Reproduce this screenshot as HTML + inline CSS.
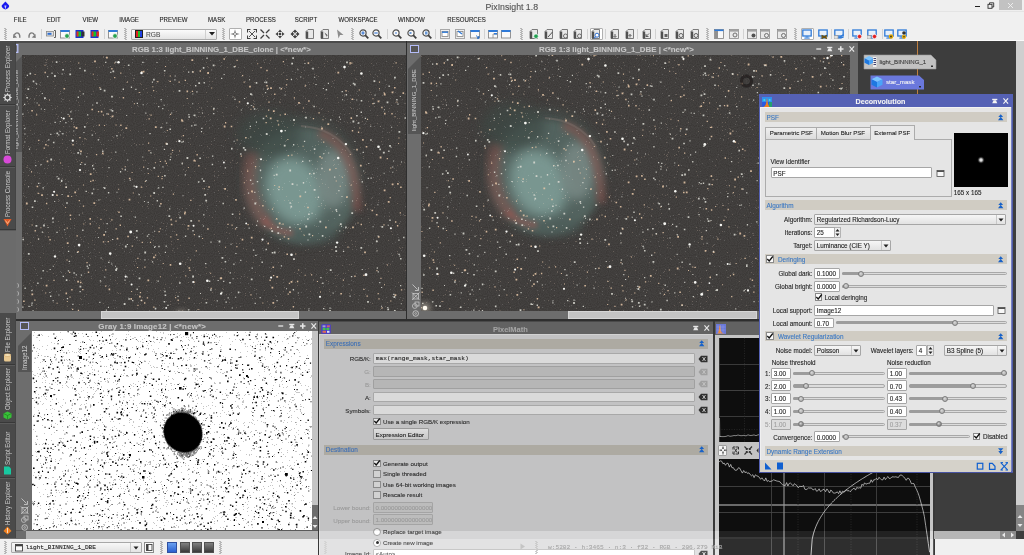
<!DOCTYPE html><html><head><meta charset="utf-8"><style>
*{margin:0;padding:0;box-sizing:border-box}
html,body{width:1024px;height:555px;overflow:hidden}
body{position:relative;background:#3d3d3d;font-family:"Liberation Sans",sans-serif}
.a{position:absolute}
.t{position:absolute;white-space:nowrap;line-height:1;-webkit-text-stroke:0.1px currentColor}
.m{font-family:"Liberation Mono",monospace}
.vt{position:absolute;writing-mode:vertical-rl;transform:rotate(180deg);white-space:nowrap;line-height:1;text-align:left}
svg{position:absolute;display:block;overflow:hidden}
.pl1{background:rgba(255,255,255,0.09)}
.pl2{background:rgba(255,255,255,0.14)}
@supports (mix-blend-mode:plus-lighter){.pl1{background:rgb(20,20,20);mix-blend-mode:plus-lighter}.pl2{background:rgb(32,32,32);mix-blend-mode:plus-lighter}}
</style></head><body><div class="a" style="left:0px;top:0px;width:1024px;height:11px;background:#efefef;"></div><div class="a" style="left:0px;top:11px;width:1024px;height:1px;background:#e4e4e4;"></div><div class="a" style="left:0px;top:12px;width:1024px;height:28px;background:#f0f0f0;"></div><div class="a" style="left:0px;top:40px;width:1024px;height:1px;background:#fcfcfc;"></div><svg style="left:1px;top:1px;" width="10" height="10" viewBox="0 0 10 10"><path d="M4.4 0.6L7.9 4.2C8.6 5.2 7.8 7.2 4.4 8.6C1 7.2 0.2 5.2 0.9 4.2Z" fill="#1a1af0"/><path d="M3.3 4.6H5.5L4.4 8.4Z" fill="#c8ccf8"/></svg><div class="t" style="left:485.5px;top:2.80px;font-size:8.75px;color:#505050;">PixInsight 1.8</div><div class="a" style="left:974.5px;top:5.5px;width:5px;height:1px;background:#202020;"></div><svg style="left:987px;top:2px;" width="8" height="7" viewBox="0 0 8 7"><rect x="1" y="2.3" width="4" height="4" fill="none" stroke="#303030" stroke-width="0.9"/><path d="M2.5 2.3V0.8H6.7V5H5" fill="none" stroke="#303030" stroke-width="0.9"/></svg><div class="a" style="left:999px;top:0px;width:23px;height:10px;background:#c2c2c2;"></div><svg style="left:1007px;top:2px;" width="7" height="7" viewBox="0 0 7 7"><path d="M1 1L6 6M6 1L1 6" stroke="#f0f0f0" stroke-width="0.9"/></svg><div class="t" style="left:13.8px;top:16.70px;font-size:6.1px;color:#262626;transform:scaleY(1.15);transform-origin:0 75%">FILE</div><div class="t" style="left:46.8px;top:16.70px;font-size:6.1px;color:#262626;transform:scaleY(1.15);transform-origin:0 75%">EDIT</div><div class="t" style="left:82.5px;top:16.70px;font-size:6.1px;color:#262626;transform:scaleY(1.15);transform-origin:0 75%">VIEW</div><div class="t" style="left:119.3px;top:16.70px;font-size:6.1px;color:#262626;transform:scaleY(1.15);transform-origin:0 75%">IMAGE</div><div class="t" style="left:159.5px;top:16.70px;font-size:6.1px;color:#262626;transform:scaleY(1.15);transform-origin:0 75%">PREVIEW</div><div class="t" style="left:208px;top:16.70px;font-size:6.1px;color:#262626;transform:scaleY(1.15);transform-origin:0 75%">MASK</div><div class="t" style="left:246px;top:16.70px;font-size:6.1px;color:#262626;transform:scaleY(1.15);transform-origin:0 75%">PROCESS</div><div class="t" style="left:294.8px;top:16.70px;font-size:6.1px;color:#262626;transform:scaleY(1.15);transform-origin:0 75%">SCRIPT</div><div class="t" style="left:338.5px;top:16.70px;font-size:6.1px;color:#262626;transform:scaleY(1.15);transform-origin:0 75%">WORKSPACE</div><div class="t" style="left:398px;top:16.70px;font-size:6.1px;color:#262626;transform:scaleY(1.15);transform-origin:0 75%">WINDOW</div><div class="t" style="left:447.3px;top:16.70px;font-size:6.1px;color:#262626;transform:scaleY(1.15);transform-origin:0 75%">RESOURCES</div><svg style="left:3.5px;top:28px;" width="3" height="12" viewBox="0 0 3 12"><rect x="0" y="0" width="2" height="1" fill="#b8b8b8"/><rect x="1" y="1" width="2" height="1" fill="#b8b8b8"/><rect x="0" y="2" width="2" height="1" fill="#b8b8b8"/><rect x="1" y="3" width="2" height="1" fill="#b8b8b8"/><rect x="0" y="4" width="2" height="1" fill="#b8b8b8"/><rect x="1" y="5" width="2" height="1" fill="#b8b8b8"/><rect x="0" y="6" width="2" height="1" fill="#b8b8b8"/><rect x="1" y="7" width="2" height="1" fill="#b8b8b8"/><rect x="0" y="8" width="2" height="1" fill="#b8b8b8"/><rect x="1" y="9" width="2" height="1" fill="#b8b8b8"/><rect x="0" y="10" width="2" height="1" fill="#b8b8b8"/><rect x="1" y="11" width="2" height="1" fill="#b8b8b8"/></svg><svg style="left:124.0px;top:28px;" width="3" height="12" viewBox="0 0 3 12"><rect x="0" y="0" width="2" height="1" fill="#b8b8b8"/><rect x="1" y="1" width="2" height="1" fill="#b8b8b8"/><rect x="0" y="2" width="2" height="1" fill="#b8b8b8"/><rect x="1" y="3" width="2" height="1" fill="#b8b8b8"/><rect x="0" y="4" width="2" height="1" fill="#b8b8b8"/><rect x="1" y="5" width="2" height="1" fill="#b8b8b8"/><rect x="0" y="6" width="2" height="1" fill="#b8b8b8"/><rect x="1" y="7" width="2" height="1" fill="#b8b8b8"/><rect x="0" y="8" width="2" height="1" fill="#b8b8b8"/><rect x="1" y="9" width="2" height="1" fill="#b8b8b8"/><rect x="0" y="10" width="2" height="1" fill="#b8b8b8"/><rect x="1" y="11" width="2" height="1" fill="#b8b8b8"/></svg><svg style="left:221.5px;top:28px;" width="3" height="12" viewBox="0 0 3 12"><rect x="0" y="0" width="2" height="1" fill="#b8b8b8"/><rect x="1" y="1" width="2" height="1" fill="#b8b8b8"/><rect x="0" y="2" width="2" height="1" fill="#b8b8b8"/><rect x="1" y="3" width="2" height="1" fill="#b8b8b8"/><rect x="0" y="4" width="2" height="1" fill="#b8b8b8"/><rect x="1" y="5" width="2" height="1" fill="#b8b8b8"/><rect x="0" y="6" width="2" height="1" fill="#b8b8b8"/><rect x="1" y="7" width="2" height="1" fill="#b8b8b8"/><rect x="0" y="8" width="2" height="1" fill="#b8b8b8"/><rect x="1" y="9" width="2" height="1" fill="#b8b8b8"/><rect x="0" y="10" width="2" height="1" fill="#b8b8b8"/><rect x="1" y="11" width="2" height="1" fill="#b8b8b8"/></svg><svg style="left:350.5px;top:28px;" width="3" height="12" viewBox="0 0 3 12"><rect x="0" y="0" width="2" height="1" fill="#b8b8b8"/><rect x="1" y="1" width="2" height="1" fill="#b8b8b8"/><rect x="0" y="2" width="2" height="1" fill="#b8b8b8"/><rect x="1" y="3" width="2" height="1" fill="#b8b8b8"/><rect x="0" y="4" width="2" height="1" fill="#b8b8b8"/><rect x="1" y="5" width="2" height="1" fill="#b8b8b8"/><rect x="0" y="6" width="2" height="1" fill="#b8b8b8"/><rect x="1" y="7" width="2" height="1" fill="#b8b8b8"/><rect x="0" y="8" width="2" height="1" fill="#b8b8b8"/><rect x="1" y="9" width="2" height="1" fill="#b8b8b8"/><rect x="0" y="10" width="2" height="1" fill="#b8b8b8"/><rect x="1" y="11" width="2" height="1" fill="#b8b8b8"/></svg><svg style="left:519.5px;top:28px;" width="3" height="12" viewBox="0 0 3 12"><rect x="0" y="0" width="2" height="1" fill="#b8b8b8"/><rect x="1" y="1" width="2" height="1" fill="#b8b8b8"/><rect x="0" y="2" width="2" height="1" fill="#b8b8b8"/><rect x="1" y="3" width="2" height="1" fill="#b8b8b8"/><rect x="0" y="4" width="2" height="1" fill="#b8b8b8"/><rect x="1" y="5" width="2" height="1" fill="#b8b8b8"/><rect x="0" y="6" width="2" height="1" fill="#b8b8b8"/><rect x="1" y="7" width="2" height="1" fill="#b8b8b8"/><rect x="0" y="8" width="2" height="1" fill="#b8b8b8"/><rect x="1" y="9" width="2" height="1" fill="#b8b8b8"/><rect x="0" y="10" width="2" height="1" fill="#b8b8b8"/><rect x="1" y="11" width="2" height="1" fill="#b8b8b8"/></svg><svg style="left:705.5px;top:28px;" width="3" height="12" viewBox="0 0 3 12"><rect x="0" y="0" width="2" height="1" fill="#b8b8b8"/><rect x="1" y="1" width="2" height="1" fill="#b8b8b8"/><rect x="0" y="2" width="2" height="1" fill="#b8b8b8"/><rect x="1" y="3" width="2" height="1" fill="#b8b8b8"/><rect x="0" y="4" width="2" height="1" fill="#b8b8b8"/><rect x="1" y="5" width="2" height="1" fill="#b8b8b8"/><rect x="0" y="6" width="2" height="1" fill="#b8b8b8"/><rect x="1" y="7" width="2" height="1" fill="#b8b8b8"/><rect x="0" y="8" width="2" height="1" fill="#b8b8b8"/><rect x="1" y="9" width="2" height="1" fill="#b8b8b8"/><rect x="0" y="10" width="2" height="1" fill="#b8b8b8"/><rect x="1" y="11" width="2" height="1" fill="#b8b8b8"/></svg><svg style="left:793.5px;top:28px;" width="3" height="12" viewBox="0 0 3 12"><rect x="0" y="0" width="2" height="1" fill="#b8b8b8"/><rect x="1" y="1" width="2" height="1" fill="#b8b8b8"/><rect x="0" y="2" width="2" height="1" fill="#b8b8b8"/><rect x="1" y="3" width="2" height="1" fill="#b8b8b8"/><rect x="0" y="4" width="2" height="1" fill="#b8b8b8"/><rect x="1" y="5" width="2" height="1" fill="#b8b8b8"/><rect x="0" y="6" width="2" height="1" fill="#b8b8b8"/><rect x="1" y="7" width="2" height="1" fill="#b8b8b8"/><rect x="0" y="8" width="2" height="1" fill="#b8b8b8"/><rect x="1" y="9" width="2" height="1" fill="#b8b8b8"/><rect x="0" y="10" width="2" height="1" fill="#b8b8b8"/><rect x="1" y="11" width="2" height="1" fill="#b8b8b8"/></svg><div class="a" style="left:40.5px;top:29px;width:1px;height:10px;background:#d2d2d2;"></div><div class="a" style="left:104px;top:29px;width:1px;height:10px;background:#d2d2d2;"></div><div class="a" style="left:387px;top:29px;width:1px;height:10px;background:#d2d2d2;"></div><div class="a" style="left:435px;top:29px;width:1px;height:10px;background:#d2d2d2;"></div><div class="a" style="left:484px;top:29px;width:1px;height:10px;background:#d2d2d2;"></div><div class="a" style="left:587px;top:29px;width:1px;height:10px;background:#d2d2d2;"></div><div class="a" style="left:605px;top:29px;width:1px;height:10px;background:#d2d2d2;"></div><div class="a" style="left:637px;top:29px;width:1px;height:10px;background:#d2d2d2;"></div><div class="a" style="left:655px;top:29px;width:1px;height:10px;background:#d2d2d2;"></div><div class="a" style="left:743px;top:29px;width:1px;height:10px;background:#d2d2d2;"></div><div class="a" style="left:831px;top:29px;width:1px;height:10px;background:#d2d2d2;"></div><div class="a" style="left:848px;top:29px;width:1px;height:10px;background:#d2d2d2;"></div><div class="a" style="left:882px;top:29px;width:1px;height:10px;background:#d2d2d2;"></div><svg style="left:12px;top:29px;" width="10" height="10" viewBox="0 0 10 10"><g transform="translate(0.5 1.2) scale(0.88)"><path d="M8.3 8.6C8.6 4.5 6.8 3 5 3C3.5 3 2.6 4 2.2 5.5" fill="none" stroke="#7a7a7a" stroke-width="1.6"/><path d="M0.6 8.8L0.9 4.3L5.2 8.2Z" fill="#7a7a7a"/></g></svg><svg style="left:27px;top:29px;" width="10" height="10" viewBox="0 0 10 10"><g transform="translate(0.5 1.2) scale(0.88)"><path d="M1.7 8.6C1.4 4.5 3.2 3 5 3C6.5 3 7.4 4 7.8 5.5" fill="none" stroke="#7a7a7a" stroke-width="1.6"/><path d="M9.4 8.8L9.1 4.3L4.8 8.2Z" fill="#7a7a7a"/></g></svg><svg style="left:46px;top:29px;" width="10" height="10" viewBox="0 0 10 10"><rect x="0.5" y="2.5" width="7" height="4.5" fill="#e0e0e0" stroke="#8a8a8a" stroke-width="0.8"/><rect x="1.5" y="3.8" width="4" height="2" fill="#2f6fd0"/><path d="M8 1.5H9.5V8.5H8" fill="none" stroke="#606060"/></svg><svg style="left:60px;top:29px;" width="10" height="10" viewBox="0 0 10 10"><rect x="0.5" y="1.5" width="9" height="7.5" fill="#fafafa" stroke="#8a8a8a" stroke-width="0.9"/><rect x="0.5" y="1" width="9" height="2" fill="#2f7ad8"/><circle cx="7" cy="7" r="2.4" fill="#2aa050" stroke="#fff" stroke-width="0.8"/></svg><svg style="left:75px;top:29px;" width="10" height="10" viewBox="0 0 10 10"><rect x="0.5" y="1" width="8" height="8" fill="#1a30d0"/><rect x="2" y="2.5" width="4" height="5" fill="#10c030"/><rect x="1.5" y="2.5" width="2" height="5" fill="#e03020"/><rect x="6.5" y="2.5" width="3" height="5" fill="#303030"/></svg><svg style="left:90px;top:29px;" width="10" height="10" viewBox="0 0 10 10"><rect x="0.5" y="1" width="8" height="8" fill="#1a30d0"/><rect x="2" y="2.5" width="4" height="5" fill="#10c030"/><rect x="1.5" y="2.5" width="2" height="5" fill="#e03020"/><rect x="6.5" y="2.5" width="2.5" height="5" fill="#e03020"/></svg><svg style="left:108px;top:29px;" width="10" height="10" viewBox="0 0 10 10"><rect x="0.5" y="1.5" width="9" height="7.5" fill="#fafafa" stroke="#8a8a8a" stroke-width="0.9"/><rect x="0.5" y="1" width="9" height="2" fill="#2f7ad8"/><circle cx="7" cy="7" r="2.4" fill="#2aa050" stroke="#fff" stroke-width="0.8"/></svg><div class="a" style="left:228.5px;top:28px;width:13px;height:12px;background:#ffffff;border:1px solid #b0b0b0;border-radius:1px"></div><svg style="left:230px;top:29px;" width="10" height="10" viewBox="0 0 10 10"><path d="M5 0.3L5.7 4.3L9.7 5L5.7 5.7L5 9.7L4.3 5.7L0.3 5L4.3 4.3Z" fill="#383838"/><circle cx="5" cy="5" r="1" fill="#fff"/></svg><svg style="left:247px;top:29px;" width="10" height="10" viewBox="0 0 10 10"><path d="M0.5 3.5V0.5H3.5M6.5 0.5H9.5V3.5M9.5 6.5V9.5H6.5M3.5 9.5H0.5V6.5" fill="none" stroke="#404040" stroke-width="1.1"/><path d="M2 2L8 8M8 2L2 8" stroke="#404040" stroke-width="0.9"/></svg><svg style="left:260px;top:29px;" width="10" height="10" viewBox="0 0 10 10"><path d="M0.5 0.5L4 4M9.5 0.5L6 4M0.5 9.5L4 6M9.5 9.5L6 6" stroke="#404040" stroke-width="1.3"/></svg><svg style="left:275px;top:29px;" width="10" height="10" viewBox="0 0 10 10"><path d="M5 0.5L7 3H3ZM5 9.5L7 7H3ZM0.5 5L3 3V7ZM9.5 5L7 3V7Z" fill="#404040"/><rect x="3.8" y="3.8" width="2.4" height="2.4" fill="#404040"/></svg><svg style="left:290px;top:29px;" width="10" height="10" viewBox="0 0 10 10"><path d="M5 0.5L7.5 3H2.5ZM5 9.5L7.5 7H2.5ZM0.5 5L3 2.5V7.5ZM9.5 5L7 2.5V7.5Z" fill="#404040"/><circle cx="5" cy="5" r="1.5" fill="#fff" stroke="#404040" stroke-width="0.8"/></svg><svg style="left:305px;top:29px;" width="10" height="10" viewBox="0 0 10 10"><path d="M1 2.5L3 0.5H8.5V9.5H1Z" fill="#e8e8e8" stroke="#6e6e6e" stroke-width="0.9"/><rect x="1" y="2.5" width="2.2" height="7" fill="#505050"/></svg><svg style="left:320px;top:29px;" width="10" height="10" viewBox="0 0 10 10"><path d="M1 2.5L3 0.5H8.5V9.5H1Z" fill="#e8e8e8" stroke="#6e6e6e" stroke-width="0.9"/><rect x="1" y="2.5" width="2.2" height="7" fill="#505050"/><path d="M4.5 3.5L8 6.5H6.5L7 8.5" fill="#505050"/></svg><svg style="left:335px;top:29px;" width="10" height="10" viewBox="0 0 10 10"><path d="M2 0.5L8.5 6H5L3.5 9.5Z" fill="#8c8c8c"/></svg><svg style="left:359px;top:29px;" width="10" height="10" viewBox="0 0 10 10"><circle cx="4" cy="4" r="3.1" fill="#fafafa" stroke="#505050" stroke-width="1.2"/><path d="M6.2 6.2L9.3 9.3" stroke="#404040" stroke-width="1.8"/><path d="M2.3 4H5.7M4 2.3V5.7" stroke="#2f6fd0" stroke-width="1.1"/></svg><svg style="left:372px;top:29px;" width="10" height="10" viewBox="0 0 10 10"><circle cx="4" cy="4" r="3.1" fill="#fafafa" stroke="#505050" stroke-width="1.2"/><path d="M6.2 6.2L9.3 9.3" stroke="#404040" stroke-width="1.8"/><path d="M2.3 4H5.7" stroke="#2f6fd0" stroke-width="1.1"/></svg><svg style="left:392px;top:29px;" width="10" height="10" viewBox="0 0 10 10"><circle cx="4" cy="4" r="3.1" fill="#fafafa" stroke="#505050" stroke-width="1.2"/><path d="M6.2 6.2L9.3 9.3" stroke="#404040" stroke-width="1.8"/><circle cx="4" cy="4" r="0.8" fill="#2f6fd0"/></svg><svg style="left:407px;top:29px;" width="10" height="10" viewBox="0 0 10 10"><circle cx="4" cy="4" r="3.1" fill="#fafafa" stroke="#505050" stroke-width="1.2"/><path d="M6.2 6.2L9.3 9.3" stroke="#404040" stroke-width="1.8"/><rect x="2.5" y="3" width="2" height="2" fill="#6a9ad8"/></svg><svg style="left:422px;top:29px;" width="10" height="10" viewBox="0 0 10 10"><circle cx="4" cy="4" r="3.1" fill="#fafafa" stroke="#505050" stroke-width="1.2"/><path d="M6.2 6.2L9.3 9.3" stroke="#404040" stroke-width="1.8"/><rect x="3" y="2.5" width="2.5" height="3" fill="#6a9ad8"/></svg><svg style="left:440px;top:29px;" width="10" height="10" viewBox="0 0 10 10"><rect x="0.5" y="0.5" width="9" height="9" fill="none" stroke="#606060" stroke-dasharray="1 1"/><rect x="2" y="2.5" width="6" height="5" fill="#fff" stroke="#808080" stroke-width="0.8"/><rect x="2" y="2.5" width="6" height="1.4" fill="#2f7ad8"/></svg><svg style="left:455px;top:29px;" width="10" height="10" viewBox="0 0 10 10"><rect x="0.5" y="0.5" width="9" height="9" fill="none" stroke="#606060" stroke-dasharray="1 1"/><rect x="2" y="2.5" width="6" height="5" fill="#fff" stroke="#808080" stroke-width="0.8"/><path d="M3 2L7 5" stroke="#2f7ad8" stroke-width="1.3"/></svg><svg style="left:470px;top:29px;" width="10" height="10" viewBox="0 0 10 10"><rect x="0.5" y="1.5" width="9" height="7.5" fill="#fafafa" stroke="#8a8a8a" stroke-width="0.9"/><rect x="0.5" y="1" width="9" height="2" fill="#2f7ad8"/><path d="M6 6.5L9 9.2M9 7V9.2H7" stroke="#2f7ad8" stroke-width="1"/></svg><svg style="left:488px;top:29px;" width="10" height="10" viewBox="0 0 10 10"><rect x="0.5" y="1.5" width="9" height="7.5" fill="#fafafa" stroke="#8a8a8a" stroke-width="0.9"/><rect x="0.5" y="1" width="9" height="2" fill="#2f7ad8"/><path d="M5 5V9M5 5H9.5" stroke="#8a8a8a" stroke-width="0.8"/><rect x="6" y="4" width="3" height="1.5" fill="#2f7ad8"/></svg><svg style="left:501px;top:29px;" width="10" height="10" viewBox="0 0 10 10"><rect x="0.5" y="1.5" width="9" height="7.5" fill="#fafafa" stroke="#8a8a8a" stroke-width="0.9"/><rect x="0.5" y="1" width="9" height="2" fill="#2f7ad8"/></svg><svg style="left:529px;top:29px;" width="10" height="10" viewBox="0 0 10 10"><path d="M1 2.5L3 0.5H8.5V9.5H1Z" fill="#e8e8e8" stroke="#6e6e6e" stroke-width="0.9"/><rect x="1" y="2.5" width="2.2" height="7" fill="#505050"/><circle cx="7" cy="7.2" r="2.3" fill="#20a050" stroke="#fff" stroke-width="0.7"/></svg><svg style="left:544px;top:29px;" width="10" height="10" viewBox="0 0 10 10"><path d="M1 2.5L3 0.5H8.5V9.5H1Z" fill="#e8e8e8" stroke="#6e6e6e" stroke-width="0.9"/><rect x="1" y="2.5" width="2.2" height="7" fill="#505050"/><path d="M4 8L8.5 3" stroke="#505050" stroke-width="1"/></svg><svg style="left:559px;top:29px;" width="10" height="10" viewBox="0 0 10 10"><path d="M1 2.5L3 0.5H8.5V9.5H1Z" fill="#e8e8e8" stroke="#6e6e6e" stroke-width="0.9"/><rect x="1" y="2.5" width="2.2" height="7" fill="#505050"/><circle cx="6.5" cy="7" r="2" fill="#e8e8e8" stroke="#606060" stroke-width="0.9"/></svg><svg style="left:573px;top:29px;" width="10" height="10" viewBox="0 0 10 10"><path d="M1 2.5L3 0.5H8.5V9.5H1Z" fill="#e8e8e8" stroke="#6e6e6e" stroke-width="0.9"/><rect x="1" y="2.5" width="2.2" height="7" fill="#505050"/><circle cx="6.5" cy="7" r="2" fill="#e8e8e8" stroke="#606060" stroke-width="0.9"/></svg><svg style="left:610px;top:29px;" width="10" height="10" viewBox="0 0 10 10"><path d="M1 2.5L3 0.5H8.5V9.5H1Z" fill="#e8e8e8" stroke="#6e6e6e" stroke-width="0.9"/><rect x="1" y="2.5" width="2.2" height="7" fill="#505050"/><path d="M5 5V8M3.5 7L5 8.5L6.5 7" stroke="#505050" stroke-width="0.9" fill="none"/></svg><svg style="left:625px;top:29px;" width="10" height="10" viewBox="0 0 10 10"><path d="M1 2.5L3 0.5H8.5V9.5H1Z" fill="#e8e8e8" stroke="#6e6e6e" stroke-width="0.9"/><rect x="1" y="2.5" width="2.2" height="7" fill="#505050"/><path d="M5 8.5V5.5M3.5 7L5 5.5L6.5 7" stroke="#505050" stroke-width="0.9" fill="none"/></svg><svg style="left:642px;top:29px;" width="10" height="10" viewBox="0 0 10 10"><path d="M1 2.5L3 0.5H8.5V9.5H1Z" fill="#e8e8e8" stroke="#6e6e6e" stroke-width="0.9"/><rect x="1" y="2.5" width="2.2" height="7" fill="#505050"/><path d="M4 7.5L7 4.5M4 5V7.5H6.5" stroke="#505050" stroke-width="0.9" fill="none"/></svg><svg style="left:660px;top:29px;" width="10" height="10" viewBox="0 0 10 10"><path d="M1 2.5L3 0.5H8.5V9.5H1Z" fill="#e8e8e8" stroke="#6e6e6e" stroke-width="0.9"/><rect x="1" y="2.5" width="2.2" height="7" fill="#505050"/><rect x="4.5" y="5" width="3" height="3" fill="#606060"/></svg><svg style="left:675px;top:29px;" width="10" height="10" viewBox="0 0 10 10"><path d="M1 2.5L3 0.5H8.5V9.5H1Z" fill="#e8e8e8" stroke="#6e6e6e" stroke-width="0.9"/><rect x="1" y="2.5" width="2.2" height="7" fill="#505050"/><circle cx="6" cy="6.5" r="2" fill="none" stroke="#606060" stroke-width="1"/></svg><svg style="left:690px;top:29px;" width="10" height="10" viewBox="0 0 10 10"><path d="M1 2.5L3 0.5H8.5V9.5H1Z" fill="#e8e8e8" stroke="#6e6e6e" stroke-width="0.9"/><rect x="1" y="2.5" width="2.2" height="7" fill="#505050"/><circle cx="6" cy="6.5" r="2" fill="none" stroke="#606060" stroke-width="1"/></svg><svg style="left:714px;top:29px;" width="10" height="10" viewBox="0 0 10 10"><rect x="0.5" y="0.5" width="9" height="9" fill="#f8f8f8" stroke="#808080" stroke-width="0.8"/><rect x="0.5" y="0.5" width="9" height="1.6" fill="#2f7ad8"/><rect x="1" y="2" width="3" height="7.5" fill="#909090"/></svg><svg style="left:729px;top:29px;" width="10" height="10" viewBox="0 0 10 10"><rect x="0.5" y="0.5" width="9" height="9" fill="#e8e8e8" stroke="#8a8a8a" stroke-width="0.8"/><rect x="1" y="1" width="8" height="1.6" fill="#a0a0a0"/><circle cx="6" cy="6" r="2" fill="none" stroke="#707070"/></svg><svg style="left:747px;top:29px;" width="10" height="10" viewBox="0 0 10 10"><rect x="0.5" y="0.5" width="9" height="9" fill="#e8e8e8" stroke="#8a8a8a" stroke-width="0.8"/><rect x="1" y="1" width="8" height="1.6" fill="#a0a0a0"/><circle cx="6.5" cy="6.5" r="2" fill="#505050"/></svg><svg style="left:760px;top:29px;" width="10" height="10" viewBox="0 0 10 10"><rect x="0.5" y="0.5" width="9" height="9" fill="#e8e8e8" stroke="#8a8a8a" stroke-width="0.8"/><rect x="1" y="1" width="8" height="1.6" fill="#a0a0a0"/><circle cx="6.5" cy="6.5" r="2" fill="none" stroke="#707070"/></svg><svg style="left:777px;top:29px;" width="10" height="10" viewBox="0 0 10 10"><rect x="0.5" y="0.5" width="9" height="9" fill="#e8e8e8" stroke="#8a8a8a" stroke-width="0.8"/><rect x="1" y="1" width="8" height="1.6" fill="#a0a0a0"/><circle cx="6.5" cy="6.5" r="2" fill="none" stroke="#707070"/></svg><div class="a" style="left:800.5px;top:28px;width:13px;height:12px;background:#ffffff;border:1px solid #b0b0b0;border-radius:1px"></div><svg style="left:802px;top:29px;" width="10" height="10" viewBox="0 0 10 10"><rect x="0.8" y="1" width="8.4" height="6" fill="#e8f0fa" stroke="#2f7ad8" stroke-width="1.3"/><rect x="3.5" y="7.5" width="3" height="1" fill="#2f7ad8"/><rect x="2.3" y="8.6" width="5.4" height="1" fill="#2f7ad8"/></svg><svg style="left:818px;top:29px;" width="10" height="10" viewBox="0 0 10 10"><rect x="0.8" y="1" width="8.4" height="6" fill="#e8f0fa" stroke="#2f7ad8" stroke-width="1.3"/><rect x="3.5" y="7.5" width="3" height="1" fill="#2f7ad8"/><rect x="2.3" y="8.6" width="5.4" height="1" fill="#2f7ad8"/><path d="M3.5 6.5L9 9.5M9 6.5L3.5 9.5" stroke="#6a5010" stroke-width="1.5"/></svg><svg style="left:834px;top:29px;" width="10" height="10" viewBox="0 0 10 10"><rect x="0.8" y="1" width="8.4" height="6" fill="#e8f0fa" stroke="#2f7ad8" stroke-width="1.3"/><rect x="3.5" y="7.5" width="3" height="1" fill="#2f7ad8"/><rect x="2.3" y="8.6" width="5.4" height="1" fill="#2f7ad8"/><rect x="0" y="6.5" width="4" height="3.5" fill="#e0e0e0" stroke="#909090" stroke-width="0.6"/><path d="M9.5 5.5L5.5 8.5H9.5" fill="none" stroke="#2f7ad8" stroke-width="1.1"/></svg><svg style="left:852px;top:29px;" width="10" height="10" viewBox="0 0 10 10"><rect x="0.8" y="1" width="8.4" height="6" fill="#e8f0fa" stroke="#2f7ad8" stroke-width="1.3"/><rect x="3.5" y="7.5" width="3" height="1" fill="#2f7ad8"/><rect x="2.3" y="8.6" width="5.4" height="1" fill="#2f7ad8"/><circle cx="7.5" cy="7.5" r="2.2" fill="#e02020" stroke="#fff" stroke-width="0.8"/></svg><svg style="left:867px;top:29px;" width="10" height="10" viewBox="0 0 10 10"><rect x="0.8" y="1" width="8.4" height="6" fill="#e8f0fa" stroke="#2f7ad8" stroke-width="1.3"/><rect x="3.5" y="7.5" width="3" height="1" fill="#2f7ad8"/><rect x="2.3" y="8.6" width="5.4" height="1" fill="#2f7ad8"/><rect x="0" y="6.5" width="4" height="3.5" fill="#e0e0e0" stroke="#909090" stroke-width="0.6"/><circle cx="7.5" cy="7.5" r="2.2" fill="#e02020" stroke="#fff" stroke-width="0.8"/></svg><svg style="left:884px;top:29px;" width="10" height="10" viewBox="0 0 10 10"><rect x="0.8" y="1" width="8.4" height="6" fill="#e8f0fa" stroke="#2f7ad8" stroke-width="1.3"/><rect x="3.5" y="7.5" width="3" height="1" fill="#2f7ad8"/><rect x="2.3" y="8.6" width="5.4" height="1" fill="#2f7ad8"/><circle cx="7" cy="7.5" r="2.3" fill="#f0b000"/><circle cx="7" cy="7.5" r="0.9" fill="#303030"/></svg><svg style="left:897px;top:29px;" width="10" height="10" viewBox="0 0 10 10"><rect x="0.8" y="1" width="8.4" height="6" fill="#e8f0fa" stroke="#2f7ad8" stroke-width="1.3"/><rect x="3.5" y="7.5" width="3" height="1" fill="#2f7ad8"/><rect x="2.3" y="8.6" width="5.4" height="1" fill="#2f7ad8"/><circle cx="7" cy="4" r="1.8" fill="#303030"/><circle cx="7" cy="7.8" r="2.1" fill="#f0b000"/><circle cx="7" cy="7.8" r="0.8" fill="#303030"/></svg><div class="a" style="left:589.5px;top:28px;width:13px;height:12px;background:#ffffff;border:1px solid #b0b0b0;border-radius:1px"></div><svg style="left:591px;top:29px;" width="10" height="10" viewBox="0 0 10 10"><path d="M1 2.5L3 0.5H8.5V9.5H1Z" fill="#e8e8e8" stroke="#6e6e6e" stroke-width="0.9"/><rect x="1" y="2.5" width="2.2" height="7" fill="#505050"/><circle cx="6" cy="6.2" r="2" fill="#fff" stroke="#2f6fd0" stroke-width="1"/><path d="M4.5 7.8L3 9.3" stroke="#2f6fd0" stroke-width="1.1"/></svg><div class="a" style="left:131px;top:28.5px;width:86px;height:11px;background:linear-gradient(#fbfbfb,#e4e4e4);border:1px solid #acacac;border-radius:1px"></div><div class="a" style="left:205px;top:29.5px;width:1px;height:9px;background:#d0d0d0;"></div><svg style="left:209px;top:32px;" width="6" height="4" viewBox="0 0 6 4"><path d="M0 0H6L3 3.5Z" fill="#202020"/></svg><svg style="left:135px;top:30px;" width="8" height="8" viewBox="0 0 8 8"><rect x="0" y="0" width="8" height="8" fill="#202020"/><rect x="1" y="1" width="2" height="6" fill="#e02020"/><rect x="3" y="1" width="2" height="6" fill="#20c020"/><rect x="5" y="1" width="2" height="6" fill="#2040e0"/></svg><div class="t" style="left:146px;top:31.60px;font-size:6.6px;color:#505050;">RGB</div><div class="a" style="left:16px;top:531px;width:1000px;height:8px;background:#b4b4b4;"></div><div class="a" style="left:0px;top:539px;width:1024px;height:16px;background:#f0f0f0;"></div><div class="a" style="left:1016px;top:41px;width:8px;height:464px;background:#cfcfcf;"></div><div class="a" style="left:1016px;top:505px;width:8px;height:26px;background:#858585;"></div><div class="a" style="left:1000px;top:531px;width:16px;height:8px;background:#8a8a8a;"></div><div class="a" style="left:0px;top:41px;width:16px;height:498px;background:#6b6b6b;"></div><div class="a" style="left:0px;top:41px;width:16px;height:188px;background:#4a4a4a;"></div><div class="a" style="left:0px;top:313px;width:16px;height:225px;background:#4a4a4a;"></div><div class="a" style="left:0px;top:104px;width:16px;height:1px;background:#383838;"></div><div class="a" style="left:0px;top:105px;width:16px;height:1px;background:#5a5a5a;"></div><div class="a" style="left:0px;top:166px;width:16px;height:1px;background:#383838;"></div><div class="a" style="left:0px;top:167px;width:16px;height:1px;background:#5a5a5a;"></div><div class="a" style="left:0px;top:229px;width:16px;height:1px;background:#383838;"></div><div class="a" style="left:0px;top:230px;width:16px;height:1px;background:#5a5a5a;"></div><div class="a" style="left:0px;top:364px;width:16px;height:1px;background:#383838;"></div><div class="a" style="left:0px;top:365px;width:16px;height:1px;background:#5a5a5a;"></div><div class="a" style="left:0px;top:422px;width:16px;height:1px;background:#383838;"></div><div class="a" style="left:0px;top:423px;width:16px;height:1px;background:#5a5a5a;"></div><div class="a" style="left:0px;top:477px;width:16px;height:1px;background:#383838;"></div><div class="a" style="left:0px;top:478px;width:16px;height:1px;background:#5a5a5a;"></div><div class="a" style="left:15px;top:41px;width:1px;height:188px;background:#444444;"></div><div class="a" style="left:15px;top:313px;width:1px;height:225px;background:#444444;"></div><div class="vt" style="left:5.0px;top:-108.5px;height:200px;font-size:6.1px;color:#cacaca;transform:rotate(180deg) scaleX(1.15)">Process Explorer</div><svg style="left:3px;top:92.5px;" width="9" height="9" viewBox="0 0 9 9"><circle cx="4.5" cy="4.5" r="2.6" fill="none" stroke="#e0e0e0" stroke-width="1.3"/><path d="M4.5 0.3V2M4.5 7V8.7M0.3 4.5H2M7 4.5H8.7M1.5 1.5L2.7 2.7M6.3 6.3L7.5 7.5M7.5 1.5L6.3 2.7M1.5 7.5L2.7 6.3" stroke="#e0e0e0" stroke-width="1.1"/></svg><div class="vt" style="left:5.0px;top:-46.5px;height:200px;font-size:6.1px;color:#cacaca;transform:rotate(180deg) scaleX(1.15)">Format Explorer</div><svg style="left:3px;top:154.5px;" width="9" height="9" viewBox="0 0 9 9"><circle cx="4.5" cy="4.5" r="4" fill="#d84ad8"/></svg><div class="vt" style="left:5.0px;top:16.5px;height:200px;font-size:6.1px;color:#cacaca;transform:rotate(180deg) scaleX(1.15)">Process Console</div><svg style="left:3px;top:217.5px;" width="9" height="9" viewBox="0 0 9 9"><path d="M0.5 1H8.5L4.5 8.5Z" fill="#e05a28"/><path d="M2.5 2.5L4.5 5.5L6.5 2.5" fill="none" stroke="#ffd0a0" stroke-width="0.8"/></svg><div class="vt" style="left:5.0px;top:151.5px;height:200px;font-size:6.1px;color:#cacaca;transform:rotate(180deg) scaleX(1.15)">File Explorer</div><svg style="left:3px;top:352.5px;" width="9" height="9" viewBox="0 0 9 9"><rect x="1" y="1.5" width="7" height="7" rx="1.5" fill="#e8c890"/><ellipse cx="4.5" cy="2" rx="3.5" ry="1.3" fill="#f8e8c0" stroke="#c09050" stroke-width="0.5"/></svg><div class="vt" style="left:5.0px;top:209.5px;height:200px;font-size:6.1px;color:#cacaca;transform:rotate(180deg) scaleX(1.15)">Object Explorer</div><svg style="left:3px;top:410.5px;" width="9" height="9" viewBox="0 0 9 9"><path d="M4.5 0.5L8.5 2.5V6.5L4.5 8.5L0.5 6.5V2.5Z" fill="#38c038"/><path d="M0.5 2.5L4.5 4.5L8.5 2.5M4.5 4.5V8.5" fill="none" stroke="#208020" stroke-width="0.7"/></svg><div class="vt" style="left:5.0px;top:264.5px;height:200px;font-size:6.1px;color:#cacaca;transform:rotate(180deg) scaleX(1.15)">Script Editor</div><svg style="left:3px;top:465.5px;" width="9" height="9" viewBox="0 0 9 9"><path d="M1 0.5H6L8 2.5V8.5H1Z" fill="#18c8a0"/></svg><div class="vt" style="left:5.0px;top:324.5px;height:200px;font-size:6.1px;color:#cacaca;transform:rotate(180deg) scaleX(1.15)">History Explorer</div><svg style="left:3px;top:525.5px;" width="9" height="9" viewBox="0 0 9 9"><path d="M4.5 0.5L8.5 5L4.5 8.5L0.5 5Z" fill="#f08020"/><path d="M4.5 2V7" stroke="#fff" stroke-width="0.7"/></svg><svg width="0" height="0" style="position:absolute"><defs>
<filter id="bl6" x="-50%" y="-50%" width="200%" height="200%"><feGaussianBlur stdDeviation="6"/></filter>
<filter id="bl4" x="-50%" y="-50%" width="200%" height="200%"><feGaussianBlur stdDeviation="4"/></filter>
<filter id="bl5" x="-50%" y="-50%" width="200%" height="200%"><feGaussianBlur stdDeviation="5"/></filter>
<filter id="bl25" x="-50%" y="-50%" width="200%" height="200%"><feGaussianBlur stdDeviation="2.5"/></filter>
<filter id="bl2" x="-50%" y="-50%" width="200%" height="200%"><feGaussianBlur stdDeviation="2"/></filter>
<filter id="bl3" x="-50%" y="-50%" width="200%" height="200%"><feGaussianBlur stdDeviation="3"/></filter>
<filter id="bl10" x="-50%" y="-50%" width="200%" height="200%"><feGaussianBlur stdDeviation="10"/></filter>
<filter id="bl05" x="-50%" y="-50%" width="200%" height="200%"><feGaussianBlur stdDeviation="0.5"/></filter>
<filter id="bl1" x="-50%" y="-50%" width="200%" height="200%"><feGaussianBlur stdDeviation="0.6"/></filter>
<filter id="noise" x="0" y="0" width="100%" height="100%"><feTurbulence type="fractalNoise" baseFrequency="0.9" numOctaves="1" seed="3"/><feColorMatrix type="matrix" values="0 0 0 0 0.2  0 0 0 0 0.2  0 0 0 0 0.2  0 0 0 0.35 0"/></filter>
</defs><g id="sky"><rect x="0" y="0" width="700" height="400" fill="#34312f"/><rect x="0" y="0" width="700" height="400" filter="url(#noise)"/><g id="neb" transform="translate(1 -3)">
<ellipse cx="301" cy="184" rx="60" ry="64" fill="#46524f" opacity="0.6" filter="url(#bl4)"/>
<ellipse cx="302" cy="188" rx="55" ry="57" fill="#53645f" filter="url(#bl3)"/>
<ellipse cx="268" cy="138" rx="32" ry="24" fill="#3e4845" opacity="0.7" filter="url(#bl6)"/>
<ellipse cx="294" cy="194" rx="28" ry="35" fill="#7e9c96" opacity="0.9" filter="url(#bl6)" transform="rotate(-25 294 194)"/>
<ellipse cx="332" cy="182" rx="17" ry="29" fill="#7c8c88" opacity="0.8" filter="url(#bl5)"/>
<ellipse cx="314" cy="238" rx="24" ry="9" fill="#4a5855" opacity="0.5" filter="url(#bl4)"/>
<path d="M252 156 Q240 200 268 228" fill="none" stroke="#8e524e" stroke-width="12" opacity="0.55" filter="url(#bl4)"/>
<path d="M262 222 Q275 236 292 236" fill="none" stroke="#9c5852" stroke-width="6" opacity="0.6" filter="url(#bl25)"/>
<path d="M318 136 Q356 148 356 214" fill="none" stroke="#8e524e" stroke-width="9" opacity="0.55" filter="url(#bl3)"/>
<path d="M300 129 Q334 131 351 158" fill="none" stroke="#8a7a74" stroke-width="1.8" opacity="0.35" filter="url(#bl1)"/>
</g><g id="stars">
<g filter="url(#bl05)">
<path d="M265 59h1v1h-1zM504 135h1v1h-1zM237 107h1v1h-1zM353 99h1v1h-1zM95 170h1v1h-1zM350 102h1v1h-1zM345 150h1v1h-1zM582 80h1v1h-1zM594 165h1v1h-1zM316 95h1v1h-1zM442 106h1v1h-1zM221 62h1v1h-1zM220 311h1v1h-1zM594 253h1v1h-1zM24 304h1v1h-1zM531 260h1v1h-1zM126 82h1v1h-1zM264 290h1v1h-1zM360 250h1v1h-1zM158 194h1v1h-1zM436 274h1v1h-1zM493 117h1v1h-1zM532 113h1v1h-1zM490 203h1v1h-1zM131 211h1v1h-1zM325 309h1v1h-1zM46 99h1v1h-1zM596 276h1v1h-1zM110 116h1v1h-1zM337 97h1v1h-1zM211 69h1v1h-1zM438 77h1v1h-1zM603 299h1v1h-1zM483 260h1v1h-1zM237 235h1v1h-1zM467 183h1v1h-1zM58 221h1v1h-1zM212 217h1v1h-1zM268 307h1v1h-1zM140 259h1v1h-1zM430 203h1v1h-1zM69 100h1v1h-1zM587 117h1v1h-1zM118 132h1v1h-1zM336 193h1v1h-1zM24 57h1v1h-1zM312 105h1v1h-1zM377 267h1v1h-1zM78 189h1v1h-1zM259 265h1v1h-1zM580 166h1v1h-1zM164 288h1v1h-1zM38 143h1v1h-1zM253 103h1v1h-1zM419 193h1v1h-1zM167 165h1v1h-1zM426 142h1v1h-1zM62 178h1v1h-1zM136 220h1v1h-1zM140 92h1v1h-1zM544 143h1v1h-1zM193 198h1v1h-1zM427 233h1v1h-1zM488 125h1v1h-1zM271 152h1v1h-1zM324 208h1v1h-1zM390 74h1v1h-1zM239 243h1v1h-1zM43 253h1v1h-1zM423 162h1v1h-1zM284 126h1v1h-1zM453 183h1v1h-1zM177 64h1v1h-1zM224 299h1v1h-1zM417 221h1v1h-1zM567 64h1v1h-1zM374 106h1v1h-1zM254 104h1v1h-1zM226 294h1v1h-1zM446 279h1v1h-1zM66 135h1v1h-1zM480 67h1v1h-1zM133 78h1v1h-1zM499 117h1v1h-1zM270 60h1v1h-1zM88 192h1v1h-1zM484 146h1v1h-1zM208 67h1v1h-1zM80 95h1v1h-1zM142 206h1v1h-1zM232 314h1v1h-1zM188 282h1v1h-1zM76 195h1v1h-1zM343 230h1v1h-1zM262 194h1v1h-1zM476 96h1v1h-1zM332 211h1v1h-1zM479 99h1v1h-1zM264 62h1v1h-1zM409 285h1v1h-1zM228 271h1v1h-1zM406 60h1v1h-1zM297 68h1v1h-1zM205 267h1v1h-1zM95 205h1v1h-1zM55 85h1v1h-1zM578 81h1v1h-1zM124 304h1v1h-1zM202 113h1v1h-1zM78 188h1v1h-1zM56 114h1v1h-1zM152 253h1v1h-1zM117 211h1v1h-1zM163 318h1v1h-1zM601 300h1v1h-1zM548 202h1v1h-1zM566 225h1v1h-1zM115 249h1v1h-1zM518 60h1v1h-1zM136 263h1v1h-1zM471 204h1v1h-1zM93 126h1v1h-1zM160 315h1v1h-1zM154 154h1v1h-1zM424 231h1v1h-1zM350 228h1v1h-1zM527 297h1v1h-1zM85 64h1v1h-1zM556 296h1v1h-1zM237 162h1v1h-1zM422 167h1v1h-1zM87 122h1v1h-1zM199 205h1v1h-1zM122 248h1v1h-1zM588 158h1v1h-1zM355 224h1v1h-1zM488 222h1v1h-1zM324 246h1v1h-1zM36 304h1v1h-1zM547 239h1v1h-1zM140 221h1v1h-1zM38 161h1v1h-1zM148 204h1v1h-1zM168 80h1v1h-1zM486 122h1v1h-1zM349 60h1v1h-1zM351 264h1v1h-1zM480 143h1v1h-1zM97 217h1v1h-1zM201 131h1v1h-1zM145 160h1v1h-1zM420 162h1v1h-1zM400 248h1v1h-1zM495 207h1v1h-1zM600 189h1v1h-1zM336 230h1v1h-1zM589 241h1v1h-1zM557 98h1v1h-1zM268 242h1v1h-1zM450 275h1v1h-1zM178 139h1v1h-1zM263 160h1v1h-1zM76 159h1v1h-1zM397 251h1v1h-1zM156 220h1v1h-1zM461 97h1v1h-1zM30 98h1v1h-1zM418 297h1v1h-1zM248 138h1v1h-1zM388 139h1v1h-1zM45 121h1v1h-1zM373 177h1v1h-1zM225 160h1v1h-1zM102 259h1v1h-1zM240 238h1v1h-1zM354 294h1v1h-1zM487 91h1v1h-1zM286 59h1v1h-1zM463 117h1v1h-1zM592 116h1v1h-1zM319 186h1v1h-1zM505 213h1v1h-1zM537 140h1v1h-1zM79 105h1v1h-1zM49 243h1v1h-1zM423 255h1v1h-1zM478 89h1v1h-1zM59 230h1v1h-1zM23 145h1v1h-1zM365 228h1v1h-1zM382 307h1v1h-1zM591 138h1v1h-1zM206 62h1v1h-1zM93 172h1v1h-1zM397 118h1v1h-1zM80 237h1v1h-1zM415 188h1v1h-1zM104 108h1v1h-1zM179 281h1v1h-1zM563 68h1v1h-1zM569 297h1v1h-1zM485 118h1v1h-1zM587 269h1v1h-1zM103 65h1v1h-1zM243 209h1v1h-1zM36 308h1v1h-1zM415 192h1v1h-1zM309 84h1v1h-1zM459 252h1v1h-1zM35 269h1v1h-1zM229 302h1v1h-1zM222 112h1v1h-1zM136 144h1v1h-1zM63 99h1v1h-1zM298 202h1v1h-1zM348 91h1v1h-1zM36 95h1v1h-1zM547 92h1v1h-1zM421 203h1v1h-1zM372 303h1v1h-1zM171 241h1v1h-1zM324 153h1v1h-1zM256 109h1v1h-1zM81 299h1v1h-1zM396 101h1v1h-1zM491 105h1v1h-1zM409 211h1v1h-1zM487 165h1v1h-1zM580 246h1v1h-1zM284 88h1v1h-1zM173 91h1v1h-1zM326 269h1v1h-1zM455 224h1v1h-1zM271 130h1v1h-1zM491 233h1v1h-1zM410 203h1v1h-1zM484 211h1v1h-1zM176 155h1v1h-1zM203 133h1v1h-1zM547 244h1v1h-1zM380 175h1v1h-1zM305 84h1v1h-1zM299 211h1v1h-1zM227 190h1v1h-1zM606 297h1v1h-1zM67 306h1v1h-1zM486 270h1v1h-1zM492 111h1v1h-1zM99 225h1v1h-1zM505 83h1v1h-1zM30 306h1v1h-1zM553 125h1v1h-1zM506 135h1v1h-1zM513 59h1v1h-1zM377 115h1v1h-1zM393 63h1v1h-1zM400 82h1v1h-1zM281 74h1v1h-1zM246 97h1v1h-1zM214 180h1v1h-1zM407 223h1v1h-1zM328 281h1v1h-1zM262 94h1v1h-1zM422 150h1v1h-1zM568 159h1v1h-1zM30 147h1v1h-1zM582 182h1v1h-1zM503 153h1v1h-1zM377 76h1v1h-1zM140 83h1v1h-1zM257 141h1v1h-1zM348 227h1v1h-1zM162 127h1v1h-1zM36 88h1v1h-1zM245 293h1v1h-1zM132 164h1v1h-1zM29 211h1v1h-1zM268 143h1v1h-1zM250 128h1v1h-1zM260 105h1v1h-1zM438 302h1v1h-1zM552 153h1v1h-1zM29 259h1v1h-1zM292 200h1v1h-1zM405 270h1v1h-1zM324 171h1v1h-1zM99 67h1v1h-1zM119 97h1v1h-1zM571 206h1v1h-1zM38 140h1v1h-1zM263 276h1v1h-1zM263 200h1v1h-1zM176 141h1v1h-1zM69 263h1v1h-1zM308 249h1v1h-1zM356 79h1v1h-1zM179 141h1v1h-1zM479 147h1v1h-1zM586 266h1v1h-1zM425 196h1v1h-1zM426 145h1v1h-1zM82 283h1v1h-1zM290 309h1v1h-1zM449 208h1v1h-1zM271 237h1v1h-1zM164 149h1v1h-1zM209 272h1v1h-1zM577 82h1v1h-1zM36 149h1v1h-1zM421 172h1v1h-1zM466 312h1v1h-1zM411 232h1v1h-1zM106 210h1v1h-1zM389 108h1v1h-1zM37 235h1v1h-1zM602 227h1v1h-1zM139 286h1v1h-1zM207 146h1v1h-1zM497 266h1v1h-1zM566 290h1v1h-1zM23 116h1v1h-1zM362 117h1v1h-1zM519 250h1v1h-1zM464 305h1v1h-1zM435 310h1v1h-1zM294 92h1v1h-1zM324 306h1v1h-1zM381 141h1v1h-1zM80 91h1v1h-1zM94 244h1v1h-1zM214 171h1v1h-1zM592 144h1v1h-1zM404 148h1v1h-1zM247 169h1v1h-1zM282 87h1v1h-1zM397 203h1v1h-1zM87 313h1v1h-1zM598 129h1v1h-1zM221 262h1v1h-1zM318 206h1v1h-1zM468 254h1v1h-1zM177 185h1v1h-1zM495 289h1v1h-1zM528 267h1v1h-1zM406 63h1v1h-1zM236 243h1v1h-1zM164 73h1v1h-1zM369 259h1v1h-1zM604 248h1v1h-1zM284 64h1v1h-1zM419 292h1v1h-1zM325 205h1v1h-1zM76 141h1v1h-1zM368 268h1v1h-1zM212 276h1v1h-1zM366 203h1v1h-1zM139 240h1v1h-1zM102 167h1v1h-1zM540 285h1v1h-1zM574 107h1v1h-1zM550 180h1v1h-1zM118 293h1v1h-1zM577 313h1v1h-1zM231 115h1v1h-1zM562 244h1v1h-1zM562 249h1v1h-1zM597 249h1v1h-1zM501 300h1v1h-1zM273 299h1v1h-1zM264 310h1v1h-1zM339 225h1v1h-1zM28 146h1v1h-1zM183 59h1v1h-1zM205 124h1v1h-1zM86 123h1v1h-1zM524 113h1v1h-1zM431 318h1v1h-1zM27 244h1v1h-1zM100 105h1v1h-1zM202 298h1v1h-1zM534 80h1v1h-1zM483 78h1v1h-1zM231 320h1v1h-1zM536 85h1v1h-1zM353 167h1v1h-1zM416 283h1v1h-1zM348 302h1v1h-1zM545 99h1v1h-1zM55 108h1v1h-1zM319 239h1v1h-1zM521 249h1v1h-1zM404 215h1v1h-1zM404 162h1v1h-1zM409 277h1v1h-1zM522 246h1v1h-1zM417 75h1v1h-1zM214 176h1v1h-1zM201 108h1v1h-1zM241 276h1v1h-1zM178 303h1v1h-1zM26 167h1v1h-1zM443 255h1v1h-1zM29 86h1v1h-1zM63 205h1v1h-1zM77 161h1v1h-1zM187 83h1v1h-1zM241 171h1v1h-1zM360 147h1v1h-1zM62 143h1v1h-1zM427 57h1v1h-1zM327 61h1v1h-1zM527 108h1v1h-1zM334 80h1v1h-1zM342 265h1v1h-1zM556 264h1v1h-1zM544 58h1v1h-1zM493 69h1v1h-1zM530 319h1v1h-1zM441 216h1v1h-1zM450 79h1v1h-1zM526 79h1v1h-1zM161 127h1v1h-1zM424 160h1v1h-1zM247 189h1v1h-1zM462 278h1v1h-1zM516 131h1v1h-1zM53 81h1v1h-1zM89 253h1v1h-1zM71 256h1v1h-1zM23 237h1v1h-1zM166 226h1v1h-1zM466 229h1v1h-1zM65 61h1v1h-1zM245 295h1v1h-1zM293 125h1v1h-1zM297 273h1v1h-1zM143 89h1v1h-1zM558 168h1v1h-1zM281 138h1v1h-1zM165 284h1v1h-1zM491 123h1v1h-1zM445 299h1v1h-1zM266 315h1v1h-1zM75 277h1v1h-1zM519 123h1v1h-1zM184 128h1v1h-1zM102 270h1v1h-1zM430 264h1v1h-1zM397 125h1v1h-1zM73 124h1v1h-1zM482 61h1v1h-1zM334 141h1v1h-1zM190 144h1v1h-1zM368 101h1v1h-1zM115 280h1v1h-1zM463 151h1v1h-1zM167 210h1v1h-1zM567 264h1v1h-1zM281 224h1v1h-1zM232 243h1v1h-1zM324 63h1v1h-1zM416 286h1v1h-1zM305 98h1v1h-1zM199 107h1v1h-1zM513 250h1v1h-1zM196 136h1v1h-1zM96 172h1v1h-1zM592 256h1v1h-1zM568 76h1v1h-1zM563 297h1v1h-1zM496 90h1v1h-1zM529 314h1v1h-1zM454 192h1v1h-1zM222 288h1v1h-1zM372 141h1v1h-1zM70 61h1v1h-1zM432 134h1v1h-1zM99 137h1v1h-1zM292 280h1v1h-1zM299 90h1v1h-1zM506 234h1v1h-1zM341 293h1v1h-1zM259 158h1v1h-1zM54 240h1v1h-1zM385 306h1v1h-1zM27 165h1v1h-1zM277 166h1v1h-1zM47 271h1v1h-1zM47 225h1v1h-1zM205 168h1v1h-1zM511 110h1v1h-1zM321 126h1v1h-1zM378 200h1v1h-1zM412 81h1v1h-1zM391 231h1v1h-1zM62 312h1v1h-1zM519 265h1v1h-1zM481 188h1v1h-1zM557 97h1v1h-1zM456 314h1v1h-1zM59 227h1v1h-1zM590 93h1v1h-1zM349 293h1v1h-1zM176 111h1v1h-1zM441 266h1v1h-1zM572 228h1v1h-1zM53 273h1v1h-1zM189 205h1v1h-1zM443 314h1v1h-1zM344 94h1v1h-1zM321 203h1v1h-1zM461 106h1v1h-1zM344 69h1v1h-1zM597 62h1v1h-1zM338 102h1v1h-1zM182 162h1v1h-1zM170 125h1v1h-1zM202 188h1v1h-1zM581 111h1v1h-1zM123 67h1v1h-1zM557 263h1v1h-1zM507 95h1v1h-1zM280 233h1v1h-1zM332 249h1v1h-1zM135 294h1v1h-1zM368 218h1v1h-1zM364 173h1v1h-1zM29 99h1v1h-1zM303 78h1v1h-1zM369 106h1v1h-1zM422 163h1v1h-1zM406 125h1v1h-1zM95 231h1v1h-1zM504 112h1v1h-1zM43 285h1v1h-1zM462 258h1v1h-1zM484 166h1v1h-1zM577 269h1v1h-1zM463 304h1v1h-1zM552 205h1v1h-1zM55 212h1v1h-1zM311 60h1v1h-1zM206 273h1v1h-1zM387 302h1v1h-1zM463 105h1v1h-1zM439 68h1v1h-1zM530 134h1v1h-1zM589 69h1v1h-1zM456 83h1v1h-1zM526 272h1v1h-1zM321 205h1v1h-1zM150 152h1v1h-1zM109 160h1v1h-1zM103 223h1v1h-1zM310 150h1v1h-1zM224 307h1v1h-1zM576 315h1v1h-1zM234 78h1v1h-1zM117 283h1v1h-1zM227 95h1v1h-1zM580 115h1v1h-1zM349 165h1v1h-1zM103 154h1v1h-1zM482 199h1v1h-1zM523 60h1v1h-1zM85 170h1v1h-1zM397 165h1v1h-1zM183 271h1v1h-1zM520 227h1v1h-1zM99 252h1v1h-1zM377 250h1v1h-1zM452 205h1v1h-1zM247 277h1v1h-1zM562 307h1v1h-1zM199 112h1v1h-1zM134 236h1v1h-1zM585 119h1v1h-1zM284 200h1v1h-1zM265 201h1v1h-1zM239 211h1v1h-1zM593 258h1v1h-1zM584 167h1v1h-1zM109 109h1v1h-1zM157 259h1v1h-1zM152 204h1v1h-1zM564 167h1v1h-1zM160 290h1v1h-1zM594 74h1v1h-1zM502 313h1v1h-1zM195 151h1v1h-1zM134 113h1v1h-1zM471 173h1v1h-1zM203 152h1v1h-1zM552 319h1v1h-1zM209 127h1v1h-1zM179 263h1v1h-1zM553 107h1v1h-1zM83 144h1v1h-1zM507 280h1v1h-1zM577 167h1v1h-1zM47 68h1v1h-1zM493 155h1v1h-1zM121 130h1v1h-1zM80 298h1v1h-1zM273 189h1v1h-1zM139 194h1v1h-1zM170 304h1v1h-1zM527 246h1v1h-1zM352 249h1v1h-1zM71 152h1v1h-1zM537 265h1v1h-1zM206 157h1v1h-1zM103 56h1v1h-1zM577 105h1v1h-1zM490 103h1v1h-1zM288 200h1v1h-1zM130 130h1v1h-1zM103 57h1v1h-1zM237 278h1v1h-1zM151 170h1v1h-1zM252 192h1v1h-1zM147 69h1v1h-1zM215 315h1v1h-1zM361 175h1v1h-1zM194 245h1v1h-1zM109 218h1v1h-1zM314 74h1v1h-1zM315 145h1v1h-1zM28 175h1v1h-1zM141 84h1v1h-1zM423 202h1v1h-1zM250 242h1v1h-1zM534 153h1v1h-1zM329 291h1v1h-1zM178 175h1v1h-1zM306 151h1v1h-1zM349 264h1v1h-1zM531 165h1v1h-1zM187 259h1v1h-1zM433 128h1v1h-1zM281 121h1v1h-1zM328 111h1v1h-1zM63 126h1v1h-1zM73 135h1v1h-1zM214 138h1v1h-1zM565 258h1v1h-1zM175 295h1v1h-1zM304 60h1v1h-1zM296 78h1v1h-1zM182 310h1v1h-1zM332 316h1v1h-1zM280 144h1v1h-1zM156 121h1v1h-1zM473 212h1v1h-1zM525 183h1v1h-1zM530 294h1v1h-1zM65 232h1v1h-1zM66 149h1v1h-1zM96 223h1v1h-1zM94 79h1v1h-1zM452 235h1v1h-1zM516 296h1v1h-1zM438 275h1v1h-1zM190 177h1v1h-1zM340 161h1v1h-1zM292 183h1v1h-1zM324 66h1v1h-1zM109 260h1v1h-1zM527 111h1v1h-1zM88 118h1v1h-1zM535 173h1v1h-1zM594 187h1v1h-1zM90 258h1v1h-1zM92 240h1v1h-1zM604 253h1v1h-1zM497 168h1v1h-1zM58 116h1v1h-1zM524 264h1v1h-1zM357 109h1v1h-1zM301 272h1v1h-1zM86 294h1v1h-1zM68 246h1v1h-1zM33 282h1v1h-1zM206 202h1v1h-1zM48 232h1v1h-1zM604 136h1v1h-1zM511 96h1v1h-1zM43 232h1v1h-1zM180 245h1v1h-1zM60 91h1v1h-1zM207 193h1v1h-1zM162 89h1v1h-1zM87 153h1v1h-1zM58 199h1v1h-1zM39 193h1v1h-1zM207 66h1v1h-1zM35 210h1v1h-1zM438 104h1v1h-1zM355 78h1v1h-1zM294 272h1v1h-1zM132 179h1v1h-1zM549 127h1v1h-1zM479 77h1v1h-1zM182 261h1v1h-1zM529 133h1v1h-1zM262 144h1v1h-1zM134 143h1v1h-1zM512 208h1v1h-1zM515 207h1v1h-1zM418 202h1v1h-1zM146 186h1v1h-1zM223 116h1v1h-1zM207 299h1v1h-1zM584 312h1v1h-1zM340 129h1v1h-1zM235 134h1v1h-1zM584 284h1v1h-1zM482 193h1v1h-1zM305 250h1v1h-1zM542 245h1v1h-1zM575 215h1v1h-1zM512 216h1v1h-1zM343 273h1v1h-1zM283 279h1v1h-1zM172 313h1v1h-1zM449 108h1v1h-1zM422 132h1v1h-1zM79 91h1v1h-1zM275 306h1v1h-1zM161 199h1v1h-1zM279 101h1v1h-1zM428 136h1v1h-1zM48 280h1v1h-1zM467 68h1v1h-1zM286 140h1v1h-1zM405 139h1v1h-1zM430 68h1v1h-1zM552 227h1v1h-1zM255 272h1v1h-1zM454 139h1v1h-1zM74 225h1v1h-1zM270 285h1v1h-1zM110 275h1v1h-1zM515 110h1v1h-1zM171 218h1v1h-1zM188 184h1v1h-1zM333 160h1v1h-1zM94 131h1v1h-1zM496 267h1v1h-1zM81 239h1v1h-1zM536 217h1v1h-1zM583 212h1v1h-1zM296 162h1v1h-1zM363 231h1v1h-1zM602 95h1v1h-1zM212 292h1v1h-1zM423 137h1v1h-1zM351 73h1v1h-1zM110 66h1v1h-1zM516 92h1v1h-1zM240 143h1v1h-1zM429 75h1v1h-1zM27 101h1v1h-1zM354 149h1v1h-1zM66 132h1v1h-1zM177 248h1v1h-1zM439 61h1v1h-1zM510 84h1v1h-1zM255 168h1v1h-1zM39 84h1v1h-1zM455 238h1v1h-1zM483 312h1v1h-1zM541 135h1v1h-1zM406 230h1v1h-1zM155 257h1v1h-1zM553 212h1v1h-1zM478 130h1v1h-1zM515 143h1v1h-1zM200 205h1v1h-1zM379 179h1v1h-1zM508 255h1v1h-1zM329 289h1v1h-1zM256 159h1v1h-1zM595 139h1v1h-1zM100 282h1v1h-1zM425 141h1v1h-1zM493 235h1v1h-1zM286 196h1v1h-1zM577 199h1v1h-1zM83 172h1v1h-1zM199 309h1v1h-1zM277 162h1v1h-1zM469 258h1v1h-1zM69 236h1v1h-1zM567 209h1v1h-1zM184 302h1v1h-1zM60 185h1v1h-1zM138 202h1v1h-1zM256 289h1v1h-1zM65 179h1v1h-1zM190 85h1v1h-1zM515 227h1v1h-1zM227 196h1v1h-1zM283 72h1v1h-1zM215 65h1v1h-1zM80 280h1v1h-1zM478 134h1v1h-1zM32 289h1v1h-1zM62 120h1v1h-1zM518 208h1v1h-1zM278 262h1v1h-1zM558 208h1v1h-1zM560 74h1v1h-1zM325 237h1v1h-1zM516 182h1v1h-1zM389 132h1v1h-1zM448 209h1v1h-1zM600 195h1v1h-1zM134 265h1v1h-1zM285 91h1v1h-1zM584 187h1v1h-1zM120 109h1v1h-1zM170 301h1v1h-1zM497 65h1v1h-1zM431 143h1v1h-1zM278 252h1v1h-1zM193 133h1v1h-1zM566 264h1v1h-1zM507 252h1v1h-1zM582 255h1v1h-1zM458 133h1v1h-1zM434 303h1v1h-1zM355 246h1v1h-1zM124 179h1v1h-1zM331 249h1v1h-1zM325 118h1v1h-1zM598 184h1v1h-1zM91 278h1v1h-1zM236 307h1v1h-1zM40 257h1v1h-1zM419 245h1v1h-1zM43 189h1v1h-1zM317 135h1v1h-1zM74 218h1v1h-1zM236 316h1v1h-1zM159 159h1v1h-1zM407 91h1v1h-1zM110 79h1v1h-1zM517 263h1v1h-1zM91 130h1v1h-1zM409 71h1v1h-1zM57 106h1v1h-1zM476 122h1v1h-1zM458 99h1v1h-1zM392 234h1v1h-1zM395 102h1v1h-1zM294 123h1v1h-1zM211 144h1v1h-1zM553 105h1v1h-1zM253 262h1v1h-1zM68 261h1v1h-1zM550 220h1v1h-1zM562 176h1v1h-1zM477 319h1v1h-1zM311 176h1v1h-1zM578 240h1v1h-1zM317 161h1v1h-1zM441 313h1v1h-1zM316 178h1v1h-1zM318 67h1v1h-1zM503 247h1v1h-1zM388 240h1v1h-1zM494 170h1v1h-1zM356 120h1v1h-1zM347 228h1v1h-1zM351 108h1v1h-1zM184 66h1v1h-1zM268 209h1v1h-1zM229 233h1v1h-1zM246 180h1v1h-1zM140 197h1v1h-1zM149 114h1v1h-1zM272 224h1v1h-1zM323 116h1v1h-1zM355 241h1v1h-1zM146 88h1v1h-1zM529 146h1v1h-1zM350 185h1v1h-1zM321 139h1v1h-1zM110 240h1v1h-1zM419 303h1v1h-1zM313 280h1v1h-1zM316 317h1v1h-1zM120 135h1v1h-1zM472 167h1v1h-1zM351 290h1v1h-1zM147 73h1v1h-1zM32 219h1v1h-1zM574 119h1v1h-1zM317 169h1v1h-1zM310 273h1v1h-1zM539 210h1v1h-1zM298 295h1v1h-1zM281 136h1v1h-1zM301 231h1v1h-1zM159 253h1v1h-1zM240 72h1v1h-1zM430 290h1v1h-1zM553 315h1v1h-1zM50 313h1v1h-1zM548 291h1v1h-1zM27 233h1v1h-1zM137 294h1v1h-1zM183 71h1v1h-1zM365 239h1v1h-1zM333 165h1v1h-1zM62 247h1v1h-1zM27 209h1v1h-1zM79 176h1v1h-1zM362 121h1v1h-1zM463 124h1v1h-1zM528 160h1v1h-1zM423 175h1v1h-1zM209 81h1v1h-1zM379 70h1v1h-1zM296 163h1v1h-1zM193 122h1v1h-1zM306 289h1v1h-1zM486 137h1v1h-1zM369 222h1v1h-1zM444 221h1v1h-1zM59 94h1v1h-1zM483 125h1v1h-1zM354 70h1v1h-1zM361 132h1v1h-1zM46 60h1v1h-1zM161 192h1v1h-1zM461 64h1v1h-1zM318 144h1v1h-1zM377 241h1v1h-1zM71 121h1v1h-1zM529 231h1v1h-1zM119 198h1v1h-1zM234 97h1v1h-1zM259 196h1v1h-1zM406 289h1v1h-1zM182 317h1v1h-1zM237 227h1v1h-1zM253 175h1v1h-1zM423 252h1v1h-1zM62 62h1v1h-1zM225 140h1v1h-1zM282 305h1v1h-1zM198 116h1v1h-1zM274 144h1v1h-1zM262 195h1v1h-1zM88 256h1v1h-1zM392 255h1v1h-1zM279 102h1v1h-1zM456 286h1v1h-1zM543 247h1v1h-1zM95 133h1v1h-1zM425 67h1v1h-1zM187 158h1v1h-1zM487 63h1v1h-1zM182 224h1v1h-1zM25 138h1v1h-1zM452 179h1v1h-1zM456 121h1v1h-1zM439 97h1v1h-1zM390 264h1v1h-1zM59 130h1v1h-1zM215 289h1v1h-1zM62 165h1v1h-1zM603 80h1v1h-1zM580 75h1v1h-1zM339 175h1v1h-1zM421 131h1v1h-1zM297 285h1v1h-1zM117 292h1v1h-1zM78 102h1v1h-1zM153 198h1v1h-1zM203 180h1v1h-1zM57 136h1v1h-1zM25 88h1v1h-1zM406 203h1v1h-1zM292 63h1v1h-1zM465 82h1v1h-1zM430 163h1v1h-1zM531 82h1v1h-1zM227 67h1v1h-1zM569 218h1v1h-1zM220 99h1v1h-1zM542 150h1v1h-1zM95 180h1v1h-1zM234 272h1v1h-1zM57 258h1v1h-1zM541 72h1v1h-1zM419 248h1v1h-1zM465 285h1v1h-1zM295 227h1v1h-1zM365 172h1v1h-1zM100 199h1v1h-1zM330 147h1v1h-1zM448 290h1v1h-1zM319 156h1v1h-1zM319 251h1v1h-1zM198 274h1v1h-1zM408 242h1v1h-1zM370 74h1v1h-1zM400 285h1v1h-1zM412 278h1v1h-1zM107 176h1v1h-1zM441 306h1v1h-1zM71 110h1v1h-1zM162 123h1v1h-1zM400 164h1v1h-1zM561 234h1v1h-1zM428 295h1v1h-1zM525 63h1v1h-1zM269 228h1v1h-1zM445 295h1v1h-1zM142 187h1v1h-1zM547 105h1v1h-1zM47 168h1v1h-1zM124 65h1v1h-1zM252 224h1v1h-1zM398 282h1v1h-1zM186 129h1v1h-1zM550 71h1v1h-1zM370 92h1v1h-1zM465 87h1v1h-1zM510 133h1v1h-1zM566 223h1v1h-1zM472 110h1v1h-1zM414 229h1v1h-1zM256 202h1v1h-1zM335 278h1v1h-1zM605 272h1v1h-1zM313 83h1v1h-1zM391 313h1v1h-1zM147 92h1v1h-1zM133 80h1v1h-1zM321 109h1v1h-1zM539 291h1v1h-1zM531 197h1v1h-1zM284 232h1v1h-1zM259 205h1v1h-1zM58 201h1v1h-1zM349 113h1v1h-1zM127 171h1v1h-1zM548 318h1v1h-1zM436 143h1v1h-1zM214 300h1v1h-1zM178 214h1v1h-1zM444 130h1v1h-1zM563 122h1v1h-1zM601 242h1v1h-1zM330 208h1v1h-1zM543 282h1v1h-1zM47 140h1v1h-1zM27 167h1v1h-1zM434 159h1v1h-1zM351 99h1v1h-1zM142 144h1v1h-1zM171 244h1v1h-1zM478 138h1v1h-1zM511 149h1v1h-1zM508 241h1v1h-1zM314 259h1v1h-1zM483 114h1v1h-1zM547 146h1v1h-1zM58 318h1v1h-1zM601 231h1v1h-1zM47 59h1v1h-1zM478 239h1v1h-1zM514 309h1v1h-1zM388 271h1v1h-1zM236 163h1v1h-1zM382 137h1v1h-1zM404 289h1v1h-1zM283 291h1v1h-1zM468 125h1v1h-1zM62 139h1v1h-1zM370 209h1v1h-1zM117 237h1v1h-1zM208 157h1v1h-1zM88 243h1v1h-1zM168 110h1v1h-1zM545 144h1v1h-1zM494 71h1v1h-1zM316 226h1v1h-1zM433 179h1v1h-1zM123 200h1v1h-1zM538 134h1v1h-1zM259 231h1v1h-1zM227 227h1v1h-1zM266 99h1v1h-1zM301 72h1v1h-1zM69 170h1v1h-1zM221 268h1v1h-1zM53 147h1v1h-1zM374 207h1v1h-1zM384 208h1v1h-1zM585 115h1v1h-1zM318 76h1v1h-1zM468 201h1v1h-1zM586 86h1v1h-1zM336 127h1v1h-1zM267 301h1v1h-1zM156 91h1v1h-1zM258 128h1v1h-1zM472 244h1v1h-1zM176 277h1v1h-1zM159 73h1v1h-1zM122 208h1v1h-1zM473 245h1v1h-1zM116 160h1v1h-1zM500 223h1v1h-1zM470 96h1v1h-1zM490 101h1v1h-1zM40 183h1v1h-1zM399 223h1v1h-1zM306 104h1v1h-1zM353 181h1v1h-1zM23 125h1v1h-1zM246 249h1v1h-1zM590 314h1v1h-1zM354 149h1v1h-1zM523 267h1v1h-1zM583 123h1v1h-1zM605 212h1v1h-1zM399 118h1v1h-1zM561 94h1v1h-1zM425 301h1v1h-1zM491 112h1v1h-1zM594 278h1v1h-1zM603 267h1v1h-1zM576 114h1v1h-1zM146 119h1v1h-1zM300 103h1v1h-1zM550 276h1v1h-1zM222 124h1v1h-1zM101 111h1v1h-1zM181 139h1v1h-1zM433 72h1v1h-1zM348 270h1v1h-1zM163 223h1v1h-1zM176 292h1v1h-1zM314 153h1v1h-1zM561 192h1v1h-1zM246 105h1v1h-1zM86 139h1v1h-1zM36 285h1v1h-1zM546 278h1v1h-1zM304 149h1v1h-1zM190 92h1v1h-1zM190 138h1v1h-1zM316 106h1v1h-1zM328 187h1v1h-1zM104 209h1v1h-1zM551 255h1v1h-1zM338 121h1v1h-1zM440 119h1v1h-1zM517 129h1v1h-1zM135 261h1v1h-1zM145 130h1v1h-1zM429 157h1v1h-1zM252 298h1v1h-1zM529 318h1v1h-1zM348 156h1v1h-1zM366 164h1v1h-1zM586 126h1v1h-1zM505 264h1v1h-1zM185 262h1v1h-1zM426 266h1v1h-1zM324 94h1v1h-1zM304 308h1v1h-1zM552 140h1v1h-1zM401 64h1v1h-1zM443 210h1v1h-1zM249 128h1v1h-1zM71 119h1v1h-1zM272 168h1v1h-1zM112 239h1v1h-1zM28 103h1v1h-1zM188 103h1v1h-1zM497 307h1v1h-1zM297 144h1v1h-1zM514 256h1v1h-1zM402 300h1v1h-1zM65 212h1v1h-1zM178 311h1v1h-1zM60 290h1v1h-1zM557 71h1v1h-1zM539 190h1v1h-1zM547 180h1v1h-1zM594 139h1v1h-1zM135 223h1v1h-1zM592 123h1v1h-1zM423 126h1v1h-1zM239 218h1v1h-1zM472 187h1v1h-1zM565 229h1v1h-1zM43 218h1v1h-1zM42 120h1v1h-1zM334 164h1v1h-1zM423 164h1v1h-1zM495 202h1v1h-1zM368 218h1v1h-1zM315 197h1v1h-1zM26 95h1v1h-1zM204 116h1v1h-1zM134 239h1v1h-1zM280 99h1v1h-1zM405 103h1v1h-1zM197 109h1v1h-1zM418 189h1v1h-1zM30 242h1v1h-1zM127 125h1v1h-1zM82 213h1v1h-1zM347 122h1v1h-1zM603 161h1v1h-1zM100 267h1v1h-1zM321 179h1v1h-1zM376 181h1v1h-1zM275 68h1v1h-1zM488 201h1v1h-1zM439 72h1v1h-1zM298 146h1v1h-1zM329 239h1v1h-1zM172 250h1v1h-1zM428 75h1v1h-1zM523 221h1v1h-1zM179 292h1v1h-1zM48 208h1v1h-1zM520 247h1v1h-1zM555 184h1v1h-1zM556 68h1v1h-1zM504 107h1v1h-1zM400 318h1v1h-1zM313 279h1v1h-1zM420 279h1v1h-1zM24 184h1v1h-1zM402 247h1v1h-1zM570 104h1v1h-1zM328 220h1v1h-1zM255 298h1v1h-1zM316 75h1v1h-1zM397 253h1v1h-1zM430 185h1v1h-1zM295 282h1v1h-1zM432 242h1v1h-1zM500 83h1v1h-1zM431 282h1v1h-1zM450 305h1v1h-1zM253 256h1v1h-1zM469 253h1v1h-1zM322 183h1v1h-1zM560 114h1v1h-1zM207 101h1v1h-1zM515 277h1v1h-1zM230 162h1v1h-1zM482 225h1v1h-1zM274 307h1v1h-1zM332 81h1v1h-1zM237 149h1v1h-1zM110 221h1v1h-1zM345 242h1v1h-1zM552 112h1v1h-1zM184 224h1v1h-1zM453 238h1v1h-1zM54 264h1v1h-1zM164 75h1v1h-1zM587 86h1v1h-1zM575 112h1v1h-1zM142 297h1v1h-1zM448 309h1v1h-1zM45 236h1v1h-1zM276 129h1v1h-1zM271 268h1v1h-1zM294 302h1v1h-1zM569 216h1v1h-1zM93 91h1v1h-1zM337 275h1v1h-1zM606 245h1v1h-1zM23 295h1v1h-1zM368 90h1v1h-1zM431 304h1v1h-1zM182 208h1v1h-1zM389 216h1v1h-1zM219 201h1v1h-1zM560 202h1v1h-1zM120 207h1v1h-1zM457 76h1v1h-1zM526 182h1v1h-1zM147 115h1v1h-1zM69 280h1v1h-1zM500 165h1v1h-1zM598 115h1v1h-1zM24 275h1v1h-1zM466 104h1v1h-1zM209 77h1v1h-1zM347 196h1v1h-1zM391 278h1v1h-1zM517 147h1v1h-1zM267 96h1v1h-1zM363 158h1v1h-1zM428 136h1v1h-1zM232 228h1v1h-1zM110 118h1v1h-1zM348 232h1v1h-1zM93 164h1v1h-1zM287 163h1v1h-1zM62 237h1v1h-1zM430 121h1v1h-1zM335 275h1v1h-1zM455 59h1v1h-1zM208 114h1v1h-1zM529 241h1v1h-1zM460 60h1v1h-1zM457 93h1v1h-1zM130 179h1v1h-1zM377 123h1v1h-1zM525 249h1v1h-1zM586 94h1v1h-1zM297 153h1v1h-1zM254 82h1v1h-1zM550 89h1v1h-1zM52 61h1v1h-1zM484 285h1v1h-1zM211 106h1v1h-1zM186 170h1v1h-1zM380 126h1v1h-1zM454 250h1v1h-1zM565 304h1v1h-1zM457 305h1v1h-1zM477 158h1v1h-1zM36 113h1v1h-1zM574 231h1v1h-1zM500 71h1v1h-1zM481 130h1v1h-1zM194 171h1v1h-1zM509 243h1v1h-1zM599 58h1v1h-1zM277 219h1v1h-1zM284 159h1v1h-1zM546 190h1v1h-1zM111 158h1v1h-1zM254 131h1v1h-1zM80 277h1v1h-1zM430 313h1v1h-1zM425 188h1v1h-1zM560 218h1v1h-1zM539 291h1v1h-1zM305 112h1v1h-1zM223 289h1v1h-1zM266 160h1v1h-1zM151 260h1v1h-1zM23 285h1v1h-1zM116 112h1v1h-1zM183 169h1v1h-1zM362 254h1v1h-1zM303 234h1v1h-1zM45 219h1v1h-1zM363 76h1v1h-1zM588 214h1v1h-1zM302 111h1v1h-1zM326 280h1v1h-1zM429 79h1v1h-1zM205 299h1v1h-1zM85 222h1v1h-1zM529 236h1v1h-1zM392 66h1v1h-1zM188 119h1v1h-1zM174 231h1v1h-1zM210 60h1v1h-1zM53 165h1v1h-1zM274 203h1v1h-1zM206 267h1v1h-1zM565 293h1v1h-1zM572 156h1v1h-1zM284 287h1v1h-1zM120 293h1v1h-1zM499 137h1v1h-1zM24 196h1v1h-1zM137 105h1v1h-1zM246 163h1v1h-1zM457 240h1v1h-1zM492 261h1v1h-1zM256 148h1v1h-1zM244 194h1v1h-1zM304 206h1v1h-1zM557 150h1v1h-1zM350 107h1v1h-1zM355 210h1v1h-1zM417 175h1v1h-1zM102 149h1v1h-1zM183 105h1v1h-1zM563 241h1v1h-1zM572 305h1v1h-1zM181 136h1v1h-1zM312 164h1v1h-1zM267 78h1v1h-1zM561 283h1v1h-1zM363 156h1v1h-1zM371 198h1v1h-1zM243 248h1v1h-1zM172 152h1v1h-1zM506 245h1v1h-1zM139 144h1v1h-1zM325 98h1v1h-1zM454 220h1v1h-1zM235 143h1v1h-1zM131 107h1v1h-1zM356 200h1v1h-1zM513 267h1v1h-1zM448 209h1v1h-1zM160 172h1v1h-1zM545 263h1v1h-1zM457 290h1v1h-1zM511 123h1v1h-1zM552 313h1v1h-1zM367 209h1v1h-1zM508 269h1v1h-1zM547 180h1v1h-1zM530 172h1v1h-1zM282 187h1v1h-1zM371 63h1v1h-1zM156 280h1v1h-1zM42 290h1v1h-1zM563 179h1v1h-1zM540 295h1v1h-1zM246 261h1v1h-1zM143 160h1v1h-1zM123 137h1v1h-1zM592 224h1v1h-1zM212 81h1v1h-1zM521 302h1v1h-1zM599 69h1v1h-1zM485 136h1v1h-1zM136 186h1v1h-1zM201 302h1v1h-1zM111 152h1v1h-1zM119 245h1v1h-1zM310 185h1v1h-1zM547 212h1v1h-1zM321 283h1v1h-1zM365 294h1v1h-1zM399 247h1v1h-1zM331 86h1v1h-1zM363 288h1v1h-1zM462 309h1v1h-1zM171 283h1v1h-1zM119 59h1v1h-1zM44 111h1v1h-1zM153 263h1v1h-1zM319 287h1v1h-1zM233 96h1v1h-1zM190 107h1v1h-1zM471 304h1v1h-1zM341 202h1v1h-1zM351 240h1v1h-1zM508 274h1v1h-1zM282 189h1v1h-1zM294 99h1v1h-1zM65 273h1v1h-1zM280 102h1v1h-1zM46 62h1v1h-1zM273 207h1v1h-1zM558 256h1v1h-1zM258 211h1v1h-1zM34 99h1v1h-1zM278 212h1v1h-1zM418 299h1v1h-1zM232 160h1v1h-1zM104 130h1v1h-1zM133 274h1v1h-1zM386 264h1v1h-1zM60 182h1v1h-1zM404 114h1v1h-1zM334 67h1v1h-1zM400 215h1v1h-1zM398 67h1v1h-1zM341 152h1v1h-1zM157 317h1v1h-1zM328 243h1v1h-1zM310 291h1v1h-1zM118 184h1v1h-1zM432 102h1v1h-1zM106 185h1v1h-1zM336 286h1v1h-1zM397 118h1v1h-1zM214 276h1v1h-1zM117 138h1v1h-1zM209 215h1v1h-1zM440 97h1v1h-1zM276 283h1v1h-1zM406 283h1v1h-1zM520 195h1v1h-1zM183 140h1v1h-1zM330 295h1v1h-1zM185 264h1v1h-1zM173 119h1v1h-1zM54 160h1v1h-1zM494 166h1v1h-1zM385 79h1v1h-1zM205 194h1v1h-1zM30 130h1v1h-1zM498 83h1v1h-1zM481 224h1v1h-1zM156 103h1v1h-1zM413 206h1v1h-1zM223 269h1v1h-1zM340 301h1v1h-1zM223 173h1v1h-1zM508 137h1v1h-1zM468 262h1v1h-1zM405 215h1v1h-1zM530 102h1v1h-1zM582 285h1v1h-1zM225 57h1v1h-1zM606 292h1v1h-1zM396 313h1v1h-1zM113 137h1v1h-1zM253 100h1v1h-1zM125 283h1v1h-1zM321 164h1v1h-1zM261 241h1v1h-1zM432 162h1v1h-1zM82 141h1v1h-1zM198 103h1v1h-1zM364 308h1v1h-1zM360 70h1v1h-1zM103 303h1v1h-1zM593 156h1v1h-1zM287 127h1v1h-1zM419 296h1v1h-1zM364 243h1v1h-1zM29 283h1v1h-1zM344 67h1v1h-1zM218 251h1v1h-1zM142 268h1v1h-1zM380 226h1v1h-1zM543 296h1v1h-1zM206 92h1v1h-1zM428 253h1v1h-1zM182 164h1v1h-1zM519 100h1v1h-1zM79 304h1v1h-1zM28 112h1v1h-1zM34 175h1v1h-1zM428 114h1v1h-1zM97 189h1v1h-1zM147 206h1v1h-1zM272 126h1v1h-1zM499 126h1v1h-1zM348 66h1v1h-1zM531 105h1v1h-1zM408 318h1v1h-1zM151 239h1v1h-1zM63 299h1v1h-1zM408 243h1v1h-1zM46 157h1v1h-1zM370 124h1v1h-1zM463 206h1v1h-1zM146 285h1v1h-1zM399 122h1v1h-1zM226 232h1v1h-1zM396 170h1v1h-1zM411 72h1v1h-1zM156 81h1v1h-1zM423 246h1v1h-1zM434 222h1v1h-1zM218 190h1v1h-1zM271 94h1v1h-1zM496 91h1v1h-1zM186 252h1v1h-1zM526 82h1v1h-1zM470 120h1v1h-1zM556 82h1v1h-1zM601 130h1v1h-1zM171 275h1v1h-1zM218 99h1v1h-1zM199 303h1v1h-1zM345 185h1v1h-1zM350 85h1v1h-1zM352 244h1v1h-1zM23 105h1v1h-1zM564 186h1v1h-1zM176 217h1v1h-1zM252 70h1v1h-1zM579 147h1v1h-1zM294 151h1v1h-1zM494 151h1v1h-1zM218 175h1v1h-1zM591 294h1v1h-1zM53 302h1v1h-1zM371 94h1v1h-1zM214 234h1v1h-1z" fill="#ffe0c8" opacity="0.2"/>
<path d="M568 262h1v1h-1zM222 184h1v1h-1zM472 212h1v1h-1zM335 72h1v1h-1zM121 91h1v1h-1zM153 240h1v1h-1zM342 182h1v1h-1zM347 99h1v1h-1zM120 219h1v1h-1zM590 106h1v1h-1zM333 110h1v1h-1zM57 315h1v1h-1zM477 269h1v1h-1zM404 74h1v1h-1zM230 316h1v1h-1zM301 244h1v1h-1zM582 244h1v1h-1zM128 297h1v1h-1zM454 119h1v1h-1zM46 141h1v1h-1zM271 122h1v1h-1zM244 177h1v1h-1zM147 291h1v1h-1zM397 308h1v1h-1zM384 106h1v1h-1zM61 133h1v1h-1zM343 285h1v1h-1zM499 299h1v1h-1zM467 192h1v1h-1zM232 96h1v1h-1zM27 262h1v1h-1zM380 126h1v1h-1zM92 62h1v1h-1zM290 120h1v1h-1zM522 74h1v1h-1zM307 178h1v1h-1zM411 109h1v1h-1zM366 121h1v1h-1zM255 115h1v1h-1zM503 192h1v1h-1zM31 183h1v1h-1zM518 84h1v1h-1zM514 233h1v1h-1zM459 251h1v1h-1zM40 165h1v1h-1zM509 241h1v1h-1zM464 219h1v1h-1zM244 276h1v1h-1zM101 281h1v1h-1zM507 184h1v1h-1zM368 245h1v1h-1zM34 98h1v1h-1zM491 132h1v1h-1zM260 259h1v1h-1zM422 71h1v1h-1zM254 116h1v1h-1zM283 159h1v1h-1zM235 262h1v1h-1zM300 223h1v1h-1zM143 137h1v1h-1zM295 215h1v1h-1zM271 262h1v1h-1zM235 119h1v1h-1zM199 181h1v1h-1zM518 252h1v1h-1zM149 310h1v1h-1zM541 225h1v1h-1zM323 286h1v1h-1zM416 217h1v1h-1zM47 194h1v1h-1zM515 167h1v1h-1zM572 155h1v1h-1zM269 267h1v1h-1zM276 108h1v1h-1zM385 80h1v1h-1zM84 220h1v1h-1zM334 87h1v1h-1zM263 60h1v1h-1zM521 280h1v1h-1zM70 150h1v1h-1zM166 228h1v1h-1zM321 203h1v1h-1zM525 207h1v1h-1zM356 249h1v1h-1zM158 252h1v1h-1zM564 218h1v1h-1zM555 140h1v1h-1zM207 206h1v1h-1zM56 194h1v1h-1zM82 212h1v1h-1zM575 61h1v1h-1zM219 60h1v1h-1zM223 146h1v1h-1zM25 94h1v1h-1zM385 184h1v1h-1zM423 150h1v1h-1zM438 225h1v1h-1zM473 135h1v1h-1zM308 75h1v1h-1zM208 189h1v1h-1zM505 301h1v1h-1zM453 130h1v1h-1zM257 254h1v1h-1zM544 303h1v1h-1zM239 144h1v1h-1zM457 188h1v1h-1zM512 171h1v1h-1zM110 159h1v1h-1zM342 245h1v1h-1zM242 312h1v1h-1zM107 160h1v1h-1zM140 99h1v1h-1zM524 297h1v1h-1zM579 203h1v1h-1zM47 66h1v1h-1zM162 308h1v1h-1zM216 306h1v1h-1zM244 67h1v1h-1zM480 248h1v1h-1zM362 201h1v1h-1zM431 102h1v1h-1zM222 160h1v1h-1zM94 221h1v1h-1zM344 96h1v1h-1zM528 78h1v1h-1zM242 108h1v1h-1zM468 105h1v1h-1zM61 272h1v1h-1zM236 253h1v1h-1zM439 286h1v1h-1zM225 268h1v1h-1zM326 273h1v1h-1zM184 85h1v1h-1zM395 298h1v1h-1zM202 203h1v1h-1zM360 78h1v1h-1zM383 263h1v1h-1zM202 59h1v1h-1zM220 166h1v1h-1zM374 103h1v1h-1zM51 291h1v1h-1zM345 169h1v1h-1zM478 79h1v1h-1zM421 277h1v1h-1zM253 162h1v1h-1zM561 97h1v1h-1zM394 187h1v1h-1zM314 225h1v1h-1zM360 233h1v1h-1zM168 256h1v1h-1zM282 123h1v1h-1zM116 255h1v1h-1zM560 287h1v1h-1zM483 310h1v1h-1zM590 198h1v1h-1zM447 77h1v1h-1zM40 85h1v1h-1zM387 307h1v1h-1zM299 298h1v1h-1zM137 240h1v1h-1zM395 92h1v1h-1zM203 245h1v1h-1zM331 242h1v1h-1zM316 274h1v1h-1zM367 208h1v1h-1zM509 282h1v1h-1zM400 318h1v1h-1zM395 286h1v1h-1zM332 272h1v1h-1zM231 167h1v1h-1zM420 297h1v1h-1zM519 288h1v1h-1zM400 297h1v1h-1zM602 97h1v1h-1zM188 142h1v1h-1zM299 275h1v1h-1zM539 223h1v1h-1zM59 159h1v1h-1zM425 285h1v1h-1zM106 285h1v1h-1zM491 266h1v1h-1zM401 319h1v1h-1zM452 172h1v1h-1zM596 193h1v1h-1zM590 206h1v1h-1zM475 241h1v1h-1zM36 88h1v1h-1zM540 70h1v1h-1zM277 200h1v1h-1zM524 114h1v1h-1zM217 280h1v1h-1zM274 252h1v1h-1zM105 244h1v1h-1zM308 309h1v1h-1zM270 157h1v1h-1zM202 110h1v1h-1zM390 98h1v1h-1zM207 189h1v1h-1zM521 113h1v1h-1zM113 300h1v1h-1zM439 156h1v1h-1zM69 140h1v1h-1zM132 75h1v1h-1zM213 158h1v1h-1zM448 312h1v1h-1zM176 118h1v1h-1zM147 103h1v1h-1zM442 205h1v1h-1zM121 168h1v1h-1zM251 184h1v1h-1zM462 278h1v1h-1zM500 188h1v1h-1zM459 316h1v1h-1zM575 193h1v1h-1zM517 95h1v1h-1zM309 182h1v1h-1zM290 208h1v1h-1zM568 145h1v1h-1zM259 275h1v1h-1zM323 200h1v1h-1zM550 56h1v1h-1zM280 268h1v1h-1zM326 146h1v1h-1zM84 236h1v1h-1zM379 90h1v1h-1zM23 195h1v1h-1zM346 259h1v1h-1zM373 65h1v1h-1zM432 142h1v1h-1zM435 231h1v1h-1zM492 129h1v1h-1zM277 167h1v1h-1zM292 146h1v1h-1zM61 112h1v1h-1zM267 117h1v1h-1zM353 149h1v1h-1zM397 111h1v1h-1zM359 209h1v1h-1zM571 256h1v1h-1zM535 196h1v1h-1zM344 65h1v1h-1zM311 174h1v1h-1zM62 168h1v1h-1zM306 181h1v1h-1zM605 77h1v1h-1zM332 138h1v1h-1zM218 171h1v1h-1zM547 286h1v1h-1zM120 134h1v1h-1zM373 239h1v1h-1zM374 126h1v1h-1zM418 183h1v1h-1zM293 298h1v1h-1zM180 282h1v1h-1zM424 237h1v1h-1zM228 138h1v1h-1zM426 205h1v1h-1zM63 92h1v1h-1zM429 62h1v1h-1zM306 85h1v1h-1zM423 135h1v1h-1zM384 152h1v1h-1zM503 66h1v1h-1zM591 242h1v1h-1zM25 77h1v1h-1zM301 292h1v1h-1zM226 56h1v1h-1zM490 99h1v1h-1zM160 260h1v1h-1zM365 288h1v1h-1zM499 62h1v1h-1zM388 263h1v1h-1zM354 262h1v1h-1zM430 195h1v1h-1zM528 238h1v1h-1zM170 206h1v1h-1zM542 227h1v1h-1zM537 81h1v1h-1zM156 149h1v1h-1zM370 110h1v1h-1zM74 246h1v1h-1zM295 105h1v1h-1zM589 61h1v1h-1zM423 294h1v1h-1zM456 179h1v1h-1zM162 229h1v1h-1zM116 307h1v1h-1zM334 159h1v1h-1zM289 311h1v1h-1zM88 247h1v1h-1zM106 124h1v1h-1zM166 234h1v1h-1zM391 130h1v1h-1zM327 272h1v1h-1zM53 168h1v1h-1zM229 258h1v1h-1zM522 272h1v1h-1zM249 292h1v1h-1zM464 198h1v1h-1zM553 75h1v1h-1zM219 253h1v1h-1zM408 309h1v1h-1zM532 227h1v1h-1zM272 168h1v1h-1zM573 125h1v1h-1zM168 60h1v1h-1zM73 277h1v1h-1zM203 155h1v1h-1zM576 120h1v1h-1zM535 148h1v1h-1zM517 306h1v1h-1zM333 293h1v1h-1zM209 128h1v1h-1zM470 252h1v1h-1zM568 179h1v1h-1zM558 69h1v1h-1zM581 112h1v1h-1zM421 300h1v1h-1zM530 208h1v1h-1zM468 169h1v1h-1zM404 103h1v1h-1zM105 266h1v1h-1zM338 274h1v1h-1zM61 101h1v1h-1zM448 193h1v1h-1zM105 241h1v1h-1zM340 122h1v1h-1zM167 223h1v1h-1zM600 149h1v1h-1zM152 226h1v1h-1zM424 233h1v1h-1zM270 271h1v1h-1zM188 277h1v1h-1zM560 311h1v1h-1zM332 115h1v1h-1zM415 64h1v1h-1zM458 133h1v1h-1zM533 67h1v1h-1zM568 170h1v1h-1zM206 210h1v1h-1zM602 284h1v1h-1zM277 188h1v1h-1zM92 211h1v1h-1zM134 78h1v1h-1zM295 72h1v1h-1zM233 198h1v1h-1zM502 139h1v1h-1zM417 136h1v1h-1zM214 140h1v1h-1zM273 76h1v1h-1zM335 291h1v1h-1zM265 216h1v1h-1zM344 201h1v1h-1zM52 62h1v1h-1zM192 287h1v1h-1zM41 209h1v1h-1zM105 57h1v1h-1zM108 236h1v1h-1zM39 178h1v1h-1zM456 228h1v1h-1zM256 294h1v1h-1zM344 114h1v1h-1zM136 276h1v1h-1zM153 147h1v1h-1zM458 207h1v1h-1zM248 107h1v1h-1zM44 168h1v1h-1zM392 261h1v1h-1zM79 160h1v1h-1zM109 285h1v1h-1zM258 191h1v1h-1zM459 217h1v1h-1zM25 260h1v1h-1zM52 210h1v1h-1zM333 283h1v1h-1zM521 228h1v1h-1zM286 87h1v1h-1zM192 277h1v1h-1zM239 262h1v1h-1zM257 108h1v1h-1zM307 297h1v1h-1zM543 209h1v1h-1zM139 319h1v1h-1zM252 147h1v1h-1zM183 121h1v1h-1zM43 159h1v1h-1zM254 290h1v1h-1zM439 198h1v1h-1zM581 111h1v1h-1zM327 313h1v1h-1zM34 102h1v1h-1zM109 101h1v1h-1zM307 219h1v1h-1zM597 153h1v1h-1zM576 108h1v1h-1zM74 228h1v1h-1zM509 221h1v1h-1zM214 192h1v1h-1zM553 141h1v1h-1zM557 219h1v1h-1zM161 101h1v1h-1zM374 224h1v1h-1zM357 123h1v1h-1zM266 241h1v1h-1zM286 75h1v1h-1zM408 107h1v1h-1zM546 151h1v1h-1zM331 256h1v1h-1zM356 93h1v1h-1zM325 314h1v1h-1zM297 79h1v1h-1zM543 225h1v1h-1zM211 304h1v1h-1zM147 242h1v1h-1zM198 112h1v1h-1zM148 208h1v1h-1zM461 144h1v1h-1zM561 201h1v1h-1zM301 220h1v1h-1zM340 256h1v1h-1zM558 283h1v1h-1zM42 265h1v1h-1zM130 249h1v1h-1zM51 105h1v1h-1zM236 106h1v1h-1zM403 214h1v1h-1zM382 307h1v1h-1zM59 200h1v1h-1zM95 133h1v1h-1zM260 257h1v1h-1zM448 194h1v1h-1zM474 162h1v1h-1zM214 175h1v1h-1zM539 255h1v1h-1zM303 157h1v1h-1zM269 135h1v1h-1zM325 59h1v1h-1zM570 115h1v1h-1zM169 287h1v1h-1zM71 185h1v1h-1zM154 103h1v1h-1zM138 106h1v1h-1zM248 283h1v1h-1zM571 230h1v1h-1zM199 145h1v1h-1zM170 148h1v1h-1zM495 144h1v1h-1zM473 187h1v1h-1zM29 170h1v1h-1zM282 238h1v1h-1zM166 136h1v1h-1zM133 261h1v1h-1zM46 271h1v1h-1zM343 233h1v1h-1zM252 243h1v1h-1zM417 232h1v1h-1zM486 313h1v1h-1zM331 60h1v1h-1zM154 97h1v1h-1zM319 108h1v1h-1zM400 264h1v1h-1zM427 121h1v1h-1zM331 308h1v1h-1zM407 165h1v1h-1zM37 275h1v1h-1zM399 182h1v1h-1zM497 303h1v1h-1zM125 168h1v1h-1zM386 61h1v1h-1zM304 283h1v1h-1zM180 211h1v1h-1zM421 266h1v1h-1zM507 231h1v1h-1zM459 80h1v1h-1zM163 290h1v1h-1zM365 123h1v1h-1zM242 173h1v1h-1zM241 76h1v1h-1zM322 157h1v1h-1zM56 275h1v1h-1zM125 76h1v1h-1zM594 275h1v1h-1zM155 288h1v1h-1zM527 108h1v1h-1zM472 81h1v1h-1zM496 154h1v1h-1zM166 301h1v1h-1zM263 219h1v1h-1zM250 286h1v1h-1zM506 295h1v1h-1zM352 276h1v1h-1zM291 320h1v1h-1zM369 94h1v1h-1zM339 247h1v1h-1zM175 261h1v1h-1zM426 250h1v1h-1zM362 181h1v1h-1zM361 179h1v1h-1zM344 175h1v1h-1zM162 146h1v1h-1zM340 113h1v1h-1zM356 67h1v1h-1zM143 124h1v1h-1zM46 64h1v1h-1zM304 216h1v1h-1zM399 299h1v1h-1zM253 212h1v1h-1zM96 125h1v1h-1zM56 291h1v1h-1zM466 243h1v1h-1zM553 253h1v1h-1zM581 268h1v1h-1zM108 156h1v1h-1zM252 199h1v1h-1zM472 231h1v1h-1zM271 237h1v1h-1zM574 76h1v1h-1zM99 139h1v1h-1zM124 269h1v1h-1zM508 109h1v1h-1zM59 174h1v1h-1zM133 216h1v1h-1zM576 179h1v1h-1zM355 223h1v1h-1zM87 314h1v1h-1zM100 142h1v1h-1zM367 189h1v1h-1zM32 134h1v1h-1zM412 144h1v1h-1zM53 250h1v1h-1zM75 110h1v1h-1zM123 319h1v1h-1zM359 179h1v1h-1zM448 213h1v1h-1zM561 111h1v1h-1zM188 192h1v1h-1zM172 231h1v1h-1zM238 67h1v1h-1zM309 88h1v1h-1zM456 246h1v1h-1zM447 107h1v1h-1zM297 104h1v1h-1zM434 56h1v1h-1zM494 314h1v1h-1zM501 240h1v1h-1zM377 176h1v1h-1zM352 190h1v1h-1zM235 199h1v1h-1zM97 75h1v1h-1zM196 310h1v1h-1zM382 299h1v1h-1zM441 259h1v1h-1zM316 218h1v1h-1zM40 82h1v1h-1zM31 171h1v1h-1zM44 99h1v1h-1zM82 304h1v1h-1zM196 117h1v1h-1zM496 216h1v1h-1zM212 125h1v1h-1zM545 101h1v1h-1zM48 165h1v1h-1zM429 238h1v1h-1zM76 171h1v1h-1zM349 247h1v1h-1zM430 173h1v1h-1zM462 187h1v1h-1zM91 94h1v1h-1zM95 237h1v1h-1zM31 115h1v1h-1zM600 279h1v1h-1zM316 79h1v1h-1zM241 112h1v1h-1zM171 190h1v1h-1zM536 89h1v1h-1zM393 91h1v1h-1zM108 192h1v1h-1zM492 129h1v1h-1zM386 297h1v1h-1zM360 153h1v1h-1zM199 254h1v1h-1zM415 230h1v1h-1zM407 224h1v1h-1zM310 312h1v1h-1zM84 70h1v1h-1zM310 298h1v1h-1zM276 296h1v1h-1zM270 194h1v1h-1zM453 302h1v1h-1zM315 168h1v1h-1zM575 163h1v1h-1zM383 203h1v1h-1zM369 71h1v1h-1zM400 221h1v1h-1zM545 284h1v1h-1zM405 206h1v1h-1zM457 111h1v1h-1zM33 237h1v1h-1zM251 163h1v1h-1zM112 108h1v1h-1zM349 164h1v1h-1zM579 203h1v1h-1zM201 145h1v1h-1zM34 267h1v1h-1zM23 253h1v1h-1zM60 93h1v1h-1zM170 132h1v1h-1zM95 163h1v1h-1zM58 73h1v1h-1zM75 134h1v1h-1zM64 224h1v1h-1zM340 278h1v1h-1zM44 223h1v1h-1zM101 314h1v1h-1zM117 119h1v1h-1zM573 289h1v1h-1zM506 59h1v1h-1zM45 62h1v1h-1zM327 303h1v1h-1zM108 140h1v1h-1zM306 203h1v1h-1zM570 131h1v1h-1zM227 238h1v1h-1zM241 140h1v1h-1zM343 109h1v1h-1zM224 315h1v1h-1zM78 110h1v1h-1zM387 132h1v1h-1zM317 239h1v1h-1zM112 101h1v1h-1zM153 245h1v1h-1zM379 318h1v1h-1zM223 188h1v1h-1zM128 311h1v1h-1zM430 227h1v1h-1zM132 270h1v1h-1zM511 91h1v1h-1zM100 285h1v1h-1zM336 256h1v1h-1zM569 261h1v1h-1zM115 102h1v1h-1zM435 222h1v1h-1zM530 248h1v1h-1zM204 217h1v1h-1zM380 309h1v1h-1zM594 192h1v1h-1zM286 230h1v1h-1zM320 174h1v1h-1zM132 101h1v1h-1zM338 164h1v1h-1zM323 250h1v1h-1zM119 126h1v1h-1zM481 137h1v1h-1zM229 294h1v1h-1zM31 153h1v1h-1zM124 315h1v1h-1zM568 295h1v1h-1zM319 206h1v1h-1zM376 248h1v1h-1zM483 285h1v1h-1zM375 74h1v1h-1zM439 166h1v1h-1zM322 255h1v1h-1zM557 233h1v1h-1zM386 319h1v1h-1zM32 245h1v1h-1zM80 203h1v1h-1zM172 152h1v1h-1zM509 142h1v1h-1zM549 222h1v1h-1zM549 223h1v1h-1zM378 202h1v1h-1zM557 59h1v1h-1zM87 114h1v1h-1zM543 310h1v1h-1zM123 132h1v1h-1zM296 116h1v1h-1zM146 104h1v1h-1zM493 93h1v1h-1zM372 282h1v1h-1zM150 169h1v1h-1zM32 87h1v1h-1zM275 219h1v1h-1zM141 299h1v1h-1zM357 320h1v1h-1zM309 211h1v1h-1zM416 225h1v1h-1zM361 218h1v1h-1zM173 248h1v1h-1zM459 216h1v1h-1zM225 151h1v1h-1zM183 67h1v1h-1zM342 286h1v1h-1zM341 315h1v1h-1zM360 65h1v1h-1zM376 63h1v1h-1zM227 318h1v1h-1zM523 159h1v1h-1zM134 75h1v1h-1zM103 115h1v1h-1zM518 147h1v1h-1zM529 302h1v1h-1zM601 140h1v1h-1zM468 235h1v1h-1zM111 262h1v1h-1zM386 84h1v1h-1zM267 134h1v1h-1zM304 117h1v1h-1zM132 59h1v1h-1zM405 134h1v1h-1zM202 224h1v1h-1zM444 165h1v1h-1zM589 96h1v1h-1zM158 264h1v1h-1zM263 96h1v1h-1zM483 77h1v1h-1zM532 142h1v1h-1zM465 158h1v1h-1zM337 133h1v1h-1zM515 152h1v1h-1zM88 303h1v1h-1zM483 140h1v1h-1zM274 165h1v1h-1zM126 265h1v1h-1zM463 266h1v1h-1zM126 153h1v1h-1zM418 82h1v1h-1zM465 146h1v1h-1zM23 147h1v1h-1zM555 152h1v1h-1zM208 86h1v1h-1zM245 81h1v1h-1zM29 226h1v1h-1zM487 161h1v1h-1zM571 188h1v1h-1zM303 183h1v1h-1zM541 191h1v1h-1zM260 134h1v1h-1zM315 214h1v1h-1zM280 294h1v1h-1zM39 173h1v1h-1zM74 153h1v1h-1zM518 313h1v1h-1zM218 222h1v1h-1zM155 68h1v1h-1zM37 216h1v1h-1zM356 273h1v1h-1zM460 108h1v1h-1zM63 253h1v1h-1zM162 268h1v1h-1zM345 273h1v1h-1zM124 150h1v1h-1zM542 86h1v1h-1zM317 168h1v1h-1zM569 106h1v1h-1zM402 99h1v1h-1zM286 150h1v1h-1zM129 252h1v1h-1zM278 248h1v1h-1zM534 87h1v1h-1zM564 310h1v1h-1zM287 65h1v1h-1zM173 84h1v1h-1zM122 129h1v1h-1zM347 81h1v1h-1zM572 179h1v1h-1zM170 62h1v1h-1zM365 269h1v1h-1zM522 220h1v1h-1zM340 61h1v1h-1zM252 317h1v1h-1zM125 274h1v1h-1zM397 234h1v1h-1zM301 162h1v1h-1zM476 247h1v1h-1zM324 56h1v1h-1zM278 123h1v1h-1zM69 192h1v1h-1zM250 318h1v1h-1zM194 284h1v1h-1zM110 200h1v1h-1zM230 64h1v1h-1zM79 206h1v1h-1zM529 64h1v1h-1zM135 271h1v1h-1zM398 237h1v1h-1zM336 120h1v1h-1zM311 68h1v1h-1zM522 58h1v1h-1zM46 198h1v1h-1zM71 143h1v1h-1zM465 167h1v1h-1zM417 124h1v1h-1zM582 76h1v1h-1zM383 111h1v1h-1zM261 135h1v1h-1zM24 312h1v1h-1zM427 267h1v1h-1zM22 237h1v1h-1zM407 106h1v1h-1zM66 238h1v1h-1zM263 150h1v1h-1zM559 283h1v1h-1zM139 254h1v1h-1zM34 133h1v1h-1zM25 233h1v1h-1zM134 188h1v1h-1zM200 116h1v1h-1zM462 119h1v1h-1zM389 212h1v1h-1zM556 105h1v1h-1zM90 252h1v1h-1zM233 264h1v1h-1zM196 80h1v1h-1zM555 256h1v1h-1zM594 318h1v1h-1zM130 73h1v1h-1zM161 126h1v1h-1zM480 239h1v1h-1zM153 236h1v1h-1zM240 306h1v1h-1zM515 86h1v1h-1zM344 100h1v1h-1zM530 311h1v1h-1zM451 258h1v1h-1zM126 153h1v1h-1zM603 152h1v1h-1zM496 184h1v1h-1zM525 308h1v1h-1zM516 298h1v1h-1zM234 91h1v1h-1zM468 287h1v1h-1zM268 155h1v1h-1zM401 309h1v1h-1zM95 270h1v1h-1zM486 241h1v1h-1zM488 209h1v1h-1zM505 211h1v1h-1zM532 305h1v1h-1zM52 219h1v1h-1zM593 153h1v1h-1zM35 160h1v1h-1zM364 124h1v1h-1zM550 58h1v1h-1zM195 270h1v1h-1zM167 104h1v1h-1zM201 107h1v1h-1zM451 284h1v1h-1zM156 282h1v1h-1zM521 162h1v1h-1zM254 288h1v1h-1zM183 237h1v1h-1zM576 206h1v1h-1zM168 200h1v1h-1zM356 183h1v1h-1zM144 62h1v1h-1zM510 57h1v1h-1zM422 132h1v1h-1zM201 69h1v1h-1zM353 108h1v1h-1zM106 197h1v1h-1zM244 141h1v1h-1zM168 170h1v1h-1zM456 311h1v1h-1zM321 142h1v1h-1zM131 251h1v1h-1zM138 99h1v1h-1zM366 186h1v1h-1zM55 56h1v1h-1zM25 127h1v1h-1zM507 270h1v1h-1zM194 303h1v1h-1zM273 211h1v1h-1zM459 86h1v1h-1zM129 281h1v1h-1zM174 252h1v1h-1zM285 141h1v1h-1zM575 226h1v1h-1zM69 131h1v1h-1zM159 305h1v1h-1zM395 113h1v1h-1zM263 89h1v1h-1zM26 197h1v1h-1zM259 148h1v1h-1zM509 261h1v1h-1zM521 234h1v1h-1zM563 278h1v1h-1zM262 248h1v1h-1zM142 76h1v1h-1zM23 172h1v1h-1zM178 154h1v1h-1zM432 65h1v1h-1zM421 158h1v1h-1zM44 186h1v1h-1zM460 98h1v1h-1zM437 294h1v1h-1zM152 299h1v1h-1zM168 155h1v1h-1zM418 101h1v1h-1zM270 229h1v1h-1zM203 78h1v1h-1zM469 245h1v1h-1zM150 150h1v1h-1zM145 196h1v1h-1zM522 232h1v1h-1zM474 225h1v1h-1zM255 125h1v1h-1zM76 239h1v1h-1zM221 65h1v1h-1zM231 292h1v1h-1zM394 168h1v1h-1zM55 254h1v1h-1zM350 98h1v1h-1zM405 264h1v1h-1zM140 304h1v1h-1zM351 319h1v1h-1zM167 223h1v1h-1zM327 98h1v1h-1zM97 79h1v1h-1zM541 310h1v1h-1zM45 173h1v1h-1zM371 204h1v1h-1zM367 232h1v1h-1zM146 59h1v1h-1zM437 318h1v1h-1zM548 311h1v1h-1zM188 257h1v1h-1zM412 69h1v1h-1zM287 114h1v1h-1zM448 124h1v1h-1zM345 205h1v1h-1zM359 295h1v1h-1zM83 241h1v1h-1zM304 86h1v1h-1zM567 148h1v1h-1zM383 128h1v1h-1zM91 276h1v1h-1zM79 246h1v1h-1zM590 117h1v1h-1zM59 147h1v1h-1zM83 319h1v1h-1zM84 101h1v1h-1zM45 320h1v1h-1zM373 77h1v1h-1zM29 168h1v1h-1zM180 277h1v1h-1zM483 121h1v1h-1zM24 125h1v1h-1zM111 117h1v1h-1zM152 232h1v1h-1zM275 295h1v1h-1zM498 182h1v1h-1zM299 190h1v1h-1zM590 167h1v1h-1zM274 98h1v1h-1zM547 265h1v1h-1zM416 262h1v1h-1zM244 274h1v1h-1zM142 56h1v1h-1zM415 254h1v1h-1zM357 198h1v1h-1zM341 66h1v1h-1zM349 284h1v1h-1zM34 124h1v1h-1zM325 161h1v1h-1zM422 97h1v1h-1zM379 188h1v1h-1zM480 224h1v1h-1zM422 132h1v1h-1zM556 151h1v1h-1zM382 144h1v1h-1zM519 249h1v1h-1zM358 302h1v1h-1zM555 153h1v1h-1zM176 141h1v1h-1zM165 132h1v1h-1zM84 258h1v1h-1zM240 282h1v1h-1zM27 136h1v1h-1zM583 286h1v1h-1zM603 312h1v1h-1zM541 226h1v1h-1zM586 94h1v1h-1zM290 207h1v1h-1zM478 211h1v1h-1zM138 286h1v1h-1zM318 226h1v1h-1zM28 316h1v1h-1zM38 316h1v1h-1zM387 180h1v1h-1zM398 181h1v1h-1zM569 271h1v1h-1zM30 169h1v1h-1zM210 262h1v1h-1zM209 148h1v1h-1zM574 204h1v1h-1zM217 119h1v1h-1zM27 110h1v1h-1zM139 253h1v1h-1zM582 158h1v1h-1zM59 61h1v1h-1zM597 289h1v1h-1zM534 245h1v1h-1zM318 141h1v1h-1zM227 185h1v1h-1zM139 168h1v1h-1zM574 193h1v1h-1zM325 184h1v1h-1zM317 292h1v1h-1zM401 250h1v1h-1zM563 256h1v1h-1zM435 277h1v1h-1zM264 218h1v1h-1zM176 286h1v1h-1zM500 181h1v1h-1zM400 309h1v1h-1zM207 208h1v1h-1zM533 192h1v1h-1zM69 108h1v1h-1zM73 153h1v1h-1zM59 251h1v1h-1zM122 59h1v1h-1zM51 66h1v1h-1zM504 66h1v1h-1zM240 278h1v1h-1zM506 129h1v1h-1zM30 280h1v1h-1zM403 298h1v1h-1zM426 256h1v1h-1zM383 235h1v1h-1zM385 87h1v1h-1zM167 247h1v1h-1zM568 98h1v1h-1zM132 139h1v1h-1zM351 289h1v1h-1zM114 308h1v1h-1zM304 70h1v1h-1zM325 150h1v1h-1zM256 293h1v1h-1zM40 134h1v1h-1zM342 149h1v1h-1zM310 237h1v1h-1zM291 80h1v1h-1zM345 71h1v1h-1zM225 255h1v1h-1zM169 117h1v1h-1zM132 62h1v1h-1zM359 104h1v1h-1zM449 74h1v1h-1zM92 221h1v1h-1zM382 131h1v1h-1zM110 279h1v1h-1zM383 181h1v1h-1zM101 144h1v1h-1zM382 95h1v1h-1zM348 284h1v1h-1zM259 198h1v1h-1zM263 88h1v1h-1zM341 78h1v1h-1zM544 301h1v1h-1zM559 286h1v1h-1zM166 215h1v1h-1zM458 171h1v1h-1zM429 223h1v1h-1zM63 69h1v1h-1zM549 294h1v1h-1zM442 195h1v1h-1zM487 297h1v1h-1zM462 235h1v1h-1zM50 123h1v1h-1zM217 177h1v1h-1zM193 267h1v1h-1zM602 160h1v1h-1zM492 139h1v1h-1zM479 125h1v1h-1zM226 107h1v1h-1zM333 138h1v1h-1zM541 91h1v1h-1zM546 114h1v1h-1zM149 238h1v1h-1zM420 94h1v1h-1zM372 153h1v1h-1zM377 168h1v1h-1zM308 82h1v1h-1zM74 280h1v1h-1zM105 277h1v1h-1zM201 236h1v1h-1zM263 185h1v1h-1zM170 132h1v1h-1zM112 265h1v1h-1zM31 286h1v1h-1zM481 122h1v1h-1zM139 273h1v1h-1zM274 113h1v1h-1zM338 301h1v1h-1zM529 199h1v1h-1zM343 249h1v1h-1zM220 66h1v1h-1zM324 85h1v1h-1zM188 138h1v1h-1zM335 68h1v1h-1zM159 59h1v1h-1zM521 316h1v1h-1zM436 61h1v1h-1zM95 256h1v1h-1zM300 243h1v1h-1zM229 299h1v1h-1zM198 212h1v1h-1zM354 127h1v1h-1zM189 309h1v1h-1zM562 281h1v1h-1zM446 206h1v1h-1zM209 84h1v1h-1zM568 261h1v1h-1zM173 289h1v1h-1zM362 80h1v1h-1zM210 119h1v1h-1zM470 274h1v1h-1zM389 171h1v1h-1zM521 163h1v1h-1zM107 228h1v1h-1zM551 291h1v1h-1zM504 171h1v1h-1zM304 224h1v1h-1zM334 299h1v1h-1zM419 280h1v1h-1zM380 73h1v1h-1zM68 121h1v1h-1zM368 290h1v1h-1zM544 213h1v1h-1zM178 212h1v1h-1zM164 193h1v1h-1zM310 303h1v1h-1zM550 69h1v1h-1zM500 215h1v1h-1zM372 174h1v1h-1zM542 261h1v1h-1zM106 148h1v1h-1zM169 115h1v1h-1zM142 233h1v1h-1zM237 122h1v1h-1zM213 279h1v1h-1zM108 286h1v1h-1zM373 182h1v1h-1zM118 319h1v1h-1zM506 220h1v1h-1zM334 218h1v1h-1zM251 63h1v1h-1zM131 145h1v1h-1zM82 256h1v1h-1zM344 278h1v1h-1zM539 210h1v1h-1zM408 114h1v1h-1zM83 250h1v1h-1zM533 113h1v1h-1zM517 167h1v1h-1zM363 289h1v1h-1zM549 271h1v1h-1zM505 240h1v1h-1zM508 271h1v1h-1zM177 208h1v1h-1zM52 109h1v1h-1zM570 103h1v1h-1zM258 110h1v1h-1zM159 165h1v1h-1zM77 252h1v1h-1zM151 95h1v1h-1zM289 181h1v1h-1zM258 312h1v1h-1zM574 281h1v1h-1zM357 91h1v1h-1zM423 120h1v1h-1zM344 95h1v1h-1zM420 113h1v1h-1zM571 259h1v1h-1zM350 85h1v1h-1zM144 173h1v1h-1zM438 180h1v1h-1zM543 203h1v1h-1zM173 110h1v1h-1zM60 271h1v1h-1zM540 277h1v1h-1zM543 277h1v1h-1zM311 160h1v1h-1zM370 302h1v1h-1zM137 308h1v1h-1zM440 92h1v1h-1zM39 95h1v1h-1zM538 135h1v1h-1zM492 242h1v1h-1zM136 145h1v1h-1zM165 86h1v1h-1zM217 240h1v1h-1zM317 199h1v1h-1zM294 224h1v1h-1zM350 95h1v1h-1zM80 144h1v1h-1zM434 267h1v1h-1zM328 283h1v1h-1zM409 271h1v1h-1zM390 289h1v1h-1zM206 121h1v1h-1zM392 225h1v1h-1zM344 121h1v1h-1zM460 229h1v1h-1zM291 203h1v1h-1zM194 159h1v1h-1zM586 93h1v1h-1zM309 217h1v1h-1zM314 177h1v1h-1zM80 267h1v1h-1zM59 152h1v1h-1zM254 101h1v1h-1zM542 274h1v1h-1zM35 66h1v1h-1zM57 118h1v1h-1zM124 181h1v1h-1zM96 67h1v1h-1zM606 290h1v1h-1zM67 147h1v1h-1zM140 94h1v1h-1zM347 171h1v1h-1zM206 186h1v1h-1zM303 67h1v1h-1zM68 166h1v1h-1zM435 270h1v1h-1zM256 60h1v1h-1zM527 64h1v1h-1zM179 212h1v1h-1zM305 126h1v1h-1zM379 100h1v1h-1zM466 65h1v1h-1zM42 141h1v1h-1zM488 281h1v1h-1zM558 164h1v1h-1zM557 157h1v1h-1zM322 108h1v1h-1zM390 125h1v1h-1zM535 141h1v1h-1zM556 202h1v1h-1zM244 228h1v1h-1zM158 185h1v1h-1zM283 121h1v1h-1zM40 91h1v1h-1zM490 61h1v1h-1zM217 111h1v1h-1zM76 190h1v1h-1zM536 171h1v1h-1zM577 125h1v1h-1zM492 61h1v1h-1zM124 251h1v1h-1zM47 183h1v1h-1zM305 268h1v1h-1zM391 253h1v1h-1zM62 99h1v1h-1zM360 192h1v1h-1zM556 305h1v1h-1zM502 263h1v1h-1zM179 209h1v1h-1zM318 233h1v1h-1zM185 171h1v1h-1zM160 255h1v1h-1zM36 273h1v1h-1zM510 84h1v1h-1zM513 103h1v1h-1zM405 72h1v1h-1zM186 208h1v1h-1zM578 223h1v1h-1zM129 69h1v1h-1zM494 125h1v1h-1zM288 243h1v1h-1zM427 107h1v1h-1zM320 313h1v1h-1zM215 211h1v1h-1zM269 63h1v1h-1zM569 152h1v1h-1zM598 183h1v1h-1zM336 134h1v1h-1zM56 261h1v1h-1zM174 273h1v1h-1zM392 296h1v1h-1zM221 145h1v1h-1zM413 192h1v1h-1zM570 164h1v1h-1zM495 123h1v1h-1zM191 211h1v1h-1zM350 122h1v1h-1zM57 72h1v1h-1zM231 149h1v1h-1zM274 178h1v1h-1zM217 108h1v1h-1zM157 188h1v1h-1zM576 306h1v1h-1zM554 134h1v1h-1zM209 120h1v1h-1zM526 246h1v1h-1zM574 93h1v1h-1zM35 162h1v1h-1zM68 181h1v1h-1zM370 318h1v1h-1zM284 252h1v1h-1zM458 235h1v1h-1zM343 227h1v1h-1zM516 111h1v1h-1zM42 246h1v1h-1zM110 255h1v1h-1zM269 304h1v1h-1zM406 141h1v1h-1zM108 67h1v1h-1zM70 172h1v1h-1zM441 318h1v1h-1zM453 196h1v1h-1zM361 210h1v1h-1zM56 211h1v1h-1zM61 98h1v1h-1zM541 136h1v1h-1zM411 141h1v1h-1zM141 170h1v1h-1zM358 299h1v1h-1zM358 95h1v1h-1zM23 193h1v1h-1zM76 143h1v1h-1zM70 70h1v1h-1zM476 200h1v1h-1zM263 225h1v1h-1zM518 61h1v1h-1zM562 252h1v1h-1zM384 216h1v1h-1zM511 215h1v1h-1zM519 148h1v1h-1zM129 219h1v1h-1zM452 309h1v1h-1zM520 216h1v1h-1zM500 246h1v1h-1zM372 243h1v1h-1zM103 144h1v1h-1zM361 115h1v1h-1zM186 69h1v1h-1zM25 317h1v1h-1zM54 88h1v1h-1zM409 204h1v1h-1zM96 200h1v1h-1zM394 79h1v1h-1zM464 105h1v1h-1zM84 273h1v1h-1zM280 89h1v1h-1zM422 112h1v1h-1zM333 83h1v1h-1zM426 224h1v1h-1zM215 78h1v1h-1zM415 135h1v1h-1zM524 306h1v1h-1zM64 73h1v1h-1zM45 59h1v1h-1zM29 312h1v1h-1zM194 255h1v1h-1zM392 243h1v1h-1zM211 141h1v1h-1zM141 64h1v1h-1zM342 95h1v1h-1zM388 111h1v1h-1zM138 131h1v1h-1zM85 172h1v1h-1zM495 80h1v1h-1zM413 66h1v1h-1zM164 131h1v1h-1zM228 260h1v1h-1zM37 172h1v1h-1zM246 129h1v1h-1zM113 115h1v1h-1zM353 281h1v1h-1zM551 155h1v1h-1zM54 133h1v1h-1zM440 151h1v1h-1zM262 109h1v1h-1zM528 229h1v1h-1zM284 183h1v1h-1zM56 177h1v1h-1zM537 214h1v1h-1zM416 146h1v1h-1zM285 234h1v1h-1zM305 127h1v1h-1zM111 140h1v1h-1zM239 217h1v1h-1zM117 277h1v1h-1zM146 217h1v1h-1zM406 249h1v1h-1zM493 239h1v1h-1zM101 154h1v1h-1zM71 308h1v1h-1zM198 209h1v1h-1zM527 228h1v1h-1zM564 178h1v1h-1zM514 215h1v1h-1zM218 161h1v1h-1zM432 86h1v1h-1zM404 192h1v1h-1zM265 80h1v1h-1zM401 68h1v1h-1zM123 317h1v1h-1zM48 301h1v1h-1zM312 146h1v1h-1zM109 293h1v1h-1zM133 233h1v1h-1zM303 96h1v1h-1zM102 104h1v1h-1zM60 317h1v1h-1zM163 307h1v1h-1zM174 192h1v1h-1zM124 226h1v1h-1zM194 63h1v1h-1zM107 171h1v1h-1zM65 80h1v1h-1zM235 217h1v1h-1zM161 222h1v1h-1zM414 249h1v1h-1zM598 310h1v1h-1zM216 201h1v1h-1zM567 267h1v1h-1zM466 286h1v1h-1zM314 152h1v1h-1zM279 251h1v1h-1zM273 81h1v1h-1zM532 90h1v1h-1zM572 266h1v1h-1zM298 315h1v1h-1zM112 136h1v1h-1zM76 100h1v1h-1zM276 74h1v1h-1zM437 173h1v1h-1zM259 166h1v1h-1zM200 275h1v1h-1zM122 244h1v1h-1zM94 249h1v1h-1zM232 97h1v1h-1zM482 77h1v1h-1zM479 148h1v1h-1zM143 76h1v1h-1zM534 74h1v1h-1zM516 116h1v1h-1zM372 197h1v1h-1zM415 162h1v1h-1zM287 162h1v1h-1zM376 240h1v1h-1zM208 287h1v1h-1zM594 206h1v1h-1zM411 281h1v1h-1zM452 264h1v1h-1zM39 185h1v1h-1zM543 219h1v1h-1zM450 87h1v1h-1zM79 90h1v1h-1zM165 230h1v1h-1zM431 90h1v1h-1zM564 254h1v1h-1zM541 200h1v1h-1zM354 99h1v1h-1zM253 230h1v1h-1zM594 254h1v1h-1zM129 270h1v1h-1zM559 103h1v1h-1zM565 291h1v1h-1zM476 61h1v1h-1zM530 296h1v1h-1zM84 296h1v1h-1zM505 107h1v1h-1zM148 163h1v1h-1zM395 242h1v1h-1zM312 170h1v1h-1zM199 77h1v1h-1zM273 99h1v1h-1zM91 147h1v1h-1zM320 311h1v1h-1zM320 251h1v1h-1zM65 234h1v1h-1zM276 120h1v1h-1zM476 146h1v1h-1zM135 259h1v1h-1zM552 76h1v1h-1zM455 204h1v1h-1zM509 126h1v1h-1zM451 297h1v1h-1zM148 259h1v1h-1zM249 270h1v1h-1zM187 266h1v1h-1zM147 223h1v1h-1zM359 108h1v1h-1zM25 180h1v1h-1zM561 229h1v1h-1zM558 249h1v1h-1zM240 292h1v1h-1zM415 189h1v1h-1zM391 105h1v1h-1zM341 176h1v1h-1zM550 140h1v1h-1zM249 122h1v1h-1zM548 166h1v1h-1zM566 72h1v1h-1zM513 231h1v1h-1zM595 141h1v1h-1zM216 205h1v1h-1zM192 225h1v1h-1zM493 212h1v1h-1zM120 243h1v1h-1zM551 275h1v1h-1zM420 173h1v1h-1zM70 228h1v1h-1zM211 70h1v1h-1zM58 178h1v1h-1zM98 189h1v1h-1zM300 308h1v1h-1zM142 247h1v1h-1zM292 71h1v1h-1zM59 123h1v1h-1zM97 233h1v1h-1zM245 218h1v1h-1zM92 119h1v1h-1zM394 61h1v1h-1zM246 137h1v1h-1zM541 143h1v1h-1zM543 318h1v1h-1zM167 96h1v1h-1zM138 193h1v1h-1zM100 100h1v1h-1zM249 76h1v1h-1zM90 73h1v1h-1zM260 218h1v1h-1zM229 205h1v1h-1zM329 253h1v1h-1zM73 122h1v1h-1zM459 100h1v1h-1zM482 278h1v1h-1zM432 182h1v1h-1zM329 170h1v1h-1zM88 170h1v1h-1zM179 215h1v1h-1zM250 105h1v1h-1zM47 198h1v1h-1zM166 57h1v1h-1zM352 301h1v1h-1zM412 68h1v1h-1zM501 77h1v1h-1zM245 288h1v1h-1zM169 182h1v1h-1zM329 236h1v1h-1zM283 282h1v1h-1zM25 223h1v1h-1zM264 234h1v1h-1zM116 244h1v1h-1zM445 87h1v1h-1zM475 274h1v1h-1zM457 75h1v1h-1zM163 132h1v1h-1zM489 280h1v1h-1zM37 201h1v1h-1zM595 164h1v1h-1zM468 294h1v1h-1zM450 249h1v1h-1zM23 157h1v1h-1zM134 56h1v1h-1zM445 210h1v1h-1zM495 109h1v1h-1zM201 234h1v1h-1zM351 280h1v1h-1zM263 250h1v1h-1zM49 154h1v1h-1zM310 117h1v1h-1zM566 242h1v1h-1zM603 295h1v1h-1zM151 282h1v1h-1zM443 78h1v1h-1zM80 81h1v1h-1zM415 89h1v1h-1zM207 106h1v1h-1zM69 126h1v1h-1zM115 300h1v1h-1zM569 90h1v1h-1zM138 302h1v1h-1zM218 128h1v1h-1zM498 162h1v1h-1zM480 272h1v1h-1zM62 204h1v1h-1zM219 245h1v1h-1zM316 172h1v1h-1zM519 283h1v1h-1zM505 294h1v1h-1zM143 144h1v1h-1zM555 200h1v1h-1zM56 313h1v1h-1zM260 171h1v1h-1zM424 318h1v1h-1zM349 183h1v1h-1zM156 83h1v1h-1zM70 68h1v1h-1zM61 174h1v1h-1zM379 193h1v1h-1zM383 92h1v1h-1zM555 279h1v1h-1zM538 215h1v1h-1zM270 237h1v1h-1z" fill="#ffffff" opacity="0.15"/>
<path d="M519.7 72.2h1v1h-1zM483.5 216.8h1.4v1.4h-1.4zM363.1 311.9h1.1v1.1h-1.1zM381.2 106.8h1.4v1.4h-1.4zM187.6 225.0h1.8v1.8h-1.8zM270.7 227.7h1.3v1.3h-1.3zM251.1 237.1h1.4v1.4h-1.4zM251.1 190.5h1.8v1.8h-1.8zM455.6 114.2h1.1v1.1h-1.1zM419.8 301.8h1.3v1.3h-1.3zM179.1 150.5h1v1h-1zM528.4 64.5h1.3v1.3h-1.3zM524.3 152.2h1.4v1.4h-1.4zM497.9 156.5h1.6v1.6h-1.6zM380.4 277.8h1.1v1.1h-1.1zM65.4 186.5h1.6v1.6h-1.6zM603.3 256.3h1.6v1.6h-1.6zM104.1 125.0h1v1h-1zM384.0 284.2h1v1h-1zM100.4 218.8h1.1v1.1h-1.1zM114.1 62.4h1v1h-1zM458.9 109.9h1.4v1.4h-1.4zM53.4 279.8h1.2v1.2h-1.2zM111.6 115.4h1.8v1.8h-1.8zM144.3 266.6h1.2v1.2h-1.2zM137.4 304.8h1.1v1.1h-1.1zM72.3 144.0h1.4v1.4h-1.4zM366.5 295.4h1.4v1.4h-1.4zM293.8 97.3h1.2v1.2h-1.2zM462.6 128.7h1.3v1.3h-1.3zM144.0 302.3h1.4v1.4h-1.4zM191.8 90.8h1.3v1.3h-1.3zM560.1 313.3h1.6v1.6h-1.6zM279.4 317.2h1.1v1.1h-1.1zM175.1 297.1h1.1v1.1h-1.1zM41.1 194.2h1.8v1.8h-1.8zM158.5 231.0h1.3v1.3h-1.3zM533.1 279.4h1.8v1.8h-1.8zM170.8 223.7h1.6v1.6h-1.6zM488.2 81.7h1.2v1.2h-1.2zM196.5 154.1h1.3v1.3h-1.3zM387.8 200.9h1.8v1.8h-1.8zM45.7 284.8h1.8v1.8h-1.8zM193.8 234.0h1.2v1.2h-1.2zM278.5 186.3h1.4v1.4h-1.4zM208.3 186.2h1.6v1.6h-1.6zM302.6 145.8h1v1h-1zM293.7 314.4h1.8v1.8h-1.8zM391.6 91.5h1.8v1.8h-1.8zM37.6 192.8h1.3v1.3h-1.3zM339.7 185.7h1.1v1.1h-1.1zM79.9 281.7h1.6v1.6h-1.6zM262.4 302.4h1v1h-1zM603.4 282.8h1v1h-1zM383.7 189.4h1.8v1.8h-1.8zM124.7 166.2h1.1v1.1h-1.1zM120.2 124.6h1.4v1.4h-1.4zM488.9 281.8h1.4v1.4h-1.4zM220.3 277.3h1.8v1.8h-1.8zM78.7 200.0h1.2v1.2h-1.2zM357.9 131.6h1.3v1.3h-1.3zM410.5 133.8h1v1h-1zM604.2 225.8h1.8v1.8h-1.8zM137.3 257.7h1.2v1.2h-1.2zM34.6 74.1h1v1h-1zM391.3 113.0h1.4v1.4h-1.4zM319.5 156.1h1.3v1.3h-1.3zM224.2 188.0h1.8v1.8h-1.8zM468.8 259.3h1.8v1.8h-1.8zM286.5 79.0h1.1v1.1h-1.1zM394.5 294.2h1.8v1.8h-1.8zM249.1 85.8h1.8v1.8h-1.8zM37.8 238.5h1v1h-1zM137.0 266.9h1.1v1.1h-1.1zM345.4 90.1h1.3v1.3h-1.3zM236.6 139.4h1.1v1.1h-1.1zM439.6 189.6h1.8v1.8h-1.8zM150.1 195.4h1.2v1.2h-1.2zM276.3 275.9h1.8v1.8h-1.8zM257.2 63.2h1v1h-1zM198.2 165.1h1.3v1.3h-1.3zM585.2 263.0h1v1h-1zM546.4 214.0h1.3v1.3h-1.3zM378.4 298.2h1.2v1.2h-1.2zM210.6 287.7h1.2v1.2h-1.2zM520.9 72.3h1.8v1.8h-1.8zM544.2 130.1h1.2v1.2h-1.2zM239.2 213.6h1.1v1.1h-1.1zM535.3 245.4h1.6v1.6h-1.6zM596.4 310.1h1.6v1.6h-1.6zM105.1 285.6h1.2v1.2h-1.2zM579.3 315.0h1.2v1.2h-1.2zM360.6 223.8h1.4v1.4h-1.4zM69.6 214.4h1.6v1.6h-1.6zM289.2 291.3h1.6v1.6h-1.6zM284.4 113.4h1.6v1.6h-1.6zM278.8 222.4h1.8v1.8h-1.8zM468.5 84.6h1.3v1.3h-1.3zM144.8 181.0h1.1v1.1h-1.1zM523.4 276.2h1.8v1.8h-1.8zM539.3 83.0h1v1h-1zM302.9 107.5h1.1v1.1h-1.1zM516.6 129.3h1.8v1.8h-1.8zM466.9 217.3h1.4v1.4h-1.4zM478.1 292.2h1v1h-1zM31.3 110.0h1.6v1.6h-1.6zM116.7 237.9h1.6v1.6h-1.6zM485.9 283.2h1.1v1.1h-1.1zM598.9 72.1h1.4v1.4h-1.4zM127.3 235.7h1.6v1.6h-1.6zM160.1 203.0h1.6v1.6h-1.6zM107.6 240.9h1.3v1.3h-1.3zM335.7 180.5h1.1v1.1h-1.1zM424.6 69.5h1v1h-1zM579.4 65.7h1.4v1.4h-1.4zM431.7 204.6h1.2v1.2h-1.2zM213.1 109.2h1v1h-1zM397.1 183.1h1.6v1.6h-1.6zM549.8 270.5h1v1h-1zM495.3 240.6h1.8v1.8h-1.8zM236.3 246.1h1.2v1.2h-1.2zM181.0 119.2h1.6v1.6h-1.6zM139.0 295.7h1.8v1.8h-1.8zM165.8 162.8h1.2v1.2h-1.2zM202.1 238.0h1v1h-1zM591.0 265.4h1.3v1.3h-1.3zM191.4 59.3h1.8v1.8h-1.8zM337.4 71.7h1.8v1.8h-1.8zM235.2 199.1h1.6v1.6h-1.6zM299.4 195.4h1.8v1.8h-1.8zM219.8 277.5h1.8v1.8h-1.8zM493.2 82.2h1v1h-1zM92.4 179.8h1.4v1.4h-1.4zM128.9 177.7h1.6v1.6h-1.6zM188.5 267.2h1.6v1.6h-1.6zM457.4 244.1h1.3v1.3h-1.3zM377.6 293.0h1.2v1.2h-1.2zM383.4 224.3h1.2v1.2h-1.2zM335.4 168.0h1.1v1.1h-1.1zM384.0 112.8h1.6v1.6h-1.6zM86.4 261.9h1.3v1.3h-1.3zM231.5 224.6h1.2v1.2h-1.2zM545.2 265.0h1v1h-1zM329.0 168.7h1.8v1.8h-1.8zM272.5 266.4h1.6v1.6h-1.6zM423.4 297.9h1.3v1.3h-1.3zM479.9 113.0h1.3v1.3h-1.3zM71.2 289.0h1.4v1.4h-1.4zM474.6 75.3h1.4v1.4h-1.4zM190.2 199.8h1.3v1.3h-1.3zM539.6 148.3h1.4v1.4h-1.4zM138.7 91.9h1.2v1.2h-1.2zM389.6 197.1h1.2v1.2h-1.2zM269.8 117.4h1.8v1.8h-1.8zM351.8 130.0h1.4v1.4h-1.4zM566.4 119.3h1.1v1.1h-1.1zM210.1 272.7h1.1v1.1h-1.1zM270.1 87.2h1.8v1.8h-1.8zM584.4 296.3h1.8v1.8h-1.8zM304.8 85.2h1.2v1.2h-1.2zM312.8 118.0h1.3v1.3h-1.3zM365.7 145.9h1.6v1.6h-1.6zM142.9 70.8h1.6v1.6h-1.6zM497.4 90.7h1.8v1.8h-1.8zM189.9 259.4h1v1h-1zM165.5 142.8h1.8v1.8h-1.8zM416.2 214.4h1.1v1.1h-1.1zM75.6 127.1h1.8v1.8h-1.8zM207.2 72.1h1.8v1.8h-1.8zM103.2 233.9h1.8v1.8h-1.8zM586.2 186.5h1.1v1.1h-1.1zM579.2 291.6h1.6v1.6h-1.6zM479.3 227.8h1.3v1.3h-1.3zM519.4 258.2h1.3v1.3h-1.3zM583.8 57.6h1.4v1.4h-1.4zM131.7 245.5h1.2v1.2h-1.2zM507.7 287.6h1.4v1.4h-1.4zM154.9 254.4h1.3v1.3h-1.3zM433.9 128.2h1.1v1.1h-1.1zM36.6 185.7h1.6v1.6h-1.6zM605.7 305.1h1.6v1.6h-1.6zM322.5 119.2h1v1h-1zM133.9 103.2h1.1v1.1h-1.1zM23.1 300.5h1.6v1.6h-1.6zM177.4 238.9h1.1v1.1h-1.1zM274.1 93.6h1.4v1.4h-1.4zM551.4 256.5h1.3v1.3h-1.3zM377.6 100.5h1.8v1.8h-1.8zM172.8 193.6h1.2v1.2h-1.2zM44.5 71.8h1.4v1.4h-1.4zM465.6 284.6h1.4v1.4h-1.4zM153.2 306.4h1.3v1.3h-1.3zM194.9 160.4h1.1v1.1h-1.1zM466.7 134.4h1.6v1.6h-1.6zM250.4 294.2h1.2v1.2h-1.2zM370.4 313.8h1.1v1.1h-1.1zM473.8 83.3h1.1v1.1h-1.1zM469.0 81.0h1v1h-1zM188.4 297.5h1.4v1.4h-1.4zM171.9 149.7h1.4v1.4h-1.4zM250.4 108.7h1v1h-1zM82.9 205.4h1.3v1.3h-1.3zM465.9 134.9h1.1v1.1h-1.1zM536.1 188.5h1.2v1.2h-1.2zM131.1 291.0h1v1h-1zM245.1 137.0h1.4v1.4h-1.4zM411.0 136.4h1v1h-1zM441.0 141.7h1.4v1.4h-1.4zM184.3 211.4h1.6v1.6h-1.6zM399.7 212.3h1.2v1.2h-1.2zM66.8 242.2h1.8v1.8h-1.8zM165.0 65.9h1.1v1.1h-1.1zM364.1 251.4h1.8v1.8h-1.8zM34.6 230.1h1.3v1.3h-1.3zM63.5 87.9h1.6v1.6h-1.6zM327.4 123.2h1.8v1.8h-1.8zM252.8 106.2h1.4v1.4h-1.4zM99.3 87.1h1.1v1.1h-1.1zM236.5 59.7h1.2v1.2h-1.2zM590.9 308.5h1v1h-1zM346.1 196.3h1.6v1.6h-1.6zM542.2 253.5h1.2v1.2h-1.2zM181.4 119.9h1.8v1.8h-1.8zM271.9 208.5h1.2v1.2h-1.2zM512.6 95.1h1v1h-1zM77.2 280.7h1.8v1.8h-1.8zM223.7 125.6h1.8v1.8h-1.8zM505.7 286.5h1v1h-1zM549.7 135.8h1.2v1.2h-1.2zM83.1 313.0h1v1h-1zM40.4 227.2h1v1h-1zM175.4 220.5h1.2v1.2h-1.2zM434.3 72.1h1.3v1.3h-1.3zM280.7 88.0h1.4v1.4h-1.4zM487.1 304.0h1.3v1.3h-1.3zM25.9 202.6h1.8v1.8h-1.8zM38.4 104.5h1.3v1.3h-1.3zM100.8 110.8h1.6v1.6h-1.6zM211.2 87.4h1v1h-1zM178.5 81.4h1.3v1.3h-1.3zM551.3 76.1h1.3v1.3h-1.3zM89.8 173.2h1.8v1.8h-1.8zM372.3 103.0h1.3v1.3h-1.3zM556.9 87.5h1.2v1.2h-1.2zM594.9 95.9h1.2v1.2h-1.2zM584.5 181.8h1.3v1.3h-1.3zM350.6 117.2h1.1v1.1h-1.1zM89.4 218.1h1.6v1.6h-1.6zM318.4 112.2h1.4v1.4h-1.4zM274.2 185.1h1v1h-1zM227.4 223.8h1.2v1.2h-1.2zM514.9 213.7h1.6v1.6h-1.6zM455.6 58.6h1.6v1.6h-1.6zM435.3 299.4h1.6v1.6h-1.6zM587.8 129.2h1.6v1.6h-1.6zM153.0 256.5h1.8v1.8h-1.8zM161.7 175.9h1.1v1.1h-1.1zM45.2 292.6h1v1h-1zM45.9 202.8h1.4v1.4h-1.4zM254.9 166.0h1.3v1.3h-1.3zM195.7 250.3h1.2v1.2h-1.2zM277.9 124.2h1.3v1.3h-1.3zM38.2 139.7h1.2v1.2h-1.2zM601.8 296.8h1.2v1.2h-1.2zM159.9 276.2h1v1h-1zM538.5 306.5h1.6v1.6h-1.6zM267.4 242.7h1.6v1.6h-1.6zM518.7 210.5h1.3v1.3h-1.3zM436.1 136.1h1.4v1.4h-1.4zM146.8 297.3h1.3v1.3h-1.3zM164.7 160.6h1.2v1.2h-1.2zM94.1 60.5h1.8v1.8h-1.8zM440.0 160.4h1.3v1.3h-1.3zM159.8 160.9h1.1v1.1h-1.1zM255.3 318.8h1.4v1.4h-1.4zM342.8 279.6h1.2v1.2h-1.2zM439.3 102.6h1.4v1.4h-1.4zM277.2 120.3h1.2v1.2h-1.2zM521.0 258.0h1.6v1.6h-1.6zM409.0 63.2h1v1h-1zM148.4 150.1h1.1v1.1h-1.1zM49.4 239.0h1.4v1.4h-1.4zM468.5 187.2h1v1h-1zM225.0 122.1h1.3v1.3h-1.3zM536.8 164.6h1.8v1.8h-1.8zM102.0 152.6h1.6v1.6h-1.6zM169.9 113.8h1.3v1.3h-1.3zM153.1 90.1h1.1v1.1h-1.1zM304.6 274.7h1.1v1.1h-1.1zM383.8 93.6h1.8v1.8h-1.8zM287.6 293.6h1.2v1.2h-1.2zM68.8 115.4h1.3v1.3h-1.3zM364.8 204.5h1.2v1.2h-1.2zM307.2 206.7h1.6v1.6h-1.6zM82.1 288.9h1.4v1.4h-1.4zM205.3 316.2h1v1h-1zM108.6 288.6h1.6v1.6h-1.6zM398.1 143.1h1v1h-1zM484.9 193.3h1v1h-1zM177.5 299.6h1.3v1.3h-1.3zM463.8 82.7h1v1h-1zM398.4 137.4h1.1v1.1h-1.1zM535.4 209.2h1.8v1.8h-1.8zM362.1 139.1h1.6v1.6h-1.6zM260.4 66.9h1.3v1.3h-1.3zM31.4 293.5h1.8v1.8h-1.8zM325.0 226.5h1.8v1.8h-1.8zM98.7 124.4h1.3v1.3h-1.3zM296.9 280.8h1.4v1.4h-1.4zM154.9 126.2h1.8v1.8h-1.8zM410.3 260.2h1v1h-1zM391.7 183.5h1.8v1.8h-1.8zM95.9 153.9h1.3v1.3h-1.3zM412.0 241.5h1.1v1.1h-1.1zM120.2 72.6h1.2v1.2h-1.2zM98.4 227.2h1.4v1.4h-1.4zM299.2 227.9h1.6v1.6h-1.6zM169.7 264.1h1.6v1.6h-1.6zM283.7 236.2h1.4v1.4h-1.4zM223.4 58.2h1.6v1.6h-1.6zM80.1 150.4h1.8v1.8h-1.8zM279.7 114.5h1.1v1.1h-1.1zM558.7 218.4h1.6v1.6h-1.6zM570.5 305.1h1.3v1.3h-1.3zM426.6 107.9h1.4v1.4h-1.4zM359.3 127.5h1v1h-1zM185.2 275.3h1.1v1.1h-1.1zM418.5 239.9h1.3v1.3h-1.3zM323.1 141.6h1.2v1.2h-1.2zM72.0 308.7h1.3v1.3h-1.3zM128.6 198.8h1.8v1.8h-1.8zM65.1 207.0h1v1h-1zM265.7 115.4h1.4v1.4h-1.4zM102.8 241.2h1.4v1.4h-1.4zM434.0 172.7h1.2v1.2h-1.2zM115.5 124.4h1.1v1.1h-1.1zM287.3 139.0h1.1v1.1h-1.1zM269.4 279.5h1.4v1.4h-1.4zM589.1 250.8h1.8v1.8h-1.8zM541.3 236.1h1.1v1.1h-1.1zM159.8 228.2h1.1v1.1h-1.1zM390.2 167.4h1.2v1.2h-1.2zM89.6 223.2h1.4v1.4h-1.4zM147.4 279.5h1.8v1.8h-1.8zM166.8 130.1h1v1h-1zM400.9 289.3h1.3v1.3h-1.3zM291.3 154.5h1.2v1.2h-1.2zM69.5 296.6h1.1v1.1h-1.1zM432.3 60.5h1.2v1.2h-1.2zM111.2 68.0h1.4v1.4h-1.4zM587.8 227.3h1v1h-1zM288.8 282.7h1.3v1.3h-1.3zM359.9 164.7h1.8v1.8h-1.8zM122.1 168.4h1v1h-1zM320.0 291.5h1v1h-1zM130.4 298.1h1.6v1.6h-1.6zM471.2 214.1h1v1h-1zM78.1 62.4h1.2v1.2h-1.2zM536.1 259.2h1.3v1.3h-1.3zM235.0 65.7h1v1h-1zM46.7 160.6h1.6v1.6h-1.6zM490.5 149.3h1.6v1.6h-1.6zM582.1 216.8h1.3v1.3h-1.3zM76.5 235.2h1.4v1.4h-1.4zM295.2 253.4h1.1v1.1h-1.1zM83.1 184.6h1v1h-1zM43.6 147.5h1.3v1.3h-1.3zM176.7 315.1h1.1v1.1h-1.1zM193.4 159.8h1.8v1.8h-1.8zM192.4 71.3h1.4v1.4h-1.4zM566.1 136.8h1.1v1.1h-1.1zM551.5 191.8h1.2v1.2h-1.2zM516.2 211.8h1.1v1.1h-1.1zM243.8 182.2h1.1v1.1h-1.1zM83.3 223.6h1v1h-1zM597.5 90.9h1.1v1.1h-1.1zM522.8 306.2h1.1v1.1h-1.1zM349.4 63.2h1.4v1.4h-1.4zM578.0 238.9h1.2v1.2h-1.2zM560.3 184.6h1.8v1.8h-1.8zM575.9 68.5h1v1h-1zM466.7 143.7h1.6v1.6h-1.6zM586.2 153.3h1.6v1.6h-1.6zM282.4 223.4h1.3v1.3h-1.3zM386.7 158.0h1.2v1.2h-1.2zM266.3 85.0h1.4v1.4h-1.4zM465.0 110.4h1.1v1.1h-1.1zM488.3 138.6h1.1v1.1h-1.1zM74.3 191.5h1.8v1.8h-1.8zM272.4 302.0h1.8v1.8h-1.8zM595.4 236.6h1.6v1.6h-1.6zM203.8 188.2h1.1v1.1h-1.1zM484.4 234.3h1.1v1.1h-1.1zM309.3 173.0h1.1v1.1h-1.1zM390.2 300.4h1.2v1.2h-1.2zM49.0 99.5h1v1h-1zM463.2 196.0h1.2v1.2h-1.2zM444.0 278.1h1v1h-1zM351.7 98.5h1.4v1.4h-1.4zM92.8 73.7h1v1h-1zM175.9 234.2h1.4v1.4h-1.4zM591.5 217.2h1.1v1.1h-1.1zM67.3 195.3h1.8v1.8h-1.8zM193.8 281.5h1.3v1.3h-1.3zM48.2 236.5h1v1h-1zM234.9 228.2h1.3v1.3h-1.3zM541.5 86.9h1.3v1.3h-1.3zM521.4 201.7h1.8v1.8h-1.8zM169.7 75.4h1.2v1.2h-1.2zM312.0 235.0h1.2v1.2h-1.2zM437.6 94.3h1.1v1.1h-1.1zM405.9 283.0h1.8v1.8h-1.8zM132.8 192.4h1v1h-1zM265.5 121.9h1.3v1.3h-1.3zM350.8 184.5h1.1v1.1h-1.1zM271.5 286.7h1.8v1.8h-1.8zM148.5 118.3h1.3v1.3h-1.3zM207.1 228.2h1.6v1.6h-1.6zM437.3 312.3h1.6v1.6h-1.6zM87.8 271.5h1.4v1.4h-1.4zM414.1 290.7h1.2v1.2h-1.2zM491.6 270.9h1.1v1.1h-1.1zM298.1 269.5h1.1v1.1h-1.1zM365.2 317.8h1.2v1.2h-1.2zM396.6 101.8h1v1h-1zM118.2 188.8h1v1h-1zM599.4 165.3h1v1h-1zM557.8 291.4h1v1h-1zM71.2 195.9h1v1h-1zM372.5 98.2h1v1h-1zM376.4 270.1h1.1v1.1h-1.1zM500.4 265.7h1.4v1.4h-1.4zM499.5 242.9h1.8v1.8h-1.8zM597.9 172.8h1.4v1.4h-1.4zM418.1 193.6h1.8v1.8h-1.8zM60.0 162.4h1.1v1.1h-1.1zM97.9 111.0h1.3v1.3h-1.3zM96.5 313.3h1v1h-1zM431.3 81.0h1v1h-1zM536.4 63.9h1.8v1.8h-1.8zM402.5 92.3h1.6v1.6h-1.6zM356.2 148.8h1.6v1.6h-1.6zM287.7 154.9h1.4v1.4h-1.4zM114.1 77.1h1.2v1.2h-1.2zM140.8 299.7h1.6v1.6h-1.6zM363.4 288.9h1.2v1.2h-1.2zM394.5 116.2h1v1h-1zM285.9 84.3h1.3v1.3h-1.3zM591.5 279.5h1v1h-1zM379.0 88.2h1v1h-1zM241.7 238.8h1.6v1.6h-1.6zM225.0 246.7h1v1h-1zM247.0 170.4h1.3v1.3h-1.3zM576.6 113.1h1.6v1.6h-1.6zM569.1 112.2h1.1v1.1h-1.1zM182.7 135.0h1.3v1.3h-1.3zM376.7 311.8h1.8v1.8h-1.8zM276.0 218.1h1.3v1.3h-1.3zM56.2 194.5h1.6v1.6h-1.6zM582.5 265.2h1v1h-1zM189.3 269.8h1.2v1.2h-1.2zM357.5 222.4h1v1h-1zM267.3 87.7h1.6v1.6h-1.6zM544.6 319.0h1.8v1.8h-1.8zM352.1 226.4h1.8v1.8h-1.8zM503.7 71.6h1.8v1.8h-1.8zM198.4 220.3h1.2v1.2h-1.2zM551.5 188.1h1.4v1.4h-1.4zM170.3 236.3h1.1v1.1h-1.1zM461.5 216.0h1.6v1.6h-1.6zM247.5 224.0h1.2v1.2h-1.2zM545.2 95.3h1.6v1.6h-1.6zM435.9 104.0h1.6v1.6h-1.6zM349.5 62.1h1.3v1.3h-1.3zM371.5 209.7h1.6v1.6h-1.6zM93.4 202.3h1.8v1.8h-1.8zM358.7 89.4h1.2v1.2h-1.2zM311.0 274.2h1.2v1.2h-1.2zM125.4 127.3h1.8v1.8h-1.8zM473.3 246.5h1.2v1.2h-1.2zM473.9 93.3h1v1h-1zM511.3 265.7h1.2v1.2h-1.2zM47.6 145.3h1v1h-1zM292.7 306.0h1.4v1.4h-1.4zM457.4 246.6h1.1v1.1h-1.1zM424.8 277.4h1.1v1.1h-1.1zM460.7 258.1h1.6v1.6h-1.6zM77.8 309.8h1.3v1.3h-1.3zM525.6 270.7h1.2v1.2h-1.2zM575.8 93.7h1.8v1.8h-1.8zM542.8 299.8h1.2v1.2h-1.2zM456.1 58.2h1.1v1.1h-1.1zM354.3 275.6h1.3v1.3h-1.3zM566.6 155.1h1.1v1.1h-1.1zM383.7 92.4h1.3v1.3h-1.3zM321.1 127.6h1.8v1.8h-1.8zM187.9 166.9h1v1h-1zM600.4 104.9h1.6v1.6h-1.6zM107.8 113.4h1.3v1.3h-1.3zM307.6 62.3h1.6v1.6h-1.6zM66.4 259.4h1.2v1.2h-1.2zM567.7 84.0h1.8v1.8h-1.8zM287.7 238.0h1.6v1.6h-1.6zM143.1 166.6h1.2v1.2h-1.2zM395.0 221.3h1.4v1.4h-1.4zM583.4 128.5h1.3v1.3h-1.3zM490.2 186.6h1.8v1.8h-1.8zM585.6 64.3h1.2v1.2h-1.2zM91.4 108.7h1.6v1.6h-1.6zM482.7 112.8h1.6v1.6h-1.6zM102.8 114.4h1.2v1.2h-1.2zM490.4 194.3h1.1v1.1h-1.1zM36.1 114.3h1.1v1.1h-1.1zM497.3 196.3h1.4v1.4h-1.4zM347.4 246.6h1.2v1.2h-1.2zM73.6 126.2h1.3v1.3h-1.3zM77.3 251.0h1.6v1.6h-1.6zM350.5 117.3h1.6v1.6h-1.6zM394.0 86.9h1.6v1.6h-1.6zM542.5 150.9h1.2v1.2h-1.2zM537.5 265.0h1.6v1.6h-1.6zM111.2 219.2h1.3v1.3h-1.3zM31.0 171.3h1.1v1.1h-1.1zM152.3 86.3h1v1h-1zM118.3 211.6h1.4v1.4h-1.4zM105.1 269.2h1.3v1.3h-1.3zM240.7 155.6h1.2v1.2h-1.2zM466.6 183.3h1.6v1.6h-1.6zM250.8 236.8h1.8v1.8h-1.8zM172.3 319.5h1v1h-1zM480.6 165.3h1.4v1.4h-1.4zM31.6 224.5h1.1v1.1h-1.1zM187.4 228.4h1.2v1.2h-1.2zM564.6 243.0h1.1v1.1h-1.1zM448.2 274.5h1.1v1.1h-1.1zM367.0 118.8h1.1v1.1h-1.1zM66.8 301.0h1v1h-1zM56.6 302.7h1v1h-1zM268.0 109.4h1.3v1.3h-1.3zM537.7 195.7h1.8v1.8h-1.8zM521.0 244.3h1.1v1.1h-1.1zM581.8 93.5h1.1v1.1h-1.1zM34.2 299.5h1.3v1.3h-1.3zM149.9 241.8h1.2v1.2h-1.2zM478.5 212.9h1v1h-1zM432.8 275.6h1.8v1.8h-1.8zM65.5 292.6h1.6v1.6h-1.6zM66.7 227.6h1.1v1.1h-1.1zM597.0 62.9h1.3v1.3h-1.3zM81.2 161.9h1.1v1.1h-1.1zM139.8 291.9h1.3v1.3h-1.3zM444.8 89.0h1v1h-1zM341.9 176.8h1v1h-1zM453.4 293.4h1.1v1.1h-1.1zM506.1 178.3h1.8v1.8h-1.8zM166.7 315.5h1v1h-1zM524.3 311.9h1.3v1.3h-1.3zM584.3 70.4h1.3v1.3h-1.3zM375.9 214.0h1.6v1.6h-1.6zM170.5 153.5h1v1h-1zM286.4 253.5h1.6v1.6h-1.6zM379.7 156.6h1.8v1.8h-1.8zM517.4 83.2h1.3v1.3h-1.3zM127.0 81.5h1v1h-1zM272.9 110.2h1.8v1.8h-1.8zM387.0 264.6h1v1h-1zM407.6 216.8h1v1h-1zM396.9 225.1h1.4v1.4h-1.4zM351.2 62.5h1.2v1.2h-1.2zM340.3 292.9h1.6v1.6h-1.6zM162.7 262.9h1.1v1.1h-1.1zM473.3 116.3h1.1v1.1h-1.1zM242.0 75.0h1.2v1.2h-1.2zM555.9 296.5h1.4v1.4h-1.4zM527.9 166.1h1.8v1.8h-1.8zM298.1 101.9h1.8v1.8h-1.8zM349.8 154.0h1v1h-1zM266.3 69.8h1.4v1.4h-1.4zM262.2 205.0h1.4v1.4h-1.4zM122.7 97.1h1.4v1.4h-1.4zM303.7 234.7h1.1v1.1h-1.1zM45.1 143.9h1.6v1.6h-1.6zM308.1 100.2h1.6v1.6h-1.6zM150.5 114.5h1.2v1.2h-1.2zM90.1 180.7h1.3v1.3h-1.3zM140.7 186.4h1.4v1.4h-1.4zM425.2 78.7h1v1h-1zM197.6 309.1h1v1h-1zM131.6 172.0h1v1h-1zM316.9 281.0h1.1v1.1h-1.1zM170.4 219.0h1.4v1.4h-1.4zM119.6 224.6h1.4v1.4h-1.4zM467.6 192.0h1.3v1.3h-1.3zM186.7 97.9h1.1v1.1h-1.1zM243.6 81.6h1.1v1.1h-1.1zM433.2 244.0h1.8v1.8h-1.8zM426.4 126.7h1v1h-1zM569.8 185.7h1.3v1.3h-1.3zM540.1 305.0h1.1v1.1h-1.1zM121.6 314.1h1.8v1.8h-1.8zM483.8 98.1h1.6v1.6h-1.6zM115.5 228.3h1.3v1.3h-1.3zM378.9 81.6h1.2v1.2h-1.2zM485.5 140.6h1.8v1.8h-1.8zM184.7 79.8h1.3v1.3h-1.3zM400.1 186.4h1.6v1.6h-1.6zM282.8 61.0h1.2v1.2h-1.2zM106.0 56.8h1.8v1.8h-1.8zM321.3 157.6h1.2v1.2h-1.2zM199.6 70.3h1.4v1.4h-1.4zM69.0 271.7h1.3v1.3h-1.3zM363.2 274.7h1.4v1.4h-1.4zM567.5 205.8h1.8v1.8h-1.8zM169.5 80.7h1.4v1.4h-1.4zM575.5 216.3h1.2v1.2h-1.2zM161.4 178.0h1.2v1.2h-1.2zM154.9 162.3h1v1h-1zM290.6 280.9h1.8v1.8h-1.8zM381.3 307.5h1.2v1.2h-1.2zM157.6 313.0h1.3v1.3h-1.3zM184.0 213.0h1.6v1.6h-1.6zM434.4 154.8h1.6v1.6h-1.6zM456.5 113.3h1.6v1.6h-1.6zM186.5 90.6h1.6v1.6h-1.6zM44.5 64.8h1v1h-1zM476.4 70.0h1.1v1.1h-1.1zM141.7 241.8h1.2v1.2h-1.2zM509.2 299.4h1.3v1.3h-1.3zM157.7 175.8h1.2v1.2h-1.2zM587.3 177.5h1.2v1.2h-1.2zM520.2 294.5h1.8v1.8h-1.8zM141.2 71.1h1.4v1.4h-1.4zM268.3 101.4h1.4v1.4h-1.4zM69.9 218.6h1.2v1.2h-1.2zM147.8 173.1h1v1h-1zM395.5 62.3h1.2v1.2h-1.2zM148.0 142.5h1.2v1.2h-1.2zM463.3 297.9h1.2v1.2h-1.2zM441.8 199.4h1.8v1.8h-1.8zM84.5 138.2h1v1h-1zM493.5 184.4h1.4v1.4h-1.4zM272.9 274.9h1.4v1.4h-1.4zM443.6 63.3h1.3v1.3h-1.3zM488.8 200.1h1.1v1.1h-1.1zM230.7 125.7h1.6v1.6h-1.6zM439.0 199.7h1.6v1.6h-1.6zM79.2 136.9h1.4v1.4h-1.4zM373.0 319.2h1.2v1.2h-1.2zM238.8 101.2h1.4v1.4h-1.4zM450.5 274.7h1.4v1.4h-1.4zM500.5 158.2h1.1v1.1h-1.1zM377.9 236.1h1.6v1.6h-1.6zM497.0 104.2h1.2v1.2h-1.2zM557.5 255.8h1.2v1.2h-1.2zM565.5 108.7h1.6v1.6h-1.6zM157.2 81.1h1.2v1.2h-1.2zM511.6 78.3h1.4v1.4h-1.4zM596.5 101.9h1.4v1.4h-1.4zM586.6 239.0h1v1h-1z" fill="#e8c8a8" opacity="0.85"/>
<path d="M398.5 130.9h1.8v1.8h-1.8zM28.1 186.2h1v1h-1zM151.9 81.5h1.2v1.2h-1.2zM458.7 82.2h1.2v1.2h-1.2zM112.1 238.9h1.2v1.2h-1.2zM40.8 108.4h1v1h-1zM275.6 317.3h1.8v1.8h-1.8zM454.7 190.1h1.2v1.2h-1.2zM470.2 92.5h1.6v1.6h-1.6zM448.7 304.0h1.3v1.3h-1.3zM602.9 162.1h1.3v1.3h-1.3zM480.1 73.0h1.3v1.3h-1.3zM52.0 217.4h1.8v1.8h-1.8zM116.5 191.7h1v1h-1zM191.1 125.2h1.3v1.3h-1.3zM499.5 297.9h1.4v1.4h-1.4zM377.4 204.3h1v1h-1zM42.5 187.2h1.4v1.4h-1.4zM213.1 107.8h1.6v1.6h-1.6zM97.7 139.2h1.3v1.3h-1.3zM195.5 124.4h1.1v1.1h-1.1zM492.1 113.9h1.3v1.3h-1.3zM437.5 312.7h1.1v1.1h-1.1zM135.9 229.9h1.8v1.8h-1.8zM391.1 126.7h1.1v1.1h-1.1zM440.1 181.6h1.8v1.8h-1.8zM67.9 250.8h1.3v1.3h-1.3zM541.3 145.7h1.3v1.3h-1.3zM364.8 117.8h1.2v1.2h-1.2zM163.8 148.8h1.3v1.3h-1.3zM455.5 214.9h1.1v1.1h-1.1zM598.2 161.6h1.6v1.6h-1.6zM392.1 166.4h1.2v1.2h-1.2zM205.6 301.9h1.6v1.6h-1.6zM198.3 82.2h1.8v1.8h-1.8zM443.6 224.2h1.8v1.8h-1.8zM520.9 107.4h1v1h-1zM231.8 213.4h1.6v1.6h-1.6zM103.7 89.7h1.8v1.8h-1.8zM387.3 306.9h1.1v1.1h-1.1zM51.4 72.4h1.3v1.3h-1.3zM292.6 312.5h1.4v1.4h-1.4zM188.4 116.2h1.6v1.6h-1.6zM552.2 189.7h1.1v1.1h-1.1zM553.4 88.8h1.2v1.2h-1.2zM498.5 196.5h1.2v1.2h-1.2zM489.7 241.8h1.8v1.8h-1.8zM561.1 150.0h1.6v1.6h-1.6zM532.1 180.6h1.4v1.4h-1.4zM457.8 300.4h1.4v1.4h-1.4zM132.1 299.9h1.3v1.3h-1.3zM416.2 89.4h1.3v1.3h-1.3zM314.1 76.7h1.1v1.1h-1.1zM450.5 60.8h1.4v1.4h-1.4zM420.5 292.5h1.4v1.4h-1.4zM58.2 134.2h1.2v1.2h-1.2zM467.0 57.5h1.6v1.6h-1.6zM576.0 82.4h1.2v1.2h-1.2zM249.0 79.2h1.1v1.1h-1.1zM261.5 261.6h1.4v1.4h-1.4zM108.4 167.0h1.2v1.2h-1.2zM108.1 261.7h1.4v1.4h-1.4zM79.4 67.7h1.2v1.2h-1.2zM50.2 133.7h1.2v1.2h-1.2zM259.6 297.0h1.2v1.2h-1.2zM389.3 219.5h1.4v1.4h-1.4zM289.5 202.3h1.4v1.4h-1.4zM398.4 253.7h1.4v1.4h-1.4zM279.6 238.8h1.2v1.2h-1.2zM49.4 292.0h1v1h-1zM69.3 73.5h1.8v1.8h-1.8zM151.9 261.3h1.3v1.3h-1.3zM264.1 225.7h1.2v1.2h-1.2zM408.5 268.9h1.8v1.8h-1.8zM52.6 300.1h1.1v1.1h-1.1zM393.5 296.1h1.8v1.8h-1.8zM453.9 205.8h1.8v1.8h-1.8zM56.4 231.8h1.3v1.3h-1.3zM509.5 309.1h1.1v1.1h-1.1zM79.9 163.7h1.3v1.3h-1.3zM313.7 189.0h1.8v1.8h-1.8zM407.2 93.5h1.4v1.4h-1.4zM335.5 209.1h1.6v1.6h-1.6zM41.8 231.5h1.2v1.2h-1.2zM256.8 180.9h1.4v1.4h-1.4zM77.3 152.0h1.8v1.8h-1.8zM603.8 136.0h1v1h-1zM265.5 81.4h1.8v1.8h-1.8zM146.8 235.4h1.4v1.4h-1.4zM66.8 297.9h1.3v1.3h-1.3zM522.7 152.9h1.3v1.3h-1.3zM233.6 65.9h1.6v1.6h-1.6zM307.4 239.4h1.2v1.2h-1.2zM56.4 132.4h1.8v1.8h-1.8zM540.1 160.2h1.1v1.1h-1.1zM115.1 61.4h1.4v1.4h-1.4zM592.9 301.6h1.1v1.1h-1.1zM120.3 215.4h1.6v1.6h-1.6zM249.9 179.6h1.4v1.4h-1.4zM373.5 80.3h1.8v1.8h-1.8zM414.3 60.6h1.2v1.2h-1.2zM165.5 245.4h1.4v1.4h-1.4zM80.1 153.2h1.2v1.2h-1.2zM309.0 173.3h1.3v1.3h-1.3zM502.2 272.2h1.4v1.4h-1.4zM166.1 143.1h1.8v1.8h-1.8zM284.6 129.9h1.3v1.3h-1.3zM574.1 155.2h1.3v1.3h-1.3zM57.7 177.8h1.8v1.8h-1.8zM465.5 66.8h1.8v1.8h-1.8zM119.9 171.1h1.3v1.3h-1.3zM335.0 246.1h1.8v1.8h-1.8zM448.3 282.0h1.1v1.1h-1.1zM494.4 157.8h1.6v1.6h-1.6zM568.3 242.4h1.3v1.3h-1.3zM31.7 206.4h1.6v1.6h-1.6zM368.3 163.0h1v1h-1zM559.2 80.1h1.1v1.1h-1.1zM244.0 97.9h1.1v1.1h-1.1zM91.6 134.4h1.3v1.3h-1.3zM111.2 263.4h1.2v1.2h-1.2zM567.9 198.6h1.6v1.6h-1.6zM24.5 287.6h1.3v1.3h-1.3zM271.3 230.3h1.8v1.8h-1.8zM79.5 291.0h1.3v1.3h-1.3zM107.9 192.1h1.4v1.4h-1.4zM250.8 278.4h1.8v1.8h-1.8zM379.2 282.1h1.2v1.2h-1.2zM580.9 126.1h1.1v1.1h-1.1zM570.9 318.5h1.4v1.4h-1.4zM400.8 303.2h1v1h-1zM530.0 313.5h1.2v1.2h-1.2zM220.8 291.8h1.8v1.8h-1.8zM565.0 300.7h1.4v1.4h-1.4zM456.4 190.9h1.4v1.4h-1.4zM142.6 319.4h1.8v1.8h-1.8zM370.5 177.4h1.3v1.3h-1.3zM210.4 241.5h1.2v1.2h-1.2zM174.3 79.3h1.2v1.2h-1.2zM535.7 133.1h1.1v1.1h-1.1zM257.0 220.6h1.1v1.1h-1.1zM31.3 289.9h1.3v1.3h-1.3zM188.3 114.0h1.2v1.2h-1.2zM77.6 96.6h1.4v1.4h-1.4zM509.6 293.5h1v1h-1zM134.7 216.5h1.3v1.3h-1.3zM386.6 101.5h1.8v1.8h-1.8zM38.1 182.8h1.3v1.3h-1.3zM529.7 252.5h1.8v1.8h-1.8zM35.2 165.1h1.2v1.2h-1.2zM535.6 242.8h1v1h-1zM244.4 148.9h1.8v1.8h-1.8zM22.2 113.4h1.3v1.3h-1.3zM163.9 70.1h1.4v1.4h-1.4zM539.4 247.9h1.3v1.3h-1.3zM149.4 132.9h1.3v1.3h-1.3zM328.2 152.5h1v1h-1zM388.5 85.6h1.3v1.3h-1.3zM420.3 70.3h1.8v1.8h-1.8zM356.1 114.9h1.6v1.6h-1.6zM425.7 141.5h1.2v1.2h-1.2zM361.6 181.2h1.4v1.4h-1.4zM100.6 257.4h1.1v1.1h-1.1zM350.9 276.0h1.2v1.2h-1.2zM472.2 297.1h1.8v1.8h-1.8zM75.8 274.3h1.1v1.1h-1.1zM75.9 317.7h1v1h-1zM514.3 165.5h1.1v1.1h-1.1zM242.9 146.9h1.8v1.8h-1.8zM105.1 61.7h1.3v1.3h-1.3zM602.2 308.8h1.6v1.6h-1.6zM289.3 169.6h1.8v1.8h-1.8zM565.2 110.4h1.6v1.6h-1.6zM60.9 117.1h1.1v1.1h-1.1zM111.7 110.1h1.6v1.6h-1.6zM144.3 251.6h1.8v1.8h-1.8zM222.5 202.8h1.4v1.4h-1.4zM581.6 143.9h1.1v1.1h-1.1zM416.4 173.7h1.2v1.2h-1.2zM128.3 298.2h1.6v1.6h-1.6zM162.3 186.8h1.3v1.3h-1.3zM50.3 158.6h1.8v1.8h-1.8zM297.8 292.6h1v1h-1zM404.5 117.2h1.6v1.6h-1.6zM427.6 145.8h1.8v1.8h-1.8zM271.7 252.0h1.6v1.6h-1.6zM352.0 200.4h1.1v1.1h-1.1zM408.1 235.9h1.6v1.6h-1.6zM281.2 228.0h1v1h-1zM37.2 282.6h1.4v1.4h-1.4zM102.1 150.5h1.4v1.4h-1.4zM32.2 310.4h1.8v1.8h-1.8zM341.0 225.7h1.1v1.1h-1.1zM417.1 170.7h1.4v1.4h-1.4zM255.7 82.1h1.6v1.6h-1.6zM367.7 177.8h1.2v1.2h-1.2zM293.0 144.1h1.3v1.3h-1.3zM186.5 157.1h1.8v1.8h-1.8zM105.0 231.2h1.3v1.3h-1.3zM435.8 138.4h1.1v1.1h-1.1zM398.3 239.5h1.3v1.3h-1.3zM462.9 226.3h1.3v1.3h-1.3zM126.8 243.9h1.2v1.2h-1.2zM148.3 234.0h1.1v1.1h-1.1zM198.5 235.7h1.6v1.6h-1.6zM217.7 279.9h1.1v1.1h-1.1zM548.7 155.4h1.4v1.4h-1.4zM547.0 147.4h1.3v1.3h-1.3zM83.4 131.9h1.1v1.1h-1.1zM387.7 224.7h1.1v1.1h-1.1zM34.0 200.2h1.8v1.8h-1.8zM383.9 109.2h1v1h-1zM182.8 141.1h1.1v1.1h-1.1zM367.1 301.0h1.8v1.8h-1.8zM339.8 118.7h1.1v1.1h-1.1zM70.7 118.0h1.6v1.6h-1.6zM97.9 237.0h1v1h-1zM67.6 113.9h1v1h-1zM107.9 306.8h1.1v1.1h-1.1zM138.5 194.1h1.2v1.2h-1.2zM548.5 127.1h1.3v1.3h-1.3zM321.8 235.1h1.6v1.6h-1.6zM237.8 291.6h1.6v1.6h-1.6zM227.6 297.2h1.2v1.2h-1.2zM563.3 316.9h1.3v1.3h-1.3zM560.6 304.1h1.8v1.8h-1.8zM581.3 288.0h1.6v1.6h-1.6zM339.9 223.3h1.8v1.8h-1.8zM445.3 271.6h1.3v1.3h-1.3zM313.4 105.8h1.4v1.4h-1.4zM468.8 258.9h1.2v1.2h-1.2zM563.7 270.5h1.6v1.6h-1.6zM123.7 303.1h1.8v1.8h-1.8zM403.1 236.8h1.4v1.4h-1.4zM203.0 180.3h1.8v1.8h-1.8zM194.1 124.6h1.2v1.2h-1.2zM203.6 82.1h1.3v1.3h-1.3zM338.3 190.1h1.2v1.2h-1.2zM153.5 167.1h1.6v1.6h-1.6zM305.1 116.8h1.8v1.8h-1.8zM192.4 230.1h1.3v1.3h-1.3zM187.9 309.2h1.4v1.4h-1.4zM376.4 250.6h1v1h-1zM163.6 301.0h1.6v1.6h-1.6zM341.5 195.9h1v1h-1zM411.5 241.1h1.4v1.4h-1.4zM73.4 272.3h1.4v1.4h-1.4zM136.5 288.5h1.4v1.4h-1.4zM396.2 99.1h1.4v1.4h-1.4zM437.5 269.6h1.3v1.3h-1.3zM193.9 114.6h1.6v1.6h-1.6zM460.7 209.1h1.6v1.6h-1.6zM47.6 227.0h1v1h-1zM111.1 95.8h1.8v1.8h-1.8zM220.9 318.8h1.6v1.6h-1.6zM193.5 114.8h1.3v1.3h-1.3zM65.4 183.4h1v1h-1zM284.5 94.4h1.1v1.1h-1.1zM47.1 76.1h1.2v1.2h-1.2zM387.3 308.5h1.8v1.8h-1.8zM255.2 254.7h1.4v1.4h-1.4zM548.0 197.1h1.1v1.1h-1.1zM127.9 64.5h1.6v1.6h-1.6zM460.1 206.6h1.2v1.2h-1.2zM31.2 304.6h1.2v1.2h-1.2zM521.4 104.0h1.4v1.4h-1.4zM580.5 124.7h1.8v1.8h-1.8zM273.6 174.8h1.1v1.1h-1.1zM539.7 68.1h1.6v1.6h-1.6zM353.9 83.6h1.8v1.8h-1.8zM362.3 319.4h1.6v1.6h-1.6zM232.6 278.3h1v1h-1zM304.4 63.0h1.1v1.1h-1.1zM362.6 151.7h1.3v1.3h-1.3zM93.2 188.6h1.1v1.1h-1.1zM265.5 248.8h1.4v1.4h-1.4zM150.3 152.3h1.3v1.3h-1.3zM87.5 267.4h1.4v1.4h-1.4zM399.8 95.9h1v1h-1zM28.4 305.8h1.3v1.3h-1.3zM156.5 62.0h1v1h-1zM461.7 238.0h1.3v1.3h-1.3zM585.5 290.1h1.3v1.3h-1.3zM115.0 265.7h1v1h-1zM82.7 93.3h1.2v1.2h-1.2zM145.3 112.6h1.1v1.1h-1.1zM445.4 148.3h1.2v1.2h-1.2zM164.3 70.0h1.2v1.2h-1.2zM483.0 204.0h1.3v1.3h-1.3zM381.0 305.7h1.1v1.1h-1.1zM334.0 176.4h1.3v1.3h-1.3zM487.7 80.9h1.8v1.8h-1.8zM604.4 164.8h1.1v1.1h-1.1zM321.3 167.8h1.4v1.4h-1.4zM424.5 103.2h1.1v1.1h-1.1zM586.4 180.2h1.6v1.6h-1.6zM297.4 69.3h1v1h-1zM178.6 89.9h1.8v1.8h-1.8zM523.2 317.5h1v1h-1zM597.9 95.4h1v1h-1zM598.7 316.3h1v1h-1zM601.8 283.1h1.2v1.2h-1.2zM440.4 117.2h1.4v1.4h-1.4zM66.2 202.2h1.6v1.6h-1.6zM98.3 199.4h1.2v1.2h-1.2zM290.8 78.8h1.3v1.3h-1.3zM502.0 273.3h1.6v1.6h-1.6zM70.2 111.2h1.3v1.3h-1.3zM500.7 296.9h1v1h-1zM560.8 179.9h1.2v1.2h-1.2zM413.7 210.4h1.1v1.1h-1.1zM261.1 177.2h1v1h-1zM177.4 295.7h1.3v1.3h-1.3zM243.5 207.4h1.4v1.4h-1.4zM428.0 231.8h1.2v1.2h-1.2zM548.0 132.1h1v1h-1zM135.3 88.7h1.2v1.2h-1.2zM164.1 174.9h1.6v1.6h-1.6zM408.5 141.1h1.3v1.3h-1.3zM231.0 147.8h1.6v1.6h-1.6zM463.7 228.3h1.8v1.8h-1.8zM99.8 280.3h1.3v1.3h-1.3zM26.8 74.8h1.2v1.2h-1.2zM388.2 150.6h1.3v1.3h-1.3zM162.4 166.3h1.1v1.1h-1.1zM423.9 211.5h1.3v1.3h-1.3zM67.8 270.3h1.3v1.3h-1.3zM550.4 208.4h1.2v1.2h-1.2zM394.0 76.8h1.8v1.8h-1.8zM65.6 186.6h1.4v1.4h-1.4zM529.7 206.8h1.1v1.1h-1.1zM581.3 253.2h1.8v1.8h-1.8zM84.4 163.7h1.4v1.4h-1.4zM573.5 99.7h1.6v1.6h-1.6zM288.2 311.9h1v1h-1zM24.0 103.8h1.3v1.3h-1.3zM61.6 73.4h1.1v1.1h-1.1zM27.9 253.0h1.8v1.8h-1.8zM520.1 72.7h1.6v1.6h-1.6zM88.9 264.5h1.3v1.3h-1.3zM250.3 136.5h1v1h-1zM196.3 91.2h1.2v1.2h-1.2zM471.4 297.7h1.2v1.2h-1.2zM41.8 93.0h1v1h-1zM76.8 252.0h1.1v1.1h-1.1zM534.4 164.2h1v1h-1zM586.8 313.1h1.4v1.4h-1.4zM399.8 311.7h1.8v1.8h-1.8zM302.0 160.7h1.4v1.4h-1.4zM170.2 156.4h1.2v1.2h-1.2zM574.8 243.7h1.6v1.6h-1.6zM251.6 267.6h1.2v1.2h-1.2zM449.5 96.9h1v1h-1zM319.4 220.7h1.8v1.8h-1.8zM597.7 176.7h1v1h-1zM229.2 281.9h1.6v1.6h-1.6zM346.1 61.4h1.8v1.8h-1.8zM307.2 218.3h1.4v1.4h-1.4zM223.1 280.7h1.2v1.2h-1.2zM317.8 196.6h1.3v1.3h-1.3zM265.1 92.1h1.1v1.1h-1.1zM55.8 61.3h1.6v1.6h-1.6zM415.7 300.7h1v1h-1zM393.9 309.9h1.8v1.8h-1.8zM248.6 227.6h1.1v1.1h-1.1zM370.1 139.2h1.6v1.6h-1.6zM313.1 172.7h1.6v1.6h-1.6zM278.2 188.9h1.3v1.3h-1.3zM52.9 141.7h1.6v1.6h-1.6zM594.2 61.2h1v1h-1zM124.9 245.6h1.8v1.8h-1.8zM525.8 82.1h1.6v1.6h-1.6zM169.1 208.2h1.2v1.2h-1.2zM277.1 226.5h1.6v1.6h-1.6zM235.1 296.7h1.1v1.1h-1.1zM61.6 193.9h1v1h-1zM72.3 303.8h1.2v1.2h-1.2zM133.6 186.0h1.1v1.1h-1.1zM224.7 167.2h1.2v1.2h-1.2zM311.5 212.7h1.1v1.1h-1.1zM425.4 245.5h1.1v1.1h-1.1zM169.4 128.5h1.6v1.6h-1.6zM250.0 93.2h1.8v1.8h-1.8zM31.4 302.4h1.4v1.4h-1.4zM203.1 214.2h1.4v1.4h-1.4zM531.8 249.6h1.3v1.3h-1.3zM27.4 88.3h1.8v1.8h-1.8zM52.4 221.4h1.3v1.3h-1.3zM335.3 250.2h1.8v1.8h-1.8zM142.2 61.7h1.4v1.4h-1.4zM171.2 112.6h1v1h-1zM448.1 169.1h1.3v1.3h-1.3zM293.1 119.1h1.8v1.8h-1.8zM546.0 119.0h1.6v1.6h-1.6zM61.0 180.9h1.2v1.2h-1.2zM549.9 289.1h1.2v1.2h-1.2zM594.9 183.5h1.2v1.2h-1.2zM192.3 93.4h1v1h-1zM255.9 121.6h1.1v1.1h-1.1zM448.2 61.9h1.8v1.8h-1.8zM303.9 140.7h1.3v1.3h-1.3zM528.2 123.2h1.8v1.8h-1.8zM382.9 151.8h1.8v1.8h-1.8zM164.3 290.8h1.4v1.4h-1.4zM124.6 169.1h1.3v1.3h-1.3zM154.0 246.9h1v1h-1zM545.5 132.5h1.3v1.3h-1.3zM407.3 309.4h1.2v1.2h-1.2zM409.3 154.1h1.3v1.3h-1.3zM201.9 112.4h1v1h-1zM168.4 215.2h1.8v1.8h-1.8zM602.4 158.4h1.6v1.6h-1.6zM461.3 82.7h1.2v1.2h-1.2zM312.2 67.8h1.6v1.6h-1.6zM286.4 311.3h1.8v1.8h-1.8zM338.9 214.4h1.4v1.4h-1.4zM512.6 188.1h1.1v1.1h-1.1zM42.5 270.0h1.4v1.4h-1.4zM466.4 227.9h1.2v1.2h-1.2zM424.5 216.1h1.6v1.6h-1.6zM471.9 281.9h1.6v1.6h-1.6zM153.1 78.8h1.6v1.6h-1.6zM208.7 280.4h1.6v1.6h-1.6zM514.2 91.2h1.3v1.3h-1.3zM422.0 177.4h1v1h-1zM164.6 294.5h1.6v1.6h-1.6zM530.7 203.3h1.3v1.3h-1.3zM85.5 190.7h1.4v1.4h-1.4zM519.0 292.1h1.3v1.3h-1.3zM199.3 157.5h1.6v1.6h-1.6zM200.0 293.1h1v1h-1zM229.2 317.4h1.3v1.3h-1.3zM153.3 192.1h1.8v1.8h-1.8zM160.5 99.0h1.3v1.3h-1.3zM233.6 140.7h1.1v1.1h-1.1zM142.3 156.5h1v1h-1zM483.4 201.0h1.1v1.1h-1.1zM405.8 93.2h1.3v1.3h-1.3zM143.9 201.1h1v1h-1zM142.6 104.2h1.1v1.1h-1.1zM201.2 127.7h1.3v1.3h-1.3zM513.5 170.5h1.3v1.3h-1.3zM401.0 161.6h1v1h-1zM439.2 150.7h1.6v1.6h-1.6zM529.9 150.9h1.8v1.8h-1.8zM184.7 174.3h1.3v1.3h-1.3zM589.4 280.1h1.2v1.2h-1.2zM195.0 85.0h1.4v1.4h-1.4zM297.4 223.9h1.1v1.1h-1.1zM99.8 88.4h1.6v1.6h-1.6zM112.4 70.5h1.8v1.8h-1.8zM315.4 83.9h1.2v1.2h-1.2zM234.6 318.2h1.1v1.1h-1.1zM421.9 193.5h1v1h-1zM486.3 178.9h1v1h-1zM538.3 144.4h1.3v1.3h-1.3zM54.5 121.7h1.3v1.3h-1.3zM329.8 269.3h1.8v1.8h-1.8zM104.2 276.4h1v1h-1zM182.5 195.3h1v1h-1zM115.2 269.1h1.8v1.8h-1.8zM82.2 229.6h1.3v1.3h-1.3zM204.3 193.9h1.8v1.8h-1.8zM191.9 71.3h1.2v1.2h-1.2zM582.7 196.2h1v1h-1zM62.3 69.0h1.6v1.6h-1.6zM375.9 240.5h1.8v1.8h-1.8zM313.8 148.3h1.6v1.6h-1.6zM416.7 130.5h1.2v1.2h-1.2zM158.3 245.8h1.4v1.4h-1.4zM38.1 238.6h1.1v1.1h-1.1zM167.3 304.8h1.3v1.3h-1.3zM446.7 120.4h1.1v1.1h-1.1zM289.7 230.1h1.2v1.2h-1.2zM93.1 168.1h1.3v1.3h-1.3zM354.4 140.9h1v1h-1zM251.2 105.0h1v1h-1zM154.4 245.9h1.4v1.4h-1.4zM590.9 201.3h1.4v1.4h-1.4zM160.4 126.9h1.4v1.4h-1.4zM416.7 213.7h1.3v1.3h-1.3zM520.1 219.6h1.3v1.3h-1.3zM361.7 268.9h1.1v1.1h-1.1zM389.1 144.9h1.8v1.8h-1.8zM522.2 233.0h1.3v1.3h-1.3zM259.8 169.6h1.4v1.4h-1.4zM195.2 313.3h1.6v1.6h-1.6zM126.9 276.5h1v1h-1zM456.5 102.5h1.8v1.8h-1.8zM394.9 313.6h1.4v1.4h-1.4zM415.9 316.7h1.8v1.8h-1.8zM273.8 251.6h1.8v1.8h-1.8zM360.6 111.6h1.4v1.4h-1.4zM486.9 168.9h1.4v1.4h-1.4zM400.1 285.1h1.2v1.2h-1.2zM159.1 205.4h1.4v1.4h-1.4zM577.4 205.4h1.6v1.6h-1.6zM352.7 82.7h1.6v1.6h-1.6zM523.5 175.8h1.3v1.3h-1.3zM574.6 105.6h1.4v1.4h-1.4zM459.1 205.5h1.2v1.2h-1.2zM414.0 170.0h1.2v1.2h-1.2zM205.3 199.8h1.8v1.8h-1.8zM157.9 187.2h1.4v1.4h-1.4zM267.9 189.2h1v1h-1zM336.1 210.9h1.2v1.2h-1.2zM323.1 153.2h1.1v1.1h-1.1zM597.0 115.6h1v1h-1zM402.7 315.6h1v1h-1zM377.5 235.4h1.2v1.2h-1.2zM133.6 185.2h1.1v1.1h-1.1zM342.9 250.7h1.3v1.3h-1.3zM179.0 282.2h1.6v1.6h-1.6zM561.3 304.6h1.3v1.3h-1.3zM156.6 200.1h1.4v1.4h-1.4zM68.9 260.7h1.2v1.2h-1.2zM484.8 120.2h1.6v1.6h-1.6zM92.2 104.6h1v1h-1zM573.8 251.7h1.2v1.2h-1.2zM440.2 289.8h1.1v1.1h-1.1zM445.0 254.2h1.2v1.2h-1.2zM291.2 62.7h1.8v1.8h-1.8zM559.1 180.4h1.4v1.4h-1.4zM596.2 95.7h1.8v1.8h-1.8zM349.5 295.6h1.2v1.2h-1.2zM400.0 258.0h1.6v1.6h-1.6zM24.3 133.4h1.2v1.2h-1.2zM201.6 178.2h1.3v1.3h-1.3zM379.3 148.6h1.6v1.6h-1.6zM492.2 95.1h1v1h-1zM583.8 175.2h1.3v1.3h-1.3zM145.5 179.9h1.3v1.3h-1.3zM399.2 255.4h1.1v1.1h-1.1zM444.0 177.2h1.6v1.6h-1.6zM157.5 280.4h1.3v1.3h-1.3zM329.4 307.5h1.3v1.3h-1.3zM587.7 182.0h1.1v1.1h-1.1zM43.1 224.6h1.8v1.8h-1.8zM292.7 289.0h1.4v1.4h-1.4zM453.1 318.8h1.1v1.1h-1.1zM225.5 301.4h1.4v1.4h-1.4zM497.0 212.5h1.1v1.1h-1.1zM454.4 221.9h1.3v1.3h-1.3zM512.2 229.2h1.3v1.3h-1.3zM357.8 122.2h1.6v1.6h-1.6zM449.6 120.7h1.2v1.2h-1.2zM575.8 179.8h1.1v1.1h-1.1zM32.7 80.6h1.6v1.6h-1.6zM129.7 180.0h1v1h-1zM22.4 238.7h1.6v1.6h-1.6zM283.8 144.7h1.8v1.8h-1.8zM164.8 251.7h1.2v1.2h-1.2zM560.7 227.1h1v1h-1zM588.2 87.4h1.4v1.4h-1.4zM373.5 102.8h1.1v1.1h-1.1zM44.2 109.0h1v1h-1zM140.7 299.9h1.1v1.1h-1.1zM345.2 227.5h1v1h-1zM569.5 65.2h1.2v1.2h-1.2zM465.0 270.6h1.8v1.8h-1.8zM327.8 82.8h1.2v1.2h-1.2zM507.8 84.1h1.6v1.6h-1.6zM555.7 249.8h1.8v1.8h-1.8zM341.6 91.0h1.3v1.3h-1.3zM451.0 159.5h1.2v1.2h-1.2zM521.0 129.9h1.2v1.2h-1.2zM293.1 258.3h1.8v1.8h-1.8zM254.6 302.7h1.2v1.2h-1.2zM154.7 307.8h1.6v1.6h-1.6zM526.2 256.6h1.3v1.3h-1.3zM202.8 67.1h1.6v1.6h-1.6zM225.1 167.2h1v1h-1zM446.0 162.2h1.2v1.2h-1.2zM431.7 233.7h1.6v1.6h-1.6zM535.2 144.4h1v1h-1zM597.0 70.1h1v1h-1zM416.4 176.6h1.1v1.1h-1.1zM22.2 306.5h1.3v1.3h-1.3zM252.9 249.4h1.4v1.4h-1.4zM302.8 182.0h1.4v1.4h-1.4zM509.1 78.0h1.8v1.8h-1.8zM92.0 165.1h1.3v1.3h-1.3zM35.5 224.9h1.8v1.8h-1.8zM163.7 104.7h1v1h-1zM322.2 282.6h1.3v1.3h-1.3zM517.1 256.5h1.6v1.6h-1.6zM534.2 188.1h1v1h-1zM280.8 265.3h1.3v1.3h-1.3zM115.9 267.8h1.6v1.6h-1.6zM86.2 156.2h1v1h-1zM169.6 158.9h1.4v1.4h-1.4zM392.3 171.8h1v1h-1zM50.0 295.5h1.4v1.4h-1.4zM329.1 310.1h1.8v1.8h-1.8zM441.8 136.4h1.8v1.8h-1.8zM588.7 204.4h1.3v1.3h-1.3zM252.3 183.2h1.1v1.1h-1.1zM286.0 288.3h1v1h-1zM414.5 211.0h1.6v1.6h-1.6zM409.2 106.8h1.6v1.6h-1.6zM126.2 114.9h1v1h-1zM550.2 196.9h1.2v1.2h-1.2zM410.5 186.9h1.3v1.3h-1.3zM509.1 107.6h1.1v1.1h-1.1zM558.5 240.2h1.8v1.8h-1.8zM330.0 119.2h1.4v1.4h-1.4zM289.2 226.5h1.4v1.4h-1.4zM462.6 250.8h1v1h-1zM206.4 57.6h1.3v1.3h-1.3zM105.8 309.6h1.2v1.2h-1.2zM115.2 151.5h1.2v1.2h-1.2zM578.7 69.2h1.4v1.4h-1.4zM345.1 226.5h1.6v1.6h-1.6zM86.6 265.6h1.3v1.3h-1.3zM73.3 130.6h1v1h-1zM523.7 292.3h1.6v1.6h-1.6zM460.1 73.3h1.8v1.8h-1.8zM236.1 227.0h1v1h-1zM40.5 164.1h1.1v1.1h-1.1zM536.7 167.6h1.4v1.4h-1.4zM512.8 100.1h1.2v1.2h-1.2zM465.3 146.5h1.3v1.3h-1.3zM597.2 215.7h1.8v1.8h-1.8zM202.9 225.4h1.2v1.2h-1.2zM539.4 95.3h1.8v1.8h-1.8zM192.2 275.6h1.8v1.8h-1.8zM496.8 181.2h1.8v1.8h-1.8zM498.2 184.3h1v1h-1zM60.9 179.8h1.6v1.6h-1.6zM430.2 170.5h1.1v1.1h-1.1zM163.7 311.7h1.3v1.3h-1.3zM300.2 76.5h1.1v1.1h-1.1zM560.6 273.3h1.2v1.2h-1.2zM480.9 104.1h1.2v1.2h-1.2zM475.2 112.9h1.6v1.6h-1.6zM136.7 102.7h1.3v1.3h-1.3zM99.3 301.8h1.1v1.1h-1.1zM502.1 200.3h1.3v1.3h-1.3zM459.2 153.6h1.4v1.4h-1.4zM559.1 114.2h1.2v1.2h-1.2zM65.3 122.0h1.2v1.2h-1.2zM54.2 201.0h1v1h-1zM256.1 224.8h1.1v1.1h-1.1zM116.3 135.1h1.3v1.3h-1.3zM430.2 300.2h1.2v1.2h-1.2zM253.8 108.2h1.6v1.6h-1.6zM267.3 188.9h1.2v1.2h-1.2zM158.1 106.1h1.2v1.2h-1.2zM40.7 277.7h1v1h-1zM216.0 314.4h1.6v1.6h-1.6zM233.3 263.4h1.3v1.3h-1.3zM381.4 226.0h1.8v1.8h-1.8zM178.1 310.7h1.4v1.4h-1.4zM604.1 60.4h1.6v1.6h-1.6zM190.3 220.0h1.8v1.8h-1.8zM24.3 141.6h1v1h-1zM291.6 183.3h1.8v1.8h-1.8zM537.4 211.9h1v1h-1zM250.9 313.6h1.6v1.6h-1.6zM110.2 71.7h1.2v1.2h-1.2zM279.2 87.3h1.2v1.2h-1.2zM437.6 64.3h1.8v1.8h-1.8zM65.8 279.3h1.6v1.6h-1.6zM437.3 182.3h1.8v1.8h-1.8zM351.3 212.2h1.8v1.8h-1.8zM28.9 148.5h1.2v1.2h-1.2zM577.9 303.5h1.2v1.2h-1.2zM579.6 223.4h1.8v1.8h-1.8zM308.3 310.3h1.2v1.2h-1.2zM240.2 259.8h1.2v1.2h-1.2zM254.3 191.8h1.1v1.1h-1.1zM332.5 292.5h1.1v1.1h-1.1zM422.4 307.8h1.4v1.4h-1.4zM296.5 184.4h1.1v1.1h-1.1zM191.4 313.0h1.6v1.6h-1.6zM432.8 242.2h1.3v1.3h-1.3zM411.6 179.6h1.2v1.2h-1.2zM184.9 235.6h1.4v1.4h-1.4zM234.4 98.8h1.2v1.2h-1.2zM535.5 297.6h1.3v1.3h-1.3zM534.3 262.0h1.2v1.2h-1.2zM59.6 131.1h1v1h-1zM320.3 276.9h1.3v1.3h-1.3zM420.0 76.0h1v1h-1zM216.7 300.3h1.1v1.1h-1.1zM540.6 286.9h1.1v1.1h-1.1zM432.6 261.8h1.1v1.1h-1.1zM304.8 191.5h1.3v1.3h-1.3zM251.3 94.2h1.2v1.2h-1.2zM308.5 233.5h1.8v1.8h-1.8zM491.2 316.3h1.1v1.1h-1.1zM407.0 262.6h1.4v1.4h-1.4zM390.6 146.8h1v1h-1zM166.2 122.4h1.1v1.1h-1.1zM515.1 213.6h1.2v1.2h-1.2zM551.1 236.2h1.4v1.4h-1.4zM79.1 149.6h1v1h-1zM266.9 89.0h1v1h-1zM540.8 313.4h1v1h-1zM210.1 289.2h1.6v1.6h-1.6zM59.8 121.1h1v1h-1zM211.9 155.4h1.4v1.4h-1.4zM438.4 119.7h1.3v1.3h-1.3zM549.6 155.3h1.8v1.8h-1.8zM552.5 224.0h1.6v1.6h-1.6zM372.6 226.3h1v1h-1zM54.0 75.1h1.8v1.8h-1.8zM84.0 126.1h1.6v1.6h-1.6zM576.9 227.3h1.2v1.2h-1.2zM363.2 170.4h1v1h-1zM383.6 172.8h1v1h-1zM136.1 236.8h1.4v1.4h-1.4zM580.0 75.2h1.8v1.8h-1.8zM409.1 185.6h1.4v1.4h-1.4zM122.6 88.6h1.4v1.4h-1.4zM192.2 103.2h1v1h-1zM240.1 153.3h1.4v1.4h-1.4zM221.0 77.8h1.3v1.3h-1.3zM338.7 313.8h1.3v1.3h-1.3zM275.8 173.7h1.8v1.8h-1.8zM596.9 188.4h1.2v1.2h-1.2zM212.7 64.4h1.8v1.8h-1.8zM381.0 286.9h1.2v1.2h-1.2zM230.5 243.7h1.1v1.1h-1.1zM36.6 102.4h1v1h-1zM29.5 72.8h1.6v1.6h-1.6zM64.1 229.2h1.1v1.1h-1.1zM181.3 141.5h1.3v1.3h-1.3zM494.5 319.6h1.6v1.6h-1.6zM387.9 314.2h1.3v1.3h-1.3zM96.2 102.2h1.6v1.6h-1.6zM221.5 256.9h1.8v1.8h-1.8zM87.1 114.2h1.2v1.2h-1.2zM525.6 120.0h1.1v1.1h-1.1zM24.1 128.1h1.2v1.2h-1.2zM162.2 108.0h1.2v1.2h-1.2zM56.6 175.9h1v1h-1zM147.2 168.0h1.3v1.3h-1.3zM48.2 139.2h1.2v1.2h-1.2zM58.4 294.4h1v1h-1zM154.1 230.7h1.1v1.1h-1.1zM130.8 86.6h1.3v1.3h-1.3zM127.1 159.4h1.2v1.2h-1.2zM174.7 75.4h1.1v1.1h-1.1zM292.3 57.3h1.6v1.6h-1.6zM106.5 223.0h1.3v1.3h-1.3zM265.8 133.1h1.8v1.8h-1.8zM501.5 130.7h1v1h-1zM197.9 181.3h1.4v1.4h-1.4zM580.8 182.8h1.2v1.2h-1.2zM79.5 285.7h1.8v1.8h-1.8zM377.7 271.2h1.2v1.2h-1.2zM467.3 84.4h1.2v1.2h-1.2zM308.9 160.2h1.4v1.4h-1.4zM576.9 242.1h1v1h-1zM80.8 274.5h1.3v1.3h-1.3zM458.8 190.6h1.4v1.4h-1.4zM49.6 268.9h1.2v1.2h-1.2zM247.9 192.5h1.3v1.3h-1.3zM393.1 160.6h1v1h-1zM530.3 242.4h1.1v1.1h-1.1zM62.2 133.1h1.3v1.3h-1.3zM339.1 230.4h1.2v1.2h-1.2zM322.8 88.0h1.1v1.1h-1.1zM147.6 201.7h1.2v1.2h-1.2zM231.7 307.4h1.2v1.2h-1.2zM211.7 163.8h1.4v1.4h-1.4zM218.6 240.6h1.8v1.8h-1.8zM599.6 112.6h1.1v1.1h-1.1zM103.3 186.9h1v1h-1zM323.0 307.9h1.4v1.4h-1.4zM240.8 109.5h1v1h-1zM495.3 212.8h1.2v1.2h-1.2zM570.1 65.8h1.4v1.4h-1.4zM599.3 84.0h1.4v1.4h-1.4zM84.1 69.8h1.6v1.6h-1.6zM235.3 252.9h1.1v1.1h-1.1zM356.3 99.5h1v1h-1zM277.4 232.3h1.8v1.8h-1.8zM262.7 117.7h1.6v1.6h-1.6zM305.3 225.6h1.8v1.8h-1.8zM459.6 101.3h1.8v1.8h-1.8zM110.5 109.2h1.2v1.2h-1.2zM557.9 157.1h1.4v1.4h-1.4zM485.2 271.5h1.4v1.4h-1.4zM574.9 315.9h1.4v1.4h-1.4zM376.7 267.6h1.2v1.2h-1.2zM308.5 308.2h1v1h-1zM345.7 94.0h1.4v1.4h-1.4zM144.4 259.3h1.1v1.1h-1.1zM106.3 113.2h1.3v1.3h-1.3zM569.3 222.1h1.8v1.8h-1.8zM342.1 99.2h1v1h-1zM374.5 94.6h1.1v1.1h-1.1zM181.5 162.8h1.4v1.4h-1.4zM393.2 293.7h1.3v1.3h-1.3zM103.9 187.3h1.6v1.6h-1.6zM360.4 246.9h1.8v1.8h-1.8zM508.2 92.5h1.6v1.6h-1.6zM522.0 194.3h1.3v1.3h-1.3zM360.7 99.9h1.6v1.6h-1.6zM237.8 318.1h1.3v1.3h-1.3zM179.3 216.8h1.8v1.8h-1.8zM36.1 83.6h1.1v1.1h-1.1zM188.0 71.5h1.3v1.3h-1.3zM26.3 96.9h1.6v1.6h-1.6zM224.6 261.0h1.6v1.6h-1.6zM276.5 300.0h1.2v1.2h-1.2zM502.8 232.1h1.3v1.3h-1.3zM597.4 239.3h1.2v1.2h-1.2zM458.6 122.5h1.8v1.8h-1.8zM585.2 81.7h1.2v1.2h-1.2zM439.8 236.7h1.6v1.6h-1.6zM52.8 265.8h1v1h-1zM577.1 249.2h1v1h-1zM460.3 80.4h1.8v1.8h-1.8zM249.8 125.7h1.2v1.2h-1.2zM138.6 277.5h1.8v1.8h-1.8zM290.5 205.8h1.6v1.6h-1.6zM561.2 262.0h1v1h-1zM78.8 214.4h1.1v1.1h-1.1zM409.1 127.2h1.6v1.6h-1.6zM200.9 131.0h1.2v1.2h-1.2zM464.5 191.5h1.8v1.8h-1.8zM124.4 279.5h1.2v1.2h-1.2zM35.5 82.7h1v1h-1zM91.5 192.6h1.6v1.6h-1.6zM205.0 262.9h1.4v1.4h-1.4zM338.9 116.6h1.1v1.1h-1.1zM397.4 103.5h1.2v1.2h-1.2zM370.2 125.7h1v1h-1zM254.4 202.6h1.8v1.8h-1.8zM223.6 74.0h1.1v1.1h-1.1zM229.7 272.2h1.2v1.2h-1.2zM44.0 97.3h1.8v1.8h-1.8zM325.7 89.1h1.4v1.4h-1.4zM308.1 213.4h1.6v1.6h-1.6zM213.1 112.9h1.3v1.3h-1.3zM264.1 81.7h1v1h-1zM62.6 275.7h1.4v1.4h-1.4zM352.5 120.6h1.8v1.8h-1.8z" fill="#dcdcd4" opacity="0.85"/>
<circle cx="207.3" cy="280.7" r="1.27" fill="#f8f8f4"/><circle cx="366.0" cy="274.7" r="1.38" fill="#f8f8f4"/><circle cx="281.4" cy="131.1" r="1.38" fill="#f8f8f4"/><circle cx="72.8" cy="140.7" r="1.13" fill="#f8f8f4"/><circle cx="361.4" cy="73.5" r="1.27" fill="#f8f8f4"/><circle cx="337.1" cy="242.6" r="1.20" fill="#f8f8f4"/><circle cx="63.7" cy="118.5" r="1.11" fill="#f8f8f4"/><circle cx="467.9" cy="58.1" r="1.03" fill="#f8f8f4"/><circle cx="476.9" cy="233.1" r="1.27" fill="#f8f8f4"/><circle cx="345.9" cy="144.1" r="1.22" fill="#f8f8f4"/><circle cx="247.8" cy="103.3" r="1.09" fill="#f8f8f4"/><circle cx="522.9" cy="199.8" r="1.08" fill="#f8f8f4"/><circle cx="378.5" cy="146.8" r="1.32" fill="#f8f8f4"/><circle cx="223.9" cy="162.5" r="0.92" fill="#f8f8f4"/><circle cx="54.1" cy="191.8" r="1.07" fill="#f8f8f4"/><circle cx="291.5" cy="254.8" r="1.30" fill="#f8f8f4"/><circle cx="246.2" cy="223.4" r="0.93" fill="#f8f8f4"/><circle cx="80.0" cy="170.1" r="1.10" fill="#f8f8f4"/><circle cx="338.2" cy="157.9" r="1.27" fill="#f8f8f4"/><circle cx="193.2" cy="281.9" r="0.99" fill="#f8f8f4"/><circle cx="439.5" cy="66.9" r="1.04" fill="#f8f8f4"/><circle cx="451.2" cy="290.4" r="1.28" fill="#f8f8f4"/><circle cx="390.9" cy="228.3" r="1.05" fill="#f8f8f4"/><circle cx="166.2" cy="307.9" r="0.91" fill="#f8f8f4"/><circle cx="465.4" cy="291.1" r="0.90" fill="#f8f8f4"/><circle cx="457.7" cy="302.4" r="1.43" fill="#f8f8f4"/><circle cx="584.6" cy="141.2" r="1.02" fill="#f8f8f4"/><circle cx="344.5" cy="67.1" r="1.32" fill="#f8f8f4"/><circle cx="262.5" cy="239.6" r="1.13" fill="#f8f8f4"/><circle cx="320.0" cy="296.8" r="1.08" fill="#f8f8f4"/><circle cx="445.6" cy="252.4" r="1.19" fill="#f8f8f4"/><circle cx="136.5" cy="186.8" r="1.16" fill="#f8f8f4"/><circle cx="520.1" cy="57.4" r="1.40" fill="#f8f8f4"/><circle cx="460.8" cy="152.5" r="1.39" fill="#f8f8f4"/><circle cx="431.3" cy="199.2" r="1.24" fill="#f8f8f4"/><circle cx="489.9" cy="149.2" r="1.22" fill="#f8f8f4"/><circle cx="180.2" cy="263.8" r="1.30" fill="#f8f8f4"/><circle cx="271.1" cy="277.6" r="1.07" fill="#f8f8f4"/><circle cx="536.9" cy="187.2" r="1.34" fill="#f8f8f4"/><circle cx="261.0" cy="159.2" r="1.03" fill="#f8f8f4"/><circle cx="504.0" cy="298.5" r="1.14" fill="#f8f8f4"/><circle cx="193.6" cy="225.8" r="0.94" fill="#f8f8f4"/><circle cx="420.7" cy="231.8" r="1.44" fill="#f8f8f4"/><circle cx="587.4" cy="63.2" r="1.32" fill="#f8f8f4"/><circle cx="541.6" cy="290.5" r="1.07" fill="#f8f8f4"/><circle cx="118.5" cy="62.2" r="1.28" fill="#f8f8f4"/><circle cx="125.7" cy="276.6" r="1.10" fill="#f8f8f4"/><circle cx="583.5" cy="66.0" r="1.20" fill="#f8f8f4"/><circle cx="130.7" cy="232.0" r="1.44" fill="#f8f8f4"/><circle cx="55.0" cy="256.4" r="1.19" fill="#f8f8f4"/><circle cx="221.0" cy="293.8" r="1.07" fill="#f8f8f4"/><circle cx="483.7" cy="272.0" r="0.99" fill="#f8f8f4"/><circle cx="52.7" cy="195.0" r="1.11" fill="#f8f8f4"/><circle cx="49.5" cy="312.9" r="1.31" fill="#f8f8f4"/><circle cx="110.2" cy="253.6" r="1.29" fill="#f8f8f4"/><circle cx="179.4" cy="141.2" r="1.15" fill="#f8f8f4"/><circle cx="589.0" cy="112.1" r="1.21" fill="#f8f8f4"/><circle cx="131.6" cy="284.6" r="0.98" fill="#f8f8f4"/><circle cx="79.1" cy="245.1" r="1.33" fill="#f8f8f4"/><circle cx="141.5" cy="72.9" r="1.25" fill="#f8f8f4"/>
</g>
<circle cx="181" cy="316" r="5" fill="#fff4e0" opacity="0.5" filter="url(#bl3)"/><circle cx="181" cy="316" r="2.3" fill="#fffaf0"/><circle cx="502.5" cy="89" r="5" fill="none" stroke="#1a1818" stroke-width="3.4" opacity="0.6" filter="url(#bl1)"/>
</g></g></svg><div class="a" style="left:16px;top:41px;width:390px;height:278px;background:#6d6d6d;"></div><div class="a" style="left:16px;top:41px;width:390px;height:1.6px;background:#4c4c4c;"></div><svg style="left:22px;top:55px;" width="384" height="256" viewBox="0 0 384 256"><g transform="translate(-22 -55)"><use href="#sky"/></g></svg><svg style="left:16px;top:55px;" width="6" height="97" viewBox="0 0 6 97"><path d="M0 7L6 1V97H0Z" fill="#555555"/></svg><div class="a" style="left:16px;top:56px;width:6px;height:96px;overflow:hidden"><div class="vt" style="left:-3.5px;top:-107px;height:200px;font-size:6.0px;color:#c8c8c8;">light_BINNING_1_DBE_clone</div></div><svg style="left:16px;top:44px;" width="3" height="9" viewBox="0 0 3 9"><path d="M0 0.7H1.8V8.3H0" fill="none" stroke="#b8c0f8" stroke-width="1.3"/></svg><div class="t" style="left:132px;top:45.60px;font-size:7.85px;color:#c6c6c6;font-weight:bold">RGB 1:3 light_BINNING_1_DBE_clone | &lt;*new*&gt;</div><div class="a" style="left:101px;top:311px;width:198px;height:8px;background:#c4c4c4;border:1px solid #d6d6d6"></div><div class="a" style="left:16px;top:319px;width:842px;height:2px;background:#2e2e2e;"></div><div class="a" style="left:16px;top:283px;width:3px;height:5px;border-right:1px solid #c8c8c8;border-radius:0 3px 3px 0;opacity:0.7"></div><div class="a" style="left:16px;top:291px;width:3px;height:5px;border-right:1px solid #c8c8c8;border-radius:0 3px 3px 0;opacity:0.7"></div><div class="a" style="left:16px;top:299px;width:3px;height:5px;border-right:1px solid #c8c8c8;border-radius:0 3px 3px 0;opacity:0.7"></div><div class="a" style="left:16px;top:307px;width:3px;height:5px;border-right:1px solid #c8c8c8;border-radius:0 3px 3px 0;opacity:0.7"></div><div class="a" style="left:406px;top:41px;width:1px;height:279px;background:#2e2e2e;"></div><div class="a" style="left:407px;top:41px;width:451px;height:278px;background:#6d6d6d;"></div><div class="a" style="left:407px;top:41px;width:451px;height:1.6px;background:#4c4c4c;"></div><svg style="left:421px;top:55px;" width="429" height="256" viewBox="0 0 429 256"><g transform="translate(-177 -63)"><use href="#sky"/></g></svg><div class="a" style="left:409.5px;top:44.5px;width:9px;height:8px;background:#555;border:1.3px solid #b4bcf8"></div><div class="t" style="left:539px;top:45.60px;font-size:7.9px;color:#c6c6c6;font-weight:bold">RGB 1:3 light_BINNING_1_DBE | &lt;*new*&gt;</div><svg style="left:815.65px;top:46.3px;" width="6" height="6" viewBox="0 0 6 6"><path d="M0.3 3H5.2" stroke="#e6e6e6" stroke-width="1.3"/></svg><svg style="left:826.75px;top:46.3px;" width="6" height="6" viewBox="0 0 6 6"><rect x="0.2" y="0.8" width="5.1" height="1.4" fill="#e6e6e6"/><path d="M1.6 2.2H3.9L5.3 5.3H0.2Z" fill="#e6e6e6"/></svg><svg style="left:837.95px;top:46.3px;" width="6" height="6" viewBox="0 0 6 6"><path d="M2.75 0.2V5.8M0 3H5.5" stroke="#e6e6e6" stroke-width="1.6"/></svg><svg style="left:849.25px;top:46.3px;" width="6" height="6" viewBox="0 0 6 6"><path d="M0.4 0.4L5.1 5.6M5.1 0.4L0.4 5.6" stroke="#e6e6e6" stroke-width="1.2"/></svg><svg style="left:407px;top:55px;" width="14" height="79" viewBox="0 0 14 79"><path d="M1 14L14 1V79H1Z" fill="#555555"/></svg><div class="vt" style="left:411.3px;top:-69px;height:200px;font-size:6.0px;color:#d0d0d0;">light_BINNING_1_DBE</div><svg style="left:411px;top:283px;" width="10" height="35" viewBox="0 0 10 35"><path d="M1.5 1.5L6.5 6.5" stroke="#d0d0d0" stroke-width="0.8"/><path d="M7.5 4V7.5H4" fill="none" stroke="#d0d0d0" stroke-width="0.8"/><rect x="2" y="10.5" width="5.5" height="5.5" fill="none" stroke="#d0d0d0" stroke-width="0.7"/><path d="M1 9.5L8.5 17M8.5 9.5L1 17" stroke="#d0d0d0" stroke-width="0.7"/><circle cx="3.8" cy="23" r="2.4" fill="none" stroke="#d0d0d0" stroke-width="0.7"/><rect x="4" y="19" width="4" height="4" fill="none" stroke="#d0d0d0" stroke-width="0.7"/><circle cx="4.7" cy="30.5" r="2.8" fill="none" stroke="#d0d0d0" stroke-width="0.8"/><circle cx="4.7" cy="30.5" r="0.9" fill="none" stroke="#d0d0d0" stroke-width="0.6"/></svg><div class="a" style="left:568px;top:311px;width:189px;height:8px;background:#c4c4c4;border:1px solid #d6d6d6"></div><div class="a" style="left:917px;top:41px;width:1px;height:54px;background:#c08040;"></div><svg style="left:863px;top:54px;" width="74" height="16" viewBox="0 0 74 16"><path d="M1 1H68L73 6V15H1Z" fill="#c2c2c2" stroke="#9a9a9a" stroke-width="0.6"/><path d="M1.5 4.25L6.0 2L10.5 4.25L6.0 6.5Z" fill="#7ac4ff"/><path d="M1.5 4.25L6.0 6.5V11L1.5 8.75Z" fill="#1e78e0"/><path d="M10.5 4.25L6.0 6.5V11L10.5 8.75Z" fill="#4aa4f8"/><rect x="10" y="3" width="3.5" height="10" fill="#f0f0f0"/><path d="M10.5 4.5H13M10.5 6.5H13M10.5 8.5H13M10.5 10.5H13" stroke="#303060" stroke-width="0.9"/><rect x="68" y="11.5" width="2" height="1.5" fill="#303030"/></svg><div class="t" style="left:879.5px;top:59.20px;font-size:6.1px;color:#3a3a3a;">light_BINNING_1</div><svg style="left:870px;top:75px;" width="55" height="15" viewBox="0 0 55 15"><path d="M0.5 0.5H49L54 5V14.5H0.5Z" fill="#6a78dc"/><path d="M1.5 4.25L7.0 1.5L12.5 4.25L7.0 7.0Z" fill="#7ac4ff"/><path d="M1.5 4.25L7.0 7.0V12.5L1.5 9.75Z" fill="#1e78e0"/><path d="M12.5 4.25L7.0 7.0V12.5L12.5 9.75Z" fill="#4aa4f8"/><rect x="49" y="11" width="2" height="1.5" fill="#303030"/></svg><div class="t" style="left:886px;top:79.20px;font-size:6.2px;color:#f4f4f4;">star_mask</div><div class="a" style="left:16px;top:321px;width:302px;height:218px;background:#6d6d6d;"></div><div class="a" style="left:318px;top:321px;width:1px;height:218px;background:#2e2e2e;"></div><div class="a" style="left:19.5px;top:322px;width:9px;height:8px;background:#555;border:1.3px solid #b4bcf8"></div><div class="t" style="left:98.3px;top:323.00px;font-size:7.9px;color:#c6c6c6;font-weight:bold;letter-spacing:0.2px">Gray 1:9 Image12 | &lt;*new*&gt;</div><svg style="left:277.55px;top:323.3px;" width="6" height="6" viewBox="0 0 6 6"><path d="M0.3 3H5.2" stroke="#e6e6e6" stroke-width="1.3"/></svg><svg style="left:288.55px;top:323.3px;" width="6" height="6" viewBox="0 0 6 6"><rect x="0.2" y="0.8" width="5.1" height="1.4" fill="#e6e6e6"/><path d="M1.6 2.2H3.9L5.3 5.3H0.2Z" fill="#e6e6e6"/></svg><svg style="left:299.55px;top:323.3px;" width="6" height="6" viewBox="0 0 6 6"><path d="M2.75 0.2V5.8M0 3H5.5" stroke="#e6e6e6" stroke-width="1.6"/></svg><svg style="left:310.75px;top:323.3px;" width="6" height="6" viewBox="0 0 6 6"><path d="M0.4 0.4L5.1 5.6M5.1 0.4L0.4 5.6" stroke="#e6e6e6" stroke-width="1.2"/></svg><svg style="left:16px;top:331px;" width="16" height="42" viewBox="0 0 16 42"><path d="M2 15L15 2V41H2Z" fill="#555555"/></svg><div class="vt" style="left:22px;top:170px;height:200px;font-size:6.3px;color:#d0d0d0;">Image12</div><svg style="left:32px;top:331px;" width="280" height="199" viewBox="0 0 280 199"><rect width="280" height="199" fill="#fff"/><path d="M20 192h1v1h-1zM80 190h1v1h-1zM240 33h1v1h-1zM94 3h1v1h-1zM122 11h1v1h-1zM263 42h1v1h-1zM268 80h1v1h-1zM53 177h1v1h-1zM217 91h1v1h-1zM188 113h1v1h-1zM94 100h1v1h-1zM100 7h1v1h-1zM127 104h1v1h-1zM122 138h1v1h-1zM162 139h1v1h-1zM261 69h1v1h-1zM157 28h1v1h-1zM44 91h1v1h-1zM180 124h1v1h-1zM233 87h1v1h-1zM140 152h1v1h-1zM56 85h1v1h-1zM193 68h1v1h-1zM256 177h1v1h-1zM135 159h1v1h-1zM188 85h1v1h-1zM119 36h1v1h-1zM265 199h1v1h-1zM128 118h1v1h-1zM237 160h1v1h-1zM199 174h1v1h-1zM109 184h1v1h-1zM184 198h1v1h-1zM10 15h1v1h-1zM240 57h1v1h-1zM189 186h1v1h-1zM204 132h1v1h-1zM163 47h1v1h-1zM127 161h1v1h-1zM38 146h1v1h-1zM123 169h1v1h-1zM182 190h1v1h-1zM36 161h1v1h-1zM158 155h1v1h-1zM210 41h1v1h-1zM216 190h1v1h-1zM200 137h1v1h-1zM278 96h1v1h-1zM196 64h1v1h-1zM232 38h1v1h-1zM256 199h1v1h-1zM138 52h1v1h-1zM65 151h1v1h-1zM218 101h1v1h-1zM164 192h1v1h-1zM34 54h1v1h-1zM265 61h1v1h-1zM215 177h1v1h-1zM5 73h1v1h-1zM215 20h1v1h-1zM8 70h1v1h-1zM216 194h1v1h-1zM164 155h1v1h-1zM164 178h1v1h-1zM45 86h1v1h-1zM248 193h1v1h-1zM75 156h1v1h-1zM54 17h1v1h-1zM279 44h1v1h-1zM105 100h1v1h-1zM49 178h1v1h-1zM268 73h1v1h-1zM86 102h1v1h-1zM22 78h1v1h-1zM241 166h1v1h-1zM17 89h1v1h-1zM189 156h1v1h-1zM273 39h1v1h-1zM6 127h1v1h-1zM134 67h1v1h-1zM99 66h1v1h-1zM64 194h1v1h-1zM88 118h1v1h-1zM20 146h1v1h-1zM128 185h1v1h-1zM195 183h1v1h-1zM121 180h1v1h-1zM24 67h1v1h-1zM243 163h1v1h-1zM157 147h1v1h-1zM28 86h1v1h-1zM77 185h1v1h-1zM235 37h1v1h-1zM29 159h1v1h-1zM276 55h1v1h-1zM198 189h1v1h-1zM65 127h1v1h-1zM193 26h1v1h-1zM5 56h1v1h-1zM183 75h1v1h-1zM71 137h1v1h-1zM191 127h1v1h-1zM101 91h1v1h-1zM123 122h1v1h-1zM210 103h1v1h-1zM18 134h1v1h-1zM85 181h1v1h-1zM94 191h1v1h-1zM227 26h1v1h-1zM157 65h1v1h-1zM267 6h1v1h-1zM117 157h1v1h-1zM162 105h1v1h-1zM109 70h1v1h-1zM210 70h1v1h-1zM41 40h1v1h-1zM45 151h1v1h-1zM169 132h1v1h-1zM138 185h1v1h-1zM229 90h1v1h-1zM228 31h1v1h-1zM219 100h1v1h-1zM52 85h1v1h-1zM266 7h1v1h-1zM262 131h1v1h-1zM228 140h1v1h-1zM216 140h1v1h-1zM113 70h1v1h-1zM122 90h1v1h-1zM68 35h1v1h-1zM255 55h1v1h-1zM156 79h1v1h-1zM276 157h1v1h-1zM187 33h1v1h-1zM223 15h1v1h-1zM213 171h1v1h-1zM182 68h1v1h-1zM56 20h1v1h-1zM229 101h1v1h-1zM66 49h1v1h-1zM136 94h1v1h-1zM104 151h1v1h-1zM76 131h1v1h-1zM39 186h1v1h-1zM5 121h1v1h-1zM4 121h1v1h-1zM81 74h1v1h-1zM136 22h1v1h-1zM40 56h1v1h-1zM72 121h1v1h-1zM149 135h1v1h-1zM203 96h1v1h-1zM177 115h1v1h-1zM139 58h1v1h-1zM231 46h1v1h-1zM150 10h1v1h-1zM25 148h1v1h-1zM96 0h1v1h-1zM238 85h1v1h-1zM236 155h1v1h-1zM126 135h1v1h-1zM272 127h1v1h-1zM20 68h1v1h-1zM42 193h1v1h-1zM240 25h1v1h-1zM165 5h1v1h-1zM64 89h1v1h-1zM43 35h1v1h-1zM185 85h1v1h-1zM107 106h1v1h-1zM67 13h1v1h-1zM86 121h1v1h-1zM6 79h1v1h-1zM249 50h1v1h-1zM41 94h1v1h-1zM156 161h1v1h-1zM34 157h1v1h-1zM181 138h1v1h-1zM73 77h1v1h-1zM117 148h1v1h-1zM86 172h1v1h-1zM77 167h1v1h-1zM125 73h1v1h-1zM161 117h1v1h-1zM24 27h1v1h-1zM92 63h1v1h-1zM270 108h1v1h-1zM157 9h1v1h-1zM263 60h1v1h-1zM49 56h1v1h-1zM105 42h1v1h-1zM176 112h1v1h-1zM232 49h1v1h-1zM264 78h1v1h-1zM143 99h1v1h-1zM41 142h1v1h-1zM63 182h1v1h-1zM107 138h1v1h-1zM46 137h1v1h-1zM244 160h1v1h-1zM81 26h1v1h-1zM263 157h1v1h-1zM32 13h1v1h-1zM165 72h1v1h-1zM47 172h1v1h-1zM102 65h1v1h-1zM119 73h1v1h-1zM172 116h1v1h-1zM123 166h1v1h-1zM150 29h1v1h-1zM142 40h1v1h-1zM277 38h1v1h-1zM188 18h1v1h-1zM9 3h1v1h-1zM263 37h1v1h-1zM215 180h1v1h-1zM89 74h1v1h-1zM178 47h1v1h-1zM108 71h1v1h-1zM210 73h1v1h-1zM108 112h1v1h-1zM39 187h1v1h-1zM247 183h1v1h-1zM78 36h1v1h-1zM63 52h1v1h-1zM167 143h1v1h-1zM136 39h1v1h-1zM84 17h1v1h-1zM259 90h1v1h-1zM206 156h1v1h-1zM86 61h1v1h-1zM225 13h1v1h-1zM85 165h1v1h-1zM73 129h1v1h-1zM241 143h1v1h-1zM225 141h1v1h-1zM193 113h1v1h-1zM133 132h1v1h-1zM57 65h1v1h-1zM259 71h1v1h-1zM126 123h1v1h-1zM8 165h1v1h-1zM141 83h1v1h-1zM72 64h1v1h-1zM200 83h1v1h-1zM229 158h1v1h-1zM238 24h1v1h-1zM46 181h1v1h-1zM204 103h1v1h-1zM206 33h1v1h-1zM81 111h1v1h-1zM194 118h1v1h-1zM252 140h1v1h-1zM12 46h1v1h-1zM34 28h1v1h-1zM9 118h1v1h-1zM35 55h1v1h-1zM156 143h1v1h-1zM92 199h1v1h-1zM13 111h1v1h-1zM213 63h1v1h-1zM215 96h1v1h-1zM121 124h1v1h-1zM30 95h1v1h-1zM57 54h1v1h-1zM126 53h1v1h-1zM139 153h1v1h-1zM66 89h1v1h-1zM217 107h1v1h-1zM29 116h1v1h-1zM58 76h1v1h-1zM141 165h1v1h-1zM206 4h1v1h-1zM153 77h1v1h-1zM56 34h1v1h-1zM137 78h1v1h-1zM31 87h1v1h-1zM132 167h1v1h-1zM217 161h1v1h-1zM110 99h1v1h-1zM12 102h1v1h-1zM258 99h1v1h-1zM116 83h1v1h-1zM14 170h1v1h-1zM85 99h1v1h-1zM93 127h1v1h-1zM164 44h1v1h-1zM134 53h1v1h-1zM83 45h1v1h-1zM182 68h1v1h-1zM1 43h1v1h-1zM127 163h1v1h-1zM168 185h1v1h-1zM66 18h1v1h-1zM263 106h1v1h-1zM268 179h1v1h-1zM249 121h1v1h-1zM72 194h1v1h-1zM30 74h1v1h-1zM19 103h1v1h-1zM210 67h1v1h-1zM7 3h1v1h-1zM48 114h1v1h-1zM105 9h1v1h-1zM276 103h1v1h-1zM273 54h1v1h-1zM225 64h1v1h-1zM101 139h1v1h-1zM254 102h1v1h-1zM94 146h1v1h-1zM90 114h1v1h-1zM255 119h1v1h-1zM39 180h1v1h-1zM102 6h1v1h-1zM68 178h1v1h-1zM147 4h1v1h-1zM233 19h1v1h-1zM259 86h1v1h-1zM117 133h1v1h-1zM33 72h1v1h-1zM133 55h1v1h-1zM208 119h1v1h-1zM215 173h1v1h-1zM277 8h1v1h-1zM0 170h1v1h-1zM17 97h1v1h-1zM202 111h1v1h-1zM219 91h1v1h-1zM269 54h1v1h-1zM211 189h1v1h-1zM239 108h1v1h-1zM114 103h1v1h-1zM52 197h1v1h-1zM199 147h1v1h-1zM237 69h1v1h-1zM129 26h1v1h-1zM259 150h1v1h-1zM33 52h1v1h-1zM27 129h1v1h-1zM71 77h1v1h-1zM263 170h1v1h-1zM101 114h1v1h-1zM5 175h1v1h-1zM193 27h1v1h-1zM245 150h1v1h-1zM250 111h1v1h-1zM58 48h1v1h-1zM98 164h1v1h-1zM97 163h1v1h-1zM166 66h1v1h-1zM182 35h1v1h-1zM174 2h1v1h-1zM108 5h1v1h-1zM228 168h1v1h-1zM155 17h1v1h-1zM46 82h1v1h-1zM163 107h1v1h-1zM248 108h1v1h-1zM92 94h1v1h-1zM40 139h1v1h-1zM263 177h1v1h-1zM251 155h1v1h-1zM30 82h1v1h-1zM179 6h1v1h-1zM213 188h1v1h-1zM201 109h1v1h-1zM60 111h1v1h-1zM229 72h1v1h-1zM60 21h1v1h-1zM279 170h1v1h-1zM30 19h1v1h-1zM246 137h1v1h-1zM124 178h1v1h-1zM182 192h1v1h-1zM41 68h1v1h-1zM83 152h1v1h-1zM10 4h1v1h-1zM88 122h1v1h-1zM218 164h1v1h-1zM204 174h1v1h-1zM62 107h1v1h-1zM60 38h1v1h-1zM169 183h1v1h-1zM278 61h1v1h-1zM186 168h1v1h-1zM108 141h1v1h-1zM39 83h1v1h-1zM164 15h1v1h-1zM20 32h1v1h-1zM60 114h1v1h-1zM222 57h1v1h-1zM39 143h1v1h-1zM120 20h1v1h-1zM155 115h1v1h-1zM28 21h1v1h-1zM109 95h1v1h-1zM112 159h1v1h-1zM87 31h1v1h-1zM23 165h1v1h-1zM142 192h1v1h-1zM204 66h1v1h-1zM140 7h1v1h-1zM85 173h1v1h-1zM43 188h1v1h-1zM116 102h1v1h-1zM117 9h1v1h-1zM188 41h1v1h-1zM47 63h1v1h-1zM254 107h1v1h-1zM71 193h1v1h-1zM178 97h1v1h-1zM1 144h1v1h-1zM190 74h1v1h-1zM225 28h1v1h-1zM152 188h1v1h-1zM215 158h1v1h-1zM82 195h1v1h-1zM54 46h1v1h-1zM103 6h1v1h-1zM151 27h1v1h-1zM159 176h1v1h-1zM254 176h1v1h-1zM49 111h1v1h-1zM118 99h1v1h-1zM190 68h1v1h-1zM24 68h1v1h-1zM149 141h1v1h-1zM221 11h1v1h-1zM37 21h1v1h-1zM278 57h1v1h-1zM81 90h1v1h-1zM215 136h1v1h-1zM136 48h1v1h-1zM128 132h1v1h-1zM162 98h1v1h-1zM71 59h1v1h-1zM188 41h1v1h-1zM195 66h1v1h-1zM110 107h1v1h-1zM152 53h1v1h-1zM177 83h1v1h-1zM167 41h1v1h-1zM258 137h1v1h-1zM58 9h1v1h-1zM225 4h1v1h-1zM92 160h1v1h-1zM191 42h1v1h-1zM239 12h1v1h-1zM108 135h1v1h-1zM34 134h1v1h-1zM153 181h1v1h-1zM253 38h1v1h-1zM12 25h1v1h-1zM171 77h1v1h-1zM186 131h1v1h-1zM14 34h1v1h-1zM163 176h1v1h-1zM166 56h1v1h-1zM5 6h1v1h-1zM192 140h1v1h-1zM276 38h1v1h-1zM153 132h1v1h-1zM106 10h1v1h-1zM73 177h1v1h-1zM28 1h1v1h-1zM68 83h1v1h-1zM232 147h1v1h-1zM19 109h1v1h-1zM109 72h1v1h-1zM275 139h1v1h-1zM246 62h1v1h-1zM2 141h1v1h-1zM167 105h1v1h-1zM181 186h1v1h-1zM165 24h1v1h-1zM200 98h1v1h-1zM91 44h1v1h-1zM66 43h1v1h-1zM254 8h1v1h-1zM59 5h1v1h-1zM158 5h1v1h-1zM179 48h1v1h-1zM165 49h1v1h-1zM91 157h1v1h-1zM111 52h1v1h-1zM47 89h1v1h-1zM225 144h1v1h-1zM151 28h1v1h-1zM117 60h1v1h-1zM226 58h1v1h-1zM71 60h1v1h-1zM99 76h1v1h-1zM216 176h1v1h-1zM74 131h1v1h-1zM35 39h1v1h-1zM227 159h1v1h-1zM278 13h1v1h-1zM250 154h1v1h-1zM48 31h1v1h-1zM56 30h1v1h-1zM96 143h1v1h-1zM11 72h1v1h-1zM170 152h1v1h-1zM257 129h1v1h-1zM102 104h1v1h-1zM185 115h1v1h-1zM55 61h1v1h-1zM117 99h1v1h-1zM85 186h1v1h-1zM69 163h1v1h-1zM224 130h1v1h-1zM270 8h1v1h-1zM158 114h1v1h-1zM56 159h1v1h-1zM5 4h1v1h-1zM231 178h1v1h-1zM251 46h1v1h-1zM225 178h1v1h-1zM170 59h1v1h-1zM249 153h1v1h-1zM156 6h1v1h-1zM254 63h1v1h-1zM152 185h1v1h-1zM215 61h1v1h-1zM80 19h1v1h-1zM15 126h1v1h-1zM201 96h1v1h-1zM70 91h1v1h-1zM239 170h1v1h-1zM206 61h1v1h-1zM176 58h1v1h-1zM243 9h1v1h-1zM231 155h1v1h-1zM62 96h1v1h-1zM25 53h1v1h-1zM203 167h1v1h-1zM14 65h1v1h-1zM278 121h1v1h-1zM185 6h1v1h-1zM113 30h1v1h-1zM207 101h1v1h-1zM14 40h1v1h-1zM170 128h1v1h-1zM180 91h1v1h-1zM219 22h1v1h-1zM120 87h1v1h-1zM199 108h1v1h-1zM244 113h1v1h-1zM67 191h1v1h-1zM133 73h1v1h-1zM103 53h1v1h-1zM227 184h1v1h-1zM38 29h1v1h-1zM250 53h1v1h-1zM117 30h1v1h-1zM150 147h1v1h-1zM250 68h1v1h-1zM25 187h1v1h-1zM8 31h1v1h-1zM3 71h1v1h-1zM259 114h1v1h-1zM204 88h1v1h-1zM238 170h1v1h-1zM279 8h1v1h-1zM182 68h1v1h-1zM74 23h1v1h-1zM259 25h1v1h-1zM41 47h1v1h-1zM156 148h1v1h-1zM262 104h1v1h-1zM62 146h1v1h-1zM154 122h1v1h-1zM113 139h1v1h-1zM56 158h1v1h-1zM260 175h1v1h-1zM183 146h1v1h-1zM264 0h1v1h-1zM10 28h1v1h-1zM237 167h1v1h-1zM199 46h1v1h-1zM60 41h1v1h-1zM161 136h1v1h-1zM108 16h1v1h-1zM149 168h1v1h-1zM15 131h1v1h-1zM159 118h1v1h-1zM2 69h1v1h-1zM144 151h1v1h-1zM71 111h1v1h-1zM5 173h1v1h-1zM92 79h1v1h-1zM107 26h1v1h-1zM225 2h1v1h-1zM119 101h1v1h-1zM134 131h1v1h-1zM263 72h1v1h-1zM75 143h1v1h-1zM126 17h1v1h-1zM135 169h1v1h-1zM75 47h1v1h-1zM136 59h1v1h-1zM233 17h1v1h-1zM142 53h1v1h-1zM115 74h1v1h-1zM84 19h1v1h-1zM246 28h1v1h-1zM257 85h1v1h-1zM35 47h1v1h-1zM266 29h1v1h-1zM158 23h1v1h-1zM128 151h1v1h-1zM18 171h1v1h-1zM206 3h1v1h-1zM203 8h1v1h-1zM164 170h1v1h-1zM83 42h1v1h-1zM40 192h1v1h-1zM111 147h1v1h-1zM212 47h1v1h-1zM267 136h1v1h-1zM194 1h1v1h-1zM104 197h1v1h-1zM245 11h1v1h-1zM29 185h1v1h-1zM88 83h1v1h-1zM125 189h1v1h-1zM184 156h1v1h-1zM47 47h1v1h-1zM244 64h1v1h-1zM78 24h1v1h-1zM168 136h1v1h-1zM268 148h1v1h-1zM162 10h1v1h-1zM163 157h1v1h-1zM262 185h1v1h-1zM82 153h1v1h-1zM200 116h1v1h-1zM229 74h1v1h-1zM110 11h1v1h-1zM83 129h1v1h-1zM132 194h1v1h-1zM89 43h1v1h-1zM66 192h1v1h-1zM54 155h1v1h-1zM153 111h1v1h-1zM167 47h1v1h-1zM49 87h1v1h-1zM107 128h1v1h-1zM68 30h1v1h-1zM116 43h1v1h-1zM137 27h1v1h-1zM244 189h1v1h-1zM238 154h1v1h-1zM140 160h1v1h-1zM174 61h1v1h-1zM26 159h1v1h-1zM82 197h1v1h-1zM169 184h1v1h-1zM236 93h1v1h-1zM156 82h1v1h-1zM218 145h1v1h-1zM47 160h1v1h-1zM22 58h1v1h-1zM39 116h1v1h-1zM221 81h1v1h-1zM254 56h1v1h-1zM213 100h1v1h-1zM112 187h1v1h-1zM181 177h1v1h-1zM155 169h1v1h-1zM172 156h1v1h-1zM134 160h1v1h-1zM268 75h1v1h-1zM131 191h1v1h-1zM270 154h1v1h-1zM128 64h1v1h-1zM48 126h1v1h-1zM28 190h1v1h-1zM161 39h1v1h-1zM256 12h1v1h-1zM49 60h1v1h-1zM212 164h1v1h-1zM164 5h1v1h-1zM157 26h1v1h-1zM65 97h1v1h-1zM84 143h1v1h-1zM92 199h1v1h-1zM184 130h1v1h-1zM135 173h1v1h-1zM122 36h1v1h-1zM30 54h1v1h-1zM137 83h1v1h-1zM152 128h1v1h-1zM172 163h1v1h-1zM38 157h1v1h-1zM202 122h1v1h-1zM90 122h1v1h-1zM70 41h1v1h-1zM279 65h1v1h-1zM201 157h1v1h-1zM134 175h1v1h-1zM36 138h1v1h-1zM103 183h1v1h-1zM79 3h1v1h-1zM58 30h1v1h-1zM142 163h1v1h-1zM102 148h1v1h-1zM83 29h1v1h-1zM50 133h1v1h-1zM262 63h1v1h-1zM157 61h1v1h-1zM55 28h1v1h-1zM158 4h1v1h-1zM107 95h1v1h-1zM119 47h1v1h-1zM247 154h1v1h-1zM93 74h1v1h-1zM72 13h1v1h-1zM107 63h1v1h-1zM105 180h1v1h-1zM101 43h1v1h-1zM250 49h1v1h-1zM72 193h1v1h-1zM144 194h1v1h-1zM108 22h1v1h-1zM133 59h1v1h-1zM178 165h1v1h-1zM57 193h1v1h-1zM14 68h1v1h-1zM207 8h1v1h-1zM101 138h1v1h-1zM178 115h1v1h-1zM84 87h1v1h-1zM265 150h1v1h-1zM279 7h1v1h-1zM136 171h1v1h-1zM215 165h1v1h-1zM255 39h1v1h-1zM171 75h1v1h-1zM263 151h1v1h-1zM225 159h1v1h-1zM96 36h1v1h-1zM118 108h1v1h-1zM140 112h1v1h-1zM253 125h1v1h-1zM82 95h1v1h-1zM22 101h1v1h-1zM107 72h1v1h-1zM265 115h1v1h-1zM179 65h1v1h-1zM123 88h1v1h-1zM87 167h1v1h-1zM272 136h1v1h-1zM52 96h1v1h-1zM25 184h1v1h-1zM116 70h1v1h-1zM163 133h1v1h-1zM104 37h1v1h-1zM9 65h1v1h-1zM124 133h1v1h-1zM90 82h1v1h-1zM37 48h1v1h-1zM164 27h1v1h-1zM269 123h1v1h-1zM141 48h1v1h-1zM208 43h1v1h-1zM98 53h1v1h-1zM265 86h1v1h-1zM207 77h1v1h-1zM239 151h1v1h-1zM180 172h1v1h-1zM200 10h1v1h-1zM11 72h1v1h-1zM222 188h1v1h-1zM211 69h1v1h-1zM211 71h1v1h-1zM19 42h1v1h-1zM149 113h1v1h-1zM246 4h1v1h-1zM242 99h1v1h-1zM235 163h1v1h-1zM71 121h1v1h-1zM225 133h1v1h-1zM257 135h1v1h-1zM150 69h1v1h-1zM226 116h1v1h-1zM219 155h1v1h-1zM259 144h1v1h-1zM140 150h1v1h-1zM9 86h1v1h-1zM107 80h1v1h-1zM9 24h1v1h-1zM118 133h1v1h-1zM12 125h1v1h-1zM125 169h1v1h-1zM190 117h1v1h-1zM106 113h1v1h-1zM169 22h1v1h-1zM235 6h1v1h-1zM193 91h1v1h-1zM43 189h1v1h-1zM149 70h1v1h-1zM277 171h1v1h-1zM142 170h1v1h-1zM178 195h1v1h-1zM60 43h1v1h-1zM256 30h1v1h-1zM72 120h1v1h-1zM195 98h1v1h-1zM180 58h1v1h-1zM131 111h1v1h-1zM160 153h1v1h-1zM80 35h1v1h-1zM258 36h1v1h-1zM180 188h1v1h-1zM140 152h1v1h-1zM159 160h1v1h-1zM200 61h1v1h-1zM128 1h1v1h-1zM13 51h1v1h-1zM250 10h1v1h-1zM182 7h1v1h-1zM179 127h1v1h-1zM126 163h1v1h-1zM148 163h1v1h-1zM115 96h1v1h-1zM177 38h1v1h-1zM34 28h1v1h-1zM114 130h1v1h-1zM251 75h1v1h-1zM162 120h1v1h-1zM84 7h1v1h-1zM36 56h1v1h-1zM104 186h1v1h-1zM182 52h1v1h-1zM62 39h1v1h-1zM79 69h1v1h-1zM149 89h1v1h-1zM194 157h1v1h-1zM103 190h1v1h-1zM258 152h1v1h-1zM252 143h1v1h-1zM258 155h1v1h-1zM48 44h1v1h-1zM199 35h1v1h-1zM266 140h1v1h-1zM60 91h1v1h-1zM262 134h1v1h-1zM31 197h1v1h-1zM227 44h1v1h-1zM226 150h1v1h-1zM13 181h1v1h-1zM29 162h1v1h-1zM75 64h1v1h-1zM172 195h1v1h-1zM134 19h1v1h-1zM164 33h1v1h-1zM262 97h1v1h-1zM105 78h1v1h-1zM92 19h1v1h-1zM220 88h1v1h-1zM191 160h1v1h-1zM57 150h1v1h-1zM188 196h1v1h-1zM198 92h1v1h-1zM87 76h1v1h-1zM112 7h1v1h-1zM126 58h1v1h-1zM152 89h1v1h-1zM168 118h1v1h-1zM259 163h1v1h-1zM71 166h1v1h-1zM77 103h1v1h-1zM119 142h1v1h-1zM51 59h1v1h-1zM71 193h1v1h-1zM23 63h1v1h-1zM106 178h1v1h-1zM108 53h1v1h-1zM139 83h1v1h-1zM79 134h1v1h-1zM245 104h1v1h-1zM191 196h1v1h-1zM205 82h1v1h-1zM276 115h1v1h-1zM137 134h1v1h-1zM188 118h1v1h-1zM61 198h1v1h-1zM133 71h1v1h-1zM262 167h1v1h-1zM50 107h1v1h-1zM166 129h1v1h-1zM70 183h1v1h-1zM242 125h1v1h-1zM146 130h1v1h-1zM146 37h1v1h-1zM101 7h1v1h-1zM76 28h1v1h-1zM49 194h1v1h-1zM225 192h1v1h-1zM64 189h1v1h-1zM36 117h1v1h-1zM24 155h1v1h-1zM205 179h1v1h-1zM214 123h1v1h-1zM45 141h1v1h-1zM169 159h1v1h-1zM40 104h1v1h-1zM15 59h1v1h-1zM171 164h1v1h-1zM69 26h1v1h-1zM87 92h1v1h-1zM31 122h1v1h-1zM121 129h1v1h-1zM184 152h1v1h-1zM159 184h1v1h-1zM61 138h1v1h-1zM76 62h1v1h-1zM131 2h1v1h-1zM273 5h1v1h-1zM130 80h1v1h-1zM55 66h1v1h-1zM244 41h1v1h-1zM170 42h1v1h-1zM139 108h1v1h-1zM194 143h1v1h-1zM214 192h1v1h-1zM15 61h1v1h-1zM119 159h1v1h-1zM111 11h1v1h-1zM40 57h1v1h-1zM176 108h1v1h-1zM115 146h1v1h-1zM5 156h1v1h-1zM122 149h1v1h-1zM62 174h1v1h-1zM266 103h1v1h-1zM255 121h1v1h-1zM242 84h1v1h-1zM71 195h1v1h-1zM250 170h1v1h-1zM262 80h1v1h-1zM196 135h1v1h-1zM114 54h1v1h-1zM257 178h1v1h-1zM110 92h1v1h-1zM112 108h1v1h-1zM128 91h1v1h-1zM182 173h1v1h-1zM216 34h1v1h-1zM222 154h1v1h-1zM117 111h1v1h-1zM206 192h1v1h-1zM81 151h1v1h-1zM93 58h1v1h-1zM174 163h1v1h-1zM236 144h1v1h-1zM65 132h1v1h-1zM149 41h1v1h-1zM166 195h1v1h-1zM241 174h1v1h-1zM127 186h1v1h-1zM254 108h1v1h-1zM234 126h1v1h-1zM263 32h1v1h-1zM268 94h1v1h-1zM95 76h1v1h-1zM113 153h1v1h-1zM212 94h1v1h-1zM266 61h1v1h-1zM5 42h1v1h-1zM247 53h1v1h-1zM190 5h1v1h-1zM100 138h1v1h-1zM16 113h1v1h-1zM169 36h1v1h-1zM68 65h1v1h-1zM242 65h1v1h-1zM162 51h1v1h-1zM198 90h1v1h-1zM109 31h1v1h-1zM77 85h1v1h-1zM21 190h1v1h-1zM151 5h1v1h-1zM185 184h1v1h-1zM80 5h1v1h-1zM18 70h1v1h-1zM59 67h1v1h-1zM182 187h1v1h-1zM224 115h1v1h-1zM106 29h1v1h-1zM19 180h1v1h-1zM124 36h1v1h-1zM8 195h1v1h-1zM108 114h1v1h-1zM52 155h1v1h-1zM74 35h1v1h-1zM220 58h1v1h-1zM261 54h1v1h-1zM10 94h1v1h-1zM194 83h1v1h-1zM242 32h1v1h-1zM51 179h1v1h-1zM28 164h1v1h-1zM42 21h1v1h-1zM256 22h1v1h-1zM211 110h1v1h-1zM70 129h1v1h-1zM183 185h1v1h-1zM175 36h1v1h-1zM109 132h1v1h-1zM121 151h1v1h-1zM17 197h1v1h-1zM129 198h1v1h-1zM124 84h1v1h-1zM76 190h1v1h-1zM235 5h1v1h-1zM128 40h1v1h-1zM100 94h1v1h-1zM113 45h1v1h-1zM165 119h1v1h-1zM18 164h1v1h-1zM274 185h1v1h-1zM75 11h1v1h-1zM230 145h1v1h-1zM145 2h1v1h-1zM84 105h1v1h-1zM202 126h1v1h-1zM176 74h1v1h-1zM90 142h1v1h-1zM267 29h1v1h-1zM155 81h1v1h-1zM36 161h1v1h-1zM194 41h1v1h-1zM276 141h1v1h-1zM154 193h1v1h-1zM59 36h1v1h-1zM145 40h1v1h-1zM57 149h1v1h-1zM142 195h1v1h-1zM53 17h1v1h-1zM107 137h1v1h-1zM18 57h1v1h-1zM56 151h1v1h-1zM107 147h1v1h-1zM106 102h1v1h-1zM140 47h1v1h-1zM62 51h1v1h-1zM220 188h1v1h-1zM152 179h1v1h-1zM184 11h1v1h-1zM131 174h1v1h-1zM114 4h1v1h-1zM62 38h1v1h-1zM179 22h1v1h-1zM141 110h1v1h-1zM81 99h1v1h-1zM140 196h1v1h-1zM91 102h1v1h-1zM186 27h1v1h-1zM6 63h1v1h-1zM120 71h1v1h-1zM106 102h1v1h-1zM154 161h1v1h-1zM191 152h1v1h-1zM106 16h1v1h-1zM237 172h1v1h-1zM225 129h1v1h-1zM65 106h1v1h-1zM108 10h1v1h-1zM178 28h1v1h-1zM254 157h1v1h-1zM243 197h1v1h-1zM208 156h1v1h-1zM80 96h1v1h-1zM5 26h1v1h-1zM136 124h1v1h-1zM201 120h1v1h-1zM269 82h1v1h-1zM144 117h1v1h-1zM182 124h1v1h-1zM70 197h1v1h-1zM21 176h1v1h-1zM24 5h1v1h-1zM113 86h1v1h-1zM182 180h1v1h-1zM116 12h1v1h-1zM68 9h1v1h-1zM253 71h1v1h-1zM178 77h1v1h-1zM52 66h1v1h-1zM76 77h1v1h-1zM94 186h1v1h-1zM92 115h1v1h-1zM226 41h1v1h-1zM238 16h1v1h-1zM149 124h1v1h-1zM38 166h1v1h-1zM248 69h1v1h-1zM71 179h1v1h-1zM216 184h1v1h-1zM144 19h1v1h-1zM200 79h1v1h-1zM68 104h1v1h-1zM64 173h1v1h-1zM169 22h1v1h-1zM44 127h1v1h-1zM5 72h1v1h-1zM183 148h1v1h-1zM234 59h1v1h-1zM83 8h1v1h-1zM209 133h1v1h-1zM97 64h1v1h-1zM136 45h1v1h-1zM132 165h1v1h-1zM190 63h1v1h-1zM16 5h1v1h-1zM264 129h1v1h-1zM69 0h1v1h-1zM111 167h1v1h-1zM146 196h1v1h-1zM180 71h1v1h-1zM140 168h1v1h-1zM76 160h1v1h-1zM116 98h1v1h-1zM242 36h1v1h-1zM90 25h1v1h-1zM258 79h1v1h-1zM44 160h1v1h-1zM66 94h1v1h-1zM98 57h1v1h-1zM227 29h1v1h-1zM267 25h1v1h-1zM80 34h1v1h-1zM258 134h1v1h-1zM21 49h1v1h-1zM162 34h1v1h-1zM222 147h1v1h-1zM69 133h1v1h-1zM205 33h1v1h-1zM231 172h1v1h-1zM65 149h1v1h-1zM235 12h1v1h-1zM251 104h1v1h-1zM82 27h1v1h-1zM97 69h1v1h-1zM263 163h1v1h-1zM161 19h1v1h-1zM32 21h1v1h-1zM35 170h1v1h-1zM152 96h1v1h-1zM101 158h1v1h-1zM148 3h1v1h-1zM204 89h1v1h-1zM234 173h1v1h-1zM228 15h1v1h-1zM188 16h1v1h-1zM10 113h1v1h-1zM127 11h1v1h-1zM191 112h1v1h-1zM166 67h1v1h-1zM202 107h1v1h-1zM267 123h1v1h-1zM152 48h1v1h-1zM278 194h1v1h-1zM53 106h1v1h-1zM255 134h1v1h-1zM134 15h1v1h-1zM272 197h1v1h-1zM221 161h1v1h-1zM243 51h1v1h-1zM48 22h1v1h-1zM227 178h1v1h-1zM175 86h1v1h-1zM205 64h1v1h-1zM176 3h1v1h-1zM163 77h1v1h-1zM49 167h1v1h-1zM220 134h1v1h-1zM187 23h1v1h-1zM101 55h1v1h-1zM61 126h1v1h-1zM58 197h1v1h-1zM102 143h1v1h-1zM8 132h1v1h-1zM223 156h1v1h-1zM67 19h1v1h-1zM128 26h1v1h-1zM268 52h1v1h-1zM273 103h1v1h-1zM133 6h1v1h-1zM89 142h1v1h-1zM55 147h1v1h-1zM161 90h1v1h-1zM61 56h1v1h-1zM144 95h1v1h-1zM15 46h1v1h-1zM72 114h1v1h-1zM50 89h1v1h-1zM144 105h1v1h-1zM29 177h1v1h-1zM265 111h1v1h-1zM87 69h1v1h-1zM25 93h1v1h-1zM262 161h1v1h-1zM2 44h1v1h-1zM4 6h1v1h-1zM222 182h1v1h-1zM252 19h1v1h-1zM56 167h1v1h-1zM10 47h1v1h-1zM227 65h1v1h-1zM97 91h1v1h-1zM52 159h1v1h-1zM43 79h1v1h-1zM155 29h1v1h-1zM20 85h1v1h-1zM95 121h1v1h-1zM132 62h1v1h-1zM269 169h1v1h-1zM97 198h1v1h-1zM38 45h1v1h-1zM59 199h1v1h-1zM70 86h1v1h-1zM67 99h1v1h-1zM69 55h1v1h-1zM180 150h1v1h-1zM60 43h1v1h-1zM69 128h1v1h-1zM251 123h1v1h-1zM153 134h1v1h-1zM73 50h1v1h-1zM102 96h1v1h-1zM13 25h1v1h-1zM177 140h1v1h-1zM253 107h1v1h-1zM96 143h1v1h-1zM48 20h1v1h-1zM68 113h1v1h-1zM70 105h1v1h-1zM141 20h1v1h-1zM23 169h1v1h-1zM138 151h1v1h-1zM10 51h1v1h-1zM270 65h1v1h-1zM8 177h1v1h-1zM30 8h1v1h-1zM222 24h1v1h-1zM163 51h1v1h-1zM117 145h1v1h-1zM240 195h1v1h-1zM29 182h1v1h-1zM227 105h1v1h-1zM83 16h1v1h-1zM91 15h1v1h-1zM263 120h1v1h-1zM163 157h1v1h-1zM174 168h1v1h-1zM139 132h1v1h-1zM66 22h1v1h-1zM255 82h1v1h-1zM199 89h1v1h-1zM5 108h1v1h-1zM78 90h1v1h-1zM77 42h1v1h-1zM157 99h1v1h-1zM269 81h1v1h-1zM238 42h1v1h-1zM248 140h1v1h-1zM242 114h1v1h-1zM242 123h1v1h-1zM31 90h1v1h-1zM219 123h1v1h-1zM116 100h1v1h-1zM23 51h1v1h-1zM157 177h1v1h-1zM116 131h1v1h-1zM130 21h1v1h-1zM184 174h1v1h-1zM64 117h1v1h-1zM165 45h1v1h-1zM266 188h1v1h-1zM74 109h1v1h-1zM275 24h1v1h-1zM55 64h1v1h-1zM36 19h1v1h-1zM11 45h1v1h-1zM70 128h1v1h-1zM56 109h1v1h-1zM220 19h1v1h-1zM241 18h1v1h-1zM116 77h1v1h-1zM28 8h1v1h-1zM134 171h1v1h-1zM108 120h1v1h-1zM268 148h1v1h-1zM20 77h1v1h-1zM235 176h1v1h-1zM198 13h1v1h-1zM278 46h1v1h-1zM109 42h1v1h-1zM186 34h1v1h-1zM60 28h1v1h-1zM266 161h1v1h-1zM106 95h1v1h-1zM177 120h1v1h-1zM162 106h1v1h-1zM192 190h1v1h-1zM29 76h1v1h-1zM59 191h1v1h-1zM192 41h1v1h-1zM91 81h1v1h-1zM84 53h1v1h-1zM18 130h1v1h-1zM28 107h1v1h-1zM67 151h1v1h-1zM209 11h1v1h-1zM7 38h1v1h-1zM156 8h1v1h-1zM17 165h1v1h-1zM139 140h1v1h-1zM69 129h1v1h-1zM44 59h1v1h-1zM38 116h1v1h-1zM4 125h1v1h-1zM66 197h1v1h-1zM156 157h1v1h-1zM190 119h1v1h-1zM254 34h1v1h-1zM239 108h1v1h-1zM101 90h1v1h-1zM109 83h1v1h-1zM90 27h1v1h-1zM94 24h1v1h-1zM138 25h1v1h-1zM253 63h1v1h-1zM93 158h1v1h-1zM61 108h1v1h-1zM80 125h1v1h-1zM111 80h1v1h-1zM226 137h1v1h-1zM262 68h1v1h-1zM120 124h1v1h-1zM19 161h1v1h-1zM38 187h1v1h-1zM126 123h1v1h-1zM248 76h1v1h-1zM33 46h1v1h-1zM119 156h1v1h-1zM23 155h1v1h-1zM161 8h1v1h-1zM190 185h1v1h-1zM233 28h1v1h-1zM106 50h1v1h-1zM137 24h1v1h-1zM197 141h1v1h-1zM130 25h1v1h-1zM224 74h1v1h-1zM89 194h1v1h-1zM276 0h1v1h-1zM115 91h1v1h-1zM143 42h1v1h-1zM244 36h1v1h-1zM19 11h1v1h-1zM270 112h1v1h-1zM129 35h1v1h-1zM206 90h1v1h-1zM77 47h1v1h-1zM1 4h1v1h-1zM54 88h1v1h-1zM118 34h1v1h-1zM204 95h1v1h-1zM179 6h1v1h-1zM232 40h1v1h-1zM94 6h1v1h-1zM278 176h1v1h-1zM178 63h1v1h-1zM27 38h1v1h-1zM262 187h1v1h-1zM96 108h1v1h-1zM42 72h1v1h-1zM272 82h1v1h-1zM205 34h1v1h-1zM117 101h1v1h-1zM31 21h1v1h-1zM105 34h1v1h-1zM68 50h1v1h-1zM166 172h1v1h-1zM69 56h1v1h-1zM5 17h1v1h-1zM67 2h1v1h-1zM125 36h1v1h-1zM242 46h1v1h-1zM150 58h1v1h-1zM102 137h1v1h-1zM125 177h1v1h-1zM160 43h1v1h-1zM234 188h1v1h-1zM263 193h1v1h-1zM143 87h1v1h-1zM79 128h1v1h-1zM222 93h1v1h-1zM35 48h1v1h-1zM21 188h1v1h-1zM16 185h1v1h-1zM279 12h1v1h-1zM280 133h1v1h-1zM97 81h1v1h-1zM119 69h1v1h-1zM42 117h1v1h-1zM23 130h1v1h-1zM183 60h1v1h-1zM153 21h1v1h-1zM29 107h1v1h-1zM66 185h1v1h-1zM85 56h1v1h-1zM268 38h1v1h-1zM235 70h1v1h-1zM158 80h1v1h-1zM142 108h1v1h-1zM264 93h1v1h-1zM162 192h1v1h-1zM197 178h1v1h-1zM179 32h1v1h-1zM97 87h1v1h-1zM273 29h1v1h-1zM180 74h1v1h-1zM84 97h1v1h-1zM77 75h1v1h-1zM254 180h1v1h-1zM78 169h1v1h-1zM91 104h1v1h-1zM78 128h1v1h-1zM190 42h1v1h-1zM222 176h1v1h-1zM240 154h1v1h-1zM204 76h1v1h-1zM278 135h1v1h-1zM23 128h1v1h-1zM260 175h1v1h-1zM139 54h1v1h-1zM242 12h1v1h-1zM237 122h1v1h-1zM189 103h1v1h-1zM241 157h1v1h-1zM260 113h1v1h-1zM89 157h1v1h-1zM86 49h1v1h-1zM233 18h1v1h-1zM260 69h1v1h-1zM182 101h1v1h-1zM17 175h1v1h-1zM85 52h1v1h-1zM106 35h1v1h-1zM21 146h1v1h-1zM250 47h1v1h-1zM224 125h1v1h-1zM220 196h1v1h-1zM163 191h1v1h-1zM94 100h1v1h-1zM17 52h1v1h-1zM62 160h1v1h-1zM167 133h1v1h-1zM220 117h1v1h-1zM274 8h1v1h-1zM133 106h1v1h-1zM60 23h1v1h-1zM274 98h1v1h-1zM234 3h1v1h-1zM243 37h1v1h-1zM7 9h1v1h-1zM40 72h1v1h-1zM88 63h1v1h-1zM44 21h1v1h-1zM56 184h1v1h-1zM102 167h1v1h-1zM158 188h1v1h-1zM241 54h1v1h-1zM177 135h1v1h-1zM70 198h1v1h-1zM87 87h1v1h-1zM164 157h1v1h-1zM118 132h1v1h-1zM213 1h1v1h-1zM48 11h1v1h-1zM100 101h1v1h-1zM52 156h1v1h-1zM34 193h1v1h-1zM23 92h1v1h-1zM247 74h1v1h-1zM251 173h1v1h-1zM132 32h1v1h-1zM251 123h1v1h-1zM15 14h1v1h-1zM69 50h1v1h-1zM144 178h1v1h-1zM155 139h1v1h-1zM238 138h1v1h-1zM205 66h1v1h-1zM22 12h1v1h-1zM196 141h1v1h-1zM76 159h1v1h-1zM196 80h1v1h-1zM164 81h1v1h-1zM202 179h1v1h-1zM89 188h1v1h-1zM177 23h1v1h-1zM187 182h1v1h-1zM13 67h1v1h-1zM107 21h1v1h-1zM179 63h1v1h-1zM157 66h1v1h-1zM228 56h1v1h-1zM130 98h1v1h-1zM132 44h1v1h-1zM265 161h1v1h-1zM88 153h1v1h-1zM73 79h1v1h-1zM58 118h1v1h-1zM13 182h1v1h-1zM150 124h1v1h-1zM212 64h1v1h-1zM29 18h1v1h-1zM246 144h1v1h-1zM108 154h1v1h-1zM78 118h1v1h-1zM19 18h1v1h-1zM208 21h1v1h-1zM64 59h1v1h-1zM166 52h1v1h-1zM38 13h1v1h-1zM98 174h1v1h-1zM54 199h1v1h-1zM149 110h1v1h-1zM203 48h1v1h-1zM6 144h1v1h-1zM168 145h1v1h-1zM43 79h1v1h-1zM175 138h1v1h-1zM29 107h1v1h-1zM278 158h1v1h-1zM192 81h1v1h-1zM19 93h1v1h-1zM178 102h1v1h-1zM267 50h1v1h-1zM88 66h1v1h-1zM253 76h1v1h-1zM35 101h1v1h-1zM115 14h1v1h-1zM48 44h1v1h-1zM121 191h1v1h-1zM247 165h1v1h-1zM70 129h1v1h-1zM122 20h1v1h-1zM263 4h1v1h-1zM29 184h1v1h-1zM132 133h1v1h-1zM173 98h1v1h-1zM203 162h1v1h-1zM215 15h1v1h-1zM148 10h1v1h-1zM87 171h1v1h-1zM114 52h1v1h-1zM268 25h1v1h-1zM160 67h1v1h-1zM230 171h1v1h-1zM54 122h1v1h-1zM208 150h1v1h-1zM127 196h1v1h-1zM250 197h1v1h-1zM127 134h1v1h-1zM204 186h1v1h-1zM96 20h1v1h-1zM130 155h1v1h-1zM80 112h1v1h-1zM111 55h1v1h-1zM133 7h1v1h-1zM157 95h1v1h-1zM125 63h1v1h-1zM61 9h1v1h-1zM190 173h1v1h-1zM91 171h1v1h-1zM169 53h1v1h-1zM106 198h1v1h-1zM118 143h1v1h-1zM187 9h1v1h-1zM128 77h1v1h-1zM119 14h1v1h-1zM34 44h1v1h-1zM72 133h1v1h-1zM3 120h1v1h-1zM267 21h1v1h-1zM39 149h1v1h-1zM92 171h1v1h-1zM122 145h1v1h-1zM65 148h1v1h-1zM136 190h1v1h-1zM44 54h1v1h-1zM32 113h1v1h-1zM275 185h1v1h-1zM107 88h1v1h-1zM267 46h1v1h-1zM217 53h1v1h-1zM122 21h1v1h-1zM143 196h1v1h-1zM111 116h1v1h-1zM71 93h1v1h-1zM31 34h1v1h-1zM75 123h1v1h-1zM100 16h1v1h-1zM278 60h1v1h-1zM107 36h1v1h-1zM11 112h1v1h-1zM171 191h1v1h-1zM277 95h1v1h-1zM129 121h1v1h-1zM101 69h1v1h-1zM225 64h1v1h-1zM57 88h1v1h-1zM147 103h1v1h-1zM280 29h1v1h-1zM225 101h1v1h-1zM46 189h1v1h-1zM195 41h1v1h-1zM76 39h1v1h-1zM184 148h1v1h-1zM28 75h1v1h-1zM18 36h1v1h-1zM91 8h1v1h-1zM141 31h1v1h-1zM241 92h1v1h-1zM218 14h1v1h-1zM44 94h1v1h-1zM163 56h1v1h-1zM259 66h1v1h-1zM84 107h1v1h-1zM4 59h1v1h-1zM225 89h1v1h-1zM129 153h1v1h-1zM93 188h1v1h-1zM124 114h1v1h-1zM27 161h1v1h-1zM199 73h1v1h-1zM189 148h1v1h-1zM109 32h1v1h-1zM38 129h1v1h-1zM70 69h1v1h-1zM214 137h1v1h-1zM26 59h1v1h-1zM103 172h1v1h-1zM18 78h1v1h-1zM116 140h1v1h-1zM38 2h1v1h-1zM156 92h1v1h-1zM2 76h1v1h-1zM90 72h1v1h-1zM83 27h1v1h-1zM127 169h1v1h-1zM43 181h1v1h-1zM133 76h1v1h-1zM236 174h1v1h-1zM70 140h1v1h-1zM226 31h1v1h-1zM246 99h1v1h-1zM3 62h1v1h-1zM143 123h1v1h-1zM47 21h1v1h-1zM62 144h1v1h-1zM39 77h1v1h-1zM139 136h1v1h-1zM10 30h1v1h-1zM229 70h1v1h-1zM213 15h1v1h-1zM249 184h1v1h-1zM122 192h1v1h-1zM81 149h1v1h-1zM108 98h1v1h-1zM83 110h1v1h-1zM274 129h1v1h-1zM119 107h1v1h-1zM96 45h1v1h-1zM260 5h1v1h-1zM77 59h1v1h-1zM216 170h1v1h-1zM277 100h1v1h-1zM60 43h1v1h-1zM169 72h1v1h-1zM91 69h1v1h-1zM138 0h1v1h-1zM176 121h1v1h-1zM90 147h1v1h-1zM113 158h1v1h-1zM158 107h1v1h-1zM249 117h1v1h-1zM160 44h1v1h-1zM245 138h1v1h-1zM156 134h1v1h-1zM264 120h1v1h-1zM13 56h1v1h-1zM59 86h1v1h-1zM51 5h1v1h-1zM115 170h1v1h-1zM273 190h1v1h-1zM89 187h1v1h-1zM219 179h1v1h-1zM46 17h1v1h-1zM185 58h1v1h-1zM59 144h1v1h-1zM49 141h1v1h-1zM52 191h1v1h-1zM219 119h1v1h-1zM148 92h1v1h-1zM62 62h1v1h-1zM252 6h1v1h-1zM245 107h1v1h-1zM61 16h1v1h-1zM130 67h1v1h-1zM63 190h1v1h-1zM254 159h1v1h-1zM220 92h1v1h-1zM188 5h1v1h-1zM269 131h1v1h-1zM97 120h1v1h-1zM133 143h1v1h-1zM7 161h1v1h-1zM217 63h1v1h-1zM202 89h1v1h-1zM217 123h1v1h-1zM181 153h1v1h-1zM87 189h1v1h-1zM2 31h1v1h-1zM212 133h1v1h-1zM259 179h1v1h-1zM175 12h1v1h-1zM48 74h1v1h-1zM254 102h1v1h-1zM6 22h1v1h-1zM151 100h1v1h-1zM159 65h1v1h-1zM103 6h1v1h-1zM134 182h1v1h-1zM31 68h1v1h-1zM211 175h1v1h-1zM128 177h1v1h-1zM222 71h1v1h-1zM208 149h1v1h-1zM148 83h1v1h-1zM1 171h1v1h-1zM74 82h1v1h-1zM164 68h1v1h-1zM185 184h1v1h-1zM78 98h1v1h-1zM108 178h1v1h-1zM140 139h1v1h-1zM82 23h1v1h-1zM197 7h1v1h-1zM121 18h1v1h-1zM105 64h1v1h-1zM133 27h1v1h-1zM153 47h1v1h-1zM236 36h1v1h-1zM134 169h1v1h-1zM100 175h1v1h-1zM89 193h1v1h-1zM255 91h1v1h-1zM133 57h1v1h-1zM55 40h1v1h-1zM52 41h1v1h-1zM53 127h1v1h-1zM103 33h1v1h-1zM139 141h1v1h-1zM154 6h1v1h-1zM87 194h1v1h-1zM148 184h1v1h-1zM119 118h1v1h-1zM257 99h1v1h-1zM190 120h1v1h-1zM2 83h1v1h-1zM137 32h1v1h-1zM272 30h1v1h-1zM46 62h1v1h-1zM189 115h1v1h-1zM30 140h1v1h-1zM91 186h1v1h-1zM187 93h1v1h-1zM183 52h1v1h-1zM64 165h1v1h-1zM18 26h1v1h-1zM35 29h1v1h-1zM77 179h1v1h-1zM50 2h1v1h-1zM231 76h1v1h-1zM70 102h1v1h-1zM257 70h1v1h-1zM210 134h1v1h-1zM26 185h1v1h-1zM57 18h1v1h-1zM48 143h1v1h-1zM257 172h1v1h-1zM85 181h1v1h-1zM242 96h1v1h-1zM248 26h1v1h-1zM189 18h1v1h-1zM91 39h1v1h-1zM155 168h1v1h-1zM54 92h1v1h-1zM196 83h1v1h-1zM190 79h1v1h-1zM185 41h1v1h-1zM280 61h1v1h-1zM262 117h1v1h-1zM6 85h1v1h-1zM164 129h1v1h-1zM120 84h1v1h-1zM72 94h1v1h-1zM106 177h1v1h-1zM71 153h1v1h-1zM157 83h1v1h-1zM139 153h1v1h-1zM126 132h1v1h-1zM51 156h1v1h-1zM18 65h1v1h-1zM12 65h1v1h-1zM225 157h1v1h-1zM75 115h1v1h-1zM237 43h1v1h-1zM84 73h1v1h-1zM269 151h1v1h-1zM205 62h1v1h-1zM193 181h1v1h-1zM132 9h1v1h-1zM60 1h1v1h-1zM145 18h1v1h-1zM180 27h1v1h-1zM197 142h1v1h-1zM170 91h1v1h-1zM87 10h1v1h-1zM148 170h1v1h-1zM16 182h1v1h-1zM199 148h1v1h-1zM214 25h1v1h-1zM211 46h1v1h-1zM162 97h1v1h-1zM4 72h1v1h-1zM184 40h1v1h-1zM187 106h1v1h-1zM131 191h1v1h-1zM270 164h1v1h-1zM262 176h1v1h-1zM10 139h1v1h-1zM97 89h1v1h-1zM64 122h1v1h-1zM120 75h1v1h-1zM131 1h1v1h-1zM176 29h1v1h-1zM16 173h1v1h-1zM264 101h1v1h-1zM81 51h1v1h-1zM257 80h1v1h-1zM232 157h1v1h-1zM26 193h1v1h-1zM37 82h1v1h-1zM198 30h1v1h-1zM146 195h1v1h-1zM269 14h1v1h-1zM187 117h1v1h-1zM113 142h1v1h-1zM130 185h1v1h-1zM69 12h1v1h-1zM76 72h1v1h-1zM182 161h1v1h-1zM146 84h1v1h-1zM193 152h1v1h-1zM9 41h1v1h-1zM253 151h1v1h-1zM182 93h1v1h-1zM264 158h1v1h-1zM121 5h1v1h-1zM265 78h1v1h-1zM124 60h1v1h-1zM105 136h1v1h-1zM96 3h1v1h-1zM31 107h1v1h-1zM35 0h1v1h-1zM257 76h1v1h-1zM49 73h1v1h-1zM62 139h1v1h-1zM8 85h1v1h-1zM178 122h1v1h-1zM184 58h1v1h-1zM240 165h1v1h-1zM100 39h1v1h-1zM195 31h1v1h-1zM30 56h1v1h-1zM244 39h1v1h-1zM115 133h1v1h-1zM99 54h1v1h-1zM229 65h1v1h-1zM54 13h1v1h-1zM58 73h1v1h-1zM95 126h1v1h-1zM124 0h1v1h-1zM251 179h1v1h-1zM89 34h1v1h-1zM249 173h1v1h-1zM70 120h1v1h-1zM141 58h1v1h-1zM184 140h1v1h-1zM91 175h1v1h-1zM206 76h1v1h-1zM86 157h1v1h-1zM36 46h1v1h-1zM224 167h1v1h-1zM259 84h1v1h-1zM214 4h1v1h-1zM27 37h1v1h-1zM271 76h1v1h-1zM37 94h1v1h-1zM98 66h1v1h-1zM82 124h1v1h-1zM161 27h1v1h-1zM271 62h1v1h-1zM217 164h1v1h-1zM174 149h1v1h-1zM85 38h1v1h-1zM70 5h1v1h-1zM148 131h1v1h-1zM251 56h1v1h-1zM223 14h1v1h-1zM204 129h1v1h-1zM199 96h1v1h-1zM130 75h1v1h-1zM192 106h1v1h-1zM71 27h1v1h-1zM13 49h1v1h-1zM31 142h1v1h-1zM18 161h1v1h-1zM130 88h1v1h-1zM216 63h1v1h-1zM192 175h1v1h-1zM256 111h1v1h-1zM232 142h1v1h-1zM47 120h1v1h-1zM221 85h1v1h-1zM82 148h1v1h-1zM235 53h1v1h-1zM211 70h1v1h-1zM75 58h1v1h-1zM73 191h1v1h-1zM18 173h1v1h-1zM61 17h1v1h-1zM19 82h1v1h-1zM204 189h1v1h-1zM95 188h1v1h-1zM33 158h1v1h-1zM223 24h1v1h-1zM101 52h1v1h-1zM1 98h1v1h-1zM240 113h1v1h-1zM215 20h1v1h-1zM116 160h1v1h-1zM114 17h1v1h-1zM6 45h1v1h-1zM163 95h1v1h-1zM155 192h1v1h-1zM193 62h1v1h-1zM13 158h1v1h-1zM199 128h1v1h-1zM258 198h1v1h-1zM96 123h1v1h-1zM33 71h1v1h-1zM209 183h1v1h-1zM157 21h1v1h-1zM165 137h1v1h-1zM275 143h1v1h-1zM267 61h1v1h-1zM55 56h1v1h-1zM240 175h1v1h-1zM97 158h1v1h-1zM38 35h1v1h-1zM188 82h1v1h-1zM110 117h1v1h-1zM170 183h1v1h-1zM139 73h1v1h-1zM252 89h1v1h-1zM66 106h1v1h-1zM18 162h1v1h-1zM69 62h1v1h-1zM61 148h1v1h-1zM40 134h1v1h-1zM183 164h1v1h-1zM99 117h1v1h-1zM123 109h1v1h-1zM177 179h1v1h-1zM240 108h1v1h-1zM236 35h1v1h-1zM14 78h1v1h-1zM156 37h1v1h-1zM196 155h1v1h-1zM145 74h1v1h-1zM30 84h1v1h-1zM92 42h1v1h-1zM114 52h1v1h-1zM221 89h1v1h-1zM37 83h1v1h-1zM85 78h1v1h-1zM48 113h1v1h-1zM271 165h1v1h-1zM77 175h1v1h-1zM114 161h1v1h-1zM56 162h1v1h-1zM72 98h1v1h-1zM271 147h1v1h-1zM146 151h1v1h-1zM175 20h1v1h-1zM53 22h1v1h-1zM174 75h1v1h-1zM127 135h1v1h-1zM184 27h1v1h-1zM40 20h1v1h-1zM259 98h1v1h-1zM47 134h1v1h-1zM124 194h1v1h-1zM121 57h1v1h-1zM4 20h1v1h-1zM128 196h1v1h-1zM185 13h1v1h-1zM0 40h1v1h-1zM61 58h1v1h-1zM158 175h1v1h-1zM165 98h1v1h-1zM243 14h1v1h-1zM61 137h1v1h-1zM254 159h1v1h-1zM160 170h1v1h-1zM213 158h1v1h-1zM11 194h1v1h-1zM95 153h1v1h-1zM149 110h1v1h-1zM99 140h1v1h-1zM175 31h1v1h-1zM212 91h1v1h-1zM105 100h1v1h-1zM7 183h1v1h-1zM194 161h1v1h-1zM75 142h1v1h-1zM153 95h1v1h-1zM22 151h1v1h-1zM109 109h1v1h-1zM189 124h1v1h-1zM115 159h1v1h-1zM35 84h1v1h-1zM216 142h1v1h-1zM98 125h1v1h-1zM150 193h1v1h-1zM266 37h1v1h-1zM24 161h1v1h-1zM179 114h1v1h-1zM142 168h1v1h-1zM274 34h1v1h-1zM80 156h1v1h-1zM6 36h1v1h-1zM7 142h1v1h-1zM101 165h1v1h-1zM167 190h1v1h-1zM266 87h1v1h-1zM177 36h1v1h-1zM149 150h1v1h-1zM158 33h1v1h-1zM135 72h1v1h-1zM163 48h1v1h-1zM153 14h1v1h-1zM245 131h1v1h-1zM158 108h1v1h-1zM236 197h1v1h-1zM31 99h1v1h-1zM142 88h1v1h-1zM46 2h1v1h-1zM219 190h1v1h-1zM219 80h1v1h-1zM154 37h1v1h-1zM63 60h1v1h-1zM127 113h1v1h-1zM175 37h1v1h-1zM16 147h1v1h-1zM143 6h1v1h-1zM231 91h1v1h-1zM52 73h1v1h-1zM149 6h1v1h-1zM279 45h1v1h-1zM200 62h1v1h-1zM56 118h1v1h-1zM108 132h1v1h-1zM254 3h1v1h-1zM234 68h1v1h-1zM239 60h1v1h-1zM11 153h1v1h-1zM128 93h1v1h-1zM241 124h1v1h-1zM121 10h1v1h-1zM85 118h1v1h-1zM95 73h1v1h-1zM154 192h1v1h-1zM273 156h1v1h-1zM182 51h1v1h-1zM271 169h1v1h-1zM211 173h1v1h-1zM229 172h1v1h-1zM109 132h1v1h-1zM105 43h1v1h-1zM168 103h1v1h-1zM65 54h1v1h-1zM88 34h1v1h-1zM181 137h1v1h-1zM186 11h1v1h-1zM184 175h1v1h-1zM78 174h1v1h-1zM146 113h1v1h-1zM89 168h1v1h-1zM121 141h1v1h-1zM130 32h1v1h-1zM217 124h1v1h-1zM191 104h1v1h-1zM210 71h1v1h-1zM264 61h1v1h-1zM279 192h1v1h-1zM212 77h1v1h-1zM19 153h1v1h-1zM265 9h1v1h-1zM273 149h1v1h-1zM21 188h1v1h-1zM80 130h1v1h-1zM163 65h1v1h-1zM194 58h1v1h-1zM102 133h1v1h-1zM155 198h1v1h-1zM209 129h1v1h-1zM244 182h1v1h-1zM265 146h1v1h-1zM176 154h1v1h-1zM167 177h1v1h-1zM108 37h1v1h-1zM136 94h1v1h-1zM40 105h1v1h-1zM220 105h1v1h-1zM26 71h1v1h-1zM28 109h1v1h-1zM99 190h1v1h-1zM251 18h1v1h-1zM94 133h1v1h-1zM7 18h1v1h-1zM277 40h1v1h-1zM191 136h1v1h-1zM66 71h1v1h-1zM55 152h1v1h-1zM83 122h1v1h-1zM88 155h1v1h-1zM17 183h1v1h-1zM75 162h1v1h-1zM171 89h1v1h-1zM71 136h1v1h-1zM136 3h1v1h-1zM138 67h1v1h-1zM258 68h1v1h-1zM236 160h1v1h-1zM250 131h1v1h-1zM207 149h1v1h-1zM75 49h1v1h-1zM133 171h1v1h-1zM119 147h1v1h-1zM203 186h1v1h-1zM50 49h1v1h-1zM151 119h1v1h-1zM15 163h1v1h-1zM78 154h1v1h-1zM87 50h1v1h-1zM3 44h1v1h-1zM153 108h1v1h-1zM228 86h1v1h-1zM53 77h1v1h-1zM87 125h1v1h-1zM46 20h1v1h-1zM257 191h1v1h-1zM19 66h1v1h-1zM154 55h1v1h-1zM266 99h1v1h-1zM110 80h1v1h-1zM130 158h1v1h-1zM253 108h1v1h-1zM203 70h1v1h-1zM38 36h1v1h-1zM2 1h1v1h-1zM274 118h1v1h-1zM104 74h1v1h-1zM104 134h1v1h-1zM205 52h1v1h-1zM8 174h1v1h-1zM229 31h1v1h-1zM231 179h1v1h-1zM184 158h1v1h-1zM62 192h1v1h-1zM103 134h1v1h-1zM91 28h1v1h-1zM10 73h1v1h-1zM177 161h1v1h-1zM209 141h1v1h-1zM11 163h1v1h-1zM25 10h1v1h-1zM129 150h1v1h-1zM266 19h1v1h-1zM110 8h1v1h-1zM41 36h1v1h-1zM222 64h1v1h-1zM54 87h1v1h-1zM74 185h1v1h-1zM150 155h1v1h-1zM195 32h1v1h-1zM3 111h1v1h-1zM9 134h1v1h-1zM239 45h1v1h-1zM141 7h1v1h-1zM211 92h1v1h-1zM3 100h1v1h-1zM155 177h1v1h-1zM269 75h1v1h-1zM263 105h1v1h-1zM164 142h1v1h-1zM139 52h1v1h-1zM105 76h1v1h-1zM191 25h1v1h-1zM112 135h1v1h-1zM178 93h1v1h-1zM62 125h1v1h-1zM99 112h1v1h-1zM121 35h1v1h-1zM62 163h1v1h-1zM242 196h1v1h-1zM122 75h1v1h-1zM41 170h1v1h-1zM84 140h1v1h-1zM108 148h1v1h-1zM272 101h1v1h-1zM125 6h1v1h-1zM169 4h1v1h-1zM61 63h1v1h-1zM49 169h1v1h-1zM27 107h1v1h-1zM247 155h1v1h-1zM231 126h1v1h-1zM27 187h1v1h-1zM91 94h1v1h-1zM211 178h1v1h-1zM189 14h1v1h-1zM80 57h1v1h-1zM141 164h1v1h-1zM70 16h1v1h-1zM108 56h1v1h-1zM171 167h1v1h-1zM238 175h1v1h-1zM189 181h1v1h-1zM31 25h1v1h-1zM73 164h1v1h-1zM251 91h1v1h-1zM54 72h1v1h-1zM261 35h1v1h-1zM14 18h1v1h-1zM186 120h1v1h-1zM72 35h1v1h-1zM24 5h1v1h-1zM250 10h1v1h-1zM35 102h1v1h-1zM177 84h1v1h-1zM122 125h1v1h-1zM94 70h1v1h-1zM60 34h1v1h-1zM147 52h1v1h-1zM43 60h1v1h-1zM226 10h1v1h-1zM120 197h1v1h-1zM232 26h1v1h-1zM89 14h1v1h-1zM256 73h1v1h-1zM244 180h1v1h-1zM190 133h1v1h-1zM51 46h1v1h-1zM7 113h1v1h-1zM157 172h1v1h-1zM227 166h1v1h-1zM25 178h1v1h-1zM65 10h1v1h-1zM116 32h1v1h-1zM169 28h1v1h-1zM57 8h1v1h-1zM210 150h1v1h-1zM87 148h1v1h-1zM214 56h1v1h-1zM253 137h1v1h-1zM218 133h1v1h-1zM164 60h1v1h-1zM98 5h1v1h-1z" fill="#000" opacity="0.22"/><path d="M64.2 88.7h1.2v1.2h-1.2zM161.1 165.4h0.8v0.8h-0.8zM258.4 181.5h1.4v1.4h-1.4zM168.4 174.5h0.9v0.9h-0.9zM260.2 137.7h1.2v1.2h-1.2zM29.0 147.3h0.8v0.8h-0.8zM234.3 114.8h1.1v1.1h-1.1zM163.6 21.3h1v1h-1zM87.4 25.0h1.4v1.4h-1.4zM164.3 6.8h1v1h-1zM161.5 15.2h1.1v1.1h-1.1zM243.3 137.3h0.9v0.9h-0.9zM153.5 33.4h1.6v1.6h-1.6zM71.8 131.3h1.4v1.4h-1.4zM24.8 35.4h1.6v1.6h-1.6zM208.8 106.7h1.2v1.2h-1.2zM85.8 196.3h1v1h-1zM34.7 166.0h0.8v0.8h-0.8zM1.7 93.8h1.1v1.1h-1.1zM181.2 164.4h1v1h-1zM195.6 159.9h1.6v1.6h-1.6zM108.0 130.1h1.6v1.6h-1.6zM228.7 84.0h1.6v1.6h-1.6zM96.1 134.9h1.2v1.2h-1.2zM189.3 120.4h0.8v0.8h-0.8zM170.9 10.6h1.2v1.2h-1.2zM80.2 115.7h1.4v1.4h-1.4zM42.2 57.2h1.6v1.6h-1.6zM191.8 180.3h1.4v1.4h-1.4zM3.6 55.9h1.2v1.2h-1.2zM144.6 95.1h1v1h-1zM90.9 183.3h1.1v1.1h-1.1zM84.4 31.2h1.6v1.6h-1.6zM159.2 17.2h0.9v0.9h-0.9zM95.0 76.9h1v1h-1zM171.8 127.9h0.9v0.9h-0.9zM168.8 92.1h1.4v1.4h-1.4zM151.0 147.7h1.4v1.4h-1.4zM11.6 39.6h1.2v1.2h-1.2zM39.5 32.9h1.6v1.6h-1.6zM208.6 155.5h0.8v0.8h-0.8zM230.8 130.2h1.6v1.6h-1.6zM70.2 65.8h1.1v1.1h-1.1zM191.8 102.9h1v1h-1zM172.1 13.8h0.9v0.9h-0.9zM259.3 35.7h1.6v1.6h-1.6zM86.6 56.1h0.8v0.8h-0.8zM249.2 108.9h1.2v1.2h-1.2zM256.2 168.9h1.6v1.6h-1.6zM69.7 178.9h1.4v1.4h-1.4zM204.0 126.3h0.8v0.8h-0.8zM244.7 75.9h1.1v1.1h-1.1zM133.0 58.0h1v1h-1zM39.6 2.5h1v1h-1zM135.3 99.8h0.9v0.9h-0.9zM124.3 69.8h1.1v1.1h-1.1zM56.2 82.1h1.6v1.6h-1.6zM216.8 139.7h1.6v1.6h-1.6zM213.2 102.2h1v1h-1zM178.8 54.4h1.4v1.4h-1.4zM94.7 154.7h1.2v1.2h-1.2zM45.1 158.2h1.2v1.2h-1.2zM160.6 69.7h1v1h-1zM51.3 88.9h1.1v1.1h-1.1zM33.3 160.1h1.6v1.6h-1.6zM275.5 120.3h1.6v1.6h-1.6zM38.5 188.7h1.6v1.6h-1.6zM227.4 125.3h1.2v1.2h-1.2zM58.2 183.7h0.8v0.8h-0.8zM192.3 28.1h1.6v1.6h-1.6zM39.5 45.7h0.9v0.9h-0.9zM201.6 114.3h1.6v1.6h-1.6zM155.8 62.3h0.9v0.9h-0.9zM77.4 127.8h0.9v0.9h-0.9zM206.7 134.8h0.9v0.9h-0.9zM106.5 113.2h0.8v0.8h-0.8zM4.6 89.4h1.4v1.4h-1.4zM176.9 6.6h1.1v1.1h-1.1zM244.1 192.8h0.9v0.9h-0.9zM235.1 132.8h1.1v1.1h-1.1zM135.7 35.4h0.8v0.8h-0.8zM111.8 119.4h1.6v1.6h-1.6zM39.7 157.0h1v1h-1zM40.5 29.7h0.8v0.8h-0.8zM118.9 98.3h0.9v0.9h-0.9zM165.0 132.5h1.4v1.4h-1.4zM279.6 124.6h1.2v1.2h-1.2zM232.1 135.4h1.2v1.2h-1.2zM75.7 177.8h1v1h-1zM250.0 66.3h1.4v1.4h-1.4zM227.8 150.8h0.9v0.9h-0.9zM206.6 25.9h1v1h-1zM221.7 141.5h1.1v1.1h-1.1zM268.5 42.7h0.9v0.9h-0.9zM33.4 154.9h0.8v0.8h-0.8zM117.1 118.1h1.4v1.4h-1.4zM148.7 26.6h0.8v0.8h-0.8zM37.3 12.9h1v1h-1zM76.4 195.1h1.1v1.1h-1.1zM67.9 133.8h1.2v1.2h-1.2zM201.8 193.9h1.1v1.1h-1.1zM189.4 116.5h1.4v1.4h-1.4zM203.9 29.3h1.6v1.6h-1.6zM104.9 54.9h1v1h-1zM198.1 74.2h1.6v1.6h-1.6zM171.1 130.1h0.8v0.8h-0.8zM43.3 4.1h1.4v1.4h-1.4zM100.7 133.7h0.9v0.9h-0.9zM3.7 182.9h0.8v0.8h-0.8zM53.1 132.1h1.4v1.4h-1.4zM88.6 198.0h0.9v0.9h-0.9zM267.6 140.9h1.1v1.1h-1.1zM185.6 139.8h1.6v1.6h-1.6zM60.4 30.7h0.9v0.9h-0.9zM54.1 197.7h1.1v1.1h-1.1zM213.7 75.5h1.1v1.1h-1.1zM51.7 167.7h0.9v0.9h-0.9zM264.2 195.6h1.1v1.1h-1.1zM211.7 47.3h1v1h-1zM53.9 28.5h1.1v1.1h-1.1zM6.3 66.4h1.1v1.1h-1.1zM254.9 161.1h1.4v1.4h-1.4zM65.3 181.9h0.8v0.8h-0.8zM191.7 165.4h0.8v0.8h-0.8zM104.3 129.0h1v1h-1zM119.8 172.8h1.6v1.6h-1.6zM8.0 124.3h1.1v1.1h-1.1zM279.9 81.2h0.8v0.8h-0.8zM259.7 172.4h0.9v0.9h-0.9zM34.7 152.4h1v1h-1zM99.8 196.2h1.6v1.6h-1.6zM46.7 164.0h1.4v1.4h-1.4zM98.5 88.2h0.9v0.9h-0.9zM12.7 187.2h1.1v1.1h-1.1zM67.8 88.2h1.2v1.2h-1.2zM48.2 15.0h1v1h-1zM256.3 85.9h0.9v0.9h-0.9zM26.3 40.4h1.6v1.6h-1.6zM122.7 78.6h1.2v1.2h-1.2zM127.9 94.3h1v1h-1zM166.0 141.2h0.9v0.9h-0.9zM57.4 49.2h1.2v1.2h-1.2zM123.8 49.7h1.1v1.1h-1.1zM154.3 198.5h0.9v0.9h-0.9zM242.5 95.5h1v1h-1zM187.5 51.5h1v1h-1zM86.8 164.3h1.4v1.4h-1.4zM246.5 166.1h1.2v1.2h-1.2zM193.5 138.0h1.4v1.4h-1.4zM202.5 182.7h1.6v1.6h-1.6zM81.8 110.7h0.9v0.9h-0.9zM14.4 186.8h1v1h-1zM275.5 98.4h1v1h-1zM112.2 23.1h1.4v1.4h-1.4zM247.2 54.7h0.9v0.9h-0.9zM254.2 172.3h1v1h-1zM134.8 148.1h0.9v0.9h-0.9zM178.4 190.6h1.4v1.4h-1.4zM112.8 133.5h1v1h-1zM208.5 50.3h1.2v1.2h-1.2zM59.7 13.7h1.2v1.2h-1.2zM148.5 9.0h0.9v0.9h-0.9zM126.5 159.0h1v1h-1zM117.8 64.4h1.6v1.6h-1.6zM210.3 151.0h1.1v1.1h-1.1zM26.0 9.1h0.9v0.9h-0.9zM158.7 103.1h0.9v0.9h-0.9zM72.0 94.8h0.9v0.9h-0.9zM41.5 104.2h1.4v1.4h-1.4zM38.9 36.5h1v1h-1zM57.6 104.4h1.6v1.6h-1.6zM73.4 169.9h1v1h-1zM174.3 102.5h1v1h-1zM219.9 15.2h1v1h-1zM188.4 181.3h1v1h-1zM144.7 189.0h1v1h-1zM104.7 17.0h1.4v1.4h-1.4zM221.8 16.9h0.9v0.9h-0.9zM232.4 168.2h1v1h-1zM156.5 125.0h1.2v1.2h-1.2zM58.0 145.1h0.9v0.9h-0.9zM222.3 79.1h0.8v0.8h-0.8zM128.5 8.1h1.1v1.1h-1.1zM79.0 21.9h1.4v1.4h-1.4zM30.8 113.7h1.4v1.4h-1.4zM20.9 195.2h1v1h-1zM177.6 154.6h0.9v0.9h-0.9zM120.5 180.8h1v1h-1zM192.0 109.3h1.4v1.4h-1.4zM168.6 192.6h1.1v1.1h-1.1zM131.2 126.4h1v1h-1zM94.6 16.4h1v1h-1zM227.7 18.4h0.8v0.8h-0.8zM60.9 27.0h1v1h-1zM96.1 61.9h1.4v1.4h-1.4zM4.6 128.3h1.4v1.4h-1.4zM41.2 85.7h1.2v1.2h-1.2zM132.0 187.1h1.4v1.4h-1.4zM53.8 2.8h1.1v1.1h-1.1zM65.8 128.6h1v1h-1zM88.6 100.8h0.9v0.9h-0.9zM250.2 98.8h0.9v0.9h-0.9zM113.8 197.3h1.4v1.4h-1.4zM256.1 192.8h1.4v1.4h-1.4zM11.5 27.9h1v1h-1zM133.2 20.9h0.9v0.9h-0.9zM86.9 99.4h1.2v1.2h-1.2zM83.5 15.0h0.8v0.8h-0.8zM90.5 186.7h1.2v1.2h-1.2zM43.7 193.3h0.9v0.9h-0.9zM27.2 145.5h0.9v0.9h-0.9zM42.4 72.3h1.1v1.1h-1.1zM205.9 101.4h1.4v1.4h-1.4zM232.4 102.9h1.6v1.6h-1.6zM236.7 184.7h1v1h-1zM40.8 0.4h1.4v1.4h-1.4zM246.4 190.0h1.2v1.2h-1.2zM42.9 116.2h1.2v1.2h-1.2zM167.4 105.2h1v1h-1zM137.7 39.5h1v1h-1zM51.1 17.3h1v1h-1zM55.9 161.0h1.2v1.2h-1.2zM181.0 138.6h1v1h-1zM59.0 129.1h1v1h-1zM21.8 194.2h1.1v1.1h-1.1zM56.3 51.0h1.1v1.1h-1.1zM195.1 187.4h1.6v1.6h-1.6zM212.8 12.5h0.8v0.8h-0.8zM206.7 67.2h1v1h-1zM272.0 173.2h1v1h-1zM258.3 146.7h1.2v1.2h-1.2zM75.8 50.6h0.8v0.8h-0.8zM142.6 130.9h1v1h-1zM235.8 15.2h1v1h-1zM174.8 131.9h1.4v1.4h-1.4zM223.7 109.9h1v1h-1zM256.2 105.4h0.8v0.8h-0.8zM246.9 103.8h1.6v1.6h-1.6zM25.2 20.1h0.9v0.9h-0.9zM5.9 24.2h0.8v0.8h-0.8zM150.7 42.2h0.8v0.8h-0.8zM115.0 153.2h1v1h-1zM176.9 170.3h1.2v1.2h-1.2zM79.5 87.5h1.4v1.4h-1.4zM79.5 58.3h1v1h-1zM137.1 39.9h1.2v1.2h-1.2zM114.3 157.5h0.9v0.9h-0.9zM248.4 84.2h1.2v1.2h-1.2zM245.9 121.1h1.2v1.2h-1.2zM164.3 141.4h1v1h-1zM138.5 150.1h1v1h-1zM276.5 113.8h0.8v0.8h-0.8zM233.4 99.5h0.8v0.8h-0.8zM140.9 108.1h1.4v1.4h-1.4zM96.9 187.7h1.1v1.1h-1.1zM149.4 68.5h1.6v1.6h-1.6zM70.5 9.5h1.2v1.2h-1.2zM33.0 192.1h0.9v0.9h-0.9zM13.7 58.3h1.1v1.1h-1.1zM175.0 197.8h1.6v1.6h-1.6zM222.6 61.5h1.2v1.2h-1.2zM145.5 66.0h1.6v1.6h-1.6zM150.4 57.6h1v1h-1zM72.3 182.8h0.9v0.9h-0.9zM232.5 46.8h1.2v1.2h-1.2zM158.3 63.8h1.2v1.2h-1.2zM233.7 5.6h1.4v1.4h-1.4zM187.3 172.1h1.4v1.4h-1.4zM13.2 145.9h1.4v1.4h-1.4zM117.4 72.2h1.6v1.6h-1.6zM33.9 101.3h0.9v0.9h-0.9zM187.8 71.1h1.4v1.4h-1.4zM252.9 95.4h0.8v0.8h-0.8zM25.2 46.0h1.2v1.2h-1.2zM192.8 117.5h1.2v1.2h-1.2zM124.8 27.3h1v1h-1zM174.7 4.9h1v1h-1zM268.4 106.4h1.6v1.6h-1.6zM201.6 183.4h1.6v1.6h-1.6zM134.8 106.5h1.6v1.6h-1.6zM89.4 133.2h1.1v1.1h-1.1zM206.0 161.6h1v1h-1zM141.0 182.9h1.2v1.2h-1.2zM30.4 15.3h1.6v1.6h-1.6zM196.2 148.4h1.6v1.6h-1.6zM193.6 134.2h0.8v0.8h-0.8zM221.8 185.3h1v1h-1zM3.8 70.6h1.4v1.4h-1.4zM235.1 193.2h1v1h-1zM12.7 42.2h1.1v1.1h-1.1zM69.6 25.1h1.4v1.4h-1.4zM104.2 38.8h1v1h-1zM258.6 110.4h1.6v1.6h-1.6zM190.0 71.8h1.1v1.1h-1.1zM151.1 131.2h1v1h-1zM105.3 58.4h1v1h-1zM23.6 158.7h1v1h-1zM92.0 30.7h1.6v1.6h-1.6zM96.4 26.0h1.6v1.6h-1.6zM222.6 48.2h0.9v0.9h-0.9zM10.2 88.1h1.2v1.2h-1.2zM35.6 34.5h1v1h-1zM13.7 44.5h1.1v1.1h-1.1zM239.6 137.2h0.8v0.8h-0.8zM59.1 184.0h1v1h-1zM94.0 17.8h1.6v1.6h-1.6zM200.3 58.4h1.4v1.4h-1.4zM13.2 126.3h1v1h-1zM270.8 83.1h1v1h-1zM1.1 84.7h1.1v1.1h-1.1zM221.4 65.3h1.6v1.6h-1.6zM114.3 191.4h1v1h-1zM167.7 193.2h1v1h-1zM76.8 82.6h1.1v1.1h-1.1zM151.6 179.4h1.2v1.2h-1.2zM220.5 76.4h1.6v1.6h-1.6zM87.7 18.2h1v1h-1zM131.1 127.3h1v1h-1zM234.1 178.8h1.1v1.1h-1.1zM103.3 164.3h1.4v1.4h-1.4zM134.0 156.4h0.9v0.9h-0.9zM26.7 82.7h1.6v1.6h-1.6zM52.2 34.3h1.1v1.1h-1.1zM267.6 179.1h1.6v1.6h-1.6zM249.5 175.9h0.8v0.8h-0.8zM69.4 121.7h1.1v1.1h-1.1zM123.2 24.0h1v1h-1zM64.7 182.4h1.2v1.2h-1.2zM231.0 64.3h1.4v1.4h-1.4zM60.0 189.5h1v1h-1zM175.6 172.7h0.8v0.8h-0.8zM240.0 124.9h1v1h-1zM112.0 51.2h1v1h-1zM48.7 77.6h0.8v0.8h-0.8zM267.9 78.5h0.8v0.8h-0.8zM11.0 63.2h1.1v1.1h-1.1zM146.5 78.0h0.8v0.8h-0.8zM242.9 195.6h0.8v0.8h-0.8zM146.5 41.1h1v1h-1zM90.9 123.1h1.6v1.6h-1.6zM261.9 22.3h0.9v0.9h-0.9zM232.1 81.3h1v1h-1zM2.2 170.2h0.9v0.9h-0.9zM85.9 128.4h1v1h-1zM155.9 13.5h1.1v1.1h-1.1zM90.7 145.4h1.6v1.6h-1.6zM184.0 141.6h0.8v0.8h-0.8zM170.2 50.1h1v1h-1zM206.8 193.1h1v1h-1zM219.0 37.0h1.6v1.6h-1.6zM130.9 133.4h0.8v0.8h-0.8zM54.3 197.2h1.4v1.4h-1.4zM183.5 4.6h1v1h-1zM34.2 50.6h1v1h-1zM47.9 169.5h1v1h-1zM147.7 188.5h1.2v1.2h-1.2zM246.8 20.0h1v1h-1zM156.6 39.4h0.9v0.9h-0.9zM245.7 106.5h0.9v0.9h-0.9zM147.3 95.2h1.4v1.4h-1.4zM29.5 25.6h1v1h-1zM45.2 165.5h1.6v1.6h-1.6zM165.2 130.3h1.6v1.6h-1.6zM141.6 195.6h0.8v0.8h-0.8zM206.4 99.4h1v1h-1zM10.0 139.8h1.1v1.1h-1.1zM121.2 76.2h1.4v1.4h-1.4zM150.4 112.0h1.4v1.4h-1.4zM185.8 164.3h1.4v1.4h-1.4zM224.2 181.3h0.8v0.8h-0.8zM61.9 105.8h0.9v0.9h-0.9zM237.5 10.0h1.6v1.6h-1.6zM21.4 95.7h1.1v1.1h-1.1zM28.9 25.1h1v1h-1zM101.6 64.1h0.8v0.8h-0.8zM170.3 163.3h1v1h-1zM104.5 41.5h1v1h-1zM56.7 25.6h0.8v0.8h-0.8zM188.1 19.8h1.2v1.2h-1.2zM109.9 103.7h1v1h-1zM141.9 161.7h1v1h-1zM143.9 117.9h1.6v1.6h-1.6zM262.3 48.1h1.6v1.6h-1.6zM193.3 29.1h0.8v0.8h-0.8zM88.4 145.7h1v1h-1zM263.7 34.9h1.6v1.6h-1.6zM209.0 145.6h1.1v1.1h-1.1zM64.7 153.6h1.6v1.6h-1.6zM89.0 83.1h1.4v1.4h-1.4zM224.1 158.3h0.9v0.9h-0.9zM49.0 199.0h0.9v0.9h-0.9zM78.7 145.5h1v1h-1zM91.8 162.0h0.9v0.9h-0.9zM1.9 172.3h0.9v0.9h-0.9zM233.2 16.6h0.8v0.8h-0.8zM18.4 74.2h0.8v0.8h-0.8zM139.9 26.9h0.8v0.8h-0.8zM130.2 123.7h1.4v1.4h-1.4zM150.8 57.6h1.2v1.2h-1.2zM52.4 83.1h1.2v1.2h-1.2zM132.2 38.0h1v1h-1zM28.5 110.6h1v1h-1zM200.9 97.3h1v1h-1zM65.7 51.8h1.1v1.1h-1.1zM132.9 73.4h1v1h-1zM278.5 70.3h1v1h-1zM89.0 80.1h0.9v0.9h-0.9zM215.4 132.1h0.8v0.8h-0.8zM35.5 78.4h1v1h-1zM143.0 116.9h1v1h-1zM160.3 123.5h1.2v1.2h-1.2zM229.4 25.2h1v1h-1zM195.9 151.7h1v1h-1zM126.3 47.4h1.6v1.6h-1.6zM207.0 43.3h1.6v1.6h-1.6zM129.5 6.2h1v1h-1zM215.6 190.8h1v1h-1zM273.8 98.1h0.8v0.8h-0.8zM174.1 101.1h1.4v1.4h-1.4zM247.9 46.2h0.9v0.9h-0.9zM22.9 23.5h0.8v0.8h-0.8zM276.3 159.4h1v1h-1zM0.9 13.8h1v1h-1zM129.7 22.9h1.2v1.2h-1.2zM86.6 47.8h1.4v1.4h-1.4zM153.3 22.0h1.2v1.2h-1.2zM41.0 155.1h0.8v0.8h-0.8zM165.2 194.6h1.1v1.1h-1.1zM44.4 39.4h1.2v1.2h-1.2zM18.0 32.7h1.1v1.1h-1.1zM166.7 172.0h0.9v0.9h-0.9zM20.4 112.7h1.2v1.2h-1.2zM94.0 101.1h1.6v1.6h-1.6zM196.1 151.8h1.2v1.2h-1.2zM22.8 155.3h1.1v1.1h-1.1zM6.4 3.6h1.4v1.4h-1.4zM87.5 58.8h1.1v1.1h-1.1zM147.4 171.8h1.2v1.2h-1.2zM68.8 68.8h1v1h-1zM34.1 21.5h1v1h-1zM53.2 75.4h1.1v1.1h-1.1zM15.4 165.3h1v1h-1zM171.9 29.2h1.4v1.4h-1.4zM72.0 47.6h1.2v1.2h-1.2zM4.4 104.8h0.9v0.9h-0.9zM203.9 64.3h1v1h-1zM68.3 157.6h1.1v1.1h-1.1zM88.8 14.2h1.4v1.4h-1.4zM249.1 198.1h1.1v1.1h-1.1zM194.4 63.8h0.9v0.9h-0.9zM49.1 116.8h1v1h-1zM116.3 4.0h1.6v1.6h-1.6zM39.8 81.0h0.8v0.8h-0.8zM178.5 11.2h1v1h-1zM42.8 63.2h1.6v1.6h-1.6zM13.6 128.2h1.4v1.4h-1.4zM151.0 165.9h1.2v1.2h-1.2zM131.0 197.5h1.2v1.2h-1.2zM164.0 148.6h1v1h-1zM61.9 111.4h1.4v1.4h-1.4zM48.1 17.8h1.1v1.1h-1.1zM44.2 94.9h1.6v1.6h-1.6zM139.2 84.1h1.1v1.1h-1.1zM189.6 166.1h1.6v1.6h-1.6zM94.9 128.2h1.4v1.4h-1.4zM97.3 124.4h0.9v0.9h-0.9zM275.7 9.0h1v1h-1zM178.6 89.6h1.1v1.1h-1.1zM110.7 113.1h1.1v1.1h-1.1zM52.0 10.9h1v1h-1zM27.4 51.1h1.4v1.4h-1.4zM278.9 139.0h1.1v1.1h-1.1zM88.9 183.9h0.8v0.8h-0.8zM53.6 139.7h1v1h-1zM61.8 109.8h1.6v1.6h-1.6zM205.5 74.7h0.9v0.9h-0.9zM120.0 120.3h1.1v1.1h-1.1zM261.2 2.3h1v1h-1zM23.6 28.4h0.8v0.8h-0.8zM82.2 30.6h1.6v1.6h-1.6zM177.8 63.8h0.9v0.9h-0.9zM44.6 140.8h1.1v1.1h-1.1zM232.5 150.1h0.8v0.8h-0.8zM218.3 49.0h0.8v0.8h-0.8zM79.2 22.1h1v1h-1zM54.3 88.7h1.4v1.4h-1.4zM264.7 18.2h0.9v0.9h-0.9zM199.2 76.3h1.4v1.4h-1.4zM130.4 72.9h0.9v0.9h-0.9zM100.9 72.4h1.1v1.1h-1.1zM88.7 31.2h1.1v1.1h-1.1zM180.9 124.7h1v1h-1zM264.9 30.7h1.1v1.1h-1.1zM177.4 46.1h1v1h-1zM148.2 26.2h1.6v1.6h-1.6zM215.5 45.5h1.4v1.4h-1.4zM71.8 80.0h1.6v1.6h-1.6zM99.7 30.7h1.4v1.4h-1.4zM74.8 170.6h1.6v1.6h-1.6zM232.2 35.7h1.2v1.2h-1.2zM157.7 157.2h1.2v1.2h-1.2zM5.3 184.5h1.2v1.2h-1.2zM164.4 182.1h1.4v1.4h-1.4zM243.4 40.6h1v1h-1zM122.9 111.7h1.6v1.6h-1.6zM203.9 55.9h0.9v0.9h-0.9zM220.1 71.3h1v1h-1zM167.3 40.6h0.9v0.9h-0.9zM237.6 173.8h1.2v1.2h-1.2zM9.4 135.8h1.1v1.1h-1.1zM176.2 163.3h0.9v0.9h-0.9zM177.7 18.1h1v1h-1zM274.8 40.5h1.4v1.4h-1.4zM171.5 4.7h1.6v1.6h-1.6zM7.5 56.3h1v1h-1zM92.7 111.4h1.1v1.1h-1.1zM186.8 140.8h1v1h-1zM60.9 22.8h1.4v1.4h-1.4zM57.9 148.7h1v1h-1zM33.9 79.4h1.4v1.4h-1.4zM171.8 3.5h0.8v0.8h-0.8zM2.0 153.8h1.2v1.2h-1.2zM84.7 12.1h1.4v1.4h-1.4zM96.9 123.4h1.2v1.2h-1.2zM38.3 108.7h1.2v1.2h-1.2zM93.2 8.2h1.4v1.4h-1.4zM63.5 0.5h1.6v1.6h-1.6zM193.1 156.1h1.1v1.1h-1.1zM247.1 118.3h1v1h-1zM152.9 57.0h1.2v1.2h-1.2zM131.2 64.1h0.8v0.8h-0.8zM69.9 134.8h1.4v1.4h-1.4zM229.9 186.1h1v1h-1zM230.0 109.4h0.8v0.8h-0.8zM37.4 124.7h0.9v0.9h-0.9zM224.7 2.9h0.9v0.9h-0.9zM118.2 10.0h1.1v1.1h-1.1zM228.1 29.0h1v1h-1zM117.0 160.5h1.2v1.2h-1.2zM267.1 36.8h1v1h-1zM246.3 198.0h1.6v1.6h-1.6zM117.0 60.0h0.9v0.9h-0.9zM67.6 24.0h0.9v0.9h-0.9zM239.2 78.9h0.9v0.9h-0.9zM4.9 188.4h0.9v0.9h-0.9zM244.4 48.1h0.9v0.9h-0.9zM84.3 56.9h1v1h-1zM200.8 155.3h1v1h-1zM6.5 119.9h1.2v1.2h-1.2zM279.9 85.6h1.4v1.4h-1.4zM122.9 199.0h0.8v0.8h-0.8zM268.8 146.7h1v1h-1zM132.5 128.6h1v1h-1zM151.7 74.2h1v1h-1zM146.4 104.9h1.2v1.2h-1.2zM230.5 165.5h1.4v1.4h-1.4zM19.4 57.0h1v1h-1zM2.7 26.7h0.9v0.9h-0.9zM242.8 176.2h0.9v0.9h-0.9zM104.2 44.3h0.8v0.8h-0.8zM204.0 113.9h0.8v0.8h-0.8zM46.8 127.2h1v1h-1zM80.9 165.1h0.8v0.8h-0.8zM230.0 12.7h1.4v1.4h-1.4zM270.3 184.9h1.6v1.6h-1.6zM171.5 93.3h1.1v1.1h-1.1zM76.7 142.5h1.6v1.6h-1.6zM225.3 130.3h1.1v1.1h-1.1zM174.7 132.8h1v1h-1zM38.1 145.5h1.1v1.1h-1.1zM138.3 21.5h1.4v1.4h-1.4zM211.6 52.1h1v1h-1zM256.9 48.8h1v1h-1zM252.8 16.1h1.2v1.2h-1.2zM20.2 169.1h1.6v1.6h-1.6zM245.1 10.3h1v1h-1zM180.8 156.7h1v1h-1zM63.7 30.9h1v1h-1zM0.4 67.1h0.9v0.9h-0.9zM158.1 3.4h1.1v1.1h-1.1zM69.4 195.3h1v1h-1zM263.0 198.5h1v1h-1zM263.6 110.8h0.9v0.9h-0.9zM251.2 23.4h1v1h-1zM170.7 12.2h1.6v1.6h-1.6zM198.4 28.2h1v1h-1zM279.1 107.9h0.9v0.9h-0.9zM58.8 133.6h0.9v0.9h-0.9zM19.1 94.8h0.9v0.9h-0.9zM90.7 60.5h1.6v1.6h-1.6zM238.8 62.6h1.2v1.2h-1.2zM104.5 181.1h1.6v1.6h-1.6zM236.6 38.3h1.2v1.2h-1.2zM101.3 139.8h1.1v1.1h-1.1zM38.0 69.3h1.2v1.2h-1.2zM158.4 190.4h1v1h-1zM108.5 84.4h1.4v1.4h-1.4zM196.0 46.8h0.8v0.8h-0.8zM190.0 121.4h1.4v1.4h-1.4zM105.9 140.9h0.9v0.9h-0.9zM130.3 157.2h0.8v0.8h-0.8zM74.0 23.4h0.9v0.9h-0.9zM100.1 149.3h1.2v1.2h-1.2zM80.6 182.9h1.2v1.2h-1.2zM149.6 78.8h0.8v0.8h-0.8zM200.7 81.4h1.4v1.4h-1.4zM202.1 187.9h1v1h-1zM145.9 81.8h0.9v0.9h-0.9zM229.1 5.8h0.8v0.8h-0.8zM199.5 31.4h1.1v1.1h-1.1zM115.5 161.5h0.8v0.8h-0.8zM144.0 185.7h1.6v1.6h-1.6zM127.1 133.6h0.8v0.8h-0.8zM158.5 34.6h0.9v0.9h-0.9zM178.8 46.8h0.9v0.9h-0.9zM69.2 72.2h1.2v1.2h-1.2zM209.5 142.4h1.4v1.4h-1.4zM121.8 105.9h1.2v1.2h-1.2zM251.9 46.4h1.2v1.2h-1.2zM197.4 17.5h1.6v1.6h-1.6zM37.1 193.3h0.9v0.9h-0.9zM177.6 31.8h1v1h-1zM210.9 41.0h1v1h-1zM144.4 149.4h1.2v1.2h-1.2zM8.8 197.2h1.1v1.1h-1.1zM208.1 166.2h1v1h-1zM149.5 79.3h1.2v1.2h-1.2zM152.8 191.4h1v1h-1zM257.4 76.4h1.1v1.1h-1.1zM55.5 153.2h1.2v1.2h-1.2zM18.8 158.7h1v1h-1zM43.4 9.1h1v1h-1zM5.9 140.6h1.4v1.4h-1.4zM75.8 59.8h1.4v1.4h-1.4zM175.5 191.6h1.4v1.4h-1.4zM21.3 172.4h1.1v1.1h-1.1zM235.1 111.0h1.1v1.1h-1.1zM258.6 41.1h0.8v0.8h-0.8zM129.5 60.8h1v1h-1zM198.5 38.7h1.4v1.4h-1.4zM161.8 26.0h1.4v1.4h-1.4zM101.0 31.0h1.2v1.2h-1.2zM95.2 198.6h1.2v1.2h-1.2zM270.3 41.3h0.8v0.8h-0.8zM14.1 173.1h0.9v0.9h-0.9zM222.2 24.9h1.2v1.2h-1.2zM152.8 46.7h1.6v1.6h-1.6zM97.4 150.8h0.9v0.9h-0.9zM141.7 137.7h1.2v1.2h-1.2zM188.7 38.1h0.8v0.8h-0.8zM243.2 103.7h0.9v0.9h-0.9zM132.7 132.6h1.4v1.4h-1.4zM220.4 80.9h0.9v0.9h-0.9zM180.4 64.8h1.4v1.4h-1.4zM80.0 98.7h1.1v1.1h-1.1zM112.6 193.6h1.6v1.6h-1.6zM99.8 43.6h1.2v1.2h-1.2zM257.9 183.4h1.6v1.6h-1.6zM145.1 162.5h1.2v1.2h-1.2zM1.0 136.4h1.6v1.6h-1.6zM57.4 42.2h1v1h-1zM143.6 133.7h1.4v1.4h-1.4zM248.8 125.3h0.8v0.8h-0.8zM199.5 26.2h0.8v0.8h-0.8zM92.7 34.7h1.6v1.6h-1.6zM205.5 82.5h1.6v1.6h-1.6zM130.4 29.2h0.9v0.9h-0.9zM16.2 121.2h0.9v0.9h-0.9zM235.0 62.7h1.4v1.4h-1.4zM22.8 115.1h1v1h-1zM50.2 173.5h1v1h-1zM134.9 65.7h0.9v0.9h-0.9zM229.3 196.2h1.4v1.4h-1.4zM168.9 47.0h0.9v0.9h-0.9zM219.4 193.3h1v1h-1zM229.3 147.6h1.2v1.2h-1.2zM206.4 114.5h0.8v0.8h-0.8zM118.9 118.8h1v1h-1zM215.1 33.4h1.6v1.6h-1.6zM236.6 125.2h1.2v1.2h-1.2zM192.8 150.3h1v1h-1zM107.6 141.9h1.4v1.4h-1.4zM172.2 82.0h1.2v1.2h-1.2zM275.5 88.6h1.4v1.4h-1.4zM227.6 108.3h1.4v1.4h-1.4zM58.5 56.2h1.1v1.1h-1.1zM268.1 157.2h1.4v1.4h-1.4zM224.2 74.3h1v1h-1zM204.3 36.6h1.4v1.4h-1.4zM53.7 69.0h0.9v0.9h-0.9zM138.7 7.9h1.6v1.6h-1.6zM159.5 158.5h1.2v1.2h-1.2zM136.1 148.8h1v1h-1zM195.0 49.6h1.6v1.6h-1.6zM55.7 19.3h1v1h-1zM56.2 64.9h1.6v1.6h-1.6zM250.0 61.6h1.6v1.6h-1.6zM35.0 180.0h0.8v0.8h-0.8zM140.9 96.6h1.2v1.2h-1.2zM152.1 184.5h1.4v1.4h-1.4zM185.2 189.4h0.8v0.8h-0.8zM94.1 26.3h0.9v0.9h-0.9zM234.8 95.2h1v1h-1zM270.5 140.1h1.4v1.4h-1.4zM22.1 152.4h1.4v1.4h-1.4zM47.5 65.8h1v1h-1zM236.0 73.3h1.4v1.4h-1.4zM79.1 186.6h1.2v1.2h-1.2zM223.3 70.7h1.6v1.6h-1.6zM6.1 119.8h1.6v1.6h-1.6zM225.3 66.3h0.9v0.9h-0.9zM131.5 116.3h1.1v1.1h-1.1zM237.0 182.1h1.2v1.2h-1.2zM97.7 110.8h1.2v1.2h-1.2zM212.4 159.4h1.6v1.6h-1.6zM171.3 168.5h1v1h-1zM237.8 104.8h1v1h-1zM8.8 144.4h0.8v0.8h-0.8zM36.9 28.3h1v1h-1zM90.0 133.2h0.8v0.8h-0.8zM187.2 5.5h0.8v0.8h-0.8zM87.8 162.8h1v1h-1zM138.0 181.3h1v1h-1zM90.9 84.4h0.9v0.9h-0.9zM269.2 145.2h1.4v1.4h-1.4zM245.0 164.5h1.6v1.6h-1.6zM175.8 141.4h1.4v1.4h-1.4zM125.9 116.1h1.4v1.4h-1.4zM157.2 192.2h0.8v0.8h-0.8zM198.0 31.6h1.2v1.2h-1.2zM85.3 24.3h0.9v0.9h-0.9zM83.3 22.0h1v1h-1zM206.7 63.6h0.8v0.8h-0.8zM92.2 150.9h0.8v0.8h-0.8zM141.1 21.9h0.9v0.9h-0.9zM66.9 52.4h1v1h-1zM151.1 147.4h1.4v1.4h-1.4zM223.4 132.9h1.1v1.1h-1.1zM274.4 26.9h1v1h-1zM239.9 148.3h0.9v0.9h-0.9zM123.7 175.4h1.1v1.1h-1.1zM24.0 195.6h0.9v0.9h-0.9zM23.4 150.5h1.1v1.1h-1.1zM163.8 127.0h1v1h-1zM190.7 169.7h0.8v0.8h-0.8zM78.6 64.6h1.6v1.6h-1.6zM26.3 58.8h1.2v1.2h-1.2zM187.3 95.7h1.4v1.4h-1.4zM178.4 155.4h1.2v1.2h-1.2zM47.4 77.6h0.8v0.8h-0.8zM224.1 111.6h1.2v1.2h-1.2zM103.9 8.2h0.9v0.9h-0.9zM146.1 118.4h1.6v1.6h-1.6zM215.7 50.0h1.2v1.2h-1.2zM211.4 99.5h0.8v0.8h-0.8zM168.8 46.9h1v1h-1zM72.2 153.6h1.6v1.6h-1.6zM190.2 75.8h1v1h-1zM159.0 62.0h0.9v0.9h-0.9zM169.2 108.1h1v1h-1zM71.2 104.8h1v1h-1zM45.1 36.6h1.6v1.6h-1.6zM60.3 97.7h1v1h-1zM215.1 60.5h1.6v1.6h-1.6zM14.3 136.4h0.9v0.9h-0.9zM170.8 59.4h1.4v1.4h-1.4zM31.2 144.2h1.4v1.4h-1.4zM88.3 128.2h0.9v0.9h-0.9zM0.4 171.7h1v1h-1zM83.8 72.7h1.1v1.1h-1.1zM80.2 23.1h1.6v1.6h-1.6zM153.1 96.0h1.4v1.4h-1.4zM236.1 12.8h1v1h-1zM72.0 105.4h0.9v0.9h-0.9zM248.4 40.7h1v1h-1zM95.4 177.5h0.9v0.9h-0.9zM252.4 161.0h0.8v0.8h-0.8zM41.8 89.0h0.9v0.9h-0.9zM125.6 70.6h1.2v1.2h-1.2zM22.4 135.5h1.2v1.2h-1.2zM168.8 167.4h0.8v0.8h-0.8zM241.5 176.9h0.8v0.8h-0.8zM68.7 16.2h1.2v1.2h-1.2zM145.8 155.3h1.6v1.6h-1.6zM66.3 195.0h1.4v1.4h-1.4zM256.6 104.1h1v1h-1zM123.7 90.3h1v1h-1zM157.0 191.1h0.8v0.8h-0.8zM155.1 63.5h0.9v0.9h-0.9zM26.6 111.1h1.4v1.4h-1.4zM204.9 1.0h0.9v0.9h-0.9zM162.4 56.7h1v1h-1zM160.8 81.8h1.6v1.6h-1.6zM274.7 123.5h0.9v0.9h-0.9zM46.9 18.4h0.8v0.8h-0.8zM0.6 46.6h1.6v1.6h-1.6zM64.9 4.1h1.2v1.2h-1.2zM198.1 91.3h1.6v1.6h-1.6zM218.2 165.9h0.9v0.9h-0.9zM253.7 144.2h1.2v1.2h-1.2zM46.7 192.3h1v1h-1zM230.4 32.6h0.9v0.9h-0.9zM39.3 189.4h1.1v1.1h-1.1zM75.0 120.7h1.1v1.1h-1.1zM211.9 195.8h1v1h-1zM236.7 145.3h0.8v0.8h-0.8zM117.3 183.2h0.8v0.8h-0.8zM107.9 29.9h0.8v0.8h-0.8zM169.1 64.8h0.9v0.9h-0.9zM125.5 180.8h1v1h-1zM240.0 59.1h1v1h-1zM119.2 81.4h1.2v1.2h-1.2zM267.8 149.8h0.9v0.9h-0.9zM90.9 55.3h1v1h-1zM185.4 131.6h0.8v0.8h-0.8zM175.9 23.6h1.2v1.2h-1.2zM211.0 138.3h1.6v1.6h-1.6zM149.2 186.5h1.2v1.2h-1.2zM160.2 183.4h0.8v0.8h-0.8zM158.3 19.8h1.4v1.4h-1.4zM169.3 186.6h1.6v1.6h-1.6zM206.9 81.5h0.9v0.9h-0.9zM138.1 89.1h0.8v0.8h-0.8zM136.2 12.1h1.6v1.6h-1.6zM180.0 3.7h1.1v1.1h-1.1zM203.1 33.6h1.4v1.4h-1.4zM43.5 151.5h1.6v1.6h-1.6zM37.6 31.7h0.8v0.8h-0.8zM175.8 10.8h1.4v1.4h-1.4zM46.2 50.8h1.6v1.6h-1.6zM213.1 142.1h1.2v1.2h-1.2zM154.1 167.0h1v1h-1zM136.3 144.2h1.4v1.4h-1.4zM252.5 97.1h1.2v1.2h-1.2zM193.3 159.8h0.8v0.8h-0.8zM65.0 171.0h1v1h-1zM204.5 153.8h1.4v1.4h-1.4zM143.1 134.0h0.9v0.9h-0.9zM1.1 198.3h0.9v0.9h-0.9zM254.3 20.6h1v1h-1zM90.3 178.3h0.8v0.8h-0.8zM164.4 37.4h1.1v1.1h-1.1zM92.6 103.0h1.1v1.1h-1.1zM249.8 101.3h0.9v0.9h-0.9zM238.9 187.3h1.4v1.4h-1.4zM263.4 74.8h1.4v1.4h-1.4zM240.5 94.5h1.2v1.2h-1.2zM11.6 116.5h1.6v1.6h-1.6zM37.8 81.5h1.1v1.1h-1.1zM217.6 0.7h1v1h-1zM224.2 155.7h1.6v1.6h-1.6zM145.9 151.2h1.2v1.2h-1.2zM140.9 79.8h1v1h-1zM253.0 175.0h1.6v1.6h-1.6zM130.6 105.4h1v1h-1zM47.8 90.1h1.1v1.1h-1.1zM217.5 7.9h1v1h-1zM35.7 0.2h1.1v1.1h-1.1zM79.3 11.5h1v1h-1zM111.1 139.2h1.6v1.6h-1.6zM92.6 196.4h0.8v0.8h-0.8zM248.4 67.8h1v1h-1zM74.7 196.1h1.1v1.1h-1.1zM24.4 99.2h0.9v0.9h-0.9zM239.3 176.5h0.9v0.9h-0.9zM50.7 164.7h0.9v0.9h-0.9zM73.7 76.9h1.6v1.6h-1.6zM177.7 56.9h0.9v0.9h-0.9zM18.0 28.3h1.1v1.1h-1.1zM17.4 196.0h1v1h-1zM189.6 30.1h0.9v0.9h-0.9zM275.9 188.5h1.1v1.1h-1.1zM113.5 81.2h0.8v0.8h-0.8zM94.5 83.6h1.6v1.6h-1.6zM243.8 97.2h1.1v1.1h-1.1zM18.9 127.4h0.9v0.9h-0.9zM12.8 55.1h0.9v0.9h-0.9zM262.2 0.9h1v1h-1zM56.1 67.4h0.8v0.8h-0.8zM149.0 14.0h1v1h-1zM225.1 192.1h1.6v1.6h-1.6zM17.5 55.7h0.9v0.9h-0.9zM69.5 72.2h1.1v1.1h-1.1zM139.5 8.5h1.4v1.4h-1.4zM47.7 101.4h1.1v1.1h-1.1zM25.5 12.3h1v1h-1zM261.9 164.3h0.8v0.8h-0.8zM90.0 71.4h1v1h-1zM140.6 98.3h1v1h-1zM83.1 121.9h1.1v1.1h-1.1zM151.0 18.1h1.1v1.1h-1.1zM252.3 69.3h1.2v1.2h-1.2zM102.4 176.8h1v1h-1zM129.0 58.3h1.1v1.1h-1.1zM143.1 57.1h0.8v0.8h-0.8zM259.7 14.9h0.8v0.8h-0.8zM16.2 178.1h0.9v0.9h-0.9zM191.2 182.6h1.6v1.6h-1.6zM150.1 160.0h1.4v1.4h-1.4zM80.5 193.1h0.8v0.8h-0.8zM195.7 127.8h1v1h-1zM13.9 108.2h1.1v1.1h-1.1zM162.6 102.3h0.8v0.8h-0.8zM274.8 127.1h0.9v0.9h-0.9zM80.3 153.2h1v1h-1zM210.1 165.5h1.2v1.2h-1.2zM82.4 85.7h1v1h-1zM141.0 32.0h0.8v0.8h-0.8zM182.0 133.1h1.4v1.4h-1.4zM251.2 155.4h0.9v0.9h-0.9zM250.5 135.4h1.2v1.2h-1.2zM171.5 194.5h1.4v1.4h-1.4zM79.6 173.0h0.9v0.9h-0.9zM277.9 31.6h1.2v1.2h-1.2zM122.4 68.7h1v1h-1zM262.5 73.3h1v1h-1zM94.6 71.0h1.2v1.2h-1.2zM123.3 166.0h1.2v1.2h-1.2zM213.2 131.2h1.2v1.2h-1.2zM227.6 119.0h1.6v1.6h-1.6zM70.0 6.1h0.9v0.9h-0.9zM222.6 20.3h1v1h-1zM82.7 148.5h0.8v0.8h-0.8zM183.6 114.0h1v1h-1zM32.9 139.3h1v1h-1zM226.9 26.2h1.6v1.6h-1.6zM271.2 125.5h0.9v0.9h-0.9zM11.5 29.0h0.8v0.8h-0.8zM50.5 184.8h1.2v1.2h-1.2zM196.5 106.4h0.9v0.9h-0.9zM20.6 118.2h0.9v0.9h-0.9zM270.4 69.0h1v1h-1zM112.6 189.5h1.2v1.2h-1.2zM149.1 33.9h1.4v1.4h-1.4zM105.5 189.3h0.8v0.8h-0.8zM265.2 132.5h1.6v1.6h-1.6zM61.5 105.7h1v1h-1zM242.0 34.8h1.1v1.1h-1.1zM278.5 95.2h1v1h-1zM254.0 50.0h1v1h-1zM81.9 44.5h1.6v1.6h-1.6zM223.8 166.8h1v1h-1zM113.7 85.7h1.4v1.4h-1.4zM41.0 118.6h1v1h-1zM85.6 87.4h1.4v1.4h-1.4zM12.9 112.1h1.4v1.4h-1.4zM230.0 66.7h0.9v0.9h-0.9zM210.4 163.6h1.4v1.4h-1.4zM195.8 146.9h1.2v1.2h-1.2zM106.8 127.7h0.8v0.8h-0.8zM19.2 161.8h0.8v0.8h-0.8zM61.5 184.1h1v1h-1zM187.7 60.5h1.4v1.4h-1.4zM106.1 120.0h1v1h-1zM159.7 158.3h1.4v1.4h-1.4zM227.9 12.7h1v1h-1zM149.8 15.4h1v1h-1zM134.0 49.3h1v1h-1zM244.6 170.8h0.9v0.9h-0.9zM55.4 99.0h1v1h-1zM119.4 101.3h0.9v0.9h-0.9zM121.8 82.8h0.9v0.9h-0.9zM28.5 193.5h0.9v0.9h-0.9zM151.0 168.5h0.9v0.9h-0.9zM139.1 172.5h1.2v1.2h-1.2zM98.3 8.1h0.8v0.8h-0.8zM235.5 122.1h1.2v1.2h-1.2zM164.4 4.9h1v1h-1zM241.7 79.4h1.2v1.2h-1.2zM2.8 188.2h1v1h-1zM276.5 67.7h1v1h-1zM32.0 28.7h0.8v0.8h-0.8zM7.0 140.5h0.8v0.8h-0.8zM272.7 130.0h1.6v1.6h-1.6zM178.2 196.8h1.4v1.4h-1.4zM99.7 76.0h1v1h-1zM238.8 17.0h1.6v1.6h-1.6zM258.2 158.7h1v1h-1zM23.6 72.1h1.4v1.4h-1.4zM69.7 162.1h1.1v1.1h-1.1zM12.1 86.9h1v1h-1zM66.1 188.7h1.2v1.2h-1.2zM233.7 51.5h1.4v1.4h-1.4zM20.5 37.2h1.4v1.4h-1.4zM120.8 86.4h0.8v0.8h-0.8zM88.9 149.3h0.8v0.8h-0.8zM13.0 131.3h1.1v1.1h-1.1zM142.3 161.1h1.2v1.2h-1.2zM266.8 141.7h1.6v1.6h-1.6zM241.0 138.2h1.6v1.6h-1.6zM160.1 140.4h1.2v1.2h-1.2zM242.7 47.9h1.6v1.6h-1.6zM27.9 18.9h1.2v1.2h-1.2zM170.1 22.3h1.4v1.4h-1.4zM137.3 26.1h1.6v1.6h-1.6zM188.7 155.5h1v1h-1zM240.3 175.2h1v1h-1zM133.7 24.1h1.6v1.6h-1.6zM145.5 81.6h1v1h-1zM240.4 163.9h0.9v0.9h-0.9zM174.5 110.4h1.4v1.4h-1.4zM136.0 132.6h1.1v1.1h-1.1zM194.2 109.0h1.4v1.4h-1.4zM132.6 162.0h1.1v1.1h-1.1zM69.8 184.9h1v1h-1zM166.2 9.8h1v1h-1zM173.6 176.9h1.6v1.6h-1.6zM12.2 83.4h0.9v0.9h-0.9zM154.2 117.3h1.4v1.4h-1.4zM200.7 123.5h1.4v1.4h-1.4zM51.7 116.1h1.4v1.4h-1.4zM38.7 43.4h1.2v1.2h-1.2zM58.4 74.6h0.8v0.8h-0.8zM237.7 61.4h0.8v0.8h-0.8zM120.3 158.9h1.6v1.6h-1.6zM165.6 128.2h1.6v1.6h-1.6zM144.0 80.2h1v1h-1zM28.6 127.4h0.8v0.8h-0.8zM96.2 159.5h1.2v1.2h-1.2zM46.2 147.6h1v1h-1zM197.9 173.4h1.4v1.4h-1.4zM87.3 70.3h1.1v1.1h-1.1zM202.1 52.4h1v1h-1zM65.4 130.2h1v1h-1zM202.9 18.3h1v1h-1zM147.5 100.0h0.9v0.9h-0.9zM45.6 37.9h1.2v1.2h-1.2zM165.2 182.6h0.9v0.9h-0.9zM17.3 172.1h1.4v1.4h-1.4zM179.2 58.5h1.4v1.4h-1.4zM25.1 49.3h1.2v1.2h-1.2zM173.5 35.0h1.2v1.2h-1.2zM35.1 95.4h1.2v1.2h-1.2zM198.5 45.7h1v1h-1zM17.4 124.1h1.2v1.2h-1.2zM14.4 186.8h1.2v1.2h-1.2zM109.6 72.1h1.2v1.2h-1.2zM271.6 125.3h1.1v1.1h-1.1zM39.8 73.7h0.9v0.9h-0.9zM57.3 155.6h1.1v1.1h-1.1zM75.2 169.2h1.2v1.2h-1.2zM96.2 181.3h1.1v1.1h-1.1zM192.0 151.3h1.1v1.1h-1.1zM127.9 69.9h1.1v1.1h-1.1zM18.4 116.4h1.4v1.4h-1.4zM202.5 112.1h1.4v1.4h-1.4zM178.5 110.3h1.6v1.6h-1.6zM25.5 113.6h1v1h-1zM232.9 2.3h1.2v1.2h-1.2zM175.2 161.6h1.1v1.1h-1.1zM138.1 3.3h1v1h-1zM263.4 11.3h0.9v0.9h-0.9zM138.5 142.0h1.6v1.6h-1.6zM152.7 178.0h0.8v0.8h-0.8zM204.6 3.9h1.4v1.4h-1.4zM207.7 183.0h1.2v1.2h-1.2zM54.0 21.9h1v1h-1zM269.9 43.7h1.4v1.4h-1.4zM159.7 6.5h1v1h-1zM241.3 181.1h1v1h-1zM101.9 114.1h1v1h-1zM112.5 47.8h0.9v0.9h-0.9zM91.5 191.4h1.1v1.1h-1.1zM224.4 65.1h1.6v1.6h-1.6zM261.2 147.9h1.2v1.2h-1.2zM15.1 116.7h1.6v1.6h-1.6zM55.4 46.5h1.4v1.4h-1.4zM39.8 87.4h0.8v0.8h-0.8zM141.2 33.5h0.9v0.9h-0.9zM162.7 22.0h0.9v0.9h-0.9zM129.7 37.0h1.1v1.1h-1.1zM245.5 188.6h1.4v1.4h-1.4zM113.2 81.4h1v1h-1zM80.9 37.8h0.9v0.9h-0.9zM226.3 186.1h0.9v0.9h-0.9zM16.1 35.7h1.6v1.6h-1.6zM225.7 181.1h1.6v1.6h-1.6zM240.5 5.7h1.6v1.6h-1.6zM258.2 145.9h1v1h-1zM201.3 134.3h1.2v1.2h-1.2zM207.7 149.4h0.8v0.8h-0.8zM248.9 81.7h1.1v1.1h-1.1zM188.5 140.7h0.8v0.8h-0.8zM42.1 150.7h1v1h-1zM12.5 95.7h1.1v1.1h-1.1zM35.2 45.1h1.4v1.4h-1.4zM83.1 49.4h0.9v0.9h-0.9zM51.1 161.9h1v1h-1zM161.7 40.1h0.8v0.8h-0.8zM6.2 72.4h0.8v0.8h-0.8zM223.6 98.9h0.8v0.8h-0.8zM111.9 100.0h1.6v1.6h-1.6zM180.5 107.2h1.2v1.2h-1.2zM51.2 27.7h1.2v1.2h-1.2zM191.6 68.2h0.9v0.9h-0.9zM6.8 147.8h0.8v0.8h-0.8zM35.9 153.0h1.4v1.4h-1.4zM250.7 102.6h1v1h-1zM114.0 9.9h1.2v1.2h-1.2zM49.6 42.2h1.1v1.1h-1.1zM224.6 7.2h1v1h-1zM120.5 134.9h0.8v0.8h-0.8zM103.1 151.0h0.9v0.9h-0.9zM274.7 58.4h0.8v0.8h-0.8zM5.9 89.4h1.1v1.1h-1.1zM74.8 155.6h1.1v1.1h-1.1zM241.0 183.9h0.8v0.8h-0.8zM6.8 81.6h1.1v1.1h-1.1zM10.8 36.7h1.1v1.1h-1.1zM247.8 34.5h1.2v1.2h-1.2zM248.5 41.6h1v1h-1zM259.9 40.2h1v1h-1zM27.9 89.6h1.6v1.6h-1.6zM57.3 114.3h1.6v1.6h-1.6zM120.7 47.4h1.6v1.6h-1.6zM273.6 91.0h0.8v0.8h-0.8zM89.2 127.5h1.1v1.1h-1.1zM53.8 173.9h1v1h-1zM212.1 101.3h1.4v1.4h-1.4zM197.3 154.3h1v1h-1zM260.4 14.9h0.9v0.9h-0.9zM275.2 101.9h1v1h-1zM134.1 69.4h0.8v0.8h-0.8zM263.5 90.9h0.8v0.8h-0.8zM111.8 72.0h1.6v1.6h-1.6zM106.9 32.8h1v1h-1zM61.9 43.0h1.4v1.4h-1.4zM82.7 104.8h1.2v1.2h-1.2zM35.2 45.1h1v1h-1zM19.1 42.7h0.8v0.8h-0.8zM244.6 30.7h1.6v1.6h-1.6zM147.9 85.0h1v1h-1zM222.7 23.8h0.9v0.9h-0.9zM235.3 60.5h1.4v1.4h-1.4zM200.0 174.6h1.4v1.4h-1.4zM119.4 176.7h1v1h-1zM230.7 84.3h1.1v1.1h-1.1zM12.6 61.8h1.6v1.6h-1.6zM62.5 155.6h0.9v0.9h-0.9zM145.7 26.9h1.6v1.6h-1.6zM233.8 76.2h0.8v0.8h-0.8zM20.9 191.8h0.8v0.8h-0.8zM97.9 137.6h1v1h-1zM175.1 167.5h1.4v1.4h-1.4zM96.4 198.7h1v1h-1zM192.9 197.4h1.1v1.1h-1.1zM212.1 159.1h1v1h-1zM194.4 194.7h1v1h-1zM74.1 121.2h1.6v1.6h-1.6zM87.4 171.7h0.8v0.8h-0.8zM172.0 59.2h1v1h-1zM198.4 73.9h1v1h-1zM77.3 110.9h1.4v1.4h-1.4zM235.7 167.8h1v1h-1zM220.8 114.0h0.9v0.9h-0.9zM64.0 15.3h0.9v0.9h-0.9zM141.6 146.3h0.8v0.8h-0.8zM1.9 59.9h1.6v1.6h-1.6zM147.7 115.2h0.9v0.9h-0.9zM245.2 197.4h1.2v1.2h-1.2zM161.7 98.6h1.6v1.6h-1.6zM50.4 129.9h0.9v0.9h-0.9zM114.6 107.2h1.4v1.4h-1.4zM84.5 80.8h1.6v1.6h-1.6zM42.4 1.7h1.6v1.6h-1.6zM208.2 25.5h1.2v1.2h-1.2zM80.9 23.8h0.9v0.9h-0.9zM43.8 63.6h0.9v0.9h-0.9zM52.5 92.1h0.8v0.8h-0.8zM11.1 132.8h1v1h-1zM83.1 131.4h1.6v1.6h-1.6zM197.2 93.1h1v1h-1zM86.4 60.5h1.6v1.6h-1.6zM175.8 94.8h1.2v1.2h-1.2zM22.5 137.3h1v1h-1zM73.4 95.4h1v1h-1zM176.6 29.0h1v1h-1zM132.3 95.4h1v1h-1zM86.1 191.8h1v1h-1zM38.3 180.9h1.6v1.6h-1.6zM154.6 170.6h0.9v0.9h-0.9zM228.8 55.9h1.6v1.6h-1.6zM45.2 68.3h0.9v0.9h-0.9zM144.5 126.4h1.4v1.4h-1.4zM48.4 36.1h0.8v0.8h-0.8zM81.3 22.1h1v1h-1zM5.5 83.9h1.6v1.6h-1.6zM1.7 16.3h1v1h-1zM68.7 167.5h1.6v1.6h-1.6zM106.2 166.0h1.1v1.1h-1.1zM144.7 5.5h1.1v1.1h-1.1zM203.5 177.8h1v1h-1zM27.6 173.7h1.1v1.1h-1.1zM21.5 63.0h1.2v1.2h-1.2zM45.7 24.6h1v1h-1zM267.8 145.0h1.4v1.4h-1.4zM171.7 65.7h0.9v0.9h-0.9zM13.8 196.9h1v1h-1zM21.3 2.5h1.1v1.1h-1.1zM36.7 149.2h1.1v1.1h-1.1zM175.8 139.5h1.1v1.1h-1.1zM183.8 13.0h1v1h-1zM7.8 146.4h1.1v1.1h-1.1zM275.1 119.2h0.8v0.8h-0.8zM3.9 49.6h1.1v1.1h-1.1zM44.4 109.9h0.8v0.8h-0.8zM67.0 9.3h1v1h-1zM262.4 108.2h1v1h-1zM227.5 175.8h1.4v1.4h-1.4zM200.3 135.4h0.9v0.9h-0.9zM249.3 61.2h1.4v1.4h-1.4zM33.5 172.5h1v1h-1zM197.8 61.0h1.2v1.2h-1.2zM259.0 136.8h0.8v0.8h-0.8zM104.0 15.5h0.8v0.8h-0.8zM165.1 185.0h1.6v1.6h-1.6zM18.4 129.4h1.6v1.6h-1.6zM124.6 8.1h1v1h-1zM227.8 115.6h1.4v1.4h-1.4zM257.9 185.8h1.6v1.6h-1.6zM131.9 74.0h1.4v1.4h-1.4zM32.7 182.4h1.6v1.6h-1.6zM70.2 179.0h1v1h-1zM253.6 100.2h0.9v0.9h-0.9zM240.9 78.9h1.1v1.1h-1.1zM32.2 114.5h1.6v1.6h-1.6zM148.9 89.6h1.4v1.4h-1.4zM15.5 140.6h1.4v1.4h-1.4zM221.6 117.2h1v1h-1zM152.8 14.1h0.8v0.8h-0.8zM0.9 173.2h1v1h-1zM72.2 158.2h1.4v1.4h-1.4zM17.6 177.5h1.1v1.1h-1.1zM106.1 157.7h1.6v1.6h-1.6zM257.4 5.4h0.8v0.8h-0.8zM26.3 118.3h1.1v1.1h-1.1zM151.9 47.8h1.4v1.4h-1.4zM122.4 167.2h0.8v0.8h-0.8zM165.3 52.8h1.2v1.2h-1.2zM115.0 43.4h0.8v0.8h-0.8zM248.2 183.9h0.9v0.9h-0.9zM12.9 30.0h0.9v0.9h-0.9zM20.7 48.9h1.4v1.4h-1.4zM230.6 132.5h1.2v1.2h-1.2zM204.8 134.9h1.6v1.6h-1.6zM164.7 79.8h1.2v1.2h-1.2zM133.2 65.2h1.2v1.2h-1.2zM229.9 58.4h1.4v1.4h-1.4zM196.5 106.5h1.2v1.2h-1.2zM163.4 93.2h1v1h-1zM112.4 29.7h0.8v0.8h-0.8zM74.9 107.3h1.4v1.4h-1.4zM50.3 164.5h0.9v0.9h-0.9zM201.9 3.6h0.8v0.8h-0.8zM71.3 106.4h1.6v1.6h-1.6zM240.2 187.9h0.9v0.9h-0.9zM156.6 179.2h0.9v0.9h-0.9zM103.0 22.8h1v1h-1zM77.3 151.4h0.9v0.9h-0.9zM122.6 150.6h1.4v1.4h-1.4zM197.8 62.2h0.8v0.8h-0.8zM3.8 66.3h1v1h-1zM134.4 136.1h0.9v0.9h-0.9zM204.5 162.9h1.4v1.4h-1.4zM44.2 110.5h1.6v1.6h-1.6zM238.6 100.6h0.8v0.8h-0.8zM144.7 130.6h0.8v0.8h-0.8zM151.1 103.0h1.4v1.4h-1.4zM144.1 135.0h1.6v1.6h-1.6zM190.0 28.4h1.6v1.6h-1.6zM230.5 77.6h1v1h-1zM50.2 10.5h1.1v1.1h-1.1zM14.8 119.8h1.1v1.1h-1.1zM174.6 153.5h1v1h-1zM129.1 59.0h1v1h-1zM108.8 180.0h1.4v1.4h-1.4zM1.7 192.4h0.8v0.8h-0.8zM123.4 135.8h1.2v1.2h-1.2zM277.1 68.1h1v1h-1zM130.9 24.2h1v1h-1zM103.8 153.4h0.9v0.9h-0.9zM77.4 12.0h0.9v0.9h-0.9zM227.6 60.1h1.2v1.2h-1.2zM82.2 14.5h0.9v0.9h-0.9zM264.4 153.5h1.4v1.4h-1.4zM119.6 53.5h1.4v1.4h-1.4zM111.4 50.6h1v1h-1zM80.5 2.6h0.9v0.9h-0.9zM121.3 85.5h1.2v1.2h-1.2zM178.6 86.1h1.6v1.6h-1.6zM48.3 176.9h1.2v1.2h-1.2zM263.1 53.6h1v1h-1zM68.2 16.7h1.2v1.2h-1.2zM127.5 128.9h1v1h-1zM210.1 38.3h1.2v1.2h-1.2zM21.7 16.6h1.6v1.6h-1.6zM55.5 5.1h1v1h-1zM16.7 96.8h1.2v1.2h-1.2zM274.4 12.3h0.9v0.9h-0.9zM203.0 36.3h0.9v0.9h-0.9zM28.7 28.6h1.6v1.6h-1.6zM193.8 156.8h1.6v1.6h-1.6zM14.8 151.9h1.4v1.4h-1.4zM105.2 62.2h1.1v1.1h-1.1zM17.7 136.4h1.2v1.2h-1.2zM244.1 168.6h1.2v1.2h-1.2zM247.4 85.3h0.9v0.9h-0.9zM265.8 50.4h1.4v1.4h-1.4zM122.1 82.3h1v1h-1zM42.1 134.8h1v1h-1zM184.6 100.5h1.1v1.1h-1.1zM254.0 96.1h1v1h-1zM129.6 29.2h1v1h-1zM221.8 111.2h1.6v1.6h-1.6zM262.0 57.9h1v1h-1zM64.5 110.1h1.6v1.6h-1.6zM223.4 5.0h1.2v1.2h-1.2zM86.1 145.0h1.1v1.1h-1.1zM85.1 49.5h1.2v1.2h-1.2zM22.5 6.5h1.6v1.6h-1.6zM84.1 114.6h1.1v1.1h-1.1zM164.9 63.8h0.8v0.8h-0.8zM0.1 152.7h1.6v1.6h-1.6zM26.2 30.7h1.1v1.1h-1.1zM109.2 31.1h1v1h-1zM86.8 126.6h0.8v0.8h-0.8zM127.1 110.5h1v1h-1zM260.0 155.2h1.1v1.1h-1.1zM91.6 65.5h0.8v0.8h-0.8zM276.1 27.2h0.9v0.9h-0.9zM145.3 98.8h1.6v1.6h-1.6zM67.4 151.4h1.1v1.1h-1.1zM32.9 142.6h1.1v1.1h-1.1zM95.4 156.7h0.8v0.8h-0.8zM195.5 106.1h1.6v1.6h-1.6zM220.9 149.3h1.2v1.2h-1.2zM142.4 22.0h0.8v0.8h-0.8zM264.3 113.1h1.6v1.6h-1.6zM173.8 87.2h0.9v0.9h-0.9zM173.1 116.0h1v1h-1zM44.3 37.4h1.2v1.2h-1.2zM196.4 94.5h1.1v1.1h-1.1zM104.1 42.1h1.6v1.6h-1.6zM158.0 161.6h1.2v1.2h-1.2zM168.8 153.6h0.9v0.9h-0.9zM0.1 19.6h0.8v0.8h-0.8zM231.8 172.1h1.4v1.4h-1.4zM68.0 64.9h1v1h-1zM71.9 97.9h1.6v1.6h-1.6zM193.4 184.8h1.2v1.2h-1.2zM84.8 194.3h1v1h-1zM157.1 83.6h1.4v1.4h-1.4zM131.2 186.5h1v1h-1zM265.4 6.3h1v1h-1zM197.3 83.5h1.6v1.6h-1.6zM113.3 22.3h1.4v1.4h-1.4zM234.6 134.2h0.9v0.9h-0.9zM181.8 160.2h0.8v0.8h-0.8zM245.4 143.6h1.1v1.1h-1.1zM273.0 68.3h1v1h-1zM65.9 39.7h0.8v0.8h-0.8zM112.5 44.7h1.2v1.2h-1.2zM123.7 169.7h1v1h-1zM80.4 107.6h0.8v0.8h-0.8zM139.2 195.8h0.9v0.9h-0.9zM146.0 162.8h1.1v1.1h-1.1zM129.2 34.3h0.9v0.9h-0.9zM107.2 198.9h1v1h-1zM142.8 95.8h0.8v0.8h-0.8zM181.3 117.0h1v1h-1zM248.6 89.6h1v1h-1zM170.5 20.3h1.1v1.1h-1.1zM176.9 122.0h1.4v1.4h-1.4zM210.3 173.1h0.9v0.9h-0.9zM73.6 113.3h0.9v0.9h-0.9zM68.4 46.3h0.8v0.8h-0.8zM53.4 144.8h1v1h-1zM117.0 141.5h1.6v1.6h-1.6zM28.1 147.9h1.1v1.1h-1.1zM1.9 51.0h0.8v0.8h-0.8zM78.9 67.6h1.2v1.2h-1.2zM107.2 191.1h1.6v1.6h-1.6zM74.0 24.8h1.2v1.2h-1.2zM213.4 108.6h0.9v0.9h-0.9zM123.4 179.5h1v1h-1zM134.9 24.5h1v1h-1zM236.5 105.7h1.4v1.4h-1.4zM94.5 44.2h1.1v1.1h-1.1zM7.2 197.9h1v1h-1zM18.0 121.0h1v1h-1zM68.5 34.8h0.9v0.9h-0.9zM75.8 167.1h1v1h-1zM117.3 52.1h1v1h-1zM132.7 99.1h1.6v1.6h-1.6zM30.1 31.5h1v1h-1zM140.1 84.7h1.6v1.6h-1.6zM10.0 39.8h0.8v0.8h-0.8zM129.1 52.4h1v1h-1zM137.4 71.2h1.6v1.6h-1.6zM64.9 32.1h0.8v0.8h-0.8zM176.9 94.9h1v1h-1zM162.1 80.9h0.9v0.9h-0.9zM156.4 137.8h1v1h-1zM118.7 41.7h1.1v1.1h-1.1zM111.1 162.7h0.9v0.9h-0.9zM78.0 8.2h1v1h-1zM160.6 153.9h0.9v0.9h-0.9zM61.0 196.1h0.8v0.8h-0.8zM106.9 156.4h1.2v1.2h-1.2zM34.9 109.7h1.4v1.4h-1.4zM86.1 103.6h1.6v1.6h-1.6zM227.4 168.2h1.4v1.4h-1.4zM179.3 17.3h1.1v1.1h-1.1zM201.4 55.6h1.1v1.1h-1.1zM15.5 24.9h0.8v0.8h-0.8zM98.2 25.6h0.8v0.8h-0.8zM112.9 45.5h1.6v1.6h-1.6zM44.0 137.8h0.9v0.9h-0.9zM87.2 87.1h1.4v1.4h-1.4zM267.1 144.1h1v1h-1zM86.1 63.3h1.4v1.4h-1.4zM200.5 126.6h1.2v1.2h-1.2zM85.0 165.2h0.8v0.8h-0.8zM104.4 178.1h1.4v1.4h-1.4zM207.5 166.1h1.4v1.4h-1.4zM3.7 112.8h1v1h-1zM45.0 152.1h1.6v1.6h-1.6zM57.7 31.2h1.1v1.1h-1.1zM46.4 29.0h1v1h-1zM15.5 58.4h1.1v1.1h-1.1zM239.8 181.5h0.8v0.8h-0.8zM255.3 7.2h1v1h-1zM146.2 93.6h1.4v1.4h-1.4zM44.9 169.0h1.2v1.2h-1.2zM190.8 96.1h1.6v1.6h-1.6zM119.1 174.1h1.1v1.1h-1.1zM271.2 183.9h1.6v1.6h-1.6zM68.3 156.6h1.2v1.2h-1.2zM75.0 157.7h1.4v1.4h-1.4zM105.4 168.1h1v1h-1zM199.8 72.9h1v1h-1zM151.3 54.9h1v1h-1zM225.3 134.3h1.6v1.6h-1.6zM140.5 84.0h1v1h-1zM216.1 95.6h0.9v0.9h-0.9zM94.6 184.6h1.4v1.4h-1.4zM160.9 1.1h1.1v1.1h-1.1zM55.3 164.0h1.1v1.1h-1.1zM201.4 121.7h1v1h-1zM51.8 51.1h0.8v0.8h-0.8zM263.9 192.8h1.6v1.6h-1.6zM88.0 44.8h1.1v1.1h-1.1zM210.1 7.7h1.6v1.6h-1.6zM234.4 35.3h0.8v0.8h-0.8zM144.9 35.0h0.8v0.8h-0.8zM53.1 52.6h1v1h-1zM29.1 15.9h1.4v1.4h-1.4zM248.1 136.4h1v1h-1zM168.7 198.3h1v1h-1zM210.6 173.3h0.8v0.8h-0.8zM57.1 137.7h1.4v1.4h-1.4zM230.2 48.4h1v1h-1zM74.5 123.0h1.1v1.1h-1.1zM61.6 174.5h0.9v0.9h-0.9zM180.3 168.9h0.8v0.8h-0.8zM157.5 150.8h1v1h-1zM108.7 182.4h1.1v1.1h-1.1zM66.4 173.1h1v1h-1zM259.8 125.7h0.9v0.9h-0.9zM43.2 119.4h1.4v1.4h-1.4zM32.5 102.8h0.8v0.8h-0.8zM62.7 21.6h1.1v1.1h-1.1zM274.0 155.2h1v1h-1zM83.1 152.8h1.1v1.1h-1.1zM205.8 103.0h0.9v0.9h-0.9zM232.2 8.7h1.2v1.2h-1.2zM128.7 188.3h1.6v1.6h-1.6zM261.1 119.2h0.8v0.8h-0.8zM178.5 117.9h1.4v1.4h-1.4zM181.2 107.6h1.4v1.4h-1.4zM235.6 119.7h1.2v1.2h-1.2zM101.9 103.0h1.4v1.4h-1.4zM276.3 106.4h1v1h-1zM110.2 13.8h0.9v0.9h-0.9zM111.1 78.6h1.1v1.1h-1.1zM91.4 38.5h1.2v1.2h-1.2zM173.3 196.9h0.9v0.9h-0.9zM89.7 77.4h1.4v1.4h-1.4zM35.7 139.5h1v1h-1zM6.3 198.5h1v1h-1zM91.8 173.0h1.6v1.6h-1.6zM275.7 186.5h1.4v1.4h-1.4zM245.1 102.9h1.1v1.1h-1.1zM161.5 187.0h1.2v1.2h-1.2zM268.2 33.9h0.8v0.8h-0.8zM260.7 186.4h1.2v1.2h-1.2zM234.9 66.3h0.9v0.9h-0.9zM75.0 116.3h0.9v0.9h-0.9zM155.9 171.6h1v1h-1zM166.8 54.8h1.2v1.2h-1.2zM214.9 167.4h0.8v0.8h-0.8zM143.6 88.4h1v1h-1zM224.1 174.4h1.1v1.1h-1.1zM250.3 178.8h0.9v0.9h-0.9zM177.6 123.2h1.1v1.1h-1.1zM76.4 120.5h0.8v0.8h-0.8zM80.1 130.2h1.6v1.6h-1.6zM269.9 122.3h1.1v1.1h-1.1zM268.0 151.9h0.9v0.9h-0.9zM116.1 17.4h0.8v0.8h-0.8zM272.4 14.0h0.8v0.8h-0.8zM67.7 62.2h1v1h-1zM131.1 160.6h0.8v0.8h-0.8zM7.3 146.0h1.2v1.2h-1.2zM22.2 25.8h1v1h-1zM221.7 156.4h1.6v1.6h-1.6zM67.8 159.0h0.8v0.8h-0.8zM268.2 89.0h1v1h-1zM50.0 174.9h1.4v1.4h-1.4zM77.1 4.3h1v1h-1zM273.5 148.3h1v1h-1zM84.6 183.4h1.1v1.1h-1.1zM118.4 177.0h1v1h-1zM75.9 186.1h1.2v1.2h-1.2zM96.9 125.9h1v1h-1zM43.1 192.6h1v1h-1zM167.6 160.4h1.2v1.2h-1.2zM203.5 170.5h1.6v1.6h-1.6zM262.7 114.6h0.8v0.8h-0.8zM138.1 164.0h1.6v1.6h-1.6zM175.7 100.1h1.6v1.6h-1.6zM140.2 187.2h1.2v1.2h-1.2zM40.2 177.7h1.4v1.4h-1.4zM229.8 34.3h1.4v1.4h-1.4zM162.7 37.6h1v1h-1zM190.8 180.5h1.2v1.2h-1.2zM240.8 161.6h1.4v1.4h-1.4zM3.2 145.8h1.4v1.4h-1.4zM274.5 195.4h1.4v1.4h-1.4zM230.2 58.1h0.9v0.9h-0.9zM264.5 58.0h1.2v1.2h-1.2zM221.9 103.2h1v1h-1zM141.4 3.0h1.1v1.1h-1.1zM143.7 17.8h1v1h-1zM137.4 143.4h1v1h-1zM91.0 170.7h0.8v0.8h-0.8zM112.1 89.8h1.1v1.1h-1.1zM170.9 83.3h0.8v0.8h-0.8zM57.8 107.8h1.2v1.2h-1.2zM123.6 22.2h1v1h-1zM276.4 155.0h0.8v0.8h-0.8zM247.2 190.0h1v1h-1zM4.4 192.9h1.4v1.4h-1.4zM121.5 104.5h1.4v1.4h-1.4zM194.5 40.2h1v1h-1zM189.0 91.1h1.6v1.6h-1.6zM78.6 23.3h1v1h-1zM258.3 18.4h1.1v1.1h-1.1zM25.7 131.9h1.1v1.1h-1.1zM163.5 52.6h1.6v1.6h-1.6zM181.9 2.8h1.2v1.2h-1.2zM48.3 41.4h1.6v1.6h-1.6zM75.1 169.0h1.2v1.2h-1.2zM5.9 171.6h1.4v1.4h-1.4zM223.0 17.0h0.9v0.9h-0.9zM221.0 67.8h1v1h-1zM30.2 121.4h0.9v0.9h-0.9zM215.6 105.1h1v1h-1zM65.1 191.7h1.1v1.1h-1.1zM84.7 139.3h1v1h-1zM68.5 26.2h0.8v0.8h-0.8zM208.0 101.4h1.2v1.2h-1.2zM203.1 122.9h1.2v1.2h-1.2zM95.9 29.3h1.2v1.2h-1.2zM78.2 33.6h1.2v1.2h-1.2zM181.0 145.5h0.9v0.9h-0.9zM7.8 42.8h0.9v0.9h-0.9zM30.6 160.7h0.9v0.9h-0.9zM157.3 183.6h0.8v0.8h-0.8zM157.7 102.8h1.1v1.1h-1.1zM216.8 52.4h0.8v0.8h-0.8zM121.4 6.3h0.9v0.9h-0.9zM184.1 81.2h1v1h-1zM15.1 88.0h1.6v1.6h-1.6zM163.6 74.8h1.2v1.2h-1.2zM247.0 21.9h1v1h-1zM54.3 139.4h1.4v1.4h-1.4zM66.1 143.0h1v1h-1zM79.5 105.5h1v1h-1zM113.9 192.8h1.2v1.2h-1.2zM135.1 99.4h1.2v1.2h-1.2zM96.9 55.1h1v1h-1zM208.2 9.2h0.9v0.9h-0.9zM203.4 181.9h1v1h-1zM247.9 149.2h1.1v1.1h-1.1zM21.0 139.2h0.9v0.9h-0.9zM132.0 153.9h1v1h-1zM5.1 119.9h1.2v1.2h-1.2zM273.1 172.3h1.6v1.6h-1.6zM34.7 191.5h1v1h-1zM109.7 175.9h1v1h-1zM73.5 8.5h1.6v1.6h-1.6zM210.1 33.1h1v1h-1zM104.7 111.8h0.8v0.8h-0.8zM111.6 109.7h1.1v1.1h-1.1zM23.3 46.8h1.1v1.1h-1.1zM249.1 25.2h1v1h-1zM177.9 60.2h1v1h-1zM246.3 102.1h1.1v1.1h-1.1zM55.6 44.0h1.1v1.1h-1.1zM88.2 80.8h1.6v1.6h-1.6zM89.2 144.6h1.1v1.1h-1.1zM26.4 79.7h1v1h-1zM238.4 143.7h1.1v1.1h-1.1zM196.6 112.0h1v1h-1zM67.1 183.4h1.4v1.4h-1.4zM217.0 107.6h1v1h-1zM20.0 163.9h0.9v0.9h-0.9zM113.1 151.3h0.8v0.8h-0.8zM134.0 83.7h0.8v0.8h-0.8zM85.1 133.8h1.1v1.1h-1.1zM168.2 81.6h1.2v1.2h-1.2zM255.9 27.9h0.9v0.9h-0.9zM181.5 81.6h0.9v0.9h-0.9zM222.9 179.8h1.2v1.2h-1.2zM37.2 82.1h0.8v0.8h-0.8zM52.9 166.0h1.2v1.2h-1.2zM130.9 83.6h1v1h-1zM229.6 145.1h1.2v1.2h-1.2zM167.4 168.9h1.1v1.1h-1.1zM135.5 105.8h1.4v1.4h-1.4zM260.2 4.2h1.2v1.2h-1.2zM254.0 34.1h1.2v1.2h-1.2zM110.1 14.9h1.4v1.4h-1.4zM168.7 151.2h0.8v0.8h-0.8zM15.0 83.0h1.1v1.1h-1.1zM199.6 62.0h1v1h-1zM156.4 122.5h0.8v0.8h-0.8zM68.8 61.7h1v1h-1zM38.3 123.0h1.6v1.6h-1.6zM217.9 48.9h1.4v1.4h-1.4zM103.7 79.1h1.2v1.2h-1.2zM61.5 16.4h1v1h-1zM117.6 130.4h1v1h-1zM253.3 179.8h1.4v1.4h-1.4zM0.3 124.0h0.8v0.8h-0.8zM164.6 175.3h0.9v0.9h-0.9zM187.1 24.1h1.6v1.6h-1.6zM26.7 180.2h1.4v1.4h-1.4zM222.8 53.9h1v1h-1zM157.7 78.2h1.4v1.4h-1.4zM220.3 84.1h0.8v0.8h-0.8zM124.7 186.1h0.8v0.8h-0.8zM66.2 138.9h1.1v1.1h-1.1zM203.6 182.1h1.4v1.4h-1.4zM49.4 100.3h1.6v1.6h-1.6zM248.1 45.5h0.9v0.9h-0.9zM205.2 97.8h1.2v1.2h-1.2zM54.0 145.8h1.1v1.1h-1.1zM115.1 72.2h1v1h-1zM216.7 3.3h1.4v1.4h-1.4zM112.6 139.6h1.1v1.1h-1.1zM181.1 119.6h0.8v0.8h-0.8zM182.4 11.2h0.8v0.8h-0.8zM271.0 11.3h0.8v0.8h-0.8zM157.9 159.6h1v1h-1zM235.3 183.9h0.8v0.8h-0.8zM78.1 157.5h1.6v1.6h-1.6zM162.3 197.9h0.9v0.9h-0.9zM19.2 89.1h1.4v1.4h-1.4zM60.4 65.5h1v1h-1zM165.5 162.7h1.6v1.6h-1.6zM248.4 79.1h1v1h-1zM134.2 181.8h1.6v1.6h-1.6zM238.6 11.1h0.8v0.8h-0.8zM123.7 159.2h0.8v0.8h-0.8zM167.4 82.4h1.6v1.6h-1.6zM144.8 170.8h1.2v1.2h-1.2zM238.1 21.1h1.1v1.1h-1.1zM227.3 101.7h1v1h-1zM192.9 92.2h1.1v1.1h-1.1zM57.6 15.7h1.6v1.6h-1.6zM272.2 31.8h1.1v1.1h-1.1zM106.3 57.7h0.9v0.9h-0.9zM210.3 186.9h1v1h-1zM135.8 116.5h1v1h-1zM36.3 36.8h1.1v1.1h-1.1zM163.1 149.2h1.2v1.2h-1.2zM99.6 184.3h0.8v0.8h-0.8zM242.4 144.7h1.4v1.4h-1.4zM75.0 124.3h1.6v1.6h-1.6zM61.0 73.1h1.6v1.6h-1.6zM216.2 33.4h1.1v1.1h-1.1zM74.1 40.7h1.2v1.2h-1.2zM178.7 84.2h1.4v1.4h-1.4zM269.2 63.6h1v1h-1zM41.2 54.2h0.8v0.8h-0.8zM111.0 148.8h0.8v0.8h-0.8zM68.0 57.9h1v1h-1zM166.5 83.9h0.9v0.9h-0.9zM129.8 57.5h0.8v0.8h-0.8zM234.6 92.9h1.6v1.6h-1.6zM91.9 128.0h1v1h-1zM65.5 57.2h1.1v1.1h-1.1zM90.2 126.6h1.1v1.1h-1.1zM41.7 4.7h1.4v1.4h-1.4zM230.0 177.4h1.1v1.1h-1.1zM245.8 69.6h1v1h-1zM129.6 96.2h1.4v1.4h-1.4zM185.3 34.9h1.4v1.4h-1.4zM19.5 52.8h1v1h-1zM128.3 22.4h0.9v0.9h-0.9zM243.7 130.4h1.2v1.2h-1.2zM29.2 152.6h1.2v1.2h-1.2zM261.2 146.4h1v1h-1zM231.1 78.6h0.8v0.8h-0.8zM215.0 166.0h0.9v0.9h-0.9zM162.7 38.9h0.9v0.9h-0.9zM175.9 124.7h1v1h-1zM172.9 59.1h1v1h-1zM41.8 129.5h0.8v0.8h-0.8zM161.5 37.3h1.2v1.2h-1.2zM19.1 30.2h1v1h-1zM195.3 105.8h1.4v1.4h-1.4zM183.8 66.4h1.2v1.2h-1.2zM78.2 134.0h1.1v1.1h-1.1zM53.2 123.1h1v1h-1zM62.7 91.3h0.9v0.9h-0.9zM73.1 142.3h1.4v1.4h-1.4zM216.9 37.7h1.1v1.1h-1.1zM190.0 142.3h1v1h-1zM54.9 78.8h1v1h-1zM157.8 129.1h1v1h-1zM238.1 181.3h1v1h-1zM47.0 180.5h1.6v1.6h-1.6zM232.8 91.4h0.9v0.9h-0.9zM260.5 66.2h0.8v0.8h-0.8zM145.5 52.9h1.2v1.2h-1.2zM32.9 149.4h1v1h-1zM266.6 188.7h0.9v0.9h-0.9zM194.4 63.9h0.9v0.9h-0.9zM66.8 149.9h0.8v0.8h-0.8zM231.5 70.1h1v1h-1zM193.3 44.0h1.4v1.4h-1.4zM201.6 188.6h1.4v1.4h-1.4zM72.5 146.9h0.8v0.8h-0.8zM105.5 181.2h0.8v0.8h-0.8zM252.5 18.4h1.2v1.2h-1.2zM206.3 181.7h1.4v1.4h-1.4zM30.2 111.4h1.1v1.1h-1.1z" fill="#000"/><rect x="47" y="25" width="3" height="3" fill="#000"/><rect x="153" y="1" width="3.2" height="3.2" fill="#000"/><rect x="147" y="56" width="2.6" height="2.6" fill="#000"/><rect x="110" y="145" width="2.5" height="2.5" fill="#000"/><rect x="253" y="142" width="2.8" height="2.8" fill="#000"/><rect x="97" y="123" width="2" height="2" fill="#000"/><rect x="214" y="44" width="2" height="2" fill="#000"/><rect x="18" y="64" width="2" height="2" fill="#000"/><rect x="230" y="190" width="2" height="2" fill="#000"/><ellipse cx="151" cy="101.5" rx="19" ry="20.5" fill="#000" transform="rotate(-35 151 101.5)" filter="url(#bl05)"/><path d="M139.2 84.8h1.1v1.1h-1.1zM161.6 118.3h1.1v1.1h-1.1zM164.8 114.5h1.1v1.1h-1.1zM170.8 109.9h1.1v1.1h-1.1zM138.9 86.7h1.1v1.1h-1.1zM137.1 81.2h1.1v1.1h-1.1zM150.9 122.0h1.1v1.1h-1.1zM144.9 80.4h1.1v1.1h-1.1zM141.5 84.3h1.1v1.1h-1.1zM154.4 79.1h1.1v1.1h-1.1zM154.8 122.5h1.1v1.1h-1.1zM135.5 116.0h1.1v1.1h-1.1zM153.9 121.1h1.1v1.1h-1.1zM142.1 84.2h1.1v1.1h-1.1zM150.9 80.1h1.1v1.1h-1.1zM150.5 124.4h1.1v1.1h-1.1zM145.1 81.8h1.1v1.1h-1.1zM162.8 118.9h1.1v1.1h-1.1zM160.7 121.7h1.1v1.1h-1.1zM164.9 116.1h1.1v1.1h-1.1zM148.4 124.8h1.1v1.1h-1.1zM153.3 81.7h1.1v1.1h-1.1zM154.9 123.3h1.1v1.1h-1.1zM146.6 123.7h1.1v1.1h-1.1zM145.3 123.0h1.1v1.1h-1.1zM145.4 121.5h1.1v1.1h-1.1zM151.6 122.7h1.1v1.1h-1.1zM148.3 122.2h1.1v1.1h-1.1zM148.1 121.2h1.1v1.1h-1.1zM155.1 123.4h1.1v1.1h-1.1zM143.2 81.0h1.1v1.1h-1.1zM161.0 120.2h1.1v1.1h-1.1zM146.6 81.6h1.1v1.1h-1.1zM150.2 121.0h1.1v1.1h-1.1zM141.9 121.5h1.1v1.1h-1.1zM162.0 82.0h1.1v1.1h-1.1zM160.3 119.0h1.1v1.1h-1.1zM149.2 80.9h1.1v1.1h-1.1zM146.5 82.1h1.1v1.1h-1.1zM149.3 79.8h1.1v1.1h-1.1zM156.1 78.5h1.1v1.1h-1.1zM147.2 82.1h1.1v1.1h-1.1zM132.2 98.7h1.1v1.1h-1.1zM155.9 81.2h1.1v1.1h-1.1zM141.6 121.9h1.1v1.1h-1.1zM142.7 80.2h1.1v1.1h-1.1zM160.8 120.9h1.1v1.1h-1.1zM154.0 125.1h1.1v1.1h-1.1zM132.1 95.4h1.1v1.1h-1.1zM143.1 81.5h1.1v1.1h-1.1zM151.2 122.8h1.1v1.1h-1.1zM162.4 118.8h1.1v1.1h-1.1zM164.0 86.5h1.1v1.1h-1.1zM154.6 80.8h1.1v1.1h-1.1zM165.8 113.8h1.1v1.1h-1.1zM156.4 122.6h1.1v1.1h-1.1zM157.2 124.0h1.1v1.1h-1.1zM150.9 77.1h1.1v1.1h-1.1zM153.1 122.8h1.1v1.1h-1.1zM153.4 122.3h1.1v1.1h-1.1zM133.2 106.2h1.1v1.1h-1.1zM145.7 80.0h1.1v1.1h-1.1zM149.9 124.4h1.1v1.1h-1.1zM152.4 81.6h1.1v1.1h-1.1zM161.9 120.3h1.1v1.1h-1.1zM157.6 80.3h1.1v1.1h-1.1zM149.6 122.9h1.1v1.1h-1.1zM163.5 120.7h1.1v1.1h-1.1zM149.2 79.3h1.1v1.1h-1.1zM132.1 90.7h1.1v1.1h-1.1zM131.6 88.9h1.1v1.1h-1.1zM138.8 83.2h1.1v1.1h-1.1zM150.7 122.6h1.1v1.1h-1.1zM167.1 116.7h1.1v1.1h-1.1zM147.8 82.3h1.1v1.1h-1.1zM142.8 119.7h1.1v1.1h-1.1zM143.5 83.6h1.1v1.1h-1.1zM161.2 118.8h1.1v1.1h-1.1zM145.1 81.4h1.1v1.1h-1.1zM149.3 121.4h1.1v1.1h-1.1zM136.3 86.5h1.1v1.1h-1.1zM155.2 82.2h1.1v1.1h-1.1zM158.6 82.1h1.1v1.1h-1.1zM146.7 123.7h1.1v1.1h-1.1zM144.8 78.7h1.1v1.1h-1.1zM161.7 117.4h1.1v1.1h-1.1zM130.8 93.6h1.1v1.1h-1.1zM160.9 118.4h1.1v1.1h-1.1zM146.1 81.2h1.1v1.1h-1.1zM162.8 118.0h1.1v1.1h-1.1zM155.6 122.6h1.1v1.1h-1.1zM156.2 75.1h1.1v1.1h-1.1zM146.5 79.1h1.1v1.1h-1.1zM152.0 80.5h1.1v1.1h-1.1zM144.6 81.4h1.1v1.1h-1.1zM155.8 80.1h1.1v1.1h-1.1zM144.1 82.0h1.1v1.1h-1.1zM148.7 77.2h1.1v1.1h-1.1zM143.9 124.8h1.1v1.1h-1.1zM164.2 115.1h1.1v1.1h-1.1zM168.7 106.8h1.1v1.1h-1.1zM131.8 96.7h1.1v1.1h-1.1zM131.5 93.6h1.1v1.1h-1.1zM143.1 78.9h1.1v1.1h-1.1zM142.0 84.1h1.1v1.1h-1.1zM161.2 84.6h1.1v1.1h-1.1zM166.6 115.4h1.1v1.1h-1.1zM156.9 123.7h1.1v1.1h-1.1zM151.0 121.5h1.1v1.1h-1.1zM141.6 120.0h1.1v1.1h-1.1zM156.7 81.0h1.1v1.1h-1.1zM157.9 80.9h1.1v1.1h-1.1zM149.4 81.8h1.1v1.1h-1.1zM155.4 122.2h1.1v1.1h-1.1zM161.7 122.3h1.1v1.1h-1.1zM163.5 116.0h1.1v1.1h-1.1zM158.0 123.5h1.1v1.1h-1.1zM140.8 83.1h1.1v1.1h-1.1zM154.8 124.3h1.1v1.1h-1.1zM156.8 80.5h1.1v1.1h-1.1zM140.4 84.6h1.1v1.1h-1.1zM134.6 111.5h1.1v1.1h-1.1zM134.5 117.2h1.1v1.1h-1.1zM150.0 124.8h1.1v1.1h-1.1zM158.4 121.7h1.1v1.1h-1.1zM160.0 119.6h1.1v1.1h-1.1zM140.7 77.4h1.1v1.1h-1.1zM135.4 112.7h1.1v1.1h-1.1zM144.4 81.8h1.1v1.1h-1.1zM145.7 81.9h1.1v1.1h-1.1zM141.9 84.3h1.1v1.1h-1.1zM152.5 78.2h1.1v1.1h-1.1zM130.9 96.9h1.1v1.1h-1.1zM157.5 124.1h1.1v1.1h-1.1zM142.0 81.5h1.1v1.1h-1.1zM141.1 84.9h1.1v1.1h-1.1zM141.3 82.4h1.1v1.1h-1.1zM152.3 74.9h1.1v1.1h-1.1zM140.7 85.4h1.1v1.1h-1.1zM138.1 86.8h1.1v1.1h-1.1zM155.5 122.2h1.1v1.1h-1.1zM157.2 123.0h1.1v1.1h-1.1zM152.9 82.0h1.1v1.1h-1.1zM152.0 80.2h1.1v1.1h-1.1zM146.3 81.3h1.1v1.1h-1.1zM155.3 80.8h1.1v1.1h-1.1zM146.9 79.8h1.1v1.1h-1.1zM149.4 76.2h1.1v1.1h-1.1zM153.7 123.2h1.1v1.1h-1.1zM142.4 83.9h1.1v1.1h-1.1zM161.9 117.6h1.1v1.1h-1.1zM130.6 100.6h1.1v1.1h-1.1zM147.3 120.8h1.1v1.1h-1.1zM148.8 122.6h1.1v1.1h-1.1zM153.1 122.8h1.1v1.1h-1.1zM146.4 81.5h1.1v1.1h-1.1zM158.6 124.3h1.1v1.1h-1.1zM151.6 81.2h1.1v1.1h-1.1zM145.1 122.4h1.1v1.1h-1.1zM166.1 116.6h1.1v1.1h-1.1zM135.8 83.4h1.1v1.1h-1.1zM155.4 81.7h1.1v1.1h-1.1zM166.5 113.2h1.1v1.1h-1.1zM157.4 120.1h1.1v1.1h-1.1zM150.4 124.6h1.1v1.1h-1.1zM143.8 82.6h1.1v1.1h-1.1zM155.1 80.2h1.1v1.1h-1.1zM149.2 80.4h1.1v1.1h-1.1zM166.5 89.6h1.1v1.1h-1.1zM155.7 122.2h1.1v1.1h-1.1zM142.2 82.4h1.1v1.1h-1.1zM156.6 79.7h1.1v1.1h-1.1zM145.3 83.0h1.1v1.1h-1.1zM164.6 119.3h1.1v1.1h-1.1zM137.4 86.9h1.1v1.1h-1.1zM149.5 78.5h1.1v1.1h-1.1zM149.8 81.3h1.1v1.1h-1.1zM141.7 77.5h1.1v1.1h-1.1zM160.8 119.8h1.1v1.1h-1.1zM146.2 81.9h1.1v1.1h-1.1zM145.2 82.7h1.1v1.1h-1.1zM137.7 117.5h1.1v1.1h-1.1zM156.1 73.8h1.1v1.1h-1.1zM154.5 79.8h1.1v1.1h-1.1zM152.5 123.6h1.1v1.1h-1.1zM153.5 121.4h1.1v1.1h-1.1zM158.9 120.4h1.1v1.1h-1.1zM145.5 120.7h1.1v1.1h-1.1zM145.6 80.8h1.1v1.1h-1.1zM141.3 80.5h1.1v1.1h-1.1zM137.4 86.4h1.1v1.1h-1.1zM162.9 85.4h1.1v1.1h-1.1zM155.6 120.4h1.1v1.1h-1.1zM146.2 120.8h1.1v1.1h-1.1zM154.9 80.1h1.1v1.1h-1.1zM157.7 121.4h1.1v1.1h-1.1zM163.4 117.8h1.1v1.1h-1.1zM148.9 81.5h1.1v1.1h-1.1zM134.9 83.3h1.1v1.1h-1.1zM155.9 121.3h1.1v1.1h-1.1zM167.8 94.1h1.1v1.1h-1.1zM153.7 81.8h1.1v1.1h-1.1zM160.4 119.9h1.1v1.1h-1.1zM162.1 78.6h1.1v1.1h-1.1zM142.8 84.0h1.1v1.1h-1.1zM138.4 116.4h1.1v1.1h-1.1zM129.8 104.1h1.1v1.1h-1.1zM158.0 119.6h1.1v1.1h-1.1zM165.3 114.5h1.1v1.1h-1.1zM162.3 121.7h1.1v1.1h-1.1zM135.1 87.6h1.1v1.1h-1.1zM162.9 121.4h1.1v1.1h-1.1zM134.6 88.8h1.1v1.1h-1.1zM140.0 85.9h1.1v1.1h-1.1zM150.5 124.9h1.1v1.1h-1.1zM152.3 121.0h1.1v1.1h-1.1zM165.2 117.0h1.1v1.1h-1.1zM139.5 84.6h1.1v1.1h-1.1zM160.5 119.7h1.1v1.1h-1.1zM156.1 121.8h1.1v1.1h-1.1zM158.1 79.8h1.1v1.1h-1.1zM147.4 123.3h1.1v1.1h-1.1zM142.9 82.6h1.1v1.1h-1.1zM160.2 81.4h1.1v1.1h-1.1zM164.3 116.8h1.1v1.1h-1.1zM135.8 87.9h1.1v1.1h-1.1zM161.1 120.7h1.1v1.1h-1.1zM151.5 78.5h1.1v1.1h-1.1zM163.4 121.1h1.1v1.1h-1.1zM146.7 81.6h1.1v1.1h-1.1zM157.4 121.4h1.1v1.1h-1.1zM163.4 116.7h1.1v1.1h-1.1zM155.2 121.9h1.1v1.1h-1.1zM147.9 80.9h1.1v1.1h-1.1zM153.7 80.7h1.1v1.1h-1.1zM136.3 114.9h1.1v1.1h-1.1zM137.3 88.6h1.1v1.1h-1.1zM157.8 122.1h1.1v1.1h-1.1zM143.4 82.7h1.1v1.1h-1.1zM146.1 80.4h1.1v1.1h-1.1zM163.8 117.1h1.1v1.1h-1.1zM158.2 120.1h1.1v1.1h-1.1zM163.2 117.1h1.1v1.1h-1.1zM154.2 81.0h1.1v1.1h-1.1zM136.1 113.6h1.1v1.1h-1.1zM154.4 120.9h1.1v1.1h-1.1zM162.9 116.8h1.1v1.1h-1.1zM147.5 122.4h1.1v1.1h-1.1zM136.6 88.6h1.1v1.1h-1.1zM155.4 81.8h1.1v1.1h-1.1zM141.0 81.3h1.1v1.1h-1.1zM165.7 118.0h1.1v1.1h-1.1zM159.4 119.4h1.1v1.1h-1.1zM145.6 82.3h1.1v1.1h-1.1zM153.4 123.6h1.1v1.1h-1.1zM155.5 120.6h1.1v1.1h-1.1zM131.0 99.4h1.1v1.1h-1.1zM159.6 79.7h1.1v1.1h-1.1zM170.9 107.7h1.1v1.1h-1.1zM164.1 118.1h1.1v1.1h-1.1zM152.9 80.7h1.1v1.1h-1.1zM155.4 122.6h1.1v1.1h-1.1zM139.6 75.9h1.1v1.1h-1.1zM142.0 81.9h1.1v1.1h-1.1zM151.8 126.1h1.1v1.1h-1.1zM163.8 120.6h1.1v1.1h-1.1zM147.4 79.3h1.1v1.1h-1.1zM152.5 75.1h1.1v1.1h-1.1zM173.0 88.9h1.1v1.1h-1.1zM166.2 89.0h1.1v1.1h-1.1zM143.9 81.4h1.1v1.1h-1.1zM148.8 80.9h1.1v1.1h-1.1zM140.2 119.8h1.1v1.1h-1.1zM160.5 119.8h1.1v1.1h-1.1zM154.4 123.8h1.1v1.1h-1.1zM158.9 120.0h1.1v1.1h-1.1zM158.2 123.6h1.1v1.1h-1.1zM168.9 116.6h1.1v1.1h-1.1zM138.1 87.8h1.1v1.1h-1.1zM140.1 83.2h1.1v1.1h-1.1zM144.6 80.3h1.1v1.1h-1.1zM139.0 118.4h1.1v1.1h-1.1zM149.8 126.3h1.1v1.1h-1.1zM155.2 120.6h1.1v1.1h-1.1zM153.5 122.2h1.1v1.1h-1.1zM135.1 83.5h1.1v1.1h-1.1zM137.1 88.9h1.1v1.1h-1.1zM172.4 106.2h1.1v1.1h-1.1zM142.1 82.5h1.1v1.1h-1.1zM170.5 96.9h1.1v1.1h-1.1zM133.2 105.2h1.1v1.1h-1.1zM149.0 81.7h1.1v1.1h-1.1zM162.8 117.5h1.1v1.1h-1.1zM163.0 81.3h1.1v1.1h-1.1zM155.8 80.4h1.1v1.1h-1.1zM153.5 122.3h1.1v1.1h-1.1zM161.6 81.5h1.1v1.1h-1.1zM142.5 83.5h1.1v1.1h-1.1zM146.4 80.0h1.1v1.1h-1.1zM170.0 93.4h1.1v1.1h-1.1zM160.1 76.3h1.1v1.1h-1.1zM151.7 80.9h1.1v1.1h-1.1zM156.1 122.3h1.1v1.1h-1.1zM148.7 125.5h1.1v1.1h-1.1zM143.1 78.3h1.1v1.1h-1.1zM134.4 90.5h1.1v1.1h-1.1zM137.4 84.3h1.1v1.1h-1.1zM158.5 122.7h1.1v1.1h-1.1zM155.2 80.9h1.1v1.1h-1.1zM139.0 83.0h1.1v1.1h-1.1zM160.9 120.5h1.1v1.1h-1.1zM153.6 124.2h1.1v1.1h-1.1zM131.7 93.2h1.1v1.1h-1.1zM164.0 115.3h1.1v1.1h-1.1zM143.5 81.0h1.1v1.1h-1.1zM155.0 125.6h1.1v1.1h-1.1zM148.8 124.2h1.1v1.1h-1.1zM138.6 87.4h1.1v1.1h-1.1zM138.6 87.3h1.1v1.1h-1.1zM153.0 80.0h1.1v1.1h-1.1zM158.1 120.9h1.1v1.1h-1.1zM162.2 122.4h1.1v1.1h-1.1zM137.4 81.7h1.1v1.1h-1.1zM157.1 123.8h1.1v1.1h-1.1zM151.8 78.7h1.1v1.1h-1.1zM141.7 123.1h1.1v1.1h-1.1zM149.4 80.1h1.1v1.1h-1.1zM136.6 82.2h1.1v1.1h-1.1zM152.5 77.8h1.1v1.1h-1.1zM141.9 79.8h1.1v1.1h-1.1zM154.8 122.8h1.1v1.1h-1.1zM145.6 81.2h1.1v1.1h-1.1zM141.5 84.7h1.1v1.1h-1.1zM164.1 118.3h1.1v1.1h-1.1zM171.8 102.9h1.1v1.1h-1.1zM149.4 81.3h1.1v1.1h-1.1zM146.3 80.6h1.1v1.1h-1.1zM154.4 82.1h1.1v1.1h-1.1zM146.0 82.7h1.1v1.1h-1.1zM144.3 81.5h1.1v1.1h-1.1zM153.2 123.9h1.1v1.1h-1.1zM150.7 79.3h1.1v1.1h-1.1zM154.2 122.0h1.1v1.1h-1.1zM157.7 121.8h1.1v1.1h-1.1zM147.2 122.2h1.1v1.1h-1.1zM146.4 81.0h1.1v1.1h-1.1zM153.3 121.9h1.1v1.1h-1.1zM149.9 78.1h1.1v1.1h-1.1zM148.6 79.9h1.1v1.1h-1.1zM151.6 122.0h1.1v1.1h-1.1zM163.6 117.5h1.1v1.1h-1.1zM166.9 116.9h1.1v1.1h-1.1zM158.6 120.0h1.1v1.1h-1.1zM168.6 95.1h1.1v1.1h-1.1zM142.6 84.2h1.1v1.1h-1.1zM148.8 123.3h1.1v1.1h-1.1zM144.3 83.3h1.1v1.1h-1.1zM142.6 81.2h1.1v1.1h-1.1zM156.4 82.0h1.1v1.1h-1.1zM162.2 117.2h1.1v1.1h-1.1zM147.2 121.2h1.1v1.1h-1.1zM141.5 84.6h1.1v1.1h-1.1zM150.1 123.3h1.1v1.1h-1.1zM139.2 80.9h1.1v1.1h-1.1zM151.8 121.8h1.1v1.1h-1.1zM175.1 106.1h1.1v1.1h-1.1zM147.7 80.9h1.1v1.1h-1.1zM138.6 86.8h1.1v1.1h-1.1zM147.5 124.4h1.1v1.1h-1.1zM147.7 81.7h1.1v1.1h-1.1zM150.2 123.1h1.1v1.1h-1.1zM132.1 111.2h1.1v1.1h-1.1zM147.0 78.6h1.1v1.1h-1.1zM156.1 120.4h1.1v1.1h-1.1zM132.7 86.5h1.1v1.1h-1.1zM153.8 82.0h1.1v1.1h-1.1zM139.2 81.7h1.1v1.1h-1.1zM148.1 121.9h1.1v1.1h-1.1zM149.1 79.9h1.1v1.1h-1.1zM144.9 80.6h1.1v1.1h-1.1zM160.5 121.1h1.1v1.1h-1.1zM161.5 120.8h1.1v1.1h-1.1zM160.2 118.7h1.1v1.1h-1.1zM144.2 82.2h1.1v1.1h-1.1zM159.3 118.9h1.1v1.1h-1.1zM149.0 123.2h1.1v1.1h-1.1zM151.7 80.6h1.1v1.1h-1.1zM137.2 87.2h1.1v1.1h-1.1zM155.6 120.8h1.1v1.1h-1.1zM168.4 115.1h1.1v1.1h-1.1zM149.7 76.9h1.1v1.1h-1.1zM134.1 86.4h1.1v1.1h-1.1zM144.5 82.9h1.1v1.1h-1.1zM134.1 117.5h1.1v1.1h-1.1zM149.5 79.4h1.1v1.1h-1.1zM158.7 120.9h1.1v1.1h-1.1zM155.2 82.3h1.1v1.1h-1.1zM157.0 124.3h1.1v1.1h-1.1zM147.9 79.7h1.1v1.1h-1.1zM153.8 122.1h1.1v1.1h-1.1zM155.8 126.0h1.1v1.1h-1.1zM138.6 85.3h1.1v1.1h-1.1zM153.3 123.0h1.1v1.1h-1.1zM151.1 123.0h1.1v1.1h-1.1zM155.6 81.7h1.1v1.1h-1.1zM150.7 123.5h1.1v1.1h-1.1zM159.2 81.6h1.1v1.1h-1.1zM160.2 119.3h1.1v1.1h-1.1zM149.1 121.2h1.1v1.1h-1.1zM157.0 121.2h1.1v1.1h-1.1zM140.1 85.8h1.1v1.1h-1.1zM155.5 82.3h1.1v1.1h-1.1zM135.1 91.0h1.1v1.1h-1.1zM157.6 124.1h1.1v1.1h-1.1zM150.9 127.6h1.1v1.1h-1.1zM152.3 123.6h1.1v1.1h-1.1zM151.0 81.1h1.1v1.1h-1.1zM162.3 85.6h1.1v1.1h-1.1zM153.4 125.0h1.1v1.1h-1.1zM138.9 117.6h1.1v1.1h-1.1z" fill="#000" opacity="0.5" filter="url(#bl05)"/></svg><div class="a" style="left:312px;top:331px;width:6px;height:174px;background:#c4c4c4;"></div><svg style="left:312px;top:505px;" width="6" height="25" viewBox="0 0 6 25"><path d="M0.5 14L3 11L5.5 14Z" fill="#e8e8e8"/><path d="M0.5 20L3 23L5.5 20Z" fill="#e8e8e8"/></svg><div class="a" style="left:16px;top:530px;width:302px;height:1px;background:#5a5a5a;"></div><div class="a" style="left:26px;top:531px;width:292px;height:8px;background:#b4b4b4;"></div><svg style="left:19.5px;top:497px;" width="10" height="35" viewBox="0 0 10 35"><path d="M1.5 1.5L6.5 6.5" stroke="#d0d0d0" stroke-width="0.8"/><path d="M7.5 4V7.5H4" fill="none" stroke="#d0d0d0" stroke-width="0.8"/><rect x="2" y="10.5" width="5.5" height="5.5" fill="none" stroke="#d0d0d0" stroke-width="0.7"/><path d="M1 9.5L8.5 17M8.5 9.5L1 17" stroke="#d0d0d0" stroke-width="0.7"/><circle cx="3.8" cy="23" r="2.4" fill="none" stroke="#d0d0d0" stroke-width="0.7"/><rect x="4" y="19" width="4" height="4" fill="none" stroke="#d0d0d0" stroke-width="0.7"/><circle cx="4.7" cy="30.5" r="2.8" fill="none" stroke="#d0d0d0" stroke-width="0.8"/><circle cx="4.7" cy="30.5" r="0.9" fill="none" stroke="#d0d0d0" stroke-width="0.6"/></svg><div class="a" style="left:317.5px;top:321px;width:2px;height:234px;background:#383838;"></div><div class="a" style="left:319px;top:321px;width:394px;height:13.5px;background:#626262;border-top:1px solid #4a4a4a"></div><div class="a" style="left:319px;top:334px;width:394px;height:221px;background:#c2c2c3;border-top:1.5px solid #d2d2d2;border-left:1.5px solid #cdcdcd"></div><div class="a" style="left:713px;top:321px;width:2px;height:234px;background:#383838;"></div><svg style="left:320.7px;top:323.9px;" width="10" height="10" viewBox="0 0 10 10"><rect x="0.3" y="0.3" width="9.4" height="9.4" rx="1" fill="#4a3ad0"/><rect x="1.5" y="1.3" width="3" height="2" fill="#a0a0c8"/><rect x="5.8" y="1.3" width="3" height="2" fill="#d06070"/><rect x="1.5" y="6.8" width="3.5" height="2" fill="#e06a50"/><rect x="6" y="6.8" width="2.5" height="2" fill="#e0e0f0"/><path d="M5 5C4 3.3 1.5 3.3 1.5 5C1.5 6.7 4 6.7 5 5C6 3.3 8.5 3.3 8.5 5C8.5 6.7 6 6.7 5 5Z" fill="#30e030"/><circle cx="3" cy="5" r="0.6" fill="#a050a0"/><circle cx="7" cy="5" r="0.6" fill="#a050a0"/></svg><div class="t" style="left:493px;top:325.60px;font-size:7.45px;color:#a4a4a4;font-weight:bold">PixelMath</div><svg style="left:692.75px;top:325px;" width="6" height="6" viewBox="0 0 6 6"><rect x="0.2" y="0.8" width="5.1" height="1.4" fill="#e6e6e6"/><path d="M1.6 2.2H3.9L5.3 5.3H0.2Z" fill="#e6e6e6"/></svg><svg style="left:704.25px;top:325px;" width="6" height="6" viewBox="0 0 6 6"><path d="M0.4 0.4L5.1 5.6M5.1 0.4L0.4 5.6" stroke="#e6e6e6" stroke-width="1.2"/></svg><div class="a" style="left:323.5px;top:339px;width:384px;height:10px;background:#adaaa2;"></div><div class="t" style="left:325.8px;top:341.40px;font-size:6.4px;color:#3d6fb6;">Expressions</div><svg style="left:699.0px;top:340.2px;" width="6" height="7" viewBox="0 0 6 7"><path d="M2.7 0.2L5.1 3.1H0.3ZM2.7 2.7L5.4 6.2H0Z" fill="#1862c8"/></svg><div class="a" style="left:323.5px;top:445px;width:384px;height:10px;background:#adaaa2;"></div><div class="t" style="left:325.8px;top:447.40px;font-size:6.4px;color:#3d6fb6;">Destination</div><svg style="left:699.0px;top:446.2px;" width="6" height="7" viewBox="0 0 6 7"><path d="M2.7 0.2L5.1 3.1H0.3ZM2.7 2.7L5.4 6.2H0Z" fill="#1862c8"/></svg><div class="t" style="left:70.80000000000001px;width:300px;text-align:right;top:356.20px;font-size:6.2px;color:#2c2c2c;">RGB/K:</div><div class="a" style="left:372.8px;top:353.4px;width:322.5px;height:10.3px;background:#dadada;border:1px solid #a8a8a8;border-radius:1px;overflow:hidden"></div><div class="t m" style="left:375.8px;top:356.00px;font-size:6.2px;color:#1e1e1e;">max(range_mask,star_mask)</div><svg style="left:698px;top:354.59999999999997px;" width="10" height="8" viewBox="0 0 10 8"><path d="M0.5 4L3 0.8H9.5V7.2H3Z" fill="#303030"/><path d="M4.5 2L7.5 6M7.5 2L4.5 6" stroke="#c3c3c3" stroke-width="1"/></svg><div class="t" style="left:70.80000000000001px;width:300px;text-align:right;top:369.10px;font-size:6.2px;color:#9a9a9a;">G:</div><div class="a" style="left:372.8px;top:366.3px;width:322.5px;height:10.3px;background:#b6b6b6;border:1px solid #a0a0a0;border-radius:1px;overflow:hidden"></div><svg style="left:698px;top:367.5px;" width="10" height="8" viewBox="0 0 10 8"><path d="M0.5 4L3 0.8H9.5V7.2H3Z" fill="#a0a0a0"/><path d="M4.5 2L7.5 6M7.5 2L4.5 6" stroke="#c3c3c3" stroke-width="1"/></svg><div class="t" style="left:70.80000000000001px;width:300px;text-align:right;top:381.80px;font-size:6.2px;color:#9a9a9a;">B:</div><div class="a" style="left:372.8px;top:379px;width:322.5px;height:10.3px;background:#b6b6b6;border:1px solid #a0a0a0;border-radius:1px;overflow:hidden"></div><svg style="left:698px;top:380.2px;" width="10" height="8" viewBox="0 0 10 8"><path d="M0.5 4L3 0.8H9.5V7.2H3Z" fill="#a0a0a0"/><path d="M4.5 2L7.5 6M7.5 2L4.5 6" stroke="#c3c3c3" stroke-width="1"/></svg><div class="t" style="left:70.80000000000001px;width:300px;text-align:right;top:394.80px;font-size:6.2px;color:#2c2c2c;">A:</div><div class="a" style="left:372.8px;top:392px;width:322.5px;height:10.3px;background:#dadada;border:1px solid #a8a8a8;border-radius:1px;overflow:hidden"></div><svg style="left:698px;top:393.2px;" width="10" height="8" viewBox="0 0 10 8"><path d="M0.5 4L3 0.8H9.5V7.2H3Z" fill="#303030"/><path d="M4.5 2L7.5 6M7.5 2L4.5 6" stroke="#c3c3c3" stroke-width="1"/></svg><div class="t" style="left:70.80000000000001px;width:300px;text-align:right;top:407.60px;font-size:6.2px;color:#2c2c2c;">Symbols:</div><div class="a" style="left:372.8px;top:404.8px;width:322.5px;height:10.3px;background:#dadada;border:1px solid #a8a8a8;border-radius:1px;overflow:hidden"></div><svg style="left:698px;top:406.0px;" width="10" height="8" viewBox="0 0 10 8"><path d="M0.5 4L3 0.8H9.5V7.2H3Z" fill="#303030"/><path d="M4.5 2L7.5 6M7.5 2L4.5 6" stroke="#c3c3c3" stroke-width="1"/></svg><div class="a" style="left:373.2px;top:417.8px;width:7.5px;height:7.5px;background:#e8e8e8;border:1px solid #8a8a8a"></div><svg style="left:373.2px;top:417.3px;" width="8" height="8" viewBox="0 0 8 8"><path d="M1.3 4L3.2 6L6.8 1.5" fill="none" stroke="#101010" stroke-width="1.3"/></svg><div class="t" style="left:383px;top:419.20px;font-size:6.2px;color:#2c2c2c;">Use a single RGB/K expression</div><div class="a" style="left:373px;top:428.3px;width:56px;height:12px;background:linear-gradient(#dedede,#c8c8c8);border:1px solid #9a9a9a;border-radius:1px"></div><div class="t" style="left:375.5px;top:431.90px;font-size:6.2px;color:#202020;">Expression Editor</div><div class="a" style="left:373.2px;top:459.5px;width:7.5px;height:7.5px;background:#e8e8e8;border:1px solid #8a8a8a"></div><svg style="left:373.2px;top:459.0px;" width="8" height="8" viewBox="0 0 8 8"><path d="M1.3 4L3.2 6L6.8 1.5" fill="none" stroke="#101010" stroke-width="1.3"/></svg><div class="t" style="left:383px;top:460.90px;font-size:6.2px;color:#2c2c2c;">Generate output</div><div class="a" style="left:373.2px;top:470px;width:7.5px;height:7.5px;background:#d2d2d2;border:1px solid #8a8a8a"></div><div class="t" style="left:383px;top:471.40px;font-size:6.2px;color:#2c2c2c;">Single threaded</div><div class="a" style="left:373.2px;top:480.5px;width:7.5px;height:7.5px;background:#d2d2d2;border:1px solid #8a8a8a"></div><div class="t" style="left:383px;top:481.90px;font-size:6.2px;color:#2c2c2c;">Use 64-bit working images</div><div class="a" style="left:373.2px;top:491px;width:7.5px;height:7.5px;background:#d2d2d2;border:1px solid #8a8a8a"></div><div class="t" style="left:383px;top:492.40px;font-size:6.2px;color:#2c2c2c;">Rescale result</div><div class="t" style="left:70.80000000000001px;width:300px;text-align:right;top:504.80px;font-size:6.2px;color:#9a9a9a;">Lower bound:</div><div class="a" style="left:373px;top:501.5px;width:60px;height:11px;background:#bcbcbc;border:1px solid #a4a4a4;border-radius:1px;overflow:hidden"><div class="t" style="left:1.5px;top:2.30px;font-size:6.2px;color:#9a9a9a;">0.000000000000000</div></div><div class="t" style="left:70.80000000000001px;width:300px;text-align:right;top:517.50px;font-size:6.2px;color:#9a9a9a;">Upper bound:</div><div class="a" style="left:373px;top:514.2px;width:60px;height:11px;background:#bcbcbc;border:1px solid #a4a4a4;border-radius:1px;overflow:hidden"><div class="t" style="left:1.5px;top:2.30px;font-size:6.2px;color:#9a9a9a;">1.000000000000000</div></div><div class="a" style="left:373.3px;top:528px;width:8px;height:8px;background:#ececec;border:1px solid #8a8a8a;border-radius:50%"></div><div class="t" style="left:383px;top:529.30px;font-size:6.2px;color:#2c2c2c;">Replace target image</div><div class="a" style="left:373.3px;top:538.5px;width:8px;height:8px;background:#ececec;border:1px solid #8a8a8a;border-radius:50%"></div><div class="a" style="left:375.8px;top:541px;width:3px;height:3px;background:#101010;border-radius:50%"></div><div class="t" style="left:383px;top:539.80px;font-size:6.2px;color:#2c2c2c;">Create new image</div><div class="t" style="left:70.80000000000001px;width:300px;text-align:right;top:551.10px;font-size:6.2px;color:#2c2c2c;">Image Id:</div><div class="a" style="left:373px;top:548.5px;width:322px;height:11px;background:#f4f4f4;border:1px solid #a8a8a8;border-radius:1px;overflow:hidden"></div><div class="t" style="left:375.5px;top:551.10px;font-size:6.2px;color:#2c2c2c;">&lt;Auto&gt;</div><svg style="left:698px;top:549.7px;" width="10" height="8" viewBox="0 0 10 8"><path d="M0.5 4L3 0.8H9.5V7.2H3Z" fill="#303030"/><path d="M4.5 2L7.5 6M7.5 2L4.5 6" stroke="#c3c3c3" stroke-width="1"/></svg><div class="a" style="left:715px;top:321px;width:220px;height:14px;background:#626262;border-top:1px solid #4a4a4a"></div><svg style="left:716px;top:323.5px;" width="10" height="10" viewBox="0 0 10 10"><rect width="10" height="10" fill="#6a78d8"/><path d="M0.5 9.5C2 9.5 2.5 8 3 5C3.3 2.5 3.7 1 4 1C4.3 1 4.5 4 5 7C5.5 9 7 9.3 9.5 9.5Z" fill="#f08a30"/><path d="M2 1V9.5M4.5 1V9.5M7 1V9.5M0.5 3H9.5M0.5 6H9.5" stroke="#a8b4f0" stroke-width="0.3"/></svg><div class="a" style="left:715px;top:335px;width:220px;height:220px;background:#c4c4c4;"></div><div class="a" style="left:933px;top:335px;width:2px;height:220px;background:#383838;"></div><svg style="left:719px;top:338px;" width="60" height="104" viewBox="0 0 60 104"><rect width="60" height="104" fill="#0e0e0e"/><path d="M0 26.5H60" stroke="#3a3a3a" stroke-width="1"/><path d="M0 52.5H60" stroke="#3a3a3a" stroke-width="1"/><path d="M0 78.5H60" stroke="#3a3a3a" stroke-width="1"/><path d="M25.5 0V104" stroke="#2c2c2c" stroke-width="0.8" stroke-dasharray="1 1.5"/><path d="M0 91.5H60" stroke="#2a2a2a" stroke-width="0.8" stroke-dasharray="1 1.5"/><path d="M0.5 0V104" stroke="#3a3a3a" stroke-width="0.8"/><path d="M0 52.5H60" stroke="#404040"/><polyline points="0.5,80 0.8,99 1,98.4 3,98.6 5,98.6 7,98.4 9,97.6 11,98.3 13,98.0 15,97.5 17,97.7 19,97.0 21,97.6 23,97.7 25,97.3 27,97.9 29,96.8 31,97.5 33,97.4 35,96.9 37,97.7 39,96.8 41,96.5 43,97.2 45,96.2 47,96.8 49,96.4 51,96.8 53,96.8 55,96.9 57,97.3 59,96.9" fill="none" stroke="#d0d0d0" stroke-width="0.6"/></svg><div class="a" style="left:717.7px;top:445.3px;width:9.8px;height:10.5px;background:#f4f4f4;border:1px solid #a0a0a0;border-radius:1px"></div><svg style="left:718.5px;top:446px;" width="40" height="9" viewBox="0 0 40 9"><path d="M4 0.5V3M4 5.5V8.5M0.5 4.2H3M5 4.2H7.7" stroke="#404040" stroke-width="0.9"/><path d="M4 3L3 1.8H5ZM4 5.5L3 6.6H5ZM3 4.2L1.8 3.2V5.2ZM5 4.2L6.2 3.2V5.2Z" fill="#404040"/><path d="M17 1H19.5V3.5M16.5 8H14V5.5M14 1H16.5M14 1V3.5M19.5 8H17M19.5 8V5.5" fill="none" stroke="#303030" stroke-width="1"/><path d="M15.3 2.3L18.2 6.7M18.2 2.3L15.3 6.7" stroke="#303030" stroke-width="0.9"/><path d="M25.5 0.5L28.3 3.5M33 0.5L30.2 3.5M25.5 8.5L28.3 5.5M33 8.5L30.2 5.5" stroke="#303030" stroke-width="1.1"/><path d="M28.3 3.5V2M28.3 3.5H26.8M30.2 3.5V2M30.2 3.5H31.7M28.3 5.5V7M28.3 5.5H26.8M30.2 5.5V7M30.2 5.5H31.7" stroke="#303030" stroke-width="0.9"/><path d="M39.5 2L37.5 4.5L39.5 7" fill="#303030"/></svg><svg style="left:719px;top:459px;" width="211" height="96" viewBox="0 0 211 96"><rect width="211" height="96" fill="#0e0e0e"/><path d="M0 27.5H211" stroke="#4a4a4a" stroke-width="0.8"/><path d="M0 46H211" stroke="#8a8a8a" stroke-width="1.3"/><path d="M0 53.5H211" stroke="#4a4a4a" stroke-width="0.8"/><path d="M0 79H211" stroke="#4a4a4a" stroke-width="0.8"/><path d="M52.5 0V96" stroke="#484848" stroke-width="0.8"/><path d="M65 0V96" stroke="#9a9a9a" stroke-width="1.1"/><path d="M79 0V96" stroke="#2e2e2e" stroke-width="0.8" stroke-dasharray="1 1.5"/><path d="M105.5 0V96" stroke="#484848" stroke-width="0.8"/><path d="M132 0V96" stroke="#2e2e2e" stroke-width="0.8" stroke-dasharray="1 1.5"/><path d="M157.5 0V96" stroke="#484848" stroke-width="0.8"/><path d="M198 0V96" stroke="#2e2e2e" stroke-width="0.8" stroke-dasharray="1 1.5"/><polyline points="0.0,3.2 1.3,1.8 2.6,2.1 3.9,4.7 5.2,4.1 6.5,6.3 7.8,4.3 9.1,4.3 10.4,8.1 11.7,5.4 13.0,8.8 14.3,8.6 15.6,10.9 16.9,11.4 18.2,10.8 19.5,8.7 20.8,9.3 22.1,11.9 23.4,14.1 24.7,11.5 26.0,13.7 27.3,12.8 28.6,14.5 29.9,13.8 31.2,15.6 32.5,16.8 33.8,15.7 35.1,18.6 36.4,15.8 37.7,16.8 39.0,17.3 40.3,18.3 41.6,20.3 42.9,18.8 44.2,20.6 45.5,22.0 46.8,18.9 48.1,22.4 49.4,21.6 50.7,22.6 52.0,22.3 53.3,21.8 54.6,20.8 55.9,21.3 57.2,21.8 58.5,22.2 59.8,22.4 61.1,22.9 62.4,24.7 63.7,25.8 65.0,26.2 66.3,26.6 67.6,23.6 68.9,27.0 70.2,24.4 71.5,24.1 72.8,25.3 74.1,26.8 75.4,24.7 76.7,25.7 78.0,26.7 79.3,28.8 80.6,27.2 81.9,27.5 83.2,27.5 84.5,26.5 85.8,30.2 87.1,30.6 88.4,29.9 89.7,28.8 91.0,29.2 92.3,28.8 93.6,30.6 94.9,30.8 96.2,29.5 97.5,32.2 98.8,31.8 100.1,29.8 101.4,32.5 102.7,32.0 104.0,30.3 105.3,30.6 106.6,32.7 107.9,29.9 109.2,31.6 110.5,34.0 111.8,31.0 113.1,32.2 114.4,34.1 115.7,34.1 117.0,33.8 118.3,32.8 119.6,34.7 120.9,31.8 122.2,34.6 123.5,32.2 124.8,33.0 126.1,32.5 127.4,30.7 128.7,32.1 130.0,31.5 131.3,32.8 132.6,31.1 133.9,29.8 135.2,29.2 136.5,31.1 137.8,28.4 139.1,29.2 140.4,28.7 141.7,29.2 143.0,25.2 144.3,26.6 145.6,23.8 146.9,25.2 148.2,24.6 149.5,24.3 150.8,24.2 152.1,20.8 153.4,23.3 154.7,20.8 156.0,20.8 157.3,19.3 158.6,20.9 159.9,18.3 161.2,19.4 162.5,20.8 163.8,20.9 165.1,18.1 166.4,20.6 167.7,18.8 169.0,17.5 170.3,19.6 171.6,19.3 172.9,17.9 174.2,17.9 175.5,18.0 176.8,17.8 178.1,18.2 179.4,18.5 180.7,16.4 182.0,15.9 183.3,16.6 184.6,17.8 185.9,19.3 187.2,21.3 188.5,19.3 189.8,19.4 191.1,21.5 192.4,24.7 193.7,24.5 195.0,24.7 196.3,28.2 197.6,30.7 198.9,33.6 200.2,37.2 201.5,42.0 202.8,46.8 204.1,51.7 205.4,57.7 206.7,66.6 208.0,75.5 209.3,84.4 210.6,93.3" fill="none" stroke="#d8d8d8" stroke-width="0.7"/><polyline points="92.0,96.0 93.2,80.2 94.4,74.9 95.6,71.0 96.8,67.8 98.0,65.0 99.2,62.6 100.4,60.3 101.6,58.3 102.8,56.4 104.0,54.6 105.2,52.9 106.4,51.3 107.6,49.7 108.8,48.3 110.0,46.9 111.2,45.5 112.4,44.2 113.6,43.0 114.8,41.7 116.0,40.6 117.2,39.4 118.4,38.3 119.6,37.2 120.8,36.1 122.0,35.1 123.2,34.1 124.4,33.1 125.6,32.1 126.8,31.2 128.0,30.3 129.2,29.4 130.4,28.5 131.6,27.6 132.8,26.7 134.0,25.9 135.2,25.0 136.4,24.2 137.6,23.4 138.8,22.6 140.0,21.8 141.2,21.0 142.4,20.3 143.6,19.5 144.8,18.8 146.0,18.1 147.2,17.3 148.4,16.6 149.6,15.9 150.8,15.2 152.0,14.5 153.2,13.9 154.4,13.2 155.6,12.5 156.8,11.9 158.0,11.2 159.2,10.6 160.4,9.9 161.6,9.3 162.8,8.7 164.0,8.0 165.2,7.4 166.4,6.8 167.6,6.2 168.8,5.6 170.0,5.0 171.2,4.5 172.4,3.9 173.6,3.3 174.8,2.7 176.0,2.2 177.2,1.6 178.4,1.0 179.6,0.5 180.8,-0.1 182.0,-0.6 183.2,-1.1 184.4,-1.7 185.6,-2.2 186.8,-2.7 188.0,-3.2 189.2,-3.8 190.4,-4.3 191.6,-4.8 192.8,-5.3 194.0,-5.8 195.2,-6.3 196.4,-6.8 197.6,-7.3 198.8,-7.8 200.0,-8.3 201.2,-8.8 202.4,-9.2 203.6,-9.7 204.8,-10.2 206.0,-10.7 207.2,-11.1 208.4,-11.6 209.6,-12.1 210.8,-12.5 212.0,-13.0" fill="none" stroke="#d0d0d0" stroke-width="0.8"/></svg><div class="a" style="left:759px;top:94px;width:254px;height:379px;background:#5561b4;"></div><div class="a" style="left:1010.5px;top:107px;width:2.5px;height:366px;background:linear-gradient(90deg,#8a94d0,#3c4898);"></div><div class="a" style="left:759px;top:471px;width:254px;height:2px;background:linear-gradient(#6a76c0,#3c4898);"></div><div class="a" style="left:760px;top:107px;width:251px;height:353px;background:#e5e5e5;border-top:1px solid #f2f2f2;border-left:1px solid #f0f0f0"></div><div class="a" style="left:760px;top:460px;width:251px;height:12px;background:#d5d2ca;"></div><svg style="left:762px;top:97px;" width="10" height="10" viewBox="0 0 10 10"><rect width="10" height="10" fill="#2a5ae0"/><rect x="0" y="0" width="10" height="5" fill="#3090f0"/><path d="M0 10C3 10 4 8 4.5 4C4.8 1.5 5 1 5 1C5 1 5.2 1.5 5.5 4C6 8 7 10 10 10Z" fill="#f08020"/><circle cx="2.3" cy="3" r="1" fill="#40e0e0"/><circle cx="7.7" cy="3" r="1" fill="#40e0e0"/><rect x="7" y="5" width="3" height="5" fill="#20c040" opacity="0.7"/></svg><div class="t" style="left:855.5px;top:98.20px;font-size:7.2px;color:#f4f4f4;font-weight:bold">Deconvolution</div><svg style="left:991.75px;top:98px;" width="6" height="6" viewBox="0 0 6 6"><rect x="0.2" y="0.8" width="5.1" height="1.4" fill="#f4f4f4"/><path d="M1.6 2.2H3.9L5.3 5.3H0.2Z" fill="#f4f4f4"/></svg><svg style="left:1002.75px;top:98px;" width="6" height="6" viewBox="0 0 6 6"><path d="M0.4 0.4L5.1 5.6M5.1 0.4L0.4 5.6" stroke="#f4f4f4" stroke-width="1.2"/></svg><div class="a" style="left:765px;top:112px;width:242px;height:10.3px;background:#d0ccc3;"></div><div class="t" style="left:766.5px;top:114.60px;font-size:6.4px;color:#3a78c4;">PSF</div><svg style="left:997.7px;top:113.8px;" width="6" height="7" viewBox="0 0 6 7"><path d="M2.7 0.2L5.1 3.1H0.3ZM2.7 2.7L5.4 6.2H0Z" fill="#1862c8"/></svg><div class="a" style="left:765px;top:139px;width:186.5px;height:57.5px;background:#e5e5e5;border:1px solid #acacac"></div><div class="a" style="left:765px;top:126.5px;width:51.5px;height:13px;background:linear-gradient(#efefef,#dcdcdc);border:1px solid #acacac"></div><div class="a" style="left:816px;top:126.5px;width:54.5px;height:13px;background:linear-gradient(#efefef,#dcdcdc);border:1px solid #acacac"></div><div class="a" style="left:870px;top:125px;width:44.5px;height:14.6px;background:#e9e9e9;border:1px solid #acacac;border-bottom:none"></div><div class="t" style="left:769.8px;top:130.20px;font-size:6.1px;color:#1e1e1e;">Parametric PSF</div><div class="t" style="left:820.7px;top:130.20px;font-size:6.1px;color:#1e1e1e;">Motion Blur PSF</div><div class="t" style="left:874.3px;top:129.80px;font-size:6.1px;color:#1e1e1e;">External PSF</div><div class="t" style="left:770.5px;top:159.10px;font-size:6.3px;color:#1e1e1e;">View Identifier</div><div class="a" style="left:770.5px;top:167.3px;width:161.5px;height:11.2px;background:#ffffff;border:1px solid #a6a6a6;border-radius:1px"></div><div class="t" style="left:773.3px;top:170.50px;font-size:6.3px;color:#202020;">PSF</div><svg style="left:936px;top:168.5px;" width="9" height="9" viewBox="0 0 9 9"><rect x="1" y="1.5" width="7" height="6" fill="#f8f8f8" stroke="#505050" stroke-width="0.8"/><rect x="1" y="1.5" width="7" height="1.5" fill="#505050"/></svg><svg style="left:953.5px;top:132.5px;" width="54" height="54" viewBox="0 0 54 54"><defs><radialGradient id="psfg"><stop offset="0" stop-color="#ffffff"/><stop offset="0.35" stop-color="#c0c0c0"/><stop offset="1" stop-color="#000" stop-opacity="0"/></radialGradient></defs><rect width="54" height="54" fill="#000"/><circle cx="27" cy="27" r="4" fill="url(#psfg)"/></svg><div class="t" style="left:953.8px;top:189.90px;font-size:6.3px;color:#1e1e1e;">165 x 165</div><div class="a" style="left:765px;top:200px;width:242px;height:10.3px;background:#d0ccc3;"></div><div class="t" style="left:766.5px;top:202.60px;font-size:6.4px;color:#3a78c4;">Algorithm</div><svg style="left:997.7px;top:201.79999999999998px;" width="6" height="7" viewBox="0 0 6 7"><path d="M2.7 0.2L5.1 3.1H0.3ZM2.7 2.7L5.4 6.2H0Z" fill="#1862c8"/></svg><div class="t" style="left:512.4px;width:300px;text-align:right;top:217.00px;font-size:6.3px;color:#1e1e1e;">Algorithm:</div><div class="a" style="left:814px;top:213.5px;width:192.3px;height:11px;background:linear-gradient(#f6f6f6,#e2e2e2);border:1px solid #a6a6a6;border-radius:1px"></div><div class="t" style="left:816.8px;top:216.70px;font-size:6.3px;color:#202020;">Regularized Richardson-Lucy</div><div class="a" style="left:996.3px;top:214.5px;width:1px;height:9px;background:#c8c8c8;"></div><svg style="left:998.3px;top:217.5px;" width="6" height="4" viewBox="0 0 6 4"><path d="M0.5 0.5H5.5L3 3.5Z" fill="#202020"/></svg><div class="t" style="left:512.4px;width:300px;text-align:right;top:230.00px;font-size:6.3px;color:#1e1e1e;">Iterations:</div><div class="a" style="left:814px;top:226.6px;width:20.5px;height:11px;background:#ffffff;border:1px solid #a6a6a6;border-radius:1px"></div><div class="t" style="left:816.8px;top:229.80px;font-size:6.3px;color:#202020;">25</div><svg style="left:834px;top:226.6px;" width="7" height="11" viewBox="0 0 7 11"><rect x="0.5" y="0.5" width="6" height="10" fill="#eee" stroke="#a6a6a6" stroke-width="0.8"/><path d="M1.5 4.5L3.5 2L5.5 4.5ZM1.5 6.5L3.5 9L5.5 6.5Z" fill="#202020"/></svg><div class="t" style="left:512.4px;width:300px;text-align:right;top:243.40px;font-size:6.3px;color:#1e1e1e;">Target:</div><div class="a" style="left:814px;top:240px;width:77px;height:11px;background:linear-gradient(#f6f6f6,#e2e2e2);border:1px solid #a6a6a6;border-radius:1px"></div><div class="t" style="left:816.8px;top:243.20px;font-size:6.3px;color:#202020;">Luminance (CIE Y)</div><div class="a" style="left:881px;top:241px;width:1px;height:9px;background:#c8c8c8;"></div><svg style="left:883px;top:244.0px;" width="6" height="4" viewBox="0 0 6 4"><path d="M0.5 0.5H5.5L3 3.5Z" fill="#202020"/></svg><div class="a" style="left:765px;top:254px;width:242px;height:10.3px;background:#d0ccc3;"></div><div class="a" style="left:766.2px;top:255.3px;width:7.5px;height:7.5px;background:#fafafa;border:1px solid #8a8a8a"></div><svg style="left:766.2px;top:254.8px;" width="8" height="8" viewBox="0 0 8 8"><path d="M1.3 4L3.2 6L6.8 1.5" fill="none" stroke="#101010" stroke-width="1.3"/></svg><div class="t" style="left:778px;top:256.60px;font-size:6.4px;color:#3a78c4;">Deringing</div><svg style="left:997.7px;top:255.8px;" width="6" height="7" viewBox="0 0 6 7"><path d="M2.7 0.2L5.1 3.1H0.3ZM2.7 2.7L5.4 6.2H0Z" fill="#1862c8"/></svg><div class="t" style="left:512.4px;width:300px;text-align:right;top:271.40px;font-size:6.3px;color:#1e1e1e;">Global dark:</div><div class="a" style="left:814px;top:268px;width:25.5px;height:11px;background:#ffffff;border:1px solid #a6a6a6;border-radius:1px"></div><div class="t" style="left:816.8px;top:271.20px;font-size:6.3px;color:#202020;">0.1000</div><div class="a" style="left:842px;top:272.1px;width:164.5px;height:3.2px;background:#dcdcdc;border:1px solid #a8a8a8;border-radius:2px"></div><div class="a" style="left:842px;top:272.1px;width:19px;height:3.2px;background:#9c9c9c;border-radius:2px"></div><div class="a" style="left:858px;top:270.6px;width:6px;height:6px;background:radial-gradient(circle at 40% 35%,#d8d8d8,#a4a4a4);border:1px solid #7c7c7c;border-radius:50%"></div><div class="t" style="left:512.4px;width:300px;text-align:right;top:284.20px;font-size:6.3px;color:#1e1e1e;">Global bright:</div><div class="a" style="left:814px;top:281px;width:25.5px;height:11px;background:#ffffff;border:1px solid #a6a6a6;border-radius:1px"></div><div class="t" style="left:816.8px;top:284.20px;font-size:6.3px;color:#202020;">0.0000</div><div class="a" style="left:842px;top:284.9px;width:164.5px;height:3.2px;background:#dcdcdc;border:1px solid #a8a8a8;border-radius:2px"></div><div class="a" style="left:842px;top:284.9px;width:3.5px;height:3.2px;background:#9c9c9c;border-radius:2px"></div><div class="a" style="left:842.5px;top:283.4px;width:6px;height:6px;background:radial-gradient(circle at 40% 35%,#d8d8d8,#a4a4a4);border:1px solid #7c7c7c;border-radius:50%"></div><div class="a" style="left:814.5px;top:293.2px;width:7.5px;height:7.5px;background:#fafafa;border:1px solid #8a8a8a"></div><svg style="left:814.5px;top:292.7px;" width="8" height="8" viewBox="0 0 8 8"><path d="M1.3 4L3.2 6L6.8 1.5" fill="none" stroke="#101010" stroke-width="1.3"/></svg><div class="t" style="left:824.5px;top:294.50px;font-size:6.3px;color:#1e1e1e;">Local deringing</div><div class="t" style="left:512.4px;width:300px;text-align:right;top:308.20px;font-size:6.3px;color:#1e1e1e;">Local support:</div><div class="a" style="left:814px;top:305px;width:180px;height:10.8px;background:#ffffff;border:1px solid #a6a6a6;border-radius:1px"></div><div class="t" style="left:816.8px;top:308.20px;font-size:6.3px;color:#202020;">Image12</div><svg style="left:997px;top:306px;" width="9" height="9" viewBox="0 0 9 9"><rect x="1" y="1.5" width="7" height="6" fill="#f8f8f8" stroke="#505050" stroke-width="0.8"/><rect x="1" y="1.5" width="7" height="1.5" fill="#505050"/></svg><div class="t" style="left:512.4px;width:300px;text-align:right;top:320.90px;font-size:6.3px;color:#1e1e1e;">Local amount:</div><div class="a" style="left:814px;top:317.5px;width:19.5px;height:10.5px;background:#ffffff;border:1px solid #a6a6a6;border-radius:1px"></div><div class="t" style="left:816.8px;top:320.70px;font-size:6.3px;color:#202020;">0.70</div><div class="a" style="left:836px;top:321.2px;width:170.5px;height:3.2px;background:#dcdcdc;border:1px solid #a8a8a8;border-radius:2px"></div><div class="a" style="left:836px;top:321.2px;width:118.5px;height:3.2px;background:#9c9c9c;border-radius:2px"></div><div class="a" style="left:951.5px;top:319.7px;width:6px;height:6px;background:radial-gradient(circle at 40% 35%,#d8d8d8,#a4a4a4);border:1px solid #7c7c7c;border-radius:50%"></div><div class="a" style="left:765px;top:331px;width:242px;height:10.3px;background:#d0ccc3;"></div><div class="a" style="left:766.2px;top:332.3px;width:7.5px;height:7.5px;background:#fafafa;border:1px solid #8a8a8a"></div><svg style="left:766.2px;top:331.8px;" width="8" height="8" viewBox="0 0 8 8"><path d="M1.3 4L3.2 6L6.8 1.5" fill="none" stroke="#101010" stroke-width="1.3"/></svg><div class="t" style="left:778px;top:333.60px;font-size:6.4px;color:#3a78c4;">Wavelet Regularization</div><svg style="left:997.7px;top:332.8px;" width="6" height="7" viewBox="0 0 6 7"><path d="M2.7 0.2L5.1 3.1H0.3ZM2.7 2.7L5.4 6.2H0Z" fill="#1862c8"/></svg><div class="t" style="left:512.4px;width:300px;text-align:right;top:348.00px;font-size:6.3px;color:#1e1e1e;">Noise model:</div><div class="a" style="left:814px;top:344.5px;width:46.5px;height:11px;background:linear-gradient(#f6f6f6,#e2e2e2);border:1px solid #a6a6a6;border-radius:1px"></div><div class="t" style="left:816.8px;top:347.70px;font-size:6.3px;color:#202020;">Poisson</div><div class="a" style="left:850.5px;top:345.5px;width:1px;height:9px;background:#c8c8c8;"></div><svg style="left:852.5px;top:348.5px;" width="6" height="4" viewBox="0 0 6 4"><path d="M0.5 0.5H5.5L3 3.5Z" fill="#202020"/></svg><div class="t" style="left:613.6px;width:300px;text-align:right;top:348.00px;font-size:6.3px;color:#1e1e1e;">Wavelet layers:</div><div class="a" style="left:916px;top:344.5px;width:11px;height:11px;background:#ffffff;border:1px solid #a6a6a6;border-radius:1px"></div><div class="t" style="left:918.8px;top:347.70px;font-size:6.3px;color:#202020;">4</div><svg style="left:926.5px;top:344.5px;" width="7" height="11" viewBox="0 0 7 11"><rect x="0.5" y="0.5" width="6" height="10" fill="#eee" stroke="#a6a6a6" stroke-width="0.8"/><path d="M1.5 4.5L3.5 2L5.5 4.5ZM1.5 6.5L3.5 9L5.5 6.5Z" fill="#202020"/></svg><div class="a" style="left:944px;top:344.5px;width:62.5px;height:11px;background:linear-gradient(#f6f6f6,#e2e2e2);border:1px solid #a6a6a6;border-radius:1px"></div><div class="t" style="left:946.8px;top:347.70px;font-size:6.3px;color:#202020;">B3 Spline (5)</div><div class="a" style="left:996.5px;top:345.5px;width:1px;height:9px;background:#c8c8c8;"></div><svg style="left:998.5px;top:348.5px;" width="6" height="4" viewBox="0 0 6 4"><path d="M0.5 0.5H5.5L3 3.5Z" fill="#202020"/></svg><div class="t" style="left:771.8px;top:359.80px;font-size:6.3px;color:#1e1e1e;">Noise threshold</div><div class="t" style="left:887px;top:359.80px;font-size:6.3px;color:#1e1e1e;">Noise reduction</div><div class="t" style="left:765px;top:371.00px;font-size:6.3px;color:#1e1e1e;">1:</div><div class="a" style="left:771px;top:367.7px;width:20.2px;height:11px;background:#ffffff;border:1px solid #a6a6a6;border-radius:1px"></div><div class="t" style="left:773.8px;top:370.90px;font-size:6.3px;color:#1e1e1e;">3.00</div><div class="a" style="left:793px;top:371.7px;width:92px;height:3.2px;background:#dcdcdc;border:1px solid #a8a8a8;border-radius:2px"></div><div class="a" style="left:793px;top:371.7px;width:18.5px;height:3.2px;background:#9c9c9c;border-radius:2px"></div><div class="a" style="left:808.5px;top:370.2px;width:6px;height:6px;background:radial-gradient(circle at 40% 35%,#d8d8d8,#a4a4a4);border:1px solid #7c7c7c;border-radius:50%"></div><div class="a" style="left:887px;top:367.7px;width:19.5px;height:11px;background:#ffffff;border:1px solid #a6a6a6;border-radius:1px"></div><div class="t" style="left:889.8px;top:370.90px;font-size:6.3px;color:#1e1e1e;">1.00</div><div class="a" style="left:908.5px;top:371.7px;width:98.0px;height:3.2px;background:#dcdcdc;border:1px solid #a8a8a8;border-radius:2px"></div><div class="a" style="left:908.5px;top:371.7px;width:95.10000000000002px;height:3.2px;background:#9c9c9c;border-radius:2px"></div><div class="a" style="left:1000.6px;top:370.2px;width:6px;height:6px;background:radial-gradient(circle at 40% 35%,#d8d8d8,#a4a4a4);border:1px solid #7c7c7c;border-radius:50%"></div><div class="t" style="left:765px;top:383.70px;font-size:6.3px;color:#1e1e1e;">2:</div><div class="a" style="left:771px;top:380.4px;width:20.2px;height:11px;background:#ffffff;border:1px solid #a6a6a6;border-radius:1px"></div><div class="t" style="left:773.8px;top:383.60px;font-size:6.3px;color:#1e1e1e;">2.00</div><div class="a" style="left:793px;top:384.4px;width:92px;height:3.2px;background:#dcdcdc;border:1px solid #a8a8a8;border-radius:2px"></div><div class="a" style="left:793px;top:384.4px;width:13.399999999999977px;height:3.2px;background:#9c9c9c;border-radius:2px"></div><div class="a" style="left:803.4px;top:382.9px;width:6px;height:6px;background:radial-gradient(circle at 40% 35%,#d8d8d8,#a4a4a4);border:1px solid #7c7c7c;border-radius:50%"></div><div class="a" style="left:887px;top:380.4px;width:19.5px;height:11px;background:#ffffff;border:1px solid #a6a6a6;border-radius:1px"></div><div class="t" style="left:889.8px;top:383.60px;font-size:6.3px;color:#1e1e1e;">0.70</div><div class="a" style="left:908.5px;top:384.4px;width:98.0px;height:3.2px;background:#dcdcdc;border:1px solid #a8a8a8;border-radius:2px"></div><div class="a" style="left:908.5px;top:384.4px;width:64.89999999999998px;height:3.2px;background:#9c9c9c;border-radius:2px"></div><div class="a" style="left:970.4px;top:382.9px;width:6px;height:6px;background:radial-gradient(circle at 40% 35%,#d8d8d8,#a4a4a4);border:1px solid #7c7c7c;border-radius:50%"></div><div class="t" style="left:765px;top:396.40px;font-size:6.3px;color:#1e1e1e;">3:</div><div class="a" style="left:771px;top:393.09999999999997px;width:20.2px;height:11px;background:#ffffff;border:1px solid #a6a6a6;border-radius:1px"></div><div class="t" style="left:773.8px;top:396.30px;font-size:6.3px;color:#1e1e1e;">1.00</div><div class="a" style="left:793px;top:397.09999999999997px;width:92px;height:3.2px;background:#dcdcdc;border:1px solid #a8a8a8;border-radius:2px"></div><div class="a" style="left:793px;top:397.09999999999997px;width:7.7000000000000455px;height:3.2px;background:#9c9c9c;border-radius:2px"></div><div class="a" style="left:797.7px;top:395.59999999999997px;width:6px;height:6px;background:radial-gradient(circle at 40% 35%,#d8d8d8,#a4a4a4);border:1px solid #7c7c7c;border-radius:50%"></div><div class="a" style="left:887px;top:393.09999999999997px;width:19.5px;height:11px;background:#ffffff;border:1px solid #a6a6a6;border-radius:1px"></div><div class="t" style="left:889.8px;top:396.30px;font-size:6.3px;color:#1e1e1e;">0.43</div><div class="a" style="left:908.5px;top:397.09999999999997px;width:98.0px;height:3.2px;background:#dcdcdc;border:1px solid #a8a8a8;border-radius:2px"></div><div class="a" style="left:908.5px;top:397.09999999999997px;width:36.5px;height:3.2px;background:#9c9c9c;border-radius:2px"></div><div class="a" style="left:942px;top:395.59999999999997px;width:6px;height:6px;background:radial-gradient(circle at 40% 35%,#d8d8d8,#a4a4a4);border:1px solid #7c7c7c;border-radius:50%"></div><div class="t" style="left:765px;top:409.10px;font-size:6.3px;color:#1e1e1e;">4:</div><div class="a" style="left:771px;top:405.79999999999995px;width:20.2px;height:11px;background:#ffffff;border:1px solid #a6a6a6;border-radius:1px"></div><div class="t" style="left:773.8px;top:409.00px;font-size:6.3px;color:#1e1e1e;">1.00</div><div class="a" style="left:793px;top:409.79999999999995px;width:92px;height:3.2px;background:#dcdcdc;border:1px solid #a8a8a8;border-radius:2px"></div><div class="a" style="left:793px;top:409.79999999999995px;width:7.7000000000000455px;height:3.2px;background:#9c9c9c;border-radius:2px"></div><div class="a" style="left:797.7px;top:408.29999999999995px;width:6px;height:6px;background:radial-gradient(circle at 40% 35%,#d8d8d8,#a4a4a4);border:1px solid #7c7c7c;border-radius:50%"></div><div class="a" style="left:887px;top:405.79999999999995px;width:19.5px;height:11px;background:#ffffff;border:1px solid #a6a6a6;border-radius:1px"></div><div class="t" style="left:889.8px;top:409.00px;font-size:6.3px;color:#1e1e1e;">0.40</div><div class="a" style="left:908.5px;top:409.79999999999995px;width:98.0px;height:3.2px;background:#dcdcdc;border:1px solid #a8a8a8;border-radius:2px"></div><div class="a" style="left:908.5px;top:409.79999999999995px;width:33.200000000000045px;height:3.2px;background:#9c9c9c;border-radius:2px"></div><div class="a" style="left:938.7px;top:408.29999999999995px;width:6px;height:6px;background:radial-gradient(circle at 40% 35%,#d8d8d8,#a4a4a4);border:1px solid #7c7c7c;border-radius:50%"></div><div class="t" style="left:765px;top:421.80px;font-size:6.3px;color:#a0a0a0;">5:</div><div class="a" style="left:771px;top:418.5px;width:20.2px;height:11px;background:#dcdcdc;border:1px solid #a6a6a6;border-radius:1px"></div><div class="t" style="left:773.8px;top:421.70px;font-size:6.3px;color:#a0a0a0;">1.00</div><div class="a" style="left:793px;top:422.5px;width:92px;height:3.2px;background:#dcdcdc;border:1px solid #a8a8a8;border-radius:2px"></div><div class="a" style="left:793px;top:422.5px;width:7.7000000000000455px;height:3.2px;background:#9c9c9c;border-radius:2px"></div><div class="a" style="left:797.7px;top:421.0px;width:6px;height:6px;background:radial-gradient(circle at 40% 35%,#d8d8d8,#5a5a5a);border:1px solid #7c7c7c;border-radius:50%"></div><div class="a" style="left:887px;top:418.5px;width:19.5px;height:11px;background:#dcdcdc;border:1px solid #a6a6a6;border-radius:1px"></div><div class="t" style="left:889.8px;top:421.70px;font-size:6.3px;color:#a0a0a0;">0.37</div><div class="a" style="left:908.5px;top:422.5px;width:98.0px;height:3.2px;background:#dcdcdc;border:1px solid #a8a8a8;border-radius:2px"></div><div class="a" style="left:908.5px;top:422.5px;width:30.100000000000023px;height:3.2px;background:#9c9c9c;border-radius:2px"></div><div class="a" style="left:935.6px;top:421.0px;width:6px;height:6px;background:radial-gradient(circle at 40% 35%,#d8d8d8,#5a5a5a);border:1px solid #7c7c7c;border-radius:50%"></div><div class="t" style="left:512.4px;width:300px;text-align:right;top:434.60px;font-size:6.3px;color:#1e1e1e;">Convergence:</div><div class="a" style="left:814px;top:431.3px;width:25.5px;height:11px;background:#ffffff;border:1px solid #a6a6a6;border-radius:1px"></div><div class="t" style="left:816.8px;top:434.50px;font-size:6.3px;color:#202020;">0.0000</div><div class="a" style="left:842px;top:435.1px;width:128px;height:3.2px;background:#dcdcdc;border:1px solid #a8a8a8;border-radius:2px"></div><div class="a" style="left:842px;top:435.1px;width:3.5px;height:3.2px;background:#9c9c9c;border-radius:2px"></div><div class="a" style="left:842.5px;top:433.6px;width:6px;height:6px;background:radial-gradient(circle at 40% 35%,#d8d8d8,#a4a4a4);border:1px solid #7c7c7c;border-radius:50%"></div><div class="a" style="left:972.5px;top:432.8px;width:7.5px;height:7.5px;background:#fafafa;border:1px solid #8a8a8a"></div><svg style="left:972.5px;top:432.3px;" width="8" height="8" viewBox="0 0 8 8"><path d="M1.3 4L3.2 6L6.8 1.5" fill="none" stroke="#101010" stroke-width="1.3"/></svg><div class="t" style="left:983px;top:434.40px;font-size:6.3px;color:#1e1e1e;">Disabled</div><div class="a" style="left:765px;top:446px;width:242px;height:10.3px;background:#d0ccc3;"></div><div class="t" style="left:766.5px;top:448.60px;font-size:6.4px;color:#3a78c4;">Dynamic Range Extension</div><svg style="left:997.7px;top:447.8px;" width="6" height="7" viewBox="0 0 6 7"><path d="M0 0.2H5.4L2.7 3.3ZM0.3 2.9H5.1L2.7 6.2Z" fill="#1862c8"/></svg><svg style="left:764px;top:461px;" width="20" height="10" viewBox="0 0 20 10"><path d="M1 1.5L7.5 8.5H1Z" fill="#1060d0"/><rect x="13" y="1.5" width="6" height="7" fill="#1060d0"/></svg><svg style="left:976px;top:462px;" width="34" height="9" viewBox="0 0 34 9"><rect x="1.3" y="1.3" width="5.5" height="5.8" fill="none" stroke="#1060d0" stroke-width="1.2"/><path d="M13.5 7.3V1.3H16.3L19 4.3V7.3Z" fill="none" stroke="#1060d0" stroke-width="1.2"/><path d="M25 0.8L31.5 7.8M31.5 0.8L25 7.8" stroke="#1060d0" stroke-width="1.1"/><path d="M24.5 0.6H27M29.5 0.6H32M24.5 8H27M29.5 8H32" stroke="#1060d0" stroke-width="1"/></svg><svg style="left:3.5px;top:541px;" width="3" height="13" viewBox="0 0 3 13"><rect x="0" y="0" width="2" height="1" fill="#b8b8b8"/><rect x="1" y="1" width="2" height="1" fill="#b8b8b8"/><rect x="0" y="2" width="2" height="1" fill="#b8b8b8"/><rect x="1" y="3" width="2" height="1" fill="#b8b8b8"/><rect x="0" y="4" width="2" height="1" fill="#b8b8b8"/><rect x="1" y="5" width="2" height="1" fill="#b8b8b8"/><rect x="0" y="6" width="2" height="1" fill="#b8b8b8"/><rect x="1" y="7" width="2" height="1" fill="#b8b8b8"/><rect x="0" y="8" width="2" height="1" fill="#b8b8b8"/><rect x="1" y="9" width="2" height="1" fill="#b8b8b8"/><rect x="0" y="10" width="2" height="1" fill="#b8b8b8"/><rect x="1" y="11" width="2" height="1" fill="#b8b8b8"/><rect x="0" y="12" width="2" height="1" fill="#b8b8b8"/></svg><div class="a" style="left:10.5px;top:541.5px;width:131px;height:11.5px;background:linear-gradient(#f8f8f8,#e4e4e4);border:1px solid #a8a8a8;border-radius:1px"></div><svg style="left:15px;top:543.5px;" width="8" height="8" viewBox="0 0 8 8"><rect x="0.5" y="0.5" width="7" height="6.5" fill="#fafafa" stroke="#404040" stroke-width="0.9"/><rect x="0.5" y="0.5" width="7" height="1.8" fill="#404040"/></svg><div class="t m" style="left:25.5px;top:544.90px;font-size:6.2px;color:#202020;">light_BINNING_1_DBE</div><div class="a" style="left:129.5px;top:542.5px;width:1px;height:9.5px;background:#c8c8c8;"></div><svg style="left:133px;top:546px;" width="6" height="4" viewBox="0 0 6 4"><path d="M0.5 0.5H5.5L3 3.5Z" fill="#202020"/></svg><div class="a" style="left:144px;top:541.5px;width:9.5px;height:11px;background:#fafafa;border:1px solid #8a8a8a"></div><svg style="left:145.5px;top:543.5px;" width="7" height="7" viewBox="0 0 7 7"><rect x="0.5" y="0.5" width="5.5" height="6" fill="none" stroke="#404040" stroke-width="0.9"/><rect x="0.5" y="0.5" width="2" height="6" fill="#404040"/></svg><svg style="left:159.5px;top:541px;" width="3" height="13" viewBox="0 0 3 13"><rect x="0" y="0" width="2" height="1" fill="#b8b8b8"/><rect x="1" y="1" width="2" height="1" fill="#b8b8b8"/><rect x="0" y="2" width="2" height="1" fill="#b8b8b8"/><rect x="1" y="3" width="2" height="1" fill="#b8b8b8"/><rect x="0" y="4" width="2" height="1" fill="#b8b8b8"/><rect x="1" y="5" width="2" height="1" fill="#b8b8b8"/><rect x="0" y="6" width="2" height="1" fill="#b8b8b8"/><rect x="1" y="7" width="2" height="1" fill="#b8b8b8"/><rect x="0" y="8" width="2" height="1" fill="#b8b8b8"/><rect x="1" y="9" width="2" height="1" fill="#b8b8b8"/><rect x="0" y="10" width="2" height="1" fill="#b8b8b8"/><rect x="1" y="11" width="2" height="1" fill="#b8b8b8"/><rect x="0" y="12" width="2" height="1" fill="#b8b8b8"/></svg><div class="a" style="left:167px;top:541.5px;width:10px;height:11px;background:linear-gradient(#6aa0f0,#2a60d0);border:1px solid #3050a0"></div><div class="a" style="left:179.5px;top:541.5px;width:10px;height:11px;background:linear-gradient(#808080,#3a3a3a);border:1px solid #505050"></div><div class="a" style="left:191.5px;top:541.5px;width:10px;height:11px;background:linear-gradient(#808080,#3a3a3a);border:1px solid #505050"></div><div class="a" style="left:204px;top:541.5px;width:10px;height:11px;background:linear-gradient(#808080,#3a3a3a);border:1px solid #505050"></div><svg style="left:219.0px;top:541px;" width="3" height="13" viewBox="0 0 3 13"><rect x="0" y="0" width="2" height="1" fill="#b8b8b8"/><rect x="1" y="1" width="2" height="1" fill="#b8b8b8"/><rect x="0" y="2" width="2" height="1" fill="#b8b8b8"/><rect x="1" y="3" width="2" height="1" fill="#b8b8b8"/><rect x="0" y="4" width="2" height="1" fill="#b8b8b8"/><rect x="1" y="5" width="2" height="1" fill="#b8b8b8"/><rect x="0" y="6" width="2" height="1" fill="#b8b8b8"/><rect x="1" y="7" width="2" height="1" fill="#b8b8b8"/><rect x="0" y="8" width="2" height="1" fill="#b8b8b8"/><rect x="1" y="9" width="2" height="1" fill="#b8b8b8"/><rect x="0" y="10" width="2" height="1" fill="#b8b8b8"/><rect x="1" y="11" width="2" height="1" fill="#b8b8b8"/><rect x="0" y="12" width="2" height="1" fill="#b8b8b8"/></svg><div class="a pl1" style="left:319px;top:531px;width:615px;height:8px"></div><div class="a pl2" style="left:319px;top:539px;width:615px;height:16px"></div><svg style="left:520px;top:542.5px;" width="6" height="7" viewBox="0 0 6 7"><path d="M0.5 0.5L5 3.5L0.5 6.5Z" fill="#c4c4c4"/></svg><svg style="left:535px;top:541px;" width="3" height="13" viewBox="0 0 3 13"><rect x="0" y="0" width="2" height="1" fill="#cccccc"/><rect x="1" y="1" width="2" height="1" fill="#cccccc"/><rect x="0" y="2" width="2" height="1" fill="#cccccc"/><rect x="1" y="3" width="2" height="1" fill="#cccccc"/><rect x="0" y="4" width="2" height="1" fill="#cccccc"/><rect x="1" y="5" width="2" height="1" fill="#cccccc"/><rect x="0" y="6" width="2" height="1" fill="#cccccc"/><rect x="1" y="7" width="2" height="1" fill="#cccccc"/><rect x="0" y="8" width="2" height="1" fill="#cccccc"/><rect x="1" y="9" width="2" height="1" fill="#cccccc"/><rect x="0" y="10" width="2" height="1" fill="#cccccc"/><rect x="1" y="11" width="2" height="1" fill="#cccccc"/><rect x="0" y="12" width="2" height="1" fill="#cccccc"/></svg><svg style="left:323.5px;top:541px;" width="3" height="13" viewBox="0 0 3 13"><rect x="0" y="0" width="2" height="1" fill="#d4d4d4"/><rect x="1" y="1" width="2" height="1" fill="#d4d4d4"/><rect x="0" y="2" width="2" height="1" fill="#d4d4d4"/><rect x="1" y="3" width="2" height="1" fill="#d4d4d4"/><rect x="0" y="4" width="2" height="1" fill="#d4d4d4"/><rect x="1" y="5" width="2" height="1" fill="#d4d4d4"/><rect x="0" y="6" width="2" height="1" fill="#d4d4d4"/><rect x="1" y="7" width="2" height="1" fill="#d4d4d4"/><rect x="0" y="8" width="2" height="1" fill="#d4d4d4"/><rect x="1" y="9" width="2" height="1" fill="#d4d4d4"/><rect x="0" y="10" width="2" height="1" fill="#d4d4d4"/><rect x="1" y="11" width="2" height="1" fill="#d4d4d4"/><rect x="0" y="12" width="2" height="1" fill="#d4d4d4"/></svg><div class="t m" style="left:548px;top:544.80px;font-size:6.2px;color:#a8a8a8;">w:5202 · h:3465 · n:3 · f32 · RGB · 206.279 MiB</div><div class="a" style="left:934px;top:531px;width:66px;height:8px;background:#b6b6b6;"></div><svg style="left:1000px;top:531px;" width="16" height="8" viewBox="0 0 16 8"><path d="M5 1.5L2 4L5 6.5Z" fill="#e8e8e8"/><path d="M11 1.5L14 4L11 6.5Z" fill="#e8e8e8"/></svg><svg style="left:1016px;top:505px;" width="8" height="26" viewBox="0 0 8 26"><path d="M1.5 13L4 10L6.5 13Z" fill="#e8e8e8"/><path d="M1.5 19L4 22L6.5 19Z" fill="#e8e8e8"/></svg></body></html>
